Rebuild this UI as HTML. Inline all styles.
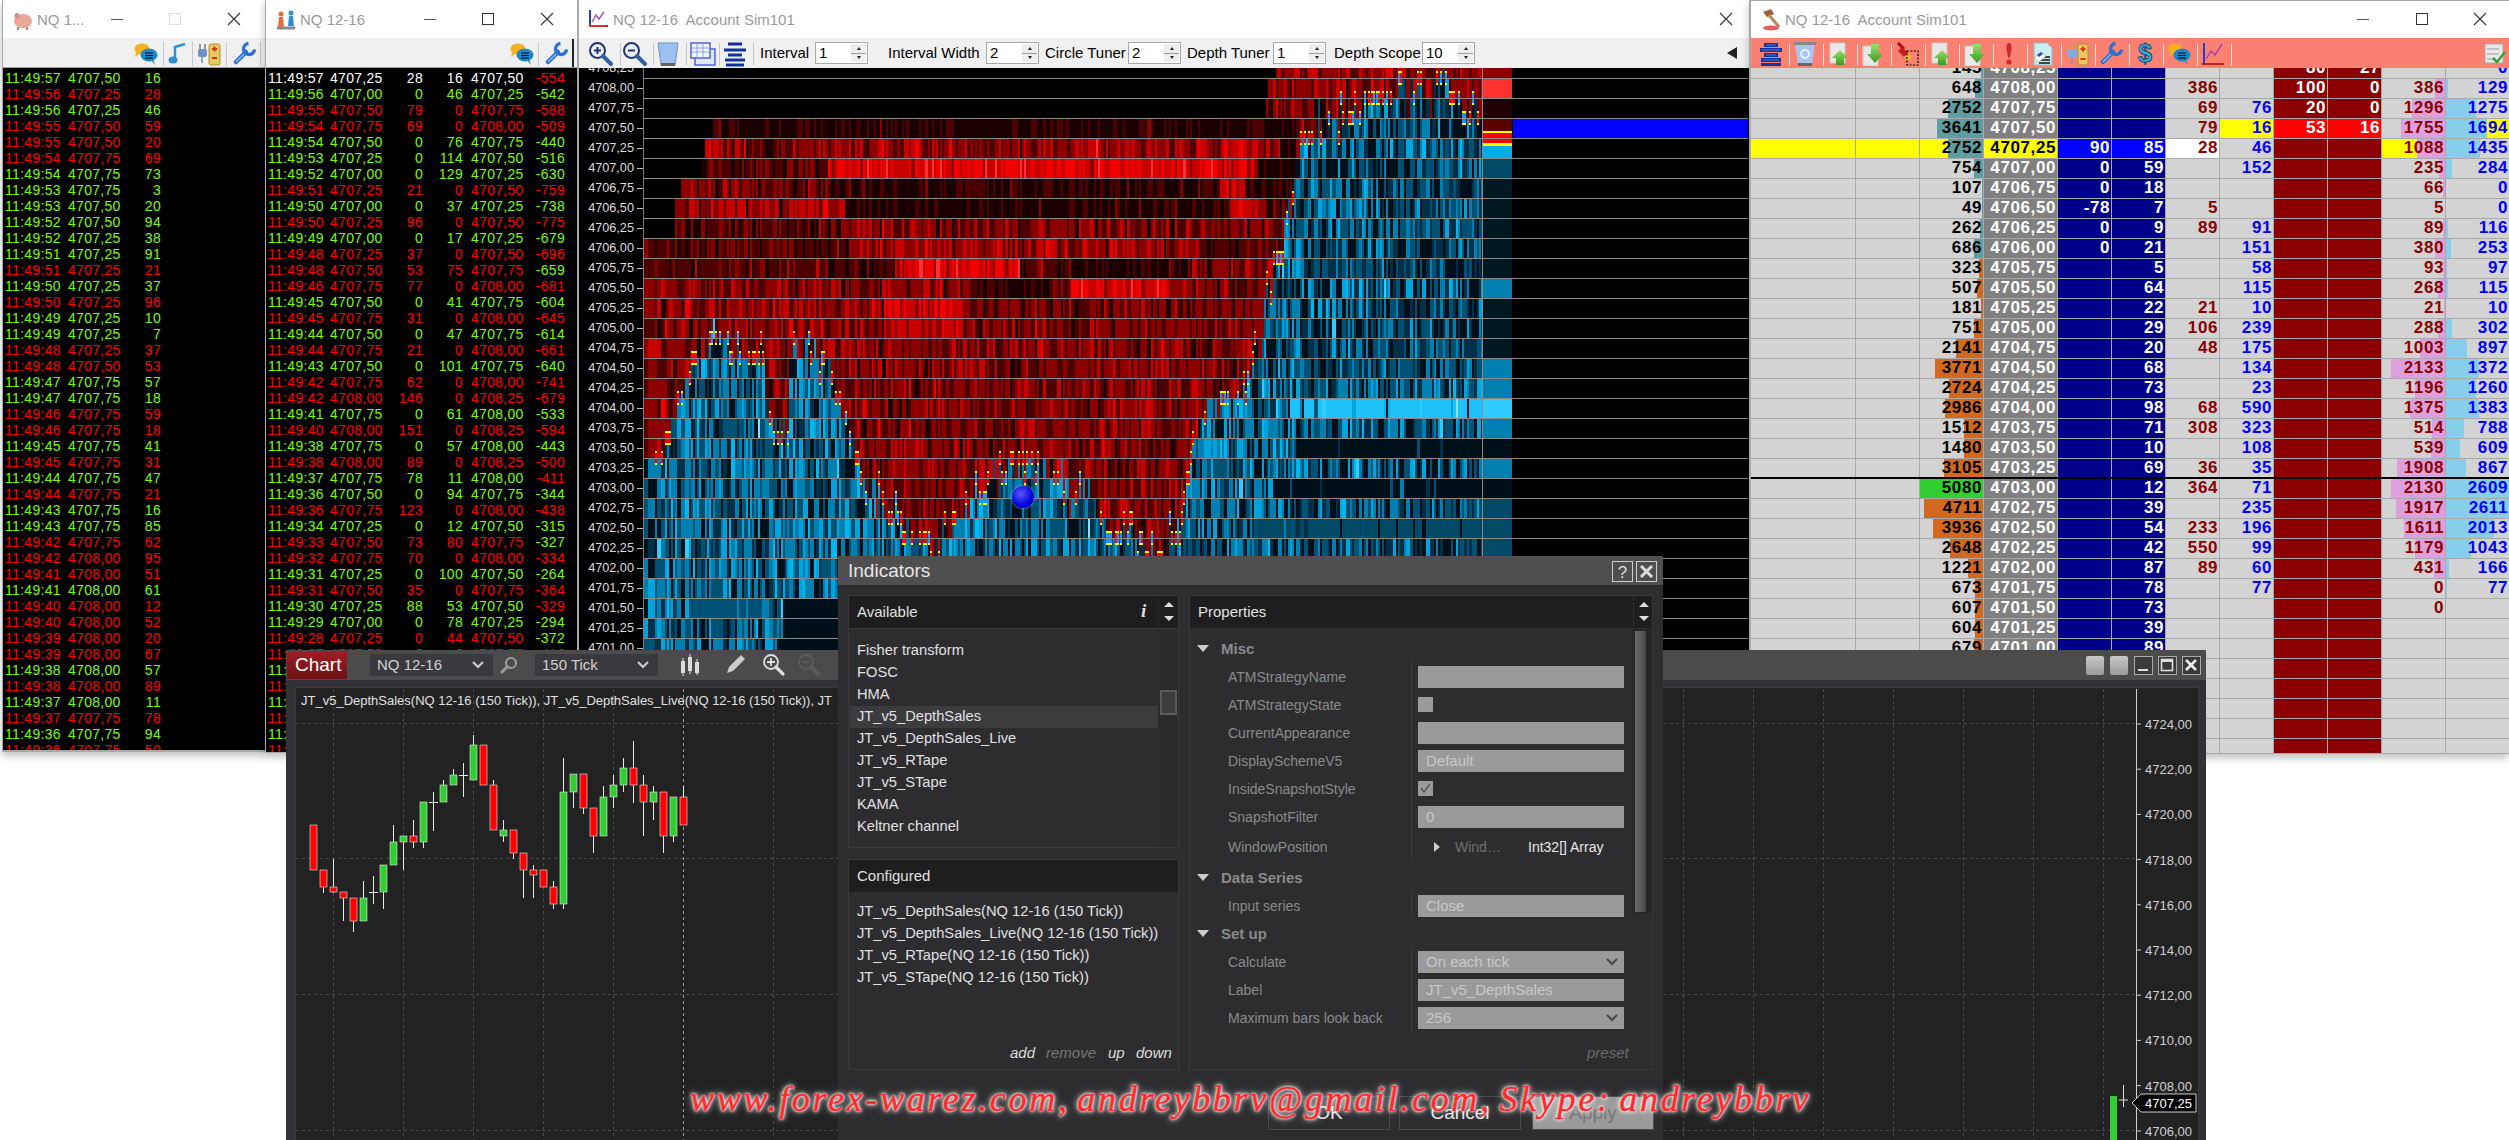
<!DOCTYPE html><html><head><meta charset="utf-8"><style>
*{margin:0;padding:0;box-sizing:border-box}
html,body{width:2509px;height:1140px;overflow:hidden;background:#fff;font-family:"Liberation Sans",sans-serif}
.a{position:absolute}
.ts{font-size:14px;line-height:16px;white-space:pre;letter-spacing:0.3px}
.g{color:#7cfc00}.r{color:#ff0000}.w{color:#fff}
.ttl{font-size:15px;line-height:20px;color:#9a9a9a;white-space:pre}
.dom{font-weight:bold;font-size:17px;line-height:20px;white-space:nowrap}
.ax{font-size:12.7px;line-height:16px;color:#ddd;white-space:nowrap}
.tb{font-size:15px;line-height:18px;color:#000;white-space:nowrap}
.dk{font-size:14px;line-height:18px;color:#e0e0e0;white-space:nowrap}
.pg{font-size:14px;line-height:18px;color:#8a8a8a;white-space:nowrap}
.clip{overflow:hidden}
</style></head><body>

<div class="a" style="left:2px;top:0px;width:264px;height:752px;background:#a9a9a9;box-shadow:0 4px 8px rgba(0,0,0,0.25);"></div>
<div class="a" style="left:3px;top:1px;width:262px;height:37px;background:#fff;"></div>
<div class="a" style="left:3px;top:38px;width:262px;height:29px;background:#f0f0f0;"></div>
<div class="a" style="left:3px;top:0px;width:262px;height:38px;background:#ffffff;"></div>
<div class="a ttl" style="left:37px;top:10px;">NQ 1...</div>
<svg class="a" style="left:227px;top:12px" width="14" height="14"><path d="M1 1L13 13M13 1L1 13" stroke="#333" stroke-width="1.1"/></svg>
<svg class="a" style="left:168px;top:12px" width="14" height="14"><rect x="1.5" y="1.5" width="11" height="11" fill="none" stroke="#ddd" stroke-width="1"/></svg>
<svg class="a" style="left:111px;top:12px" width="14" height="14"><path d="M0 7.5H12" stroke="#555" stroke-width="1"/></svg>
<svg class="a" style="left:12px;top:9px" width="22" height="22"><ellipse cx="11" cy="12" rx="9" ry="7" fill="#e8a898"/><ellipse cx="5" cy="7" rx="2.5" ry="3" fill="#d89080"/><path d="M6 18V21M15 18V21" stroke="#c08070" stroke-width="2"/></svg>
<div class="a" style="left:163px;top:42px;width:1px;height:24px;background:#c8c8c8;"></div>
<div class="a" style="left:192px;top:42px;width:1px;height:24px;background:#c8c8c8;"></div>
<div class="a" style="left:226px;top:42px;width:1px;height:24px;background:#c8c8c8;"></div>
<div class="a" style="left:260px;top:42px;width:1px;height:24px;background:#c8c8c8;"></div>
<svg class="a" style="left:133px;top:41px" width="26" height="25"><ellipse cx="9" cy="8" rx="7.5" ry="5.5" fill="#f5b020"/><path d="M3 11L2 16L7 12Z" fill="#f5b020"/><ellipse cx="16" cy="14" rx="8.5" ry="6.5" fill="#1a88c8"/><path d="M18 19L22 24L20 18Z" fill="#1a88c8"/><path d="M12 12H20M12 14.5H20M12 17H20" stroke="#000" stroke-width="1.2"/></svg>
<svg class="a" style="left:167px;top:41px" width="22" height="24"><path d="M8 19V6L18 3" stroke="#3090d0" stroke-width="2.5" fill="none"/><ellipse cx="6" cy="19" rx="4.5" ry="3.5" fill="#3090d0"/></svg>
<svg class="a" style="left:196px;top:41px" width="26" height="25"><path d="M4 3V9M9 3V9" stroke="#999" stroke-width="2"/><rect x="2" y="8" width="9" height="8" rx="2" fill="#7090c8"/><path d="M6 16V22" stroke="#889" stroke-width="1.5"/><rect x="13" y="3" width="11" height="21" rx="2" fill="#e8c860" stroke="#b09030"/><path d="M16 8H21M18.5 5.5V10.5" stroke="#e03020" stroke-width="2"/><path d="M16 17H21" stroke="#e03020" stroke-width="2"/></svg>
<svg class="a" style="left:232px;top:41px" width="24" height="25"><path d="M4 21L14 11" stroke="#2a70d0" stroke-width="4.5" stroke-linecap="round"/><path d="M4 21L14 11" stroke="#8ec0f8" stroke-width="1.2"/><path d="M16.5 2.5A5.5 5.5 0 1 0 22.5 8.5" stroke="#2a70d0" stroke-width="3.4" fill="none"/></svg>
<div class="a" style="left:3px;top:67px;width:262px;height:1px;background:#a0a0a0;"></div>
<div class="a" style="left:3px;top:68px;width:262px;height:682px;background:#000;"></div>
<div class="a clip" style="left:3px;top:68px;width:262px;height:682px">
<div class="a ts g" style="left:2px;top:2px;">11:49:57</div>
<div class="a ts g" style="left:65px;top:2px;">4707,50</div>
<div class="a ts g" style="left:-42px;top:2px;width:200px;text-align:right;">16</div>
<div class="a ts r" style="left:2px;top:18px;">11:49:56</div>
<div class="a ts r" style="left:65px;top:18px;">4707,25</div>
<div class="a ts r" style="left:-42px;top:18px;width:200px;text-align:right;">28</div>
<div class="a ts g" style="left:2px;top:34px;">11:49:56</div>
<div class="a ts g" style="left:65px;top:34px;">4707,25</div>
<div class="a ts g" style="left:-42px;top:34px;width:200px;text-align:right;">46</div>
<div class="a ts r" style="left:2px;top:50px;">11:49:55</div>
<div class="a ts r" style="left:65px;top:50px;">4707,50</div>
<div class="a ts r" style="left:-42px;top:50px;width:200px;text-align:right;">59</div>
<div class="a ts r" style="left:2px;top:66px;">11:49:55</div>
<div class="a ts r" style="left:65px;top:66px;">4707,50</div>
<div class="a ts r" style="left:-42px;top:66px;width:200px;text-align:right;">20</div>
<div class="a ts r" style="left:2px;top:82px;">11:49:54</div>
<div class="a ts r" style="left:65px;top:82px;">4707,75</div>
<div class="a ts r" style="left:-42px;top:82px;width:200px;text-align:right;">69</div>
<div class="a ts g" style="left:2px;top:98px;">11:49:54</div>
<div class="a ts g" style="left:65px;top:98px;">4707,75</div>
<div class="a ts g" style="left:-42px;top:98px;width:200px;text-align:right;">73</div>
<div class="a ts g" style="left:2px;top:114px;">11:49:53</div>
<div class="a ts g" style="left:65px;top:114px;">4707,75</div>
<div class="a ts g" style="left:-42px;top:114px;width:200px;text-align:right;">3</div>
<div class="a ts g" style="left:2px;top:130px;">11:49:53</div>
<div class="a ts g" style="left:65px;top:130px;">4707,50</div>
<div class="a ts g" style="left:-42px;top:130px;width:200px;text-align:right;">20</div>
<div class="a ts g" style="left:2px;top:146px;">11:49:52</div>
<div class="a ts g" style="left:65px;top:146px;">4707,50</div>
<div class="a ts g" style="left:-42px;top:146px;width:200px;text-align:right;">94</div>
<div class="a ts g" style="left:2px;top:162px;">11:49:52</div>
<div class="a ts g" style="left:65px;top:162px;">4707,25</div>
<div class="a ts g" style="left:-42px;top:162px;width:200px;text-align:right;">38</div>
<div class="a ts g" style="left:2px;top:178px;">11:49:51</div>
<div class="a ts g" style="left:65px;top:178px;">4707,25</div>
<div class="a ts g" style="left:-42px;top:178px;width:200px;text-align:right;">91</div>
<div class="a ts r" style="left:2px;top:194px;">11:49:51</div>
<div class="a ts r" style="left:65px;top:194px;">4707,25</div>
<div class="a ts r" style="left:-42px;top:194px;width:200px;text-align:right;">21</div>
<div class="a ts g" style="left:2px;top:210px;">11:49:50</div>
<div class="a ts g" style="left:65px;top:210px;">4707,25</div>
<div class="a ts g" style="left:-42px;top:210px;width:200px;text-align:right;">37</div>
<div class="a ts r" style="left:2px;top:226px;">11:49:50</div>
<div class="a ts r" style="left:65px;top:226px;">4707,25</div>
<div class="a ts r" style="left:-42px;top:226px;width:200px;text-align:right;">96</div>
<div class="a ts g" style="left:2px;top:242px;">11:49:49</div>
<div class="a ts g" style="left:65px;top:242px;">4707,25</div>
<div class="a ts g" style="left:-42px;top:242px;width:200px;text-align:right;">10</div>
<div class="a ts g" style="left:2px;top:258px;">11:49:49</div>
<div class="a ts g" style="left:65px;top:258px;">4707,25</div>
<div class="a ts g" style="left:-42px;top:258px;width:200px;text-align:right;">7</div>
<div class="a ts r" style="left:2px;top:274px;">11:49:48</div>
<div class="a ts r" style="left:65px;top:274px;">4707,25</div>
<div class="a ts r" style="left:-42px;top:274px;width:200px;text-align:right;">37</div>
<div class="a ts r" style="left:2px;top:290px;">11:49:48</div>
<div class="a ts r" style="left:65px;top:290px;">4707,50</div>
<div class="a ts r" style="left:-42px;top:290px;width:200px;text-align:right;">53</div>
<div class="a ts g" style="left:2px;top:306px;">11:49:47</div>
<div class="a ts g" style="left:65px;top:306px;">4707,75</div>
<div class="a ts g" style="left:-42px;top:306px;width:200px;text-align:right;">57</div>
<div class="a ts g" style="left:2px;top:322px;">11:49:47</div>
<div class="a ts g" style="left:65px;top:322px;">4707,75</div>
<div class="a ts g" style="left:-42px;top:322px;width:200px;text-align:right;">18</div>
<div class="a ts r" style="left:2px;top:338px;">11:49:46</div>
<div class="a ts r" style="left:65px;top:338px;">4707,75</div>
<div class="a ts r" style="left:-42px;top:338px;width:200px;text-align:right;">59</div>
<div class="a ts r" style="left:2px;top:354px;">11:49:46</div>
<div class="a ts r" style="left:65px;top:354px;">4707,75</div>
<div class="a ts r" style="left:-42px;top:354px;width:200px;text-align:right;">18</div>
<div class="a ts g" style="left:2px;top:370px;">11:49:45</div>
<div class="a ts g" style="left:65px;top:370px;">4707,75</div>
<div class="a ts g" style="left:-42px;top:370px;width:200px;text-align:right;">41</div>
<div class="a ts r" style="left:2px;top:386px;">11:49:45</div>
<div class="a ts r" style="left:65px;top:386px;">4707,75</div>
<div class="a ts r" style="left:-42px;top:386px;width:200px;text-align:right;">31</div>
<div class="a ts g" style="left:2px;top:402px;">11:49:44</div>
<div class="a ts g" style="left:65px;top:402px;">4707,75</div>
<div class="a ts g" style="left:-42px;top:402px;width:200px;text-align:right;">47</div>
<div class="a ts r" style="left:2px;top:418px;">11:49:44</div>
<div class="a ts r" style="left:65px;top:418px;">4707,75</div>
<div class="a ts r" style="left:-42px;top:418px;width:200px;text-align:right;">21</div>
<div class="a ts g" style="left:2px;top:434px;">11:49:43</div>
<div class="a ts g" style="left:65px;top:434px;">4707,75</div>
<div class="a ts g" style="left:-42px;top:434px;width:200px;text-align:right;">16</div>
<div class="a ts g" style="left:2px;top:450px;">11:49:43</div>
<div class="a ts g" style="left:65px;top:450px;">4707,75</div>
<div class="a ts g" style="left:-42px;top:450px;width:200px;text-align:right;">85</div>
<div class="a ts r" style="left:2px;top:466px;">11:49:42</div>
<div class="a ts r" style="left:65px;top:466px;">4707,75</div>
<div class="a ts r" style="left:-42px;top:466px;width:200px;text-align:right;">62</div>
<div class="a ts r" style="left:2px;top:482px;">11:49:42</div>
<div class="a ts r" style="left:65px;top:482px;">4708,00</div>
<div class="a ts r" style="left:-42px;top:482px;width:200px;text-align:right;">95</div>
<div class="a ts r" style="left:2px;top:498px;">11:49:41</div>
<div class="a ts r" style="left:65px;top:498px;">4708,00</div>
<div class="a ts r" style="left:-42px;top:498px;width:200px;text-align:right;">51</div>
<div class="a ts g" style="left:2px;top:514px;">11:49:41</div>
<div class="a ts g" style="left:65px;top:514px;">4708,00</div>
<div class="a ts g" style="left:-42px;top:514px;width:200px;text-align:right;">61</div>
<div class="a ts r" style="left:2px;top:530px;">11:49:40</div>
<div class="a ts r" style="left:65px;top:530px;">4708,00</div>
<div class="a ts r" style="left:-42px;top:530px;width:200px;text-align:right;">12</div>
<div class="a ts r" style="left:2px;top:546px;">11:49:40</div>
<div class="a ts r" style="left:65px;top:546px;">4708,00</div>
<div class="a ts r" style="left:-42px;top:546px;width:200px;text-align:right;">52</div>
<div class="a ts r" style="left:2px;top:562px;">11:49:39</div>
<div class="a ts r" style="left:65px;top:562px;">4708,00</div>
<div class="a ts r" style="left:-42px;top:562px;width:200px;text-align:right;">20</div>
<div class="a ts r" style="left:2px;top:578px;">11:49:39</div>
<div class="a ts r" style="left:65px;top:578px;">4708,00</div>
<div class="a ts r" style="left:-42px;top:578px;width:200px;text-align:right;">67</div>
<div class="a ts g" style="left:2px;top:594px;">11:49:38</div>
<div class="a ts g" style="left:65px;top:594px;">4708,00</div>
<div class="a ts g" style="left:-42px;top:594px;width:200px;text-align:right;">57</div>
<div class="a ts r" style="left:2px;top:610px;">11:49:38</div>
<div class="a ts r" style="left:65px;top:610px;">4708,00</div>
<div class="a ts r" style="left:-42px;top:610px;width:200px;text-align:right;">89</div>
<div class="a ts g" style="left:2px;top:626px;">11:49:37</div>
<div class="a ts g" style="left:65px;top:626px;">4708,00</div>
<div class="a ts g" style="left:-42px;top:626px;width:200px;text-align:right;">11</div>
<div class="a ts r" style="left:2px;top:642px;">11:49:37</div>
<div class="a ts r" style="left:65px;top:642px;">4707,75</div>
<div class="a ts r" style="left:-42px;top:642px;width:200px;text-align:right;">78</div>
<div class="a ts g" style="left:2px;top:658px;">11:49:36</div>
<div class="a ts g" style="left:65px;top:658px;">4707,75</div>
<div class="a ts g" style="left:-42px;top:658px;width:200px;text-align:right;">94</div>
<div class="a ts r" style="left:2px;top:674px;">11:49:36</div>
<div class="a ts r" style="left:65px;top:674px;">4707,75</div>
<div class="a ts r" style="left:-42px;top:674px;width:200px;text-align:right;">50</div>
</div>
<div class="a" style="left:265px;top:0px;width:314px;height:753px;background:#a9a9a9;box-shadow:0 4px 8px rgba(0,0,0,0.25);"></div>
<div class="a" style="left:266px;top:38px;width:312px;height:29px;background:#f0f0f0;"></div>
<div class="a" style="left:266px;top:0px;width:312px;height:38px;background:#ffffff;"></div>
<div class="a ttl" style="left:300px;top:10px;">NQ 12-16</div>
<svg class="a" style="left:540px;top:12px" width="14" height="14"><path d="M1 1L13 13M13 1L1 13" stroke="#333" stroke-width="1.1"/></svg>
<svg class="a" style="left:481px;top:12px" width="14" height="14"><rect x="1.5" y="1.5" width="11" height="11" fill="none" stroke="#333" stroke-width="1"/></svg>
<svg class="a" style="left:424px;top:12px" width="14" height="14"><path d="M0 7.5H12" stroke="#555" stroke-width="1"/></svg>
<svg class="a" style="left:274px;top:8px" width="24" height="24"><path d="M3 20H21" stroke="#888" stroke-width="3"/><circle cx="7" cy="6" r="2.5" fill="#e07040"/><path d="M5 9H9L10 19H4Z" fill="#e07040"/><circle cx="17" cy="5" r="2.5" fill="#3090d0"/><path d="M15 8H19L20 18H14Z" fill="#3090d0"/></svg>
<div class="a" style="left:538px;top:42px;width:1px;height:24px;background:#c8c8c8;"></div>
<div class="a" style="left:573px;top:42px;width:1px;height:24px;background:#c8c8c8;"></div>
<div class="a" style="left:572px;top:39px;width:2px;height:28px;background:#222;"></div>
<svg class="a" style="left:509px;top:41px" width="26" height="25"><ellipse cx="9" cy="8" rx="7.5" ry="5.5" fill="#f5b020"/><path d="M3 11L2 16L7 12Z" fill="#f5b020"/><ellipse cx="16" cy="14" rx="8.5" ry="6.5" fill="#1a88c8"/><path d="M18 19L22 24L20 18Z" fill="#1a88c8"/><path d="M12 12H20M12 14.5H20M12 17H20" stroke="#000" stroke-width="1.2"/></svg>
<svg class="a" style="left:544px;top:41px" width="24" height="25"><path d="M4 21L14 11" stroke="#2a70d0" stroke-width="4.5" stroke-linecap="round"/><path d="M4 21L14 11" stroke="#8ec0f8" stroke-width="1.2"/><path d="M16.5 2.5A5.5 5.5 0 1 0 22.5 8.5" stroke="#2a70d0" stroke-width="3.4" fill="none"/></svg>
<div class="a" style="left:266px;top:67px;width:312px;height:1px;background:#a0a0a0;"></div>
<div class="a" style="left:266px;top:68px;width:311px;height:684px;background:#000;"></div>
<div class="a clip" style="left:266px;top:68px;width:311px;height:684px">
<div class="a ts w" style="left:2px;top:2px;">11:49:57</div>
<div class="a ts w" style="left:64px;top:2px;">4707,25</div>
<div class="a ts w" style="left:-43px;top:2px;width:200px;text-align:right;">28</div>
<div class="a ts w" style="left:-3px;top:2px;width:200px;text-align:right;">16</div>
<div class="a ts w" style="left:205px;top:2px;">4707,50</div>
<div class="a ts r" style="left:99px;top:2px;width:200px;text-align:right;">-554</div>
<div class="a ts g" style="left:2px;top:18px;">11:49:56</div>
<div class="a ts g" style="left:64px;top:18px;">4707,00</div>
<div class="a ts g" style="left:-43px;top:18px;width:200px;text-align:right;">0</div>
<div class="a ts g" style="left:-3px;top:18px;width:200px;text-align:right;">46</div>
<div class="a ts g" style="left:205px;top:18px;">4707,25</div>
<div class="a ts g" style="left:99px;top:18px;width:200px;text-align:right;">-542</div>
<div class="a ts r" style="left:2px;top:34px;">11:49:55</div>
<div class="a ts r" style="left:64px;top:34px;">4707,50</div>
<div class="a ts r" style="left:-43px;top:34px;width:200px;text-align:right;">79</div>
<div class="a ts r" style="left:-3px;top:34px;width:200px;text-align:right;">0</div>
<div class="a ts r" style="left:205px;top:34px;">4707,75</div>
<div class="a ts r" style="left:99px;top:34px;width:200px;text-align:right;">-588</div>
<div class="a ts r" style="left:2px;top:50px;">11:49:54</div>
<div class="a ts r" style="left:64px;top:50px;">4707,75</div>
<div class="a ts r" style="left:-43px;top:50px;width:200px;text-align:right;">69</div>
<div class="a ts r" style="left:-3px;top:50px;width:200px;text-align:right;">0</div>
<div class="a ts r" style="left:205px;top:50px;">4708,00</div>
<div class="a ts r" style="left:99px;top:50px;width:200px;text-align:right;">-509</div>
<div class="a ts g" style="left:2px;top:66px;">11:49:54</div>
<div class="a ts g" style="left:64px;top:66px;">4707,50</div>
<div class="a ts g" style="left:-43px;top:66px;width:200px;text-align:right;">0</div>
<div class="a ts g" style="left:-3px;top:66px;width:200px;text-align:right;">76</div>
<div class="a ts g" style="left:205px;top:66px;">4707,75</div>
<div class="a ts g" style="left:99px;top:66px;width:200px;text-align:right;">-440</div>
<div class="a ts g" style="left:2px;top:82px;">11:49:53</div>
<div class="a ts g" style="left:64px;top:82px;">4707,25</div>
<div class="a ts g" style="left:-43px;top:82px;width:200px;text-align:right;">0</div>
<div class="a ts g" style="left:-3px;top:82px;width:200px;text-align:right;">114</div>
<div class="a ts g" style="left:205px;top:82px;">4707,50</div>
<div class="a ts g" style="left:99px;top:82px;width:200px;text-align:right;">-516</div>
<div class="a ts g" style="left:2px;top:98px;">11:49:52</div>
<div class="a ts g" style="left:64px;top:98px;">4707,00</div>
<div class="a ts g" style="left:-43px;top:98px;width:200px;text-align:right;">0</div>
<div class="a ts g" style="left:-3px;top:98px;width:200px;text-align:right;">129</div>
<div class="a ts g" style="left:205px;top:98px;">4707,25</div>
<div class="a ts g" style="left:99px;top:98px;width:200px;text-align:right;">-630</div>
<div class="a ts r" style="left:2px;top:114px;">11:49:51</div>
<div class="a ts r" style="left:64px;top:114px;">4707,25</div>
<div class="a ts r" style="left:-43px;top:114px;width:200px;text-align:right;">21</div>
<div class="a ts r" style="left:-3px;top:114px;width:200px;text-align:right;">0</div>
<div class="a ts r" style="left:205px;top:114px;">4707,50</div>
<div class="a ts r" style="left:99px;top:114px;width:200px;text-align:right;">-759</div>
<div class="a ts g" style="left:2px;top:130px;">11:49:50</div>
<div class="a ts g" style="left:64px;top:130px;">4707,00</div>
<div class="a ts g" style="left:-43px;top:130px;width:200px;text-align:right;">0</div>
<div class="a ts g" style="left:-3px;top:130px;width:200px;text-align:right;">37</div>
<div class="a ts g" style="left:205px;top:130px;">4707,25</div>
<div class="a ts g" style="left:99px;top:130px;width:200px;text-align:right;">-738</div>
<div class="a ts r" style="left:2px;top:146px;">11:49:50</div>
<div class="a ts r" style="left:64px;top:146px;">4707,25</div>
<div class="a ts r" style="left:-43px;top:146px;width:200px;text-align:right;">96</div>
<div class="a ts r" style="left:-3px;top:146px;width:200px;text-align:right;">0</div>
<div class="a ts r" style="left:205px;top:146px;">4707,50</div>
<div class="a ts r" style="left:99px;top:146px;width:200px;text-align:right;">-775</div>
<div class="a ts g" style="left:2px;top:162px;">11:49:49</div>
<div class="a ts g" style="left:64px;top:162px;">4707,00</div>
<div class="a ts g" style="left:-43px;top:162px;width:200px;text-align:right;">0</div>
<div class="a ts g" style="left:-3px;top:162px;width:200px;text-align:right;">17</div>
<div class="a ts g" style="left:205px;top:162px;">4707,25</div>
<div class="a ts g" style="left:99px;top:162px;width:200px;text-align:right;">-679</div>
<div class="a ts r" style="left:2px;top:178px;">11:49:48</div>
<div class="a ts r" style="left:64px;top:178px;">4707,25</div>
<div class="a ts r" style="left:-43px;top:178px;width:200px;text-align:right;">37</div>
<div class="a ts r" style="left:-3px;top:178px;width:200px;text-align:right;">0</div>
<div class="a ts r" style="left:205px;top:178px;">4707,50</div>
<div class="a ts r" style="left:99px;top:178px;width:200px;text-align:right;">-696</div>
<div class="a ts r" style="left:2px;top:194px;">11:49:48</div>
<div class="a ts r" style="left:64px;top:194px;">4707,50</div>
<div class="a ts r" style="left:-43px;top:194px;width:200px;text-align:right;">53</div>
<div class="a ts r" style="left:-3px;top:194px;width:200px;text-align:right;">75</div>
<div class="a ts r" style="left:205px;top:194px;">4707,75</div>
<div class="a ts g" style="left:99px;top:194px;width:200px;text-align:right;">-659</div>
<div class="a ts r" style="left:2px;top:210px;">11:49:46</div>
<div class="a ts r" style="left:64px;top:210px;">4707,75</div>
<div class="a ts r" style="left:-43px;top:210px;width:200px;text-align:right;">77</div>
<div class="a ts r" style="left:-3px;top:210px;width:200px;text-align:right;">0</div>
<div class="a ts r" style="left:205px;top:210px;">4708,00</div>
<div class="a ts r" style="left:99px;top:210px;width:200px;text-align:right;">-681</div>
<div class="a ts g" style="left:2px;top:226px;">11:49:45</div>
<div class="a ts g" style="left:64px;top:226px;">4707,50</div>
<div class="a ts g" style="left:-43px;top:226px;width:200px;text-align:right;">0</div>
<div class="a ts g" style="left:-3px;top:226px;width:200px;text-align:right;">41</div>
<div class="a ts g" style="left:205px;top:226px;">4707,75</div>
<div class="a ts g" style="left:99px;top:226px;width:200px;text-align:right;">-604</div>
<div class="a ts r" style="left:2px;top:242px;">11:49:45</div>
<div class="a ts r" style="left:64px;top:242px;">4707,75</div>
<div class="a ts r" style="left:-43px;top:242px;width:200px;text-align:right;">31</div>
<div class="a ts r" style="left:-3px;top:242px;width:200px;text-align:right;">0</div>
<div class="a ts r" style="left:205px;top:242px;">4708,00</div>
<div class="a ts r" style="left:99px;top:242px;width:200px;text-align:right;">-645</div>
<div class="a ts g" style="left:2px;top:258px;">11:49:44</div>
<div class="a ts g" style="left:64px;top:258px;">4707,50</div>
<div class="a ts g" style="left:-43px;top:258px;width:200px;text-align:right;">0</div>
<div class="a ts g" style="left:-3px;top:258px;width:200px;text-align:right;">47</div>
<div class="a ts g" style="left:205px;top:258px;">4707,75</div>
<div class="a ts g" style="left:99px;top:258px;width:200px;text-align:right;">-614</div>
<div class="a ts r" style="left:2px;top:274px;">11:49:44</div>
<div class="a ts r" style="left:64px;top:274px;">4707,75</div>
<div class="a ts r" style="left:-43px;top:274px;width:200px;text-align:right;">21</div>
<div class="a ts r" style="left:-3px;top:274px;width:200px;text-align:right;">0</div>
<div class="a ts r" style="left:205px;top:274px;">4708,00</div>
<div class="a ts r" style="left:99px;top:274px;width:200px;text-align:right;">-661</div>
<div class="a ts g" style="left:2px;top:290px;">11:49:43</div>
<div class="a ts g" style="left:64px;top:290px;">4707,50</div>
<div class="a ts g" style="left:-43px;top:290px;width:200px;text-align:right;">0</div>
<div class="a ts g" style="left:-3px;top:290px;width:200px;text-align:right;">101</div>
<div class="a ts g" style="left:205px;top:290px;">4707,75</div>
<div class="a ts g" style="left:99px;top:290px;width:200px;text-align:right;">-640</div>
<div class="a ts r" style="left:2px;top:306px;">11:49:42</div>
<div class="a ts r" style="left:64px;top:306px;">4707,75</div>
<div class="a ts r" style="left:-43px;top:306px;width:200px;text-align:right;">62</div>
<div class="a ts r" style="left:-3px;top:306px;width:200px;text-align:right;">0</div>
<div class="a ts r" style="left:205px;top:306px;">4708,00</div>
<div class="a ts r" style="left:99px;top:306px;width:200px;text-align:right;">-741</div>
<div class="a ts r" style="left:2px;top:322px;">11:49:42</div>
<div class="a ts r" style="left:64px;top:322px;">4708,00</div>
<div class="a ts r" style="left:-43px;top:322px;width:200px;text-align:right;">146</div>
<div class="a ts r" style="left:-3px;top:322px;width:200px;text-align:right;">0</div>
<div class="a ts r" style="left:205px;top:322px;">4708,25</div>
<div class="a ts r" style="left:99px;top:322px;width:200px;text-align:right;">-679</div>
<div class="a ts g" style="left:2px;top:338px;">11:49:41</div>
<div class="a ts g" style="left:64px;top:338px;">4707,75</div>
<div class="a ts g" style="left:-43px;top:338px;width:200px;text-align:right;">0</div>
<div class="a ts g" style="left:-3px;top:338px;width:200px;text-align:right;">61</div>
<div class="a ts g" style="left:205px;top:338px;">4708,00</div>
<div class="a ts g" style="left:99px;top:338px;width:200px;text-align:right;">-533</div>
<div class="a ts r" style="left:2px;top:354px;">11:49:40</div>
<div class="a ts r" style="left:64px;top:354px;">4708,00</div>
<div class="a ts r" style="left:-43px;top:354px;width:200px;text-align:right;">151</div>
<div class="a ts r" style="left:-3px;top:354px;width:200px;text-align:right;">0</div>
<div class="a ts r" style="left:205px;top:354px;">4708,25</div>
<div class="a ts r" style="left:99px;top:354px;width:200px;text-align:right;">-594</div>
<div class="a ts g" style="left:2px;top:370px;">11:49:38</div>
<div class="a ts g" style="left:64px;top:370px;">4707,75</div>
<div class="a ts g" style="left:-43px;top:370px;width:200px;text-align:right;">0</div>
<div class="a ts g" style="left:-3px;top:370px;width:200px;text-align:right;">57</div>
<div class="a ts g" style="left:205px;top:370px;">4708,00</div>
<div class="a ts g" style="left:99px;top:370px;width:200px;text-align:right;">-443</div>
<div class="a ts r" style="left:2px;top:386px;">11:49:38</div>
<div class="a ts r" style="left:64px;top:386px;">4708,00</div>
<div class="a ts r" style="left:-43px;top:386px;width:200px;text-align:right;">89</div>
<div class="a ts r" style="left:-3px;top:386px;width:200px;text-align:right;">0</div>
<div class="a ts r" style="left:205px;top:386px;">4708,25</div>
<div class="a ts r" style="left:99px;top:386px;width:200px;text-align:right;">-500</div>
<div class="a ts g" style="left:2px;top:402px;">11:49:37</div>
<div class="a ts g" style="left:64px;top:402px;">4707,75</div>
<div class="a ts g" style="left:-43px;top:402px;width:200px;text-align:right;">78</div>
<div class="a ts g" style="left:-3px;top:402px;width:200px;text-align:right;">11</div>
<div class="a ts g" style="left:205px;top:402px;">4708,00</div>
<div class="a ts r" style="left:99px;top:402px;width:200px;text-align:right;">-411</div>
<div class="a ts g" style="left:2px;top:418px;">11:49:36</div>
<div class="a ts g" style="left:64px;top:418px;">4707,50</div>
<div class="a ts g" style="left:-43px;top:418px;width:200px;text-align:right;">0</div>
<div class="a ts g" style="left:-3px;top:418px;width:200px;text-align:right;">94</div>
<div class="a ts g" style="left:205px;top:418px;">4707,75</div>
<div class="a ts g" style="left:99px;top:418px;width:200px;text-align:right;">-344</div>
<div class="a ts r" style="left:2px;top:434px;">11:49:36</div>
<div class="a ts r" style="left:64px;top:434px;">4707,75</div>
<div class="a ts r" style="left:-43px;top:434px;width:200px;text-align:right;">123</div>
<div class="a ts r" style="left:-3px;top:434px;width:200px;text-align:right;">0</div>
<div class="a ts r" style="left:205px;top:434px;">4708,00</div>
<div class="a ts r" style="left:99px;top:434px;width:200px;text-align:right;">-438</div>
<div class="a ts g" style="left:2px;top:450px;">11:49:34</div>
<div class="a ts g" style="left:64px;top:450px;">4707,25</div>
<div class="a ts g" style="left:-43px;top:450px;width:200px;text-align:right;">0</div>
<div class="a ts g" style="left:-3px;top:450px;width:200px;text-align:right;">12</div>
<div class="a ts g" style="left:205px;top:450px;">4707,50</div>
<div class="a ts g" style="left:99px;top:450px;width:200px;text-align:right;">-315</div>
<div class="a ts r" style="left:2px;top:466px;">11:49:33</div>
<div class="a ts r" style="left:64px;top:466px;">4707,50</div>
<div class="a ts r" style="left:-43px;top:466px;width:200px;text-align:right;">73</div>
<div class="a ts r" style="left:-3px;top:466px;width:200px;text-align:right;">80</div>
<div class="a ts r" style="left:205px;top:466px;">4707,75</div>
<div class="a ts g" style="left:99px;top:466px;width:200px;text-align:right;">-327</div>
<div class="a ts r" style="left:2px;top:482px;">11:49:32</div>
<div class="a ts r" style="left:64px;top:482px;">4707,75</div>
<div class="a ts r" style="left:-43px;top:482px;width:200px;text-align:right;">70</div>
<div class="a ts r" style="left:-3px;top:482px;width:200px;text-align:right;">0</div>
<div class="a ts r" style="left:205px;top:482px;">4708,00</div>
<div class="a ts r" style="left:99px;top:482px;width:200px;text-align:right;">-334</div>
<div class="a ts g" style="left:2px;top:498px;">11:49:31</div>
<div class="a ts g" style="left:64px;top:498px;">4707,25</div>
<div class="a ts g" style="left:-43px;top:498px;width:200px;text-align:right;">0</div>
<div class="a ts g" style="left:-3px;top:498px;width:200px;text-align:right;">100</div>
<div class="a ts g" style="left:205px;top:498px;">4707,50</div>
<div class="a ts g" style="left:99px;top:498px;width:200px;text-align:right;">-264</div>
<div class="a ts r" style="left:2px;top:514px;">11:49:31</div>
<div class="a ts r" style="left:64px;top:514px;">4707,50</div>
<div class="a ts r" style="left:-43px;top:514px;width:200px;text-align:right;">35</div>
<div class="a ts r" style="left:-3px;top:514px;width:200px;text-align:right;">0</div>
<div class="a ts r" style="left:205px;top:514px;">4707,75</div>
<div class="a ts r" style="left:99px;top:514px;width:200px;text-align:right;">-364</div>
<div class="a ts g" style="left:2px;top:530px;">11:49:30</div>
<div class="a ts g" style="left:64px;top:530px;">4707,25</div>
<div class="a ts g" style="left:-43px;top:530px;width:200px;text-align:right;">88</div>
<div class="a ts g" style="left:-3px;top:530px;width:200px;text-align:right;">53</div>
<div class="a ts g" style="left:205px;top:530px;">4707,50</div>
<div class="a ts r" style="left:99px;top:530px;width:200px;text-align:right;">-329</div>
<div class="a ts g" style="left:2px;top:546px;">11:49:29</div>
<div class="a ts g" style="left:64px;top:546px;">4707,00</div>
<div class="a ts g" style="left:-43px;top:546px;width:200px;text-align:right;">0</div>
<div class="a ts g" style="left:-3px;top:546px;width:200px;text-align:right;">78</div>
<div class="a ts g" style="left:205px;top:546px;">4707,25</div>
<div class="a ts g" style="left:99px;top:546px;width:200px;text-align:right;">-294</div>
<div class="a ts r" style="left:2px;top:562px;">11:49:28</div>
<div class="a ts r" style="left:64px;top:562px;">4707,25</div>
<div class="a ts r" style="left:-43px;top:562px;width:200px;text-align:right;">0</div>
<div class="a ts r" style="left:-3px;top:562px;width:200px;text-align:right;">44</div>
<div class="a ts r" style="left:205px;top:562px;">4707,50</div>
<div class="a ts g" style="left:99px;top:562px;width:200px;text-align:right;">-372</div>
<div class="a ts r" style="left:2px;top:578px;">11:49:27</div>
<div class="a ts r" style="left:64px;top:578px;">4707,50</div>
<div class="a ts r" style="left:-43px;top:578px;width:200px;text-align:right;">0</div>
<div class="a ts r" style="left:-3px;top:578px;width:200px;text-align:right;">0</div>
<div class="a ts r" style="left:205px;top:578px;">4707,75</div>
<div class="a ts r" style="left:99px;top:578px;width:200px;text-align:right;">-416</div>
<div class="a ts g" style="left:2px;top:594px;">11:49:26</div>
<div class="a ts g" style="left:64px;top:594px;">4707,25</div>
<div class="a ts g" style="left:-43px;top:594px;width:200px;text-align:right;">0</div>
<div class="a ts g" style="left:-3px;top:594px;width:200px;text-align:right;">11</div>
<div class="a ts g" style="left:205px;top:594px;">4707,50</div>
<div class="a ts g" style="left:99px;top:594px;width:200px;text-align:right;">-405</div>
<div class="a ts r" style="left:2px;top:610px;">11:49:26</div>
<div class="a ts r" style="left:64px;top:610px;">4707,50</div>
<div class="a ts r" style="left:-43px;top:610px;width:200px;text-align:right;">0</div>
<div class="a ts r" style="left:-3px;top:610px;width:200px;text-align:right;">0</div>
<div class="a ts r" style="left:205px;top:610px;">4707,75</div>
<div class="a ts r" style="left:99px;top:610px;width:200px;text-align:right;">-416</div>
<div class="a ts g" style="left:2px;top:626px;">11:49:25</div>
<div class="a ts g" style="left:64px;top:626px;">4707,25</div>
<div class="a ts g" style="left:-43px;top:626px;width:200px;text-align:right;">0</div>
<div class="a ts g" style="left:-3px;top:626px;width:200px;text-align:right;">11</div>
<div class="a ts g" style="left:205px;top:626px;">4707,50</div>
<div class="a ts g" style="left:99px;top:626px;width:200px;text-align:right;">-405</div>
<div class="a ts r" style="left:2px;top:642px;">11:49:25</div>
<div class="a ts r" style="left:64px;top:642px;">4707,50</div>
<div class="a ts r" style="left:-43px;top:642px;width:200px;text-align:right;">0</div>
<div class="a ts r" style="left:-3px;top:642px;width:200px;text-align:right;">0</div>
<div class="a ts r" style="left:205px;top:642px;">4707,75</div>
<div class="a ts r" style="left:99px;top:642px;width:200px;text-align:right;">-416</div>
<div class="a ts g" style="left:2px;top:658px;">11:49:24</div>
<div class="a ts g" style="left:64px;top:658px;">4707,25</div>
<div class="a ts g" style="left:-43px;top:658px;width:200px;text-align:right;">0</div>
<div class="a ts g" style="left:-3px;top:658px;width:200px;text-align:right;">11</div>
<div class="a ts g" style="left:205px;top:658px;">4707,50</div>
<div class="a ts g" style="left:99px;top:658px;width:200px;text-align:right;">-405</div>
<div class="a ts r" style="left:2px;top:674px;">11:49:24</div>
<div class="a ts r" style="left:64px;top:674px;">4707,50</div>
<div class="a ts r" style="left:-43px;top:674px;width:200px;text-align:right;">0</div>
<div class="a ts r" style="left:-3px;top:674px;width:200px;text-align:right;">0</div>
<div class="a ts r" style="left:205px;top:674px;">4707,75</div>
<div class="a ts r" style="left:99px;top:674px;width:200px;text-align:right;">-416</div>
</div>
<div class="a" style="left:577px;top:0px;width:1175px;height:650px;background:#a9a9a9;"></div>
<div class="a" style="left:579px;top:0px;width:1172px;height:38px;background:#ffffff;"></div>
<div class="a ttl" style="left:613px;top:10px;">NQ 12-16  Account Sim101</div>
<svg class="a" style="left:1719px;top:12px" width="14" height="14"><path d="M1 1L13 13M13 1L1 13" stroke="#333" stroke-width="1.1"/></svg>
<svg class="a" style="left:587px;top:9px" width="22" height="20"><path d="M3 1V17H21" stroke="#2040c0" stroke-width="2" fill="none"/><path d="M2 17H20" stroke="#e03030" stroke-width="2"/><path d="M5 13L9 6L12 10L17 3" stroke="#b050b0" stroke-width="1.5" fill="none"/></svg>
<div class="a" style="left:579px;top:38px;width:1171px;height:30px;background:#f0f0f0;"></div>
<svg class="a" style="left:588px;top:41px" width="26" height="26"><circle cx="9.5" cy="9.5" r="7.5" fill="#e8f0ff" stroke="#203070" stroke-width="2"/><path d="M15 15L23 23" stroke="#3060a0" stroke-width="4" stroke-linecap="round"/><path d="M6 9.5H13M9.5 6V13" stroke="#203070" stroke-width="2"/></svg>
<svg class="a" style="left:622px;top:41px" width="26" height="26"><circle cx="9.5" cy="9.5" r="7.5" fill="#e8f0ff" stroke="#203070" stroke-width="2"/><path d="M15 15L23 23" stroke="#3060a0" stroke-width="4" stroke-linecap="round"/><path d="M6 9.5H13" stroke="#203070" stroke-width="2"/></svg>
<svg class="a" style="left:656px;top:41px" width="24" height="26"><path d="M2 2H22L19 24H5Z" fill="#9cc0f0" stroke="#7090c0"/><rect x="5" y="22" width="14" height="3" fill="#666"/></svg>
<svg class="a" style="left:690px;top:41px" width="26" height="26"><rect x="5" y="8" width="20" height="16" fill="#dde8ff" stroke="#5060e0" stroke-width="1.5"/><rect x="1" y="2" width="19" height="15" fill="#eef4ff" stroke="#5060e0" stroke-width="1.5"/><path d="M1 7H20M1 11H20M7 2V17M13 2V17" stroke="#8090e0" stroke-width="0.8"/></svg>
<svg class="a" style="left:722px;top:41px" width="26" height="26"><path d="M6 3H20M2 9H24M6 14H20M3 19H23M4 24H22" stroke="#1030a0" stroke-width="3"/></svg>
<div class="a" style="left:620px;top:43px;width:1px;height:22px;background:#c8c8c8;"></div>
<div class="a" style="left:653px;top:43px;width:1px;height:22px;background:#c8c8c8;"></div>
<div class="a" style="left:686px;top:43px;width:1px;height:22px;background:#c8c8c8;"></div>
<div class="a" style="left:719px;top:43px;width:1px;height:22px;background:#c8c8c8;"></div>
<div class="a" style="left:753px;top:43px;width:1px;height:22px;background:#c8c8c8;"></div>
<div class="a tb" style="left:760px;top:44px;">Interval</div>
<div class="a" style="left:815px;top:42px;width:53px;height:22px;background:#a8a8a8;"></div>
<div class="a" style="left:816px;top:43px;width:51px;height:20px;background:#fff;"></div>
<div class="a tb" style="left:819px;top:44px;">1</div>
<div class="a" style="left:851px;top:44px;width:15px;height:18px;background:#eee;"></div>
<div class="a" style="left:851px;top:53px;width:15px;height:1px;background:#999;"></div>
<svg class="a" style="left:855px;top:46px" width="8" height="14"><path d="M4 1L6 4H2Z M2 10H6L4 13Z" fill="#222"/></svg>
<div class="a tb" style="left:888px;top:44px;">Interval Width</div>
<div class="a" style="left:986px;top:42px;width:53px;height:22px;background:#a8a8a8;"></div>
<div class="a" style="left:987px;top:43px;width:51px;height:20px;background:#fff;"></div>
<div class="a tb" style="left:990px;top:44px;">2</div>
<div class="a" style="left:1022px;top:44px;width:15px;height:18px;background:#eee;"></div>
<div class="a" style="left:1022px;top:53px;width:15px;height:1px;background:#999;"></div>
<svg class="a" style="left:1026px;top:46px" width="8" height="14"><path d="M4 1L6 4H2Z M2 10H6L4 13Z" fill="#222"/></svg>
<div class="a tb" style="left:1045px;top:44px;">Circle Tuner</div>
<div class="a" style="left:1128px;top:42px;width:53px;height:22px;background:#a8a8a8;"></div>
<div class="a" style="left:1129px;top:43px;width:51px;height:20px;background:#fff;"></div>
<div class="a tb" style="left:1132px;top:44px;">2</div>
<div class="a" style="left:1164px;top:44px;width:15px;height:18px;background:#eee;"></div>
<div class="a" style="left:1164px;top:53px;width:15px;height:1px;background:#999;"></div>
<svg class="a" style="left:1168px;top:46px" width="8" height="14"><path d="M4 1L6 4H2Z M2 10H6L4 13Z" fill="#222"/></svg>
<div class="a tb" style="left:1187px;top:44px;">Depth Tuner</div>
<div class="a" style="left:1273px;top:42px;width:53px;height:22px;background:#a8a8a8;"></div>
<div class="a" style="left:1274px;top:43px;width:51px;height:20px;background:#fff;"></div>
<div class="a tb" style="left:1277px;top:44px;">1</div>
<div class="a" style="left:1309px;top:44px;width:15px;height:18px;background:#eee;"></div>
<div class="a" style="left:1309px;top:53px;width:15px;height:1px;background:#999;"></div>
<svg class="a" style="left:1313px;top:46px" width="8" height="14"><path d="M4 1L6 4H2Z M2 10H6L4 13Z" fill="#222"/></svg>
<div class="a tb" style="left:1334px;top:44px;">Depth Scope</div>
<div class="a" style="left:1422px;top:42px;width:53px;height:22px;background:#a8a8a8;"></div>
<div class="a" style="left:1423px;top:43px;width:51px;height:20px;background:#fff;"></div>
<div class="a tb" style="left:1426px;top:44px;">10</div>
<div class="a" style="left:1458px;top:44px;width:15px;height:18px;background:#eee;"></div>
<div class="a" style="left:1458px;top:53px;width:15px;height:1px;background:#999;"></div>
<svg class="a" style="left:1462px;top:46px" width="8" height="14"><path d="M4 1L6 4H2Z M2 10H6L4 13Z" fill="#222"/></svg>
<svg class="a" style="left:1726px;top:46px" width="12" height="14"><path d="M1 7L11 1V13Z" fill="#222"/></svg>
<div class="a" style="left:579px;top:68px;width:1171px;height:582px;background:#000;"></div>
<div class="a" style="left:643px;top:68px;width:1px;height:582px;background:#7a7a7a;"></div>
<div class="a ax clip" style="left:580px;top:68px;width:54px;height:8px;text-align:right"><div style="position:relative;top:-8px">4708,25</div></div>
<div class="a ax clip" style="left:580px;top:80px;width:54px;height:16px;text-align:right"><div style="position:relative;top:0px">4708,00</div></div>
<div class="a" style="left:637px;top:88px;width:6px;height:1px;background:#bbb;"></div>
<div class="a ax clip" style="left:580px;top:100px;width:54px;height:16px;text-align:right"><div style="position:relative;top:0px">4707,75</div></div>
<div class="a" style="left:637px;top:108px;width:6px;height:1px;background:#bbb;"></div>
<div class="a ax clip" style="left:580px;top:120px;width:54px;height:16px;text-align:right"><div style="position:relative;top:0px">4707,50</div></div>
<div class="a" style="left:637px;top:128px;width:6px;height:1px;background:#bbb;"></div>
<div class="a ax clip" style="left:580px;top:140px;width:54px;height:16px;text-align:right"><div style="position:relative;top:0px">4707,25</div></div>
<div class="a" style="left:637px;top:148px;width:6px;height:1px;background:#bbb;"></div>
<div class="a ax clip" style="left:580px;top:160px;width:54px;height:16px;text-align:right"><div style="position:relative;top:0px">4707,00</div></div>
<div class="a" style="left:637px;top:168px;width:6px;height:1px;background:#bbb;"></div>
<div class="a ax clip" style="left:580px;top:180px;width:54px;height:16px;text-align:right"><div style="position:relative;top:0px">4706,75</div></div>
<div class="a" style="left:637px;top:188px;width:6px;height:1px;background:#bbb;"></div>
<div class="a ax clip" style="left:580px;top:200px;width:54px;height:16px;text-align:right"><div style="position:relative;top:0px">4706,50</div></div>
<div class="a" style="left:637px;top:208px;width:6px;height:1px;background:#bbb;"></div>
<div class="a ax clip" style="left:580px;top:220px;width:54px;height:16px;text-align:right"><div style="position:relative;top:0px">4706,25</div></div>
<div class="a" style="left:637px;top:228px;width:6px;height:1px;background:#bbb;"></div>
<div class="a ax clip" style="left:580px;top:240px;width:54px;height:16px;text-align:right"><div style="position:relative;top:0px">4706,00</div></div>
<div class="a" style="left:637px;top:248px;width:6px;height:1px;background:#bbb;"></div>
<div class="a ax clip" style="left:580px;top:260px;width:54px;height:16px;text-align:right"><div style="position:relative;top:0px">4705,75</div></div>
<div class="a" style="left:637px;top:268px;width:6px;height:1px;background:#bbb;"></div>
<div class="a ax clip" style="left:580px;top:280px;width:54px;height:16px;text-align:right"><div style="position:relative;top:0px">4705,50</div></div>
<div class="a" style="left:637px;top:288px;width:6px;height:1px;background:#bbb;"></div>
<div class="a ax clip" style="left:580px;top:300px;width:54px;height:16px;text-align:right"><div style="position:relative;top:0px">4705,25</div></div>
<div class="a" style="left:637px;top:308px;width:6px;height:1px;background:#bbb;"></div>
<div class="a ax clip" style="left:580px;top:320px;width:54px;height:16px;text-align:right"><div style="position:relative;top:0px">4705,00</div></div>
<div class="a" style="left:637px;top:328px;width:6px;height:1px;background:#bbb;"></div>
<div class="a ax clip" style="left:580px;top:340px;width:54px;height:16px;text-align:right"><div style="position:relative;top:0px">4704,75</div></div>
<div class="a" style="left:637px;top:348px;width:6px;height:1px;background:#bbb;"></div>
<div class="a ax clip" style="left:580px;top:360px;width:54px;height:16px;text-align:right"><div style="position:relative;top:0px">4704,50</div></div>
<div class="a" style="left:637px;top:368px;width:6px;height:1px;background:#bbb;"></div>
<div class="a ax clip" style="left:580px;top:380px;width:54px;height:16px;text-align:right"><div style="position:relative;top:0px">4704,25</div></div>
<div class="a" style="left:637px;top:388px;width:6px;height:1px;background:#bbb;"></div>
<div class="a ax clip" style="left:580px;top:400px;width:54px;height:16px;text-align:right"><div style="position:relative;top:0px">4704,00</div></div>
<div class="a" style="left:637px;top:408px;width:6px;height:1px;background:#bbb;"></div>
<div class="a ax clip" style="left:580px;top:420px;width:54px;height:16px;text-align:right"><div style="position:relative;top:0px">4703,75</div></div>
<div class="a" style="left:637px;top:428px;width:6px;height:1px;background:#bbb;"></div>
<div class="a ax clip" style="left:580px;top:440px;width:54px;height:16px;text-align:right"><div style="position:relative;top:0px">4703,50</div></div>
<div class="a" style="left:637px;top:448px;width:6px;height:1px;background:#bbb;"></div>
<div class="a ax clip" style="left:580px;top:460px;width:54px;height:16px;text-align:right"><div style="position:relative;top:0px">4703,25</div></div>
<div class="a" style="left:637px;top:468px;width:6px;height:1px;background:#bbb;"></div>
<div class="a ax clip" style="left:580px;top:480px;width:54px;height:16px;text-align:right"><div style="position:relative;top:0px">4703,00</div></div>
<div class="a" style="left:637px;top:488px;width:6px;height:1px;background:#bbb;"></div>
<div class="a ax clip" style="left:580px;top:500px;width:54px;height:16px;text-align:right"><div style="position:relative;top:0px">4702,75</div></div>
<div class="a" style="left:637px;top:508px;width:6px;height:1px;background:#bbb;"></div>
<div class="a ax clip" style="left:580px;top:520px;width:54px;height:16px;text-align:right"><div style="position:relative;top:0px">4702,50</div></div>
<div class="a" style="left:637px;top:528px;width:6px;height:1px;background:#bbb;"></div>
<div class="a ax clip" style="left:580px;top:540px;width:54px;height:16px;text-align:right"><div style="position:relative;top:0px">4702,25</div></div>
<div class="a" style="left:637px;top:548px;width:6px;height:1px;background:#bbb;"></div>
<div class="a ax clip" style="left:580px;top:560px;width:54px;height:16px;text-align:right"><div style="position:relative;top:0px">4702,00</div></div>
<div class="a" style="left:637px;top:568px;width:6px;height:1px;background:#bbb;"></div>
<div class="a ax clip" style="left:580px;top:580px;width:54px;height:16px;text-align:right"><div style="position:relative;top:0px">4701,75</div></div>
<div class="a" style="left:637px;top:588px;width:6px;height:1px;background:#bbb;"></div>
<div class="a ax clip" style="left:580px;top:600px;width:54px;height:16px;text-align:right"><div style="position:relative;top:0px">4701,50</div></div>
<div class="a" style="left:637px;top:608px;width:6px;height:1px;background:#bbb;"></div>
<div class="a ax clip" style="left:580px;top:620px;width:54px;height:16px;text-align:right"><div style="position:relative;top:0px">4701,25</div></div>
<div class="a" style="left:637px;top:628px;width:6px;height:1px;background:#bbb;"></div>
<div class="a ax clip" style="left:580px;top:640px;width:54px;height:16px;text-align:right"><div style="position:relative;top:0px">4701,00</div></div>
<div class="a" style="left:637px;top:648px;width:6px;height:1px;background:#bbb;"></div>
<svg class="a" style="left:0;top:0" width="1760" height="650"><path fill="#8c0000" d="M644 239h4v19h-4zM644 279h4v19h-4zM644 299h4v19h-4zM644 339h4v19h-4zM644 399h4v19h-4zM648 279h7v19h-7zM648 299h7v19h-7zM648 359h7v19h-7zM648 379h7v19h-7zM648 399h7v19h-7zM648 419h7v19h-7zM648 439h7v19h-7zM655 259h2v19h-2zM655 319h2v19h-2zM655 359h2v19h-2zM655 379h2v19h-2zM655 399h2v19h-2zM655 419h2v19h-2zM655 439h2v19h-2zM657 279h4v19h-4zM657 379h4v19h-4zM657 419h4v19h-4zM661 379h4v19h-4zM661 419h4v19h-4zM665 279h2v19h-2zM665 379h2v19h-2zM665 419h2v19h-2zM667 239h2v19h-2zM667 279h2v19h-2zM667 299h2v19h-2zM667 319h2v19h-2zM667 339h2v19h-2zM667 359h2v19h-2zM667 399h2v19h-2zM667 419h2v19h-2zM669 279h2v19h-2zM669 319h2v19h-2zM669 339h2v19h-2zM669 359h2v19h-2zM669 419h2v19h-2zM671 279h2v19h-2zM671 319h2v19h-2zM671 339h2v19h-2zM673 259h2v19h-2zM673 279h2v19h-2zM673 299h2v19h-2zM673 339h2v19h-2zM673 399h2v19h-2zM675 199h2v19h-2zM675 219h2v19h-2zM675 239h2v19h-2zM675 279h2v19h-2zM675 299h2v19h-2zM675 339h2v19h-2zM675 379h2v19h-2zM675 399h2v19h-2zM677 199h4v19h-4zM677 299h4v19h-4zM677 319h4v19h-4zM677 339h4v19h-4zM677 359h4v19h-4zM681 179h4v19h-4zM681 199h4v19h-4zM681 219h4v19h-4zM681 339h4v19h-4zM681 359h4v19h-4zM685 179h4v19h-4zM685 279h4v19h-4zM685 319h4v19h-4zM689 179h2v19h-2zM689 359h2v19h-2zM691 219h2v19h-2zM691 239h2v19h-2zM691 279h2v19h-2zM691 299h2v19h-2zM691 339h2v19h-2zM693 179h2v19h-2zM693 319h2v19h-2zM693 339h2v19h-2zM695 179h2v19h-2zM695 199h2v19h-2zM695 279h2v19h-2zM695 339h2v19h-2zM697 239h2v19h-2zM697 279h2v19h-2zM697 299h2v19h-2zM699 179h2v19h-2zM699 279h2v19h-2zM701 179h4v19h-4zM701 199h4v19h-4zM701 219h4v19h-4zM701 319h4v19h-4zM705 279h2v19h-2zM705 299h2v19h-2zM705 319h2v19h-2zM707 179h2v19h-2zM707 199h2v19h-2zM707 239h2v19h-2zM707 299h2v19h-2zM707 339h2v19h-2zM709 159h2v19h-2zM709 279h2v19h-2zM711 139h2v19h-2zM711 159h2v19h-2zM711 239h2v19h-2zM711 319h2v19h-2zM713 179h2v19h-2zM713 199h2v19h-2zM713 239h2v19h-2zM715 199h4v19h-4zM719 119h2v19h-2zM719 139h2v19h-2zM719 159h2v19h-2zM719 219h2v19h-2zM719 239h2v19h-2zM719 259h2v19h-2zM719 279h2v19h-2zM719 319h2v19h-2zM721 219h2v19h-2zM721 319h2v19h-2zM723 199h4v19h-4zM723 319h4v19h-4zM727 179h2v19h-2zM727 239h2v19h-2zM727 319h2v19h-2zM729 139h2v19h-2zM729 219h2v19h-2zM729 259h2v19h-2zM729 299h2v19h-2zM731 179h4v19h-4zM731 239h4v19h-4zM731 299h4v19h-4zM731 339h4v19h-4zM735 219h2v19h-2zM735 259h2v19h-2zM735 279h2v19h-2zM735 299h2v19h-2zM735 339h2v19h-2zM737 179h2v19h-2zM737 239h2v19h-2zM737 259h2v19h-2zM737 279h2v19h-2zM737 299h2v19h-2zM737 319h2v19h-2zM739 139h3v19h-3zM739 279h3v19h-3zM739 319h3v19h-3zM742 159h2v19h-2zM742 179h2v19h-2zM742 299h2v19h-2zM742 319h2v19h-2zM744 179h2v19h-2zM744 219h2v19h-2zM744 239h2v19h-2zM744 299h2v19h-2zM744 319h2v19h-2zM744 339h2v19h-2zM746 179h2v19h-2zM746 219h2v19h-2zM746 239h2v19h-2zM746 339h2v19h-2zM748 179h2v19h-2zM748 199h2v19h-2zM748 279h2v19h-2zM748 299h2v19h-2zM750 159h2v19h-2zM750 219h2v19h-2zM750 239h2v19h-2zM750 299h2v19h-2zM752 139h2v19h-2zM752 179h2v19h-2zM752 199h2v19h-2zM754 199h2v19h-2zM754 279h2v19h-2zM754 319h2v19h-2zM756 159h2v19h-2zM756 179h2v19h-2zM756 199h2v19h-2zM756 219h2v19h-2zM756 279h2v19h-2zM756 299h2v19h-2zM756 319h2v19h-2zM758 199h2v19h-2zM758 299h2v19h-2zM758 319h2v19h-2zM760 139h2v19h-2zM760 159h2v19h-2zM760 219h2v19h-2zM760 259h2v19h-2zM760 299h2v19h-2zM760 319h2v19h-2zM762 179h3v19h-3zM762 199h3v19h-3zM762 259h3v19h-3zM762 319h3v19h-3zM765 159h4v19h-4zM765 279h4v19h-4zM765 299h4v19h-4zM765 339h4v19h-4zM769 199h4v19h-4zM769 239h4v19h-4zM769 279h4v19h-4zM769 319h4v19h-4zM769 399h4v19h-4zM773 179h2v19h-2zM773 199h2v19h-2zM773 219h2v19h-2zM773 279h2v19h-2zM773 319h2v19h-2zM773 339h2v19h-2zM773 379h2v19h-2zM773 399h2v19h-2zM773 419h2v19h-2zM775 179h2v19h-2zM775 219h2v19h-2zM775 279h2v19h-2zM775 299h2v19h-2zM775 339h2v19h-2zM775 359h2v19h-2zM777 139h2v19h-2zM777 239h2v19h-2zM777 319h2v19h-2zM779 179h2v19h-2zM779 219h2v19h-2zM779 259h2v19h-2zM779 339h2v19h-2zM779 359h2v19h-2zM779 379h2v19h-2zM781 139h2v19h-2zM781 179h2v19h-2zM781 299h2v19h-2zM781 419h2v19h-2zM783 139h2v19h-2zM783 199h2v19h-2zM783 239h2v19h-2zM783 279h2v19h-2zM783 339h2v19h-2zM785 179h2v19h-2zM785 199h2v19h-2zM785 239h2v19h-2zM785 319h2v19h-2zM785 399h2v19h-2zM785 419h2v19h-2zM787 159h2v19h-2zM787 179h2v19h-2zM787 279h2v19h-2zM787 319h2v19h-2zM787 339h2v19h-2zM787 359h2v19h-2zM787 379h2v19h-2zM787 419h2v19h-2zM789 159h4v19h-4zM789 239h4v19h-4zM789 339h4v19h-4zM793 199h2v19h-2zM793 259h2v19h-2zM793 279h2v19h-2zM793 299h2v19h-2zM795 139h2v19h-2zM797 199h2v19h-2zM797 219h2v19h-2zM797 319h2v19h-2zM799 139h4v19h-4zM799 159h4v19h-4zM799 279h4v19h-4zM799 339h4v19h-4zM803 139h2v19h-2zM803 179h2v19h-2zM803 319h2v19h-2zM805 139h3v19h-3zM805 159h3v19h-3zM805 199h3v19h-3zM805 299h3v19h-3zM808 139h2v19h-2zM808 219h2v19h-2zM808 279h2v19h-2zM810 139h4v19h-4zM810 159h4v19h-4zM810 179h4v19h-4zM810 279h4v19h-4zM810 299h4v19h-4zM814 179h2v19h-2zM814 199h2v19h-2zM814 319h2v19h-2zM816 139h3v19h-3zM816 279h3v19h-3zM816 319h3v19h-3zM816 339h3v19h-3zM819 319h2v19h-2zM819 359h2v19h-2zM821 179h2v19h-2zM821 199h2v19h-2zM821 279h2v19h-2zM821 299h2v19h-2zM823 219h2v19h-2zM823 319h2v19h-2zM825 139h3v19h-3zM825 179h3v19h-3zM825 259h3v19h-3zM825 279h3v19h-3zM825 299h3v19h-3zM825 339h3v19h-3zM828 199h3v19h-3zM828 299h3v19h-3zM831 139h4v19h-4zM831 159h4v19h-4zM831 199h4v19h-4zM831 219h4v19h-4zM831 299h4v19h-4zM831 319h4v19h-4zM831 359h4v19h-4zM835 199h2v19h-2zM835 279h2v19h-2zM835 319h2v19h-2zM837 139h2v19h-2zM837 199h2v19h-2zM837 279h2v19h-2zM837 319h2v19h-2zM837 359h2v19h-2zM837 379h2v19h-2zM841 139h4v19h-4zM841 219h4v19h-4zM841 299h4v19h-4zM841 359h4v19h-4zM841 379h4v19h-4zM841 399h4v19h-4zM845 139h4v19h-4zM845 219h4v19h-4zM845 279h4v19h-4zM845 339h4v19h-4zM845 399h4v19h-4zM849 179h2v19h-2zM849 239h2v19h-2zM849 299h2v19h-2zM851 219h4v19h-4zM851 239h4v19h-4zM851 279h4v19h-4zM851 299h4v19h-4zM851 339h4v19h-4zM851 359h4v19h-4zM855 219h2v19h-2zM855 239h2v19h-2zM855 259h2v19h-2zM855 279h2v19h-2zM855 419h2v19h-2zM855 439h2v19h-2zM857 139h3v19h-3zM857 239h3v19h-3zM857 279h3v19h-3zM857 299h3v19h-3zM857 379h3v19h-3zM860 159h3v19h-3zM860 219h3v19h-3zM860 339h3v19h-3zM860 359h3v19h-3zM860 399h3v19h-3zM863 179h2v19h-2zM863 239h2v19h-2zM863 299h2v19h-2zM863 319h2v19h-2zM863 359h2v19h-2zM863 379h2v19h-2zM863 439h2v19h-2zM863 459h2v19h-2zM865 219h2v19h-2zM865 239h2v19h-2zM865 299h2v19h-2zM865 339h2v19h-2zM865 359h2v19h-2zM865 379h2v19h-2zM865 479h2v19h-2zM867 219h2v19h-2zM867 259h2v19h-2zM867 359h2v19h-2zM867 399h2v19h-2zM867 419h2v19h-2zM867 459h2v19h-2zM869 139h3v19h-3zM869 239h3v19h-3zM869 279h3v19h-3zM869 299h3v19h-3zM869 319h3v19h-3zM869 339h3v19h-3zM869 379h3v19h-3zM869 419h3v19h-3zM869 439h3v19h-3zM872 139h2v19h-2zM872 279h2v19h-2zM872 319h2v19h-2zM872 339h2v19h-2zM872 399h2v19h-2zM872 439h2v19h-2zM872 459h2v19h-2zM874 139h2v19h-2zM874 219h2v19h-2zM874 239h2v19h-2zM874 359h2v19h-2zM874 399h2v19h-2zM876 139h2v19h-2zM876 219h2v19h-2zM876 299h2v19h-2zM876 399h2v19h-2zM876 419h2v19h-2zM876 439h2v19h-2zM878 219h2v19h-2zM878 279h2v19h-2zM878 319h2v19h-2zM878 379h2v19h-2zM878 399h2v19h-2zM878 439h2v19h-2zM878 459h2v19h-2zM880 119h2v19h-2zM880 299h2v19h-2zM880 319h2v19h-2zM880 419h2v19h-2zM880 439h2v19h-2zM880 479h2v19h-2zM882 239h2v19h-2zM882 439h2v19h-2zM882 459h2v19h-2zM882 479h2v19h-2zM884 139h2v19h-2zM884 219h2v19h-2zM884 339h2v19h-2zM884 379h2v19h-2zM884 399h2v19h-2zM884 439h2v19h-2zM884 499h2v19h-2zM886 219h2v19h-2zM886 239h2v19h-2zM886 279h2v19h-2zM886 319h2v19h-2zM886 339h2v19h-2zM886 379h2v19h-2zM886 479h2v19h-2zM886 499h2v19h-2zM888 139h3v19h-3zM888 219h3v19h-3zM888 239h3v19h-3zM888 319h3v19h-3zM888 359h3v19h-3zM888 419h3v19h-3zM888 459h3v19h-3zM888 479h3v19h-3zM891 139h2v19h-2zM891 279h2v19h-2zM891 339h2v19h-2zM891 359h2v19h-2zM891 459h2v19h-2zM891 499h2v19h-2zM893 279h2v19h-2zM893 339h2v19h-2zM893 399h2v19h-2zM893 419h2v19h-2zM893 439h2v19h-2zM895 279h2v19h-2zM895 319h2v19h-2zM895 339h2v19h-2zM895 379h2v19h-2zM895 399h2v19h-2zM895 459h2v19h-2zM897 139h3v19h-3zM897 259h3v19h-3zM897 279h3v19h-3zM897 339h3v19h-3zM897 359h3v19h-3zM897 379h3v19h-3zM897 439h3v19h-3zM897 459h3v19h-3zM900 279h2v19h-2zM900 299h2v19h-2zM900 339h2v19h-2zM900 359h2v19h-2zM900 379h2v19h-2zM900 419h2v19h-2zM900 459h2v19h-2zM902 259h2v19h-2zM902 279h2v19h-2zM902 379h2v19h-2zM902 399h2v19h-2zM902 419h2v19h-2zM902 459h2v19h-2zM902 499h2v19h-2zM902 519h2v19h-2zM904 239h2v19h-2zM904 279h2v19h-2zM904 339h2v19h-2zM904 359h2v19h-2zM904 399h2v19h-2zM904 419h2v19h-2zM906 239h3v19h-3zM906 319h3v19h-3zM906 339h3v19h-3zM906 359h3v19h-3zM906 419h3v19h-3zM906 439h3v19h-3zM906 459h3v19h-3zM906 479h3v19h-3zM906 499h3v19h-3zM909 139h2v19h-2zM909 219h2v19h-2zM909 239h2v19h-2zM909 359h2v19h-2zM909 439h2v19h-2zM909 459h2v19h-2zM909 479h2v19h-2zM909 499h2v19h-2zM911 159h4v19h-4zM911 239h4v19h-4zM911 279h4v19h-4zM911 339h4v19h-4zM911 359h4v19h-4zM911 399h4v19h-4zM911 439h4v19h-4zM911 459h4v19h-4zM911 519h4v19h-4zM915 219h4v19h-4zM915 279h4v19h-4zM915 299h4v19h-4zM915 339h4v19h-4zM915 399h4v19h-4zM915 419h4v19h-4zM915 459h4v19h-4zM915 479h4v19h-4zM919 219h2v19h-2zM919 279h2v19h-2zM919 339h2v19h-2zM919 399h2v19h-2zM919 439h2v19h-2zM919 499h2v19h-2zM921 139h2v19h-2zM921 239h2v19h-2zM921 299h2v19h-2zM921 319h2v19h-2zM921 359h2v19h-2zM921 379h2v19h-2zM921 399h2v19h-2zM921 419h2v19h-2zM921 519h2v19h-2zM923 219h2v19h-2zM923 239h2v19h-2zM923 319h2v19h-2zM923 339h2v19h-2zM923 399h2v19h-2zM923 419h2v19h-2zM923 439h2v19h-2zM923 459h2v19h-2zM925 179h3v19h-3zM925 219h3v19h-3zM925 339h3v19h-3zM925 379h3v19h-3zM925 439h3v19h-3zM925 459h3v19h-3zM925 479h3v19h-3zM925 499h3v19h-3zM928 139h2v19h-2zM928 239h2v19h-2zM928 299h2v19h-2zM928 319h2v19h-2zM928 359h2v19h-2zM928 519h2v19h-2zM930 219h2v19h-2zM930 319h2v19h-2zM930 459h2v19h-2zM930 479h2v19h-2zM930 499h2v19h-2zM930 519h2v19h-2zM932 219h2v19h-2zM932 239h2v19h-2zM932 299h2v19h-2zM932 339h2v19h-2zM932 379h2v19h-2zM932 399h2v19h-2zM932 419h2v19h-2zM932 439h2v19h-2zM932 479h2v19h-2zM932 499h2v19h-2zM932 519h2v19h-2zM932 539h2v19h-2zM934 139h2v19h-2zM934 219h2v19h-2zM934 239h2v19h-2zM934 259h2v19h-2zM934 279h2v19h-2zM934 339h2v19h-2zM934 359h2v19h-2zM934 419h2v19h-2zM934 439h2v19h-2zM934 459h2v19h-2zM934 479h2v19h-2zM934 519h2v19h-2zM934 559h2v19h-2zM936 239h2v19h-2zM936 319h2v19h-2zM936 359h2v19h-2zM936 399h2v19h-2zM936 439h2v19h-2zM936 459h2v19h-2zM936 499h2v19h-2zM936 519h2v19h-2zM938 279h2v19h-2zM938 299h2v19h-2zM938 319h2v19h-2zM938 339h2v19h-2zM938 359h2v19h-2zM938 419h2v19h-2zM938 439h2v19h-2zM938 479h2v19h-2zM938 499h2v19h-2zM940 139h2v19h-2zM940 239h2v19h-2zM940 319h2v19h-2zM940 339h2v19h-2zM940 379h2v19h-2zM940 399h2v19h-2zM940 439h2v19h-2zM940 459h2v19h-2zM940 479h2v19h-2zM942 239h2v19h-2zM942 279h2v19h-2zM942 419h2v19h-2zM942 459h2v19h-2zM942 499h2v19h-2zM944 139h2v19h-2zM944 399h2v19h-2zM944 419h2v19h-2zM944 439h2v19h-2zM946 139h3v19h-3zM946 219h3v19h-3zM946 239h3v19h-3zM946 259h3v19h-3zM946 379h3v19h-3zM946 439h3v19h-3zM946 479h3v19h-3zM949 219h3v19h-3zM949 279h3v19h-3zM949 339h3v19h-3zM949 359h3v19h-3zM949 399h3v19h-3zM949 459h3v19h-3zM949 479h3v19h-3zM949 519h3v19h-3zM952 139h2v19h-2zM952 159h2v19h-2zM952 279h2v19h-2zM952 399h2v19h-2zM952 419h2v19h-2zM952 459h2v19h-2zM952 479h2v19h-2zM954 139h2v19h-2zM954 279h2v19h-2zM954 319h2v19h-2zM954 379h2v19h-2zM954 399h2v19h-2zM954 419h2v19h-2zM954 459h2v19h-2zM956 239h2v19h-2zM956 279h2v19h-2zM956 359h2v19h-2zM956 379h2v19h-2zM956 399h2v19h-2zM956 419h2v19h-2zM956 499h2v19h-2zM958 139h2v19h-2zM958 239h2v19h-2zM958 339h2v19h-2zM958 379h2v19h-2zM958 419h2v19h-2zM958 439h2v19h-2zM958 459h2v19h-2zM958 479h2v19h-2zM960 139h3v19h-3zM960 239h3v19h-3zM960 379h3v19h-3zM960 459h3v19h-3zM960 499h3v19h-3zM963 139h2v19h-2zM963 279h2v19h-2zM963 299h2v19h-2zM963 379h2v19h-2zM963 399h2v19h-2zM963 479h2v19h-2zM965 219h2v19h-2zM965 279h2v19h-2zM965 299h2v19h-2zM965 399h2v19h-2zM965 459h2v19h-2zM967 219h3v19h-3zM967 239h3v19h-3zM967 279h3v19h-3zM967 299h3v19h-3zM967 319h3v19h-3zM967 359h3v19h-3zM967 399h3v19h-3zM967 419h3v19h-3zM967 499h3v19h-3zM970 139h3v19h-3zM970 319h3v19h-3zM970 339h3v19h-3zM970 379h3v19h-3zM970 419h3v19h-3zM970 439h3v19h-3zM970 479h3v19h-3zM973 219h2v19h-2zM973 239h2v19h-2zM973 339h2v19h-2zM973 359h2v19h-2zM973 379h2v19h-2zM973 399h2v19h-2zM973 419h2v19h-2zM975 139h2v19h-2zM975 359h2v19h-2zM977 239h2v19h-2zM977 299h2v19h-2zM977 399h2v19h-2zM977 439h2v19h-2zM977 479h2v19h-2zM979 139h4v19h-4zM979 239h4v19h-4zM979 299h4v19h-4zM979 379h4v19h-4zM979 439h4v19h-4zM983 159h2v19h-2zM983 219h2v19h-2zM983 379h2v19h-2zM985 219h2v19h-2zM985 239h2v19h-2zM985 259h2v19h-2zM985 319h2v19h-2zM985 399h2v19h-2zM985 419h2v19h-2zM985 439h2v19h-2zM985 479h2v19h-2zM987 139h2v19h-2zM987 239h2v19h-2zM987 319h2v19h-2zM987 359h2v19h-2zM987 379h2v19h-2zM987 399h2v19h-2zM987 419h2v19h-2zM987 439h2v19h-2zM987 459h2v19h-2zM989 239h4v19h-4zM989 299h4v19h-4zM989 339h4v19h-4zM989 419h4v19h-4zM993 259h2v19h-2zM993 319h2v19h-2zM993 379h2v19h-2zM993 399h2v19h-2zM993 439h2v19h-2zM995 139h2v19h-2zM995 219h2v19h-2zM995 239h2v19h-2zM995 319h2v19h-2zM995 379h2v19h-2zM997 139h2v19h-2zM997 219h2v19h-2zM997 319h2v19h-2zM997 379h2v19h-2zM997 479h2v19h-2zM999 219h2v19h-2zM999 299h2v19h-2zM999 319h2v19h-2zM999 399h2v19h-2zM1001 219h2v19h-2zM1001 299h2v19h-2zM1001 379h2v19h-2zM1001 419h2v19h-2zM1003 139h2v19h-2zM1003 299h2v19h-2zM1003 339h2v19h-2zM1003 459h2v19h-2zM1005 139h3v19h-3zM1005 259h3v19h-3zM1005 299h3v19h-3zM1005 319h3v19h-3zM1005 339h3v19h-3zM1005 359h3v19h-3zM1005 379h3v19h-3zM1008 139h2v19h-2zM1008 219h2v19h-2zM1008 359h2v19h-2zM1008 379h2v19h-2zM1008 419h2v19h-2zM1008 439h2v19h-2zM1010 179h2v19h-2zM1010 299h2v19h-2zM1010 399h2v19h-2zM1010 439h2v19h-2zM1012 139h3v19h-3zM1012 219h3v19h-3zM1012 299h3v19h-3zM1012 339h3v19h-3zM1012 439h3v19h-3zM1015 139h3v19h-3zM1015 219h3v19h-3zM1015 299h3v19h-3zM1015 379h3v19h-3zM1015 419h3v19h-3zM1015 459h3v19h-3zM1018 299h2v19h-2zM1018 319h2v19h-2zM1018 399h2v19h-2zM1018 419h2v19h-2zM1020 239h2v19h-2zM1020 379h2v19h-2zM1020 399h2v19h-2zM1020 439h2v19h-2zM1022 139h2v19h-2zM1022 339h2v19h-2zM1022 359h2v19h-2zM1022 379h2v19h-2zM1022 399h2v19h-2zM1024 239h2v19h-2zM1024 319h2v19h-2zM1024 359h2v19h-2zM1024 399h2v19h-2zM1024 419h2v19h-2zM1024 459h2v19h-2zM1026 139h2v19h-2zM1026 239h2v19h-2zM1026 299h2v19h-2zM1026 319h2v19h-2zM1026 419h2v19h-2zM1026 439h2v19h-2zM1028 139h3v19h-3zM1028 319h3v19h-3zM1028 339h3v19h-3zM1028 379h3v19h-3zM1028 439h3v19h-3zM1031 219h4v19h-4zM1031 299h4v19h-4zM1031 339h4v19h-4zM1031 379h4v19h-4zM1031 439h4v19h-4zM1035 219h2v19h-2zM1035 239h2v19h-2zM1035 399h2v19h-2zM1035 439h2v19h-2zM1037 139h2v19h-2zM1037 219h2v19h-2zM1037 259h2v19h-2zM1037 319h2v19h-2zM1037 379h2v19h-2zM1037 399h2v19h-2zM1037 419h2v19h-2zM1039 199h2v19h-2zM1039 259h2v19h-2zM1039 299h2v19h-2zM1039 359h2v19h-2zM1039 419h2v19h-2zM1041 299h2v19h-2zM1041 319h2v19h-2zM1041 359h2v19h-2zM1041 399h2v19h-2zM1041 419h2v19h-2zM1043 219h3v19h-3zM1043 239h3v19h-3zM1043 299h3v19h-3zM1043 339h3v19h-3zM1043 399h3v19h-3zM1043 419h3v19h-3zM1043 439h3v19h-3zM1046 139h4v19h-4zM1046 339h4v19h-4zM1046 359h4v19h-4zM1046 399h4v19h-4zM1046 439h4v19h-4zM1046 459h4v19h-4zM1050 219h3v19h-3zM1050 319h3v19h-3zM1050 359h3v19h-3zM1053 219h4v19h-4zM1053 279h4v19h-4zM1053 299h4v19h-4zM1053 359h4v19h-4zM1053 399h4v19h-4zM1053 419h4v19h-4zM1053 439h4v19h-4zM1053 459h4v19h-4zM1057 139h4v19h-4zM1057 219h4v19h-4zM1057 299h4v19h-4zM1057 319h4v19h-4zM1057 339h4v19h-4zM1057 399h4v19h-4zM1057 419h4v19h-4zM1057 439h4v19h-4zM1061 139h2v19h-2zM1061 219h2v19h-2zM1061 239h2v19h-2zM1061 279h2v19h-2zM1061 319h2v19h-2zM1061 419h2v19h-2zM1061 439h2v19h-2zM1063 139h2v19h-2zM1063 219h2v19h-2zM1063 239h2v19h-2zM1063 299h2v19h-2zM1063 339h2v19h-2zM1063 359h2v19h-2zM1063 379h2v19h-2zM1063 399h2v19h-2zM1063 419h2v19h-2zM1065 139h2v19h-2zM1065 219h2v19h-2zM1065 359h2v19h-2zM1065 439h2v19h-2zM1067 239h2v19h-2zM1067 339h2v19h-2zM1067 379h2v19h-2zM1067 399h2v19h-2zM1067 439h2v19h-2zM1067 459h2v19h-2zM1069 219h2v19h-2zM1069 259h2v19h-2zM1069 279h2v19h-2zM1069 319h2v19h-2zM1069 339h2v19h-2zM1069 379h2v19h-2zM1069 419h2v19h-2zM1069 479h2v19h-2zM1071 139h4v19h-4zM1071 219h4v19h-4zM1071 339h4v19h-4zM1071 399h4v19h-4zM1071 419h4v19h-4zM1071 479h4v19h-4zM1075 239h4v19h-4zM1075 359h4v19h-4zM1075 379h4v19h-4zM1075 439h4v19h-4zM1075 479h4v19h-4zM1079 139h2v19h-2zM1079 319h2v19h-2zM1079 359h2v19h-2zM1079 419h2v19h-2zM1079 459h2v19h-2zM1081 219h2v19h-2zM1081 239h2v19h-2zM1081 359h2v19h-2zM1081 379h2v19h-2zM1081 399h2v19h-2zM1081 419h2v19h-2zM1081 479h2v19h-2zM1083 139h2v19h-2zM1083 219h2v19h-2zM1083 339h2v19h-2zM1083 359h2v19h-2zM1083 419h2v19h-2zM1083 439h2v19h-2zM1085 139h3v19h-3zM1085 219h3v19h-3zM1085 339h3v19h-3zM1085 359h3v19h-3zM1085 379h3v19h-3zM1085 419h3v19h-3zM1088 219h2v19h-2zM1088 239h2v19h-2zM1088 339h2v19h-2zM1088 379h2v19h-2zM1088 419h2v19h-2zM1090 159h4v19h-4zM1090 239h4v19h-4zM1090 299h4v19h-4zM1090 359h4v19h-4zM1090 399h4v19h-4zM1090 459h4v19h-4zM1094 239h2v19h-2zM1094 299h2v19h-2zM1094 399h2v19h-2zM1094 419h2v19h-2zM1096 359h2v19h-2zM1096 379h2v19h-2zM1096 399h2v19h-2zM1096 459h2v19h-2zM1098 219h2v19h-2zM1098 239h2v19h-2zM1098 299h2v19h-2zM1098 319h2v19h-2zM1098 379h2v19h-2zM1098 419h2v19h-2zM1098 459h2v19h-2zM1098 479h2v19h-2zM1100 139h2v19h-2zM1100 219h2v19h-2zM1100 239h2v19h-2zM1100 319h2v19h-2zM1100 339h2v19h-2zM1100 439h2v19h-2zM1100 459h2v19h-2zM1100 479h2v19h-2zM1102 139h2v19h-2zM1102 239h2v19h-2zM1102 319h2v19h-2zM1102 499h2v19h-2zM1104 239h2v19h-2zM1104 279h2v19h-2zM1104 319h2v19h-2zM1104 339h2v19h-2zM1104 359h2v19h-2zM1104 399h2v19h-2zM1104 419h2v19h-2zM1106 219h2v19h-2zM1106 279h2v19h-2zM1106 299h2v19h-2zM1106 319h2v19h-2zM1106 359h2v19h-2zM1106 399h2v19h-2zM1106 439h2v19h-2zM1106 459h2v19h-2zM1106 479h2v19h-2zM1106 499h2v19h-2zM1108 239h2v19h-2zM1108 319h2v19h-2zM1108 339h2v19h-2zM1108 359h2v19h-2zM1108 379h2v19h-2zM1110 139h3v19h-3zM1110 359h3v19h-3zM1110 399h3v19h-3zM1110 419h3v19h-3zM1110 439h3v19h-3zM1110 479h3v19h-3zM1110 519h3v19h-3zM1113 139h2v19h-2zM1113 239h2v19h-2zM1113 299h2v19h-2zM1113 439h2v19h-2zM1113 479h2v19h-2zM1115 139h2v19h-2zM1115 199h2v19h-2zM1115 299h2v19h-2zM1115 319h2v19h-2zM1115 339h2v19h-2zM1115 359h2v19h-2zM1115 379h2v19h-2zM1115 399h2v19h-2zM1115 459h2v19h-2zM1115 479h2v19h-2zM1115 519h2v19h-2zM1117 219h3v19h-3zM1117 239h3v19h-3zM1117 299h3v19h-3zM1117 319h3v19h-3zM1117 339h3v19h-3zM1117 379h3v19h-3zM1117 499h3v19h-3zM1120 139h3v19h-3zM1120 239h3v19h-3zM1120 319h3v19h-3zM1120 339h3v19h-3zM1120 359h3v19h-3zM1120 379h3v19h-3zM1120 419h3v19h-3zM1120 439h3v19h-3zM1120 479h3v19h-3zM1123 139h2v19h-2zM1123 219h2v19h-2zM1123 299h2v19h-2zM1123 319h2v19h-2zM1123 339h2v19h-2zM1123 359h2v19h-2zM1123 379h2v19h-2zM1123 399h2v19h-2zM1123 439h2v19h-2zM1123 459h2v19h-2zM1123 479h2v19h-2zM1125 239h2v19h-2zM1125 319h2v19h-2zM1125 339h2v19h-2zM1125 359h2v19h-2zM1125 399h2v19h-2zM1125 419h2v19h-2zM1125 519h2v19h-2zM1127 179h2v19h-2zM1127 279h2v19h-2zM1127 319h2v19h-2zM1127 359h2v19h-2zM1127 399h2v19h-2zM1127 419h2v19h-2zM1127 499h2v19h-2zM1127 519h2v19h-2zM1129 139h2v19h-2zM1129 219h2v19h-2zM1129 239h2v19h-2zM1129 399h2v19h-2zM1129 459h2v19h-2zM1129 479h2v19h-2zM1129 499h2v19h-2zM1131 299h2v19h-2zM1131 339h2v19h-2zM1131 379h2v19h-2zM1131 399h2v19h-2zM1131 419h2v19h-2zM1131 439h2v19h-2zM1131 459h2v19h-2zM1133 219h2v19h-2zM1133 299h2v19h-2zM1133 319h2v19h-2zM1133 359h2v19h-2zM1133 399h2v19h-2zM1133 419h2v19h-2zM1133 439h2v19h-2zM1135 139h2v19h-2zM1135 239h2v19h-2zM1135 299h2v19h-2zM1135 319h2v19h-2zM1135 379h2v19h-2zM1135 419h2v19h-2zM1135 439h2v19h-2zM1135 499h2v19h-2zM1135 519h2v19h-2zM1137 139h2v19h-2zM1137 299h2v19h-2zM1137 419h2v19h-2zM1137 499h2v19h-2zM1139 139h2v19h-2zM1139 199h2v19h-2zM1139 239h2v19h-2zM1139 359h2v19h-2zM1139 459h2v19h-2zM1139 499h2v19h-2zM1141 219h4v19h-4zM1141 239h4v19h-4zM1141 279h4v19h-4zM1141 319h4v19h-4zM1141 339h4v19h-4zM1141 359h4v19h-4zM1141 399h4v19h-4zM1145 139h2v19h-2zM1145 219h2v19h-2zM1145 239h2v19h-2zM1145 339h2v19h-2zM1145 359h2v19h-2zM1145 419h2v19h-2zM1145 439h2v19h-2zM1145 459h2v19h-2zM1145 479h2v19h-2zM1145 539h2v19h-2zM1147 119h4v19h-4zM1147 299h4v19h-4zM1147 539h4v19h-4zM1151 139h2v19h-2zM1151 219h2v19h-2zM1151 239h2v19h-2zM1151 319h2v19h-2zM1151 379h2v19h-2zM1151 419h2v19h-2zM1151 459h2v19h-2zM1151 519h2v19h-2zM1153 139h2v19h-2zM1153 239h2v19h-2zM1153 299h2v19h-2zM1153 319h2v19h-2zM1153 339h2v19h-2zM1153 399h2v19h-2zM1153 419h2v19h-2zM1153 439h2v19h-2zM1153 459h2v19h-2zM1153 499h2v19h-2zM1153 519h2v19h-2zM1153 539h2v19h-2zM1153 559h2v19h-2zM1155 219h2v19h-2zM1155 299h2v19h-2zM1155 379h2v19h-2zM1155 399h2v19h-2zM1155 519h2v19h-2zM1157 139h2v19h-2zM1157 319h2v19h-2zM1157 339h2v19h-2zM1157 359h2v19h-2zM1157 419h2v19h-2zM1157 479h2v19h-2zM1159 139h2v19h-2zM1159 239h2v19h-2zM1159 299h2v19h-2zM1159 319h2v19h-2zM1159 339h2v19h-2zM1159 359h2v19h-2zM1159 399h2v19h-2zM1159 419h2v19h-2zM1159 459h2v19h-2zM1159 479h2v19h-2zM1159 499h2v19h-2zM1161 139h3v19h-3zM1161 219h3v19h-3zM1161 299h3v19h-3zM1161 439h3v19h-3zM1161 459h3v19h-3zM1161 519h3v19h-3zM1164 139h2v19h-2zM1164 299h2v19h-2zM1164 339h2v19h-2zM1164 359h2v19h-2zM1164 459h2v19h-2zM1164 479h2v19h-2zM1164 499h2v19h-2zM1166 239h3v19h-3zM1166 319h3v19h-3zM1166 339h3v19h-3zM1166 399h3v19h-3zM1166 439h3v19h-3zM1166 499h3v19h-3zM1166 519h3v19h-3zM1169 259h2v19h-2zM1169 279h2v19h-2zM1169 319h2v19h-2zM1169 459h2v19h-2zM1169 499h2v19h-2zM1171 279h4v19h-4zM1171 299h4v19h-4zM1171 319h4v19h-4zM1171 339h4v19h-4zM1171 359h4v19h-4zM1171 379h4v19h-4zM1171 419h4v19h-4zM1171 459h4v19h-4zM1171 479h4v19h-4zM1175 159h2v19h-2zM1175 199h2v19h-2zM1175 239h2v19h-2zM1175 279h2v19h-2zM1175 399h2v19h-2zM1175 459h2v19h-2zM1177 139h2v19h-2zM1177 239h2v19h-2zM1177 279h2v19h-2zM1177 319h2v19h-2zM1177 439h2v19h-2zM1177 479h2v19h-2zM1179 279h2v19h-2zM1179 319h2v19h-2zM1179 339h2v19h-2zM1179 359h2v19h-2zM1179 419h2v19h-2zM1179 439h2v19h-2zM1179 499h2v19h-2zM1181 179h2v19h-2zM1181 279h2v19h-2zM1181 319h2v19h-2zM1181 359h2v19h-2zM1181 399h2v19h-2zM1181 439h2v19h-2zM1183 139h3v19h-3zM1183 239h3v19h-3zM1183 299h3v19h-3zM1183 319h3v19h-3zM1183 359h3v19h-3zM1183 399h3v19h-3zM1183 419h3v19h-3zM1183 439h3v19h-3zM1183 459h3v19h-3zM1186 139h2v19h-2zM1186 279h2v19h-2zM1186 319h2v19h-2zM1186 339h2v19h-2zM1186 439h2v19h-2zM1188 139h2v19h-2zM1188 239h2v19h-2zM1188 259h2v19h-2zM1188 279h2v19h-2zM1188 319h2v19h-2zM1188 339h2v19h-2zM1188 359h2v19h-2zM1188 399h2v19h-2zM1188 419h2v19h-2zM1188 459h2v19h-2zM1190 159h2v19h-2zM1190 219h2v19h-2zM1190 239h2v19h-2zM1190 279h2v19h-2zM1190 299h2v19h-2zM1190 359h2v19h-2zM1190 379h2v19h-2zM1190 399h2v19h-2zM1192 239h4v19h-4zM1192 319h4v19h-4zM1192 359h4v19h-4zM1192 399h4v19h-4zM1192 419h4v19h-4zM1196 259h2v19h-2zM1196 299h2v19h-2zM1196 339h2v19h-2zM1196 359h2v19h-2zM1198 179h2v19h-2zM1198 239h2v19h-2zM1198 279h2v19h-2zM1198 299h2v19h-2zM1198 319h2v19h-2zM1198 359h2v19h-2zM1198 379h2v19h-2zM1198 399h2v19h-2zM1200 219h2v19h-2zM1200 259h2v19h-2zM1200 279h2v19h-2zM1200 299h2v19h-2zM1200 319h2v19h-2zM1200 339h2v19h-2zM1200 379h2v19h-2zM1200 399h2v19h-2zM1202 279h2v19h-2zM1202 379h2v19h-2zM1204 219h3v19h-3zM1204 259h3v19h-3zM1204 319h3v19h-3zM1204 399h3v19h-3zM1207 139h4v19h-4zM1207 279h4v19h-4zM1207 299h4v19h-4zM1207 359h4v19h-4zM1207 379h4v19h-4zM1211 139h2v19h-2zM1211 219h2v19h-2zM1211 279h2v19h-2zM1211 299h2v19h-2zM1211 359h2v19h-2zM1211 379h2v19h-2zM1213 219h2v19h-2zM1213 259h2v19h-2zM1215 139h2v19h-2zM1215 259h2v19h-2zM1215 279h2v19h-2zM1215 299h2v19h-2zM1215 339h2v19h-2zM1215 359h2v19h-2zM1217 219h3v19h-3zM1217 259h3v19h-3zM1217 339h3v19h-3zM1217 399h3v19h-3zM1220 139h2v19h-2zM1220 259h2v19h-2zM1220 279h2v19h-2zM1220 319h2v19h-2zM1220 339h2v19h-2zM1222 159h2v19h-2zM1222 259h2v19h-2zM1222 279h2v19h-2zM1222 299h2v19h-2zM1222 379h2v19h-2zM1224 219h3v19h-3zM1224 259h3v19h-3zM1224 299h3v19h-3zM1227 159h2v19h-2zM1227 259h2v19h-2zM1227 279h2v19h-2zM1227 299h2v19h-2zM1227 319h2v19h-2zM1227 359h2v19h-2zM1229 139h2v19h-2zM1229 199h2v19h-2zM1229 299h2v19h-2zM1229 379h2v19h-2zM1231 159h2v19h-2zM1231 219h2v19h-2zM1231 319h2v19h-2zM1231 339h2v19h-2zM1231 379h2v19h-2zM1233 219h2v19h-2zM1235 219h2v19h-2zM1235 259h2v19h-2zM1235 279h2v19h-2zM1235 299h2v19h-2zM1235 339h2v19h-2zM1235 379h2v19h-2zM1237 179h2v19h-2zM1237 219h2v19h-2zM1237 259h2v19h-2zM1237 299h2v19h-2zM1237 319h2v19h-2zM1237 339h2v19h-2zM1239 299h4v19h-4zM1239 339h4v19h-4zM1243 219h2v19h-2zM1243 319h2v19h-2zM1243 359h2v19h-2zM1245 299h2v19h-2zM1245 319h2v19h-2zM1245 339h2v19h-2zM1247 139h3v19h-3zM1247 159h3v19h-3zM1247 239h3v19h-3zM1247 279h3v19h-3zM1247 299h3v19h-3zM1247 319h3v19h-3zM1250 139h2v19h-2zM1250 219h2v19h-2zM1250 259h2v19h-2zM1250 279h2v19h-2zM1250 319h2v19h-2zM1252 199h2v19h-2zM1252 219h2v19h-2zM1252 259h2v19h-2zM1252 299h2v19h-2zM1254 159h4v19h-4zM1254 219h4v19h-4zM1254 299h4v19h-4zM1254 319h4v19h-4zM1258 139h4v19h-4zM1258 199h4v19h-4zM1258 219h4v19h-4zM1258 239h4v19h-4zM1258 259h4v19h-4zM1258 279h4v19h-4zM1258 299h4v19h-4zM1258 319h4v19h-4zM1258 339h4v19h-4zM1262 139h2v19h-2zM1262 199h2v19h-2zM1262 279h2v19h-2zM1262 299h2v19h-2zM1262 319h2v19h-2zM1264 199h2v19h-2zM1264 219h2v19h-2zM1264 279h2v19h-2zM1266 99h2v19h-2zM1266 239h2v19h-2zM1266 259h2v19h-2zM1268 79h2v19h-2zM1268 219h2v19h-2zM1270 79h3v19h-3zM1270 219h3v19h-3zM1273 99h3v19h-3zM1273 139h3v19h-3zM1273 199h3v19h-3zM1276 68h2v10h-2zM1276 139h2v19h-2zM1276 239h2v19h-2zM1278 79h2v19h-2zM1280 68h2v10h-2zM1280 79h2v19h-2zM1280 99h2v19h-2zM1282 79h2v19h-2zM1282 199h2v19h-2zM1282 219h2v19h-2zM1284 68h2v10h-2zM1284 99h2v19h-2zM1286 68h2v10h-2zM1286 79h2v19h-2zM1288 68h2v10h-2zM1290 68h2v10h-2zM1290 99h2v19h-2zM1292 68h2v10h-2zM1294 99h2v19h-2zM1296 79h4v19h-4zM1296 99h4v19h-4zM1296 139h4v19h-4zM1300 79h2v19h-2zM1300 99h2v19h-2zM1300 119h2v19h-2zM1302 68h2v10h-2zM1302 79h2v19h-2zM1304 79h4v19h-4zM1308 79h3v19h-3zM1308 99h3v19h-3zM1311 99h3v19h-3zM1311 119h3v19h-3zM1318 79h2v19h-2zM1320 79h2v19h-2zM1320 119h2v19h-2zM1322 68h4v10h-4zM1322 79h4v19h-4zM1326 68h2v10h-2zM1328 68h2v10h-2zM1328 79h2v19h-2zM1330 68h2v10h-2zM1332 68h4v10h-4zM1332 79h4v19h-4zM1332 99h4v19h-4zM1336 68h2v10h-2zM1338 119h2v19h-2zM1340 79h2v19h-2zM1342 68h4v10h-4zM1342 99h4v19h-4zM1348 99h2v19h-2zM1350 79h2v19h-2zM1356 79h3v19h-3zM1356 99h3v19h-3zM1359 79h3v19h-3zM1359 99h3v19h-3zM1362 68h2v10h-2zM1364 68h2v10h-2zM1368 68h3v10h-3zM1373 68h3v10h-3zM1373 79h3v19h-3zM1376 68h2v10h-2zM1376 79h2v19h-2zM1378 68h2v10h-2zM1378 79h2v19h-2zM1380 68h2v10h-2zM1384 68h2v10h-2zM1388 79h2v19h-2zM1396 68h2v10h-2zM1396 79h2v19h-2zM1406 79h4v19h-4zM1410 68h3v10h-3zM1413 68h2v10h-2zM1417 68h3v10h-3zM1420 68h2v10h-2zM1422 68h4v10h-4zM1430 79h2v19h-2zM1430 99h2v19h-2zM1438 68h2v10h-2zM1440 68h3v10h-3zM1445 68h4v10h-4zM1449 68h2v10h-2zM1451 68h2v10h-2zM1451 79h2v19h-2zM1453 79h3v19h-3zM1456 68h2v10h-2zM1456 79h2v19h-2zM1458 79h2v19h-2zM1460 79h2v19h-2zM1462 68h2v10h-2zM1462 79h2v19h-2zM1462 99h2v19h-2zM1464 68h3v10h-3zM1464 79h3v19h-3zM1464 99h3v19h-3zM1467 68h2v10h-2zM1469 79h3v19h-3zM1469 99h3v19h-3zM1472 68h2v10h-2zM1474 68h3v10h-3zM1474 79h3v19h-3zM1477 68h2v10h-2zM1477 79h2v19h-2zM1479 99h2v19h-2zM1481 68h1v10h-1zM1481 99h1v19h-1z"/><path fill="#4e0000" d="M644 259h4v19h-4zM644 319h4v19h-4zM644 359h4v19h-4zM644 379h4v19h-4zM644 419h4v19h-4zM644 439h4v19h-4zM648 239h7v19h-7zM648 259h7v19h-7zM648 319h7v19h-7zM655 279h2v19h-2zM655 299h2v19h-2zM657 239h4v19h-4zM657 259h4v19h-4zM657 359h4v19h-4zM657 399h4v19h-4zM661 239h4v19h-4zM661 259h4v19h-4zM661 319h4v19h-4zM661 339h4v19h-4zM661 359h4v19h-4zM661 439h4v19h-4zM665 239h2v19h-2zM665 259h2v19h-2zM665 299h2v19h-2zM665 339h2v19h-2zM665 359h2v19h-2zM667 259h2v19h-2zM667 379h2v19h-2zM669 239h2v19h-2zM669 379h2v19h-2zM671 239h2v19h-2zM671 259h2v19h-2zM671 399h2v19h-2zM673 319h2v19h-2zM673 379h2v19h-2zM675 319h2v19h-2zM675 359h2v19h-2zM677 219h4v19h-4zM677 259h4v19h-4zM677 279h4v19h-4zM677 379h4v19h-4zM681 239h4v19h-4zM681 259h4v19h-4zM681 279h4v19h-4zM681 299h4v19h-4zM681 379h4v19h-4zM685 199h4v19h-4zM685 259h4v19h-4zM685 339h4v19h-4zM689 239h2v19h-2zM689 259h2v19h-2zM689 339h2v19h-2zM693 239h2v19h-2zM693 299h2v19h-2zM695 239h2v19h-2zM695 299h2v19h-2zM697 319h2v19h-2zM699 259h2v19h-2zM699 299h2v19h-2zM699 319h2v19h-2zM701 239h4v19h-4zM701 259h4v19h-4zM701 279h4v19h-4zM701 299h4v19h-4zM705 179h2v19h-2zM705 199h2v19h-2zM705 259h2v19h-2zM707 159h2v19h-2zM707 219h2v19h-2zM707 259h2v19h-2zM707 319h2v19h-2zM709 199h2v19h-2zM709 219h2v19h-2zM709 239h2v19h-2zM709 259h2v19h-2zM709 319h2v19h-2zM711 179h2v19h-2zM711 219h2v19h-2zM711 259h2v19h-2zM711 279h2v19h-2zM713 119h2v19h-2zM713 159h2v19h-2zM713 219h2v19h-2zM713 259h2v19h-2zM715 119h4v19h-4zM715 159h4v19h-4zM715 219h4v19h-4zM715 259h4v19h-4zM715 279h4v19h-4zM715 299h4v19h-4zM715 319h4v19h-4zM719 179h2v19h-2zM721 159h2v19h-2zM721 179h2v19h-2zM721 239h2v19h-2zM721 259h2v19h-2zM721 299h2v19h-2zM723 139h4v19h-4zM723 159h4v19h-4zM723 219h4v19h-4zM723 239h4v19h-4zM723 259h4v19h-4zM723 279h4v19h-4zM723 299h4v19h-4zM727 159h2v19h-2zM727 219h2v19h-2zM727 279h2v19h-2zM729 119h2v19h-2zM729 159h2v19h-2zM729 239h2v19h-2zM729 279h2v19h-2zM729 339h2v19h-2zM731 119h4v19h-4zM731 139h4v19h-4zM731 259h4v19h-4zM731 319h4v19h-4zM735 159h2v19h-2zM735 199h2v19h-2zM737 119h2v19h-2zM737 159h2v19h-2zM737 219h2v19h-2zM739 179h3v19h-3zM739 239h3v19h-3zM739 259h3v19h-3zM739 339h3v19h-3zM742 139h2v19h-2zM742 219h2v19h-2zM742 239h2v19h-2zM742 259h2v19h-2zM742 279h2v19h-2zM744 259h2v19h-2zM744 279h2v19h-2zM746 159h2v19h-2zM746 299h2v19h-2zM748 139h2v19h-2zM748 159h2v19h-2zM748 219h2v19h-2zM748 259h2v19h-2zM748 339h2v19h-2zM750 139h2v19h-2zM750 179h2v19h-2zM750 279h2v19h-2zM750 339h2v19h-2zM752 159h2v19h-2zM752 239h2v19h-2zM752 279h2v19h-2zM752 319h2v19h-2zM752 339h2v19h-2zM754 139h2v19h-2zM754 179h2v19h-2zM754 239h2v19h-2zM754 259h2v19h-2zM754 299h2v19h-2zM754 339h2v19h-2zM756 139h2v19h-2zM756 239h2v19h-2zM756 259h2v19h-2zM758 139h2v19h-2zM758 159h2v19h-2zM758 239h2v19h-2zM758 259h2v19h-2zM758 279h2v19h-2zM758 339h2v19h-2zM760 179h2v19h-2zM760 279h2v19h-2zM762 139h3v19h-3zM762 159h3v19h-3zM762 219h3v19h-3zM762 239h3v19h-3zM762 279h3v19h-3zM762 339h3v19h-3zM765 119h4v19h-4zM765 179h4v19h-4zM765 219h4v19h-4zM765 239h4v19h-4zM765 319h4v19h-4zM765 359h4v19h-4zM765 379h4v19h-4zM769 159h4v19h-4zM769 179h4v19h-4zM769 219h4v19h-4zM769 259h4v19h-4zM769 299h4v19h-4zM773 139h2v19h-2zM773 239h2v19h-2zM773 259h2v19h-2zM775 139h2v19h-2zM775 159h2v19h-2zM775 239h2v19h-2zM775 259h2v19h-2zM775 399h2v19h-2zM777 159h2v19h-2zM777 179h2v19h-2zM777 299h2v19h-2zM777 359h2v19h-2zM777 399h2v19h-2zM779 119h2v19h-2zM779 159h2v19h-2zM779 239h2v19h-2zM779 319h2v19h-2zM779 399h2v19h-2zM781 159h2v19h-2zM781 219h2v19h-2zM781 239h2v19h-2zM781 259h2v19h-2zM781 279h2v19h-2zM781 339h2v19h-2zM781 359h2v19h-2zM781 379h2v19h-2zM781 399h2v19h-2zM783 219h2v19h-2zM783 259h2v19h-2zM783 359h2v19h-2zM783 379h2v19h-2zM785 139h2v19h-2zM785 219h2v19h-2zM787 139h2v19h-2zM787 199h2v19h-2zM787 399h2v19h-2zM789 139h4v19h-4zM789 179h4v19h-4zM789 219h4v19h-4zM789 259h4v19h-4zM789 279h4v19h-4zM789 299h4v19h-4zM793 159h2v19h-2zM793 219h2v19h-2zM793 239h2v19h-2zM793 319h2v19h-2zM795 259h2v19h-2zM795 319h2v19h-2zM797 119h2v19h-2zM797 139h2v19h-2zM797 159h2v19h-2zM797 179h2v19h-2zM797 239h2v19h-2zM797 259h2v19h-2zM797 279h2v19h-2zM797 299h2v19h-2zM799 119h4v19h-4zM799 179h4v19h-4zM799 219h4v19h-4zM799 239h4v19h-4zM799 259h4v19h-4zM803 259h2v19h-2zM803 299h2v19h-2zM805 119h3v19h-3zM805 219h3v19h-3zM805 239h3v19h-3zM805 259h3v19h-3zM805 279h3v19h-3zM805 319h3v19h-3zM808 119h2v19h-2zM808 159h2v19h-2zM808 239h2v19h-2zM808 259h2v19h-2zM808 319h2v19h-2zM810 239h4v19h-4zM810 259h4v19h-4zM810 339h4v19h-4zM814 119h2v19h-2zM814 139h2v19h-2zM814 159h2v19h-2zM814 219h2v19h-2zM814 259h2v19h-2zM816 179h3v19h-3zM816 239h3v19h-3zM816 299h3v19h-3zM819 159h2v19h-2zM819 199h2v19h-2zM819 259h2v19h-2zM819 339h2v19h-2zM821 119h2v19h-2zM821 139h2v19h-2zM821 159h2v19h-2zM821 219h2v19h-2zM821 239h2v19h-2zM821 259h2v19h-2zM821 339h2v19h-2zM823 159h2v19h-2zM823 239h2v19h-2zM823 259h2v19h-2zM823 279h2v19h-2zM823 299h2v19h-2zM825 159h3v19h-3zM825 219h3v19h-3zM825 239h3v19h-3zM825 319h3v19h-3zM828 139h3v19h-3zM828 179h3v19h-3zM828 279h3v19h-3zM828 319h3v19h-3zM831 239h4v19h-4zM835 119h2v19h-2zM835 179h2v19h-2zM835 219h2v19h-2zM835 239h2v19h-2zM835 259h2v19h-2zM835 299h2v19h-2zM835 339h2v19h-2zM835 359h2v19h-2zM835 379h2v19h-2zM837 179h2v19h-2zM837 259h2v19h-2zM837 299h2v19h-2zM837 339h2v19h-2zM839 259h2v19h-2zM839 299h2v19h-2zM839 339h2v19h-2zM839 359h2v19h-2zM839 379h2v19h-2zM841 119h4v19h-4zM841 239h4v19h-4zM841 259h4v19h-4zM841 319h4v19h-4zM845 179h4v19h-4zM845 359h4v19h-4zM845 379h4v19h-4zM849 119h2v19h-2zM849 219h2v19h-2zM849 259h2v19h-2zM849 319h2v19h-2zM849 379h2v19h-2zM849 419h2v19h-2zM851 139h4v19h-4zM851 259h4v19h-4zM851 319h4v19h-4zM851 379h4v19h-4zM851 399h4v19h-4zM851 419h4v19h-4zM855 339h2v19h-2zM857 119h3v19h-3zM857 199h3v19h-3zM857 259h3v19h-3zM857 319h3v19h-3zM857 399h3v19h-3zM857 439h3v19h-3zM860 179h3v19h-3zM860 279h3v19h-3zM860 299h3v19h-3zM860 379h3v19h-3zM860 419h3v19h-3zM860 459h3v19h-3zM863 139h2v19h-2zM863 199h2v19h-2zM863 279h2v19h-2zM865 139h2v19h-2zM865 279h2v19h-2zM865 319h2v19h-2zM865 439h2v19h-2zM865 459h2v19h-2zM867 119h2v19h-2zM867 279h2v19h-2zM867 299h2v19h-2zM867 319h2v19h-2zM867 339h2v19h-2zM867 379h2v19h-2zM867 439h2v19h-2zM869 179h3v19h-3zM869 199h3v19h-3zM869 359h3v19h-3zM869 399h3v19h-3zM869 479h3v19h-3zM872 219h2v19h-2zM872 239h2v19h-2zM872 419h2v19h-2zM874 119h2v19h-2zM874 259h2v19h-2zM874 279h2v19h-2zM874 319h2v19h-2zM874 339h2v19h-2zM874 419h2v19h-2zM874 439h2v19h-2zM876 279h2v19h-2zM876 319h2v19h-2zM876 359h2v19h-2zM876 379h2v19h-2zM876 459h2v19h-2zM876 479h2v19h-2zM878 199h2v19h-2zM878 239h2v19h-2zM878 259h2v19h-2zM878 339h2v19h-2zM880 179h2v19h-2zM880 259h2v19h-2zM880 379h2v19h-2zM880 399h2v19h-2zM882 179h2v19h-2zM882 259h2v19h-2zM882 319h2v19h-2zM882 339h2v19h-2zM882 379h2v19h-2zM882 399h2v19h-2zM882 419h2v19h-2zM884 239h2v19h-2zM884 419h2v19h-2zM884 459h2v19h-2zM884 479h2v19h-2zM886 119h2v19h-2zM886 199h2v19h-2zM886 259h2v19h-2zM886 419h2v19h-2zM886 439h2v19h-2zM886 459h2v19h-2zM888 259h3v19h-3zM888 379h3v19h-3zM888 439h3v19h-3zM888 499h3v19h-3zM891 119h2v19h-2zM891 259h2v19h-2zM891 419h2v19h-2zM893 139h2v19h-2zM893 179h2v19h-2zM893 199h2v19h-2zM893 219h2v19h-2zM893 239h2v19h-2zM893 359h2v19h-2zM893 379h2v19h-2zM893 479h2v19h-2zM895 119h2v19h-2zM895 139h2v19h-2zM895 179h2v19h-2zM895 199h2v19h-2zM895 219h2v19h-2zM895 419h2v19h-2zM895 479h2v19h-2zM897 219h3v19h-3zM897 399h3v19h-3zM897 479h3v19h-3zM897 499h3v19h-3zM900 139h2v19h-2zM900 219h2v19h-2zM900 479h2v19h-2zM900 499h2v19h-2zM902 119h2v19h-2zM902 139h2v19h-2zM902 339h2v19h-2zM902 359h2v19h-2zM902 439h2v19h-2zM902 479h2v19h-2zM904 219h2v19h-2zM904 499h2v19h-2zM904 519h2v19h-2zM906 119h3v19h-3zM906 219h3v19h-3zM906 279h3v19h-3zM906 379h3v19h-3zM909 279h2v19h-2zM909 339h2v19h-2zM909 399h2v19h-2zM909 519h2v19h-2zM911 379h4v19h-4zM911 419h4v19h-4zM911 479h4v19h-4zM911 499h4v19h-4zM915 199h4v19h-4zM915 359h4v19h-4zM915 499h4v19h-4zM915 519h4v19h-4zM919 119h2v19h-2zM919 179h2v19h-2zM919 239h2v19h-2zM919 379h2v19h-2zM919 419h2v19h-2zM919 459h2v19h-2zM919 479h2v19h-2zM921 179h2v19h-2zM921 219h2v19h-2zM921 279h2v19h-2zM921 339h2v19h-2zM921 459h2v19h-2zM921 479h2v19h-2zM923 139h2v19h-2zM923 359h2v19h-2zM923 379h2v19h-2zM923 479h2v19h-2zM923 519h2v19h-2zM925 119h3v19h-3zM925 139h3v19h-3zM925 199h3v19h-3zM928 339h2v19h-2zM928 379h2v19h-2zM928 399h2v19h-2zM928 479h2v19h-2zM928 499h2v19h-2zM930 139h2v19h-2zM930 279h2v19h-2zM930 339h2v19h-2zM930 379h2v19h-2zM930 419h2v19h-2zM930 439h2v19h-2zM932 119h2v19h-2zM932 279h2v19h-2zM934 199h2v19h-2zM934 399h2v19h-2zM934 539h2v19h-2zM936 199h2v19h-2zM936 339h2v19h-2zM936 379h2v19h-2zM936 419h2v19h-2zM938 139h2v19h-2zM938 459h2v19h-2zM940 119h2v19h-2zM940 179h2v19h-2zM940 359h2v19h-2zM940 419h2v19h-2zM940 499h2v19h-2zM940 519h2v19h-2zM942 139h2v19h-2zM942 219h2v19h-2zM942 339h2v19h-2zM942 379h2v19h-2zM942 439h2v19h-2zM942 479h2v19h-2zM944 179h2v19h-2zM944 219h2v19h-2zM944 339h2v19h-2zM944 359h2v19h-2zM944 379h2v19h-2zM944 459h2v19h-2zM944 479h2v19h-2zM944 499h2v19h-2zM946 119h3v19h-3zM946 279h3v19h-3zM946 339h3v19h-3zM946 359h3v19h-3zM946 399h3v19h-3zM946 419h3v19h-3zM946 459h3v19h-3zM946 499h3v19h-3zM946 519h3v19h-3zM949 119h3v19h-3zM949 379h3v19h-3zM949 419h3v19h-3zM949 439h3v19h-3zM949 499h3v19h-3zM952 119h2v19h-2zM952 239h2v19h-2zM952 379h2v19h-2zM952 439h2v19h-2zM954 219h2v19h-2zM954 239h2v19h-2zM954 359h2v19h-2zM954 479h2v19h-2zM954 499h2v19h-2zM956 139h2v19h-2zM956 179h2v19h-2zM956 219h2v19h-2zM956 339h2v19h-2zM956 459h2v19h-2zM956 479h2v19h-2zM958 179h2v19h-2zM958 399h2v19h-2zM958 499h2v19h-2zM960 179h3v19h-3zM960 219h3v19h-3zM960 279h3v19h-3zM960 339h3v19h-3zM960 419h3v19h-3zM963 219h2v19h-2zM963 319h2v19h-2zM963 359h2v19h-2zM963 419h2v19h-2zM963 499h2v19h-2zM965 179h2v19h-2zM965 319h2v19h-2zM965 379h2v19h-2zM965 419h2v19h-2zM965 439h2v19h-2zM965 479h2v19h-2zM967 139h3v19h-3zM967 179h3v19h-3zM967 199h3v19h-3zM967 339h3v19h-3zM967 379h3v19h-3zM967 459h3v19h-3zM967 479h3v19h-3zM970 179h3v19h-3zM970 219h3v19h-3zM970 279h3v19h-3zM970 299h3v19h-3zM970 399h3v19h-3zM970 459h3v19h-3zM973 139h2v19h-2zM973 179h2v19h-2zM973 279h2v19h-2zM973 299h2v19h-2zM973 459h2v19h-2zM973 479h2v19h-2zM975 179h2v19h-2zM975 279h2v19h-2zM975 299h2v19h-2zM975 319h2v19h-2zM975 339h2v19h-2zM975 399h2v19h-2zM975 439h2v19h-2zM977 139h2v19h-2zM977 179h2v19h-2zM977 219h2v19h-2zM977 319h2v19h-2zM977 359h2v19h-2zM977 379h2v19h-2zM977 419h2v19h-2zM977 459h2v19h-2zM979 179h4v19h-4zM979 199h4v19h-4zM979 219h4v19h-4zM979 279h4v19h-4zM979 339h4v19h-4zM979 399h4v19h-4zM979 419h4v19h-4zM983 139h2v19h-2zM983 179h2v19h-2zM983 239h2v19h-2zM983 339h2v19h-2zM983 399h2v19h-2zM983 439h2v19h-2zM985 139h2v19h-2zM985 299h2v19h-2zM985 339h2v19h-2zM985 359h2v19h-2zM985 379h2v19h-2zM985 459h2v19h-2zM987 179h2v19h-2zM987 199h2v19h-2zM987 279h2v19h-2zM987 299h2v19h-2zM989 139h4v19h-4zM989 219h4v19h-4zM989 279h4v19h-4zM989 319h4v19h-4zM989 359h4v19h-4zM989 379h4v19h-4zM989 399h4v19h-4zM993 139h2v19h-2zM993 179h2v19h-2zM993 219h2v19h-2zM993 279h2v19h-2zM993 299h2v19h-2zM993 359h2v19h-2zM995 339h2v19h-2zM995 419h2v19h-2zM995 439h2v19h-2zM997 299h2v19h-2zM997 399h2v19h-2zM997 419h2v19h-2zM997 439h2v19h-2zM999 279h2v19h-2zM999 339h2v19h-2zM999 359h2v19h-2zM999 379h2v19h-2zM999 419h2v19h-2zM999 439h2v19h-2zM1001 139h2v19h-2zM1001 179h2v19h-2zM1001 199h2v19h-2zM1001 279h2v19h-2zM1001 319h2v19h-2zM1001 339h2v19h-2zM1001 359h2v19h-2zM1001 399h2v19h-2zM1001 439h2v19h-2zM1001 459h2v19h-2zM1003 219h2v19h-2zM1003 239h2v19h-2zM1003 359h2v19h-2zM1003 379h2v19h-2zM1003 399h2v19h-2zM1003 419h2v19h-2zM1005 279h3v19h-3zM1005 399h3v19h-3zM1005 419h3v19h-3zM1005 439h3v19h-3zM1005 459h3v19h-3zM1008 239h2v19h-2zM1008 299h2v19h-2zM1008 319h2v19h-2zM1008 339h2v19h-2zM1008 399h2v19h-2zM1010 139h2v19h-2zM1010 219h2v19h-2zM1010 319h2v19h-2zM1010 419h2v19h-2zM1012 119h3v19h-3zM1012 179h3v19h-3zM1012 239h3v19h-3zM1012 379h3v19h-3zM1015 119h3v19h-3zM1015 179h3v19h-3zM1015 199h3v19h-3zM1015 359h3v19h-3zM1015 399h3v19h-3zM1015 439h3v19h-3zM1018 239h2v19h-2zM1018 339h2v19h-2zM1020 179h2v19h-2zM1020 199h2v19h-2zM1020 219h2v19h-2zM1020 299h2v19h-2zM1020 319h2v19h-2zM1020 339h2v19h-2zM1020 359h2v19h-2zM1020 459h2v19h-2zM1022 219h2v19h-2zM1022 259h2v19h-2zM1022 319h2v19h-2zM1024 219h2v19h-2zM1024 279h2v19h-2zM1024 299h2v19h-2zM1024 439h2v19h-2zM1026 219h2v19h-2zM1026 259h2v19h-2zM1026 339h2v19h-2zM1028 219h3v19h-3zM1028 259h3v19h-3zM1028 299h3v19h-3zM1028 359h3v19h-3zM1028 399h3v19h-3zM1031 119h4v19h-4zM1031 139h4v19h-4zM1031 239h4v19h-4zM1031 259h4v19h-4zM1031 279h4v19h-4zM1031 319h4v19h-4zM1031 359h4v19h-4zM1031 399h4v19h-4zM1035 119h2v19h-2zM1035 139h2v19h-2zM1035 179h2v19h-2zM1035 259h2v19h-2zM1035 359h2v19h-2zM1035 379h2v19h-2zM1035 419h2v19h-2zM1035 459h2v19h-2zM1037 439h2v19h-2zM1039 319h2v19h-2zM1039 399h2v19h-2zM1039 439h2v19h-2zM1041 139h2v19h-2zM1041 279h2v19h-2zM1041 379h2v19h-2zM1041 439h2v19h-2zM1043 119h3v19h-3zM1043 179h3v19h-3zM1043 259h3v19h-3zM1043 359h3v19h-3zM1046 179h4v19h-4zM1046 219h4v19h-4zM1046 259h4v19h-4zM1046 299h4v19h-4zM1046 319h4v19h-4zM1046 379h4v19h-4zM1046 419h4v19h-4zM1050 119h3v19h-3zM1050 179h3v19h-3zM1050 259h3v19h-3zM1050 279h3v19h-3zM1050 339h3v19h-3zM1050 379h3v19h-3zM1050 419h3v19h-3zM1053 139h4v19h-4zM1053 259h4v19h-4zM1053 319h4v19h-4zM1053 339h4v19h-4zM1053 379h4v19h-4zM1057 119h4v19h-4zM1057 239h4v19h-4zM1057 279h4v19h-4zM1057 359h4v19h-4zM1061 119h2v19h-2zM1061 179h2v19h-2zM1061 259h2v19h-2zM1061 359h2v19h-2zM1061 399h2v19h-2zM1063 279h2v19h-2zM1063 319h2v19h-2zM1063 439h2v19h-2zM1065 119h2v19h-2zM1065 259h2v19h-2zM1065 279h2v19h-2zM1065 299h2v19h-2zM1065 319h2v19h-2zM1065 339h2v19h-2zM1065 379h2v19h-2zM1065 419h2v19h-2zM1067 119h2v19h-2zM1067 139h2v19h-2zM1067 219h2v19h-2zM1067 259h2v19h-2zM1067 279h2v19h-2zM1067 299h2v19h-2zM1067 319h2v19h-2zM1067 359h2v19h-2zM1067 419h2v19h-2zM1069 139h2v19h-2zM1069 179h2v19h-2zM1069 199h2v19h-2zM1069 239h2v19h-2zM1069 359h2v19h-2zM1069 399h2v19h-2zM1071 179h4v19h-4zM1071 199h4v19h-4zM1071 239h4v19h-4zM1071 299h4v19h-4zM1071 359h4v19h-4zM1071 379h4v19h-4zM1071 439h4v19h-4zM1071 459h4v19h-4zM1075 319h4v19h-4zM1075 339h4v19h-4zM1075 399h4v19h-4zM1075 419h4v19h-4zM1075 459h4v19h-4zM1079 179h2v19h-2zM1079 239h2v19h-2zM1079 299h2v19h-2zM1079 379h2v19h-2zM1079 399h2v19h-2zM1081 119h2v19h-2zM1081 179h2v19h-2zM1081 299h2v19h-2zM1081 319h2v19h-2zM1081 339h2v19h-2zM1081 439h2v19h-2zM1081 459h2v19h-2zM1083 199h2v19h-2zM1083 299h2v19h-2zM1083 319h2v19h-2zM1083 399h2v19h-2zM1083 459h2v19h-2zM1085 179h3v19h-3zM1085 199h3v19h-3zM1085 259h3v19h-3zM1085 299h3v19h-3zM1085 319h3v19h-3zM1085 399h3v19h-3zM1085 439h3v19h-3zM1085 479h3v19h-3zM1088 119h2v19h-2zM1088 299h2v19h-2zM1088 319h2v19h-2zM1088 359h2v19h-2zM1088 439h2v19h-2zM1090 379h4v19h-4zM1090 419h4v19h-4zM1090 479h4v19h-4zM1094 179h2v19h-2zM1094 199h2v19h-2zM1094 219h2v19h-2zM1094 319h2v19h-2zM1094 339h2v19h-2zM1094 359h2v19h-2zM1094 439h2v19h-2zM1094 459h2v19h-2zM1094 479h2v19h-2zM1096 259h2v19h-2zM1096 299h2v19h-2zM1096 339h2v19h-2zM1096 419h2v19h-2zM1096 439h2v19h-2zM1096 479h2v19h-2zM1098 119h2v19h-2zM1098 439h2v19h-2zM1098 499h2v19h-2zM1100 179h2v19h-2zM1100 199h2v19h-2zM1100 299h2v19h-2zM1100 359h2v19h-2zM1100 379h2v19h-2zM1100 399h2v19h-2zM1102 179h2v19h-2zM1102 219h2v19h-2zM1102 259h2v19h-2zM1102 339h2v19h-2zM1102 359h2v19h-2zM1102 379h2v19h-2zM1102 399h2v19h-2zM1102 459h2v19h-2zM1102 479h2v19h-2zM1104 139h2v19h-2zM1104 219h2v19h-2zM1106 259h2v19h-2zM1106 379h2v19h-2zM1106 419h2v19h-2zM1106 519h2v19h-2zM1108 139h2v19h-2zM1108 199h2v19h-2zM1108 299h2v19h-2zM1108 419h2v19h-2zM1108 479h2v19h-2zM1108 519h2v19h-2zM1110 179h3v19h-3zM1110 219h3v19h-3zM1110 319h3v19h-3zM1110 459h3v19h-3zM1110 499h3v19h-3zM1113 119h2v19h-2zM1113 219h2v19h-2zM1113 339h2v19h-2zM1113 379h2v19h-2zM1113 459h2v19h-2zM1113 499h2v19h-2zM1113 519h2v19h-2zM1115 119h2v19h-2zM1115 179h2v19h-2zM1115 219h2v19h-2zM1115 499h2v19h-2zM1117 179h3v19h-3zM1117 199h3v19h-3zM1117 359h3v19h-3zM1117 399h3v19h-3zM1117 419h3v19h-3zM1117 439h3v19h-3zM1117 479h3v19h-3zM1120 299h3v19h-3zM1120 459h3v19h-3zM1120 519h3v19h-3zM1123 119h2v19h-2zM1123 419h2v19h-2zM1125 199h2v19h-2zM1125 379h2v19h-2zM1125 459h2v19h-2zM1125 479h2v19h-2zM1127 259h2v19h-2zM1127 299h2v19h-2zM1127 339h2v19h-2zM1127 379h2v19h-2zM1127 439h2v19h-2zM1127 479h2v19h-2zM1129 299h2v19h-2zM1129 319h2v19h-2zM1129 339h2v19h-2zM1129 379h2v19h-2zM1129 419h2v19h-2zM1129 439h2v19h-2zM1131 219h2v19h-2zM1131 319h2v19h-2zM1131 359h2v19h-2zM1131 499h2v19h-2zM1133 259h2v19h-2zM1133 339h2v19h-2zM1133 459h2v19h-2zM1133 479h2v19h-2zM1133 499h2v19h-2zM1135 179h2v19h-2zM1135 219h2v19h-2zM1135 339h2v19h-2zM1135 459h2v19h-2zM1135 479h2v19h-2zM1137 219h2v19h-2zM1137 239h2v19h-2zM1137 319h2v19h-2zM1137 359h2v19h-2zM1137 399h2v19h-2zM1137 439h2v19h-2zM1137 479h2v19h-2zM1137 519h2v19h-2zM1139 119h2v19h-2zM1139 179h2v19h-2zM1139 219h2v19h-2zM1139 299h2v19h-2zM1139 319h2v19h-2zM1139 339h2v19h-2zM1139 379h2v19h-2zM1139 479h2v19h-2zM1139 519h2v19h-2zM1141 119h4v19h-4zM1141 139h4v19h-4zM1141 259h4v19h-4zM1141 439h4v19h-4zM1141 499h4v19h-4zM1145 299h2v19h-2zM1145 379h2v19h-2zM1145 519h2v19h-2zM1147 179h4v19h-4zM1147 259h4v19h-4zM1147 319h4v19h-4zM1147 359h4v19h-4zM1147 439h4v19h-4zM1147 459h4v19h-4zM1147 479h4v19h-4zM1147 499h4v19h-4zM1151 119h2v19h-2zM1151 179h2v19h-2zM1151 499h2v19h-2zM1153 199h2v19h-2zM1153 359h2v19h-2zM1153 379h2v19h-2zM1153 479h2v19h-2zM1155 199h2v19h-2zM1155 239h2v19h-2zM1155 319h2v19h-2zM1155 339h2v19h-2zM1155 419h2v19h-2zM1155 439h2v19h-2zM1155 479h2v19h-2zM1155 539h2v19h-2zM1157 179h2v19h-2zM1157 219h2v19h-2zM1157 259h2v19h-2zM1157 399h2v19h-2zM1157 439h2v19h-2zM1157 459h2v19h-2zM1157 499h2v19h-2zM1157 539h2v19h-2zM1159 179h2v19h-2zM1159 219h2v19h-2zM1159 379h2v19h-2zM1159 439h2v19h-2zM1159 519h2v19h-2zM1161 179h3v19h-3zM1161 319h3v19h-3zM1161 379h3v19h-3zM1161 399h3v19h-3zM1161 419h3v19h-3zM1161 479h3v19h-3zM1161 499h3v19h-3zM1161 539h3v19h-3zM1164 119h2v19h-2zM1164 199h2v19h-2zM1164 219h2v19h-2zM1164 319h2v19h-2zM1164 379h2v19h-2zM1164 399h2v19h-2zM1164 419h2v19h-2zM1164 439h2v19h-2zM1164 519h2v19h-2zM1166 199h3v19h-3zM1166 379h3v19h-3zM1166 419h3v19h-3zM1166 479h3v19h-3zM1166 539h3v19h-3zM1169 119h2v19h-2zM1169 139h2v19h-2zM1169 219h2v19h-2zM1169 239h2v19h-2zM1169 339h2v19h-2zM1169 419h2v19h-2zM1169 439h2v19h-2zM1171 139h4v19h-4zM1171 199h4v19h-4zM1171 239h4v19h-4zM1171 259h4v19h-4zM1171 399h4v19h-4zM1171 519h4v19h-4zM1175 119h2v19h-2zM1175 319h2v19h-2zM1175 359h2v19h-2zM1175 379h2v19h-2zM1175 419h2v19h-2zM1175 439h2v19h-2zM1175 519h2v19h-2zM1177 219h2v19h-2zM1177 299h2v19h-2zM1177 359h2v19h-2zM1177 419h2v19h-2zM1177 459h2v19h-2zM1177 499h2v19h-2zM1179 179h2v19h-2zM1179 219h2v19h-2zM1179 259h2v19h-2zM1179 299h2v19h-2zM1179 399h2v19h-2zM1179 459h2v19h-2zM1179 519h2v19h-2zM1181 219h2v19h-2zM1181 419h2v19h-2zM1183 219h3v19h-3zM1183 339h3v19h-3zM1183 379h3v19h-3zM1183 479h3v19h-3zM1186 119h2v19h-2zM1186 299h2v19h-2zM1186 359h2v19h-2zM1186 379h2v19h-2zM1186 399h2v19h-2zM1188 379h2v19h-2zM1188 439h2v19h-2zM1190 119h2v19h-2zM1190 139h2v19h-2zM1190 319h2v19h-2zM1190 339h2v19h-2zM1190 419h2v19h-2zM1192 139h4v19h-4zM1192 199h4v19h-4zM1192 219h4v19h-4zM1192 279h4v19h-4zM1192 299h4v19h-4zM1196 219h2v19h-2zM1196 319h2v19h-2zM1198 119h2v19h-2zM1198 219h2v19h-2zM1198 259h2v19h-2zM1198 339h2v19h-2zM1200 239h2v19h-2zM1200 359h2v19h-2zM1202 179h2v19h-2zM1202 199h2v19h-2zM1202 239h2v19h-2zM1202 259h2v19h-2zM1202 299h2v19h-2zM1202 319h2v19h-2zM1202 339h2v19h-2zM1202 399h2v19h-2zM1204 179h3v19h-3zM1204 239h3v19h-3zM1204 279h3v19h-3zM1204 299h3v19h-3zM1204 339h3v19h-3zM1204 359h3v19h-3zM1204 379h3v19h-3zM1207 179h4v19h-4zM1207 219h4v19h-4zM1207 319h4v19h-4zM1211 179h2v19h-2zM1211 239h2v19h-2zM1211 259h2v19h-2zM1211 319h2v19h-2zM1211 339h2v19h-2zM1213 139h2v19h-2zM1213 199h2v19h-2zM1213 279h2v19h-2zM1213 299h2v19h-2zM1213 319h2v19h-2zM1215 199h2v19h-2zM1215 219h2v19h-2zM1215 239h2v19h-2zM1215 379h2v19h-2zM1217 139h3v19h-3zM1217 179h3v19h-3zM1217 199h3v19h-3zM1217 239h3v19h-3zM1217 299h3v19h-3zM1217 319h3v19h-3zM1217 359h3v19h-3zM1217 379h3v19h-3zM1220 119h2v19h-2zM1220 219h2v19h-2zM1220 239h2v19h-2zM1220 299h2v19h-2zM1220 359h2v19h-2zM1222 219h2v19h-2zM1222 239h2v19h-2zM1222 319h2v19h-2zM1222 339h2v19h-2zM1224 199h3v19h-3zM1224 239h3v19h-3zM1224 319h3v19h-3zM1224 339h3v19h-3zM1224 359h3v19h-3zM1224 379h3v19h-3zM1227 119h2v19h-2zM1227 219h2v19h-2zM1227 239h2v19h-2zM1227 339h2v19h-2zM1227 379h2v19h-2zM1229 179h2v19h-2zM1229 219h2v19h-2zM1229 279h2v19h-2zM1229 339h2v19h-2zM1229 359h2v19h-2zM1231 239h2v19h-2zM1231 279h2v19h-2zM1231 299h2v19h-2zM1231 359h2v19h-2zM1231 399h2v19h-2zM1233 239h2v19h-2zM1233 259h2v19h-2zM1233 319h2v19h-2zM1233 339h2v19h-2zM1239 219h4v19h-4zM1239 239h4v19h-4zM1239 259h4v19h-4zM1239 279h4v19h-4zM1239 319h4v19h-4zM1239 359h4v19h-4zM1239 379h4v19h-4zM1243 239h2v19h-2zM1243 259h2v19h-2zM1243 279h2v19h-2zM1245 179h2v19h-2zM1245 239h2v19h-2zM1245 359h2v19h-2zM1245 379h2v19h-2zM1247 119h3v19h-3zM1250 179h2v19h-2zM1250 239h2v19h-2zM1250 299h2v19h-2zM1250 359h2v19h-2zM1252 119h2v19h-2zM1252 179h2v19h-2zM1252 239h2v19h-2zM1252 279h2v19h-2zM1252 319h2v19h-2zM1252 339h2v19h-2zM1254 119h4v19h-4zM1254 239h4v19h-4zM1254 259h4v19h-4zM1254 279h4v19h-4zM1258 119h4v19h-4zM1262 119h2v19h-2zM1262 179h2v19h-2zM1262 239h2v19h-2zM1262 259h2v19h-2zM1264 139h2v19h-2zM1264 159h2v19h-2zM1264 179h2v19h-2zM1264 239h2v19h-2zM1264 259h2v19h-2zM1266 199h2v19h-2zM1268 99h2v19h-2zM1268 239h2v19h-2zM1270 139h3v19h-3zM1270 239h3v19h-3zM1273 179h3v19h-3zM1273 219h3v19h-3zM1273 239h3v19h-3zM1276 79h2v19h-2zM1276 199h2v19h-2zM1276 219h2v19h-2zM1278 99h2v19h-2zM1278 179h2v19h-2zM1278 199h2v19h-2zM1278 219h2v19h-2zM1280 159h2v19h-2zM1280 179h2v19h-2zM1280 219h2v19h-2zM1280 239h2v19h-2zM1282 68h2v10h-2zM1282 99h2v19h-2zM1282 119h2v19h-2zM1282 239h2v19h-2zM1284 199h2v19h-2zM1286 99h2v19h-2zM1286 179h2v19h-2zM1286 199h2v19h-2zM1288 79h2v19h-2zM1288 99h2v19h-2zM1288 139h2v19h-2zM1290 79h2v19h-2zM1290 179h2v19h-2zM1292 119h2v19h-2zM1294 79h2v19h-2zM1296 119h4v19h-4zM1300 68h2v10h-2zM1302 99h2v19h-2zM1304 68h4v10h-4zM1304 99h4v19h-4zM1304 119h4v19h-4zM1308 119h3v19h-3zM1311 79h3v19h-3zM1314 119h4v19h-4zM1318 68h2v10h-2zM1320 68h2v10h-2zM1326 119h2v19h-2zM1328 99h2v19h-2zM1330 79h2v19h-2zM1330 99h2v19h-2zM1338 99h2v19h-2zM1340 68h2v10h-2zM1348 79h2v19h-2zM1350 68h2v10h-2zM1350 99h2v19h-2zM1352 68h2v10h-2zM1352 99h2v19h-2zM1354 68h2v10h-2zM1356 68h3v10h-3zM1362 79h2v19h-2zM1364 79h2v19h-2zM1366 68h2v10h-2zM1366 79h2v19h-2zM1368 79h3v19h-3zM1384 79h2v19h-2zM1390 79h3v19h-3zM1393 68h3v10h-3zM1393 79h3v19h-3zM1406 68h4v10h-4zM1406 99h4v19h-4zM1415 68h2v10h-2zM1422 79h4v19h-4zM1426 68h4v10h-4zM1430 68h2v10h-2zM1432 68h2v10h-2zM1432 79h2v19h-2zM1434 68h2v10h-2zM1449 79h2v19h-2zM1453 68h3v10h-3zM1458 68h2v10h-2zM1469 68h3v10h-3zM1472 79h2v19h-2zM1477 99h2v19h-2zM1479 79h2v19h-2z"/><path fill="#00101a" d="M644 459h4v19h-4zM644 539h4v19h-4zM644 599h4v19h-4zM648 479h7v19h-7zM648 519h7v19h-7zM648 559h7v19h-7zM655 479h2v19h-2zM655 499h2v19h-2zM655 539h2v19h-2zM657 519h4v19h-4zM667 459h2v19h-2zM667 519h2v19h-2zM667 619h2v19h-2zM669 539h2v19h-2zM669 559h2v19h-2zM671 439h2v19h-2zM671 559h2v19h-2zM671 579h2v19h-2zM673 519h2v19h-2zM673 539h2v19h-2zM673 639h2v11h-2zM675 439h2v19h-2zM677 479h4v19h-4zM677 499h4v19h-4zM677 619h4v19h-4zM681 539h4v19h-4zM681 579h4v19h-4zM681 599h4v19h-4zM689 379h2v19h-2zM689 399h2v19h-2zM689 499h2v19h-2zM691 379h2v19h-2zM691 419h2v19h-2zM691 559h2v19h-2zM693 379h2v19h-2zM693 439h2v19h-2zM693 579h2v19h-2zM693 619h2v19h-2zM695 459h2v19h-2zM695 479h2v19h-2zM695 539h2v19h-2zM695 559h2v19h-2zM695 619h2v19h-2zM697 339h2v19h-2zM697 379h2v19h-2zM699 339h2v19h-2zM699 359h2v19h-2zM701 479h4v19h-4zM701 519h4v19h-4zM701 619h4v19h-4zM701 639h4v11h-4zM705 339h2v19h-2zM705 379h2v19h-2zM705 639h2v11h-2zM707 419h2v19h-2zM707 519h2v19h-2zM707 559h2v19h-2zM707 579h2v19h-2zM707 619h2v19h-2zM707 639h2v11h-2zM709 379h2v19h-2zM709 399h2v19h-2zM709 459h2v19h-2zM711 339h2v19h-2zM711 439h2v19h-2zM711 639h2v11h-2zM713 339h2v19h-2zM713 479h2v19h-2zM715 339h4v19h-4zM715 419h4v19h-4zM719 339h2v19h-2zM719 359h2v19h-2zM721 459h2v19h-2zM721 499h2v19h-2zM727 439h2v19h-2zM727 459h2v19h-2zM727 479h2v19h-2zM727 519h2v19h-2zM727 539h2v19h-2zM727 619h2v19h-2zM727 639h2v11h-2zM729 359h2v19h-2zM729 379h2v19h-2zM729 399h2v19h-2zM729 459h2v19h-2zM729 559h2v19h-2zM731 399h4v19h-4zM731 579h4v19h-4zM735 359h2v19h-2zM735 439h2v19h-2zM735 519h2v19h-2zM735 579h2v19h-2zM735 619h2v19h-2zM735 639h2v11h-2zM737 379h2v19h-2zM737 479h2v19h-2zM739 499h3v19h-3zM742 439h2v19h-2zM742 559h2v19h-2zM742 579h2v19h-2zM744 379h2v19h-2zM746 419h2v19h-2zM748 499h2v19h-2zM748 619h2v19h-2zM750 379h2v19h-2zM752 359h2v19h-2zM752 479h2v19h-2zM752 579h2v19h-2zM752 619h2v19h-2zM754 359h2v19h-2zM754 379h2v19h-2zM754 399h2v19h-2zM754 419h2v19h-2zM754 439h2v19h-2zM754 519h2v19h-2zM754 559h2v19h-2zM756 419h2v19h-2zM756 519h2v19h-2zM756 539h2v19h-2zM756 639h2v11h-2zM758 539h2v19h-2zM758 579h2v19h-2zM758 619h2v19h-2zM760 339h2v19h-2zM760 459h2v19h-2zM760 519h2v19h-2zM760 539h2v19h-2zM760 619h2v19h-2zM762 499h3v19h-3zM762 519h3v19h-3zM762 559h3v19h-3zM762 639h3v11h-3zM765 519h4v19h-4zM765 579h4v19h-4zM775 439h2v19h-2zM775 499h2v19h-2zM775 599h2v19h-2zM777 439h2v19h-2zM777 479h2v19h-2zM777 499h2v19h-2zM777 559h2v19h-2zM777 639h2v11h-2zM779 479h2v19h-2zM779 539h2v19h-2zM779 559h2v19h-2zM779 639h2v11h-2zM781 559h2v19h-2zM781 639h2v11h-2zM783 439h2v19h-2zM783 559h2v19h-2zM783 599h2v19h-2zM783 619h2v19h-2zM783 639h2v11h-2zM785 499h2v19h-2zM785 599h2v19h-2zM785 619h2v19h-2zM785 639h2v11h-2zM787 459h2v19h-2zM787 479h2v19h-2zM787 599h2v19h-2zM787 619h2v19h-2zM787 639h2v11h-2zM789 359h4v19h-4zM789 479h4v19h-4zM789 599h4v19h-4zM789 619h4v19h-4zM789 639h4v11h-4zM793 359h2v19h-2zM793 379h2v19h-2zM793 419h2v19h-2zM793 459h2v19h-2zM793 499h2v19h-2zM793 599h2v19h-2zM793 619h2v19h-2zM793 639h2v11h-2zM795 359h2v19h-2zM795 579h2v19h-2zM795 599h2v19h-2zM795 619h2v19h-2zM795 639h2v11h-2zM797 379h2v19h-2zM797 419h2v19h-2zM797 539h2v19h-2zM797 579h2v19h-2zM797 599h2v19h-2zM797 619h2v19h-2zM797 639h2v11h-2zM799 599h4v19h-4zM799 619h4v19h-4zM799 639h4v11h-4zM803 339h2v19h-2zM803 399h2v19h-2zM803 439h2v19h-2zM803 599h2v19h-2zM803 619h2v19h-2zM803 639h2v11h-2zM805 519h3v19h-3zM805 599h3v19h-3zM805 619h3v19h-3zM805 639h3v11h-3zM808 339h2v19h-2zM808 359h2v19h-2zM808 459h2v19h-2zM808 499h2v19h-2zM808 599h2v19h-2zM808 619h2v19h-2zM808 639h2v11h-2zM810 439h4v19h-4zM810 499h4v19h-4zM810 559h4v19h-4zM810 599h4v19h-4zM810 619h4v19h-4zM810 639h4v11h-4zM814 399h2v19h-2zM814 459h2v19h-2zM814 479h2v19h-2zM814 539h2v19h-2zM814 579h2v19h-2zM814 599h2v19h-2zM814 619h2v19h-2zM814 639h2v11h-2zM816 399h3v19h-3zM816 579h3v19h-3zM816 599h3v19h-3zM816 619h3v19h-3zM816 639h3v11h-3zM819 499h2v19h-2zM819 599h2v19h-2zM819 619h2v19h-2zM819 639h2v11h-2zM821 419h2v19h-2zM821 479h2v19h-2zM821 499h2v19h-2zM821 579h2v19h-2zM821 599h2v19h-2zM821 619h2v19h-2zM821 639h2v11h-2zM823 379h2v19h-2zM823 439h2v19h-2zM823 599h2v19h-2zM823 619h2v19h-2zM823 639h2v11h-2zM825 359h3v19h-3zM825 499h3v19h-3zM825 599h3v19h-3zM825 619h3v19h-3zM825 639h3v11h-3zM828 479h3v19h-3zM828 599h3v19h-3zM828 619h3v19h-3zM828 639h3v11h-3zM831 379h4v19h-4zM831 439h4v19h-4zM831 599h4v19h-4zM831 619h4v19h-4zM831 639h4v11h-4zM835 599h2v19h-2zM835 619h2v19h-2zM835 639h2v11h-2zM837 419h2v19h-2zM837 539h2v19h-2zM837 559h2v19h-2zM837 599h2v19h-2zM837 619h2v19h-2zM837 639h2v11h-2zM839 539h2v19h-2zM839 559h2v19h-2zM839 599h2v19h-2zM839 619h2v19h-2zM839 639h2v11h-2zM841 619h4v19h-4zM845 419h4v19h-4zM845 439h4v19h-4zM845 459h4v19h-4zM845 539h4v19h-4zM845 579h4v19h-4zM845 639h4v11h-4zM849 459h2v19h-2zM849 559h2v19h-2zM849 599h2v19h-2zM851 459h4v19h-4zM851 599h4v19h-4zM855 579h2v19h-2zM855 599h2v19h-2zM857 499h3v19h-3zM857 559h3v19h-3zM860 499h3v19h-3zM860 519h3v19h-3zM860 539h3v19h-3zM863 499h2v19h-2zM863 579h2v19h-2zM863 619h2v19h-2zM869 559h3v19h-3zM869 599h3v19h-3zM872 499h2v19h-2zM874 519h2v19h-2zM874 599h2v19h-2zM874 639h2v11h-2zM880 499h2v19h-2zM880 519h2v19h-2zM882 579h2v19h-2zM882 619h2v19h-2zM884 539h2v19h-2zM884 559h2v19h-2zM884 639h2v11h-2zM886 639h2v11h-2zM888 599h3v19h-3zM891 579h2v19h-2zM893 619h2v19h-2zM895 519h2v19h-2zM897 519h3v19h-3zM902 539h2v19h-2zM902 599h2v19h-2zM904 579h2v19h-2zM904 599h2v19h-2zM906 559h3v19h-3zM906 599h3v19h-3zM906 619h3v19h-3zM906 639h3v11h-3zM909 579h2v19h-2zM911 619h4v19h-4zM911 639h4v11h-4zM915 579h4v19h-4zM915 599h4v19h-4zM921 559h2v19h-2zM928 539h2v19h-2zM928 559h2v19h-2zM930 619h2v19h-2zM932 599h2v19h-2zM934 619h2v19h-2zM936 559h2v19h-2zM936 579h2v19h-2zM940 599h2v19h-2zM940 639h2v11h-2zM944 519h2v19h-2zM944 579h2v19h-2zM944 619h2v19h-2zM944 639h2v11h-2zM954 559h2v19h-2zM956 579h2v19h-2zM956 619h2v19h-2zM956 639h2v11h-2zM958 579h2v19h-2zM958 639h2v11h-2zM963 539h2v19h-2zM963 639h2v11h-2zM965 559h2v19h-2zM965 619h2v19h-2zM967 619h3v19h-3zM970 579h3v19h-3zM973 619h2v19h-2zM975 499h2v19h-2zM975 539h2v19h-2zM979 539h4v19h-4zM979 639h4v11h-4zM983 519h2v19h-2zM983 559h2v19h-2zM985 619h2v19h-2zM987 479h2v19h-2zM987 579h2v19h-2zM987 619h2v19h-2zM989 479h4v19h-4zM989 499h4v19h-4zM989 639h4v11h-4zM993 479h2v19h-2zM993 579h2v19h-2zM995 479h2v19h-2zM995 539h2v19h-2zM995 559h2v19h-2zM995 579h2v19h-2zM997 519h2v19h-2zM999 599h2v19h-2zM1001 539h2v19h-2zM1001 559h2v19h-2zM1003 599h2v19h-2zM1005 519h3v19h-3zM1005 579h3v19h-3zM1005 619h3v19h-3zM1008 539h2v19h-2zM1008 639h2v11h-2zM1010 519h2v19h-2zM1012 499h3v19h-3zM1012 519h3v19h-3zM1012 539h3v19h-3zM1015 499h3v19h-3zM1018 499h2v19h-2zM1018 519h2v19h-2zM1018 559h2v19h-2zM1020 499h2v19h-2zM1020 559h2v19h-2zM1020 619h2v19h-2zM1020 639h2v11h-2zM1022 539h2v19h-2zM1024 579h2v19h-2zM1024 639h2v11h-2zM1026 599h2v19h-2zM1028 479h3v19h-3zM1028 499h3v19h-3zM1028 539h3v19h-3zM1031 619h4v19h-4zM1035 619h2v19h-2zM1039 459h2v19h-2zM1039 479h2v19h-2zM1039 519h2v19h-2zM1039 539h2v19h-2zM1039 559h2v19h-2zM1041 459h2v19h-2zM1041 479h2v19h-2zM1041 499h2v19h-2zM1041 599h2v19h-2zM1041 639h2v11h-2zM1043 519h3v19h-3zM1043 599h3v19h-3zM1050 459h3v19h-3zM1050 599h3v19h-3zM1061 499h2v19h-2zM1061 539h2v19h-2zM1067 499h2v19h-2zM1067 519h2v19h-2zM1067 639h2v11h-2zM1069 519h2v19h-2zM1069 539h2v19h-2zM1069 579h2v19h-2zM1071 519h4v19h-4zM1071 559h4v19h-4zM1071 579h4v19h-4zM1075 519h4v19h-4zM1075 559h4v19h-4zM1075 599h4v19h-4zM1079 579h2v19h-2zM1081 519h2v19h-2zM1081 619h2v19h-2zM1088 579h2v19h-2zM1090 579h4v19h-4zM1096 559h2v19h-2zM1096 619h2v19h-2zM1098 539h2v19h-2zM1098 599h2v19h-2zM1098 619h2v19h-2zM1100 519h2v19h-2zM1100 559h2v19h-2zM1100 599h2v19h-2zM1102 599h2v19h-2zM1102 639h2v11h-2zM1104 639h2v11h-2zM1106 539h2v19h-2zM1106 579h2v19h-2zM1106 639h2v11h-2zM1108 619h2v19h-2zM1115 619h2v19h-2zM1117 559h3v19h-3zM1120 539h3v19h-3zM1125 559h2v19h-2zM1125 619h2v19h-2zM1127 619h2v19h-2zM1133 539h2v19h-2zM1133 579h2v19h-2zM1139 579h2v19h-2zM1139 619h2v19h-2zM1141 559h4v19h-4zM1141 619h4v19h-4zM1141 639h4v11h-4zM1147 559h4v19h-4zM1147 599h4v19h-4zM1147 639h4v11h-4zM1151 579h2v19h-2zM1151 619h2v19h-2zM1153 639h2v11h-2zM1155 639h2v11h-2zM1157 579h2v19h-2zM1161 579h3v19h-3zM1164 539h2v19h-2zM1164 579h2v19h-2zM1169 559h2v19h-2zM1169 639h2v11h-2zM1175 539h2v19h-2zM1175 559h2v19h-2zM1181 539h2v19h-2zM1186 619h2v19h-2zM1188 499h2v19h-2zM1192 459h4v19h-4zM1192 559h4v19h-4zM1192 579h4v19h-4zM1192 599h4v19h-4zM1196 519h2v19h-2zM1196 619h2v19h-2zM1196 639h2v11h-2zM1198 419h2v19h-2zM1198 639h2v11h-2zM1200 459h2v19h-2zM1200 539h2v19h-2zM1200 599h2v19h-2zM1204 499h3v19h-3zM1204 519h3v19h-3zM1204 599h3v19h-3zM1204 619h3v19h-3zM1207 479h4v19h-4zM1207 499h4v19h-4zM1207 539h4v19h-4zM1207 639h4v11h-4zM1211 519h2v19h-2zM1211 599h2v19h-2zM1211 639h2v11h-2zM1215 419h2v19h-2zM1215 479h2v19h-2zM1215 539h2v19h-2zM1217 419h3v19h-3zM1217 519h3v19h-3zM1217 639h3v11h-3zM1220 419h2v19h-2zM1220 519h2v19h-2zM1220 599h2v19h-2zM1222 419h2v19h-2zM1222 539h2v19h-2zM1224 499h3v19h-3zM1224 539h3v19h-3zM1224 579h3v19h-3zM1227 419h2v19h-2zM1227 639h2v11h-2zM1229 439h2v19h-2zM1229 539h2v19h-2zM1229 599h2v19h-2zM1229 619h2v19h-2zM1231 419h2v19h-2zM1231 519h2v19h-2zM1233 459h2v19h-2zM1233 479h2v19h-2zM1233 579h2v19h-2zM1233 639h2v11h-2zM1237 519h2v19h-2zM1237 619h2v19h-2zM1239 419h4v19h-4zM1239 499h4v19h-4zM1239 639h4v11h-4zM1243 479h2v19h-2zM1243 499h2v19h-2zM1243 579h2v19h-2zM1243 619h2v19h-2zM1243 639h2v11h-2zM1245 539h2v19h-2zM1247 439h3v19h-3zM1247 519h3v19h-3zM1247 559h3v19h-3zM1250 559h2v19h-2zM1252 379h2v19h-2zM1252 439h2v19h-2zM1252 479h2v19h-2zM1252 499h2v19h-2zM1252 579h2v19h-2zM1252 619h2v19h-2zM1254 339h4v19h-4zM1254 379h4v19h-4zM1254 399h4v19h-4zM1254 419h4v19h-4zM1254 459h4v19h-4zM1254 559h4v19h-4zM1258 439h4v19h-4zM1258 459h4v19h-4zM1262 399h2v19h-2zM1264 459h2v19h-2zM1266 299h2v19h-2zM1266 339h2v19h-2zM1266 479h2v19h-2zM1266 499h2v19h-2zM1266 599h2v19h-2zM1268 279h2v19h-2zM1268 339h2v19h-2zM1268 359h2v19h-2zM1268 439h2v19h-2zM1268 599h2v19h-2zM1270 339h3v19h-3zM1270 359h3v19h-3zM1270 379h3v19h-3zM1273 259h3v19h-3zM1273 339h3v19h-3zM1273 479h3v19h-3zM1273 539h3v19h-3zM1273 579h3v19h-3zM1276 359h2v19h-2zM1276 479h2v19h-2zM1276 499h2v19h-2zM1276 539h2v19h-2zM1276 599h2v19h-2zM1278 279h2v19h-2zM1278 479h2v19h-2zM1280 259h2v19h-2zM1280 279h2v19h-2zM1280 479h2v19h-2zM1282 339h2v19h-2zM1282 379h2v19h-2zM1282 479h2v19h-2zM1282 539h2v19h-2zM1282 559h2v19h-2zM1282 639h2v11h-2zM1284 279h2v19h-2zM1284 339h2v19h-2zM1284 419h2v19h-2zM1284 479h2v19h-2zM1284 499h2v19h-2zM1284 579h2v19h-2zM1284 619h2v19h-2zM1286 359h2v19h-2zM1286 419h2v19h-2zM1286 459h2v19h-2zM1286 479h2v19h-2zM1286 499h2v19h-2zM1286 539h2v19h-2zM1288 299h2v19h-2zM1288 399h2v19h-2zM1288 479h2v19h-2zM1290 219h2v19h-2zM1290 259h2v19h-2zM1290 319h2v19h-2zM1290 559h2v19h-2zM1292 199h2v19h-2zM1292 239h2v19h-2zM1292 279h2v19h-2zM1292 479h2v19h-2zM1292 499h2v19h-2zM1294 219h2v19h-2zM1294 319h2v19h-2zM1294 379h2v19h-2zM1294 479h2v19h-2zM1294 539h2v19h-2zM1296 159h4v19h-4zM1296 279h4v19h-4zM1296 419h4v19h-4zM1296 439h4v19h-4zM1296 479h4v19h-4zM1296 499h4v19h-4zM1300 199h2v19h-2zM1300 319h2v19h-2zM1300 439h2v19h-2zM1300 479h2v19h-2zM1300 559h2v19h-2zM1302 199h2v19h-2zM1302 299h2v19h-2zM1302 339h2v19h-2zM1302 399h2v19h-2zM1302 439h2v19h-2zM1302 479h2v19h-2zM1302 539h2v19h-2zM1302 579h2v19h-2zM1302 619h2v19h-2zM1302 639h2v11h-2zM1304 179h4v19h-4zM1304 239h4v19h-4zM1304 279h4v19h-4zM1304 299h4v19h-4zM1304 339h4v19h-4zM1304 439h4v19h-4zM1304 479h4v19h-4zM1304 579h4v19h-4zM1308 139h3v19h-3zM1308 159h3v19h-3zM1308 219h3v19h-3zM1308 259h3v19h-3zM1308 419h3v19h-3zM1308 439h3v19h-3zM1308 479h3v19h-3zM1308 539h3v19h-3zM1311 199h3v19h-3zM1311 239h3v19h-3zM1311 359h3v19h-3zM1311 379h3v19h-3zM1311 439h3v19h-3zM1311 479h3v19h-3zM1311 539h3v19h-3zM1314 299h4v19h-4zM1314 319h4v19h-4zM1314 439h4v19h-4zM1314 479h4v19h-4zM1314 499h4v19h-4zM1314 619h4v19h-4zM1314 639h4v11h-4zM1318 159h2v19h-2zM1318 279h2v19h-2zM1318 319h2v19h-2zM1318 339h2v19h-2zM1318 439h2v19h-2zM1318 459h2v19h-2zM1318 479h2v19h-2zM1318 559h2v19h-2zM1318 579h2v19h-2zM1318 639h2v11h-2zM1320 159h2v19h-2zM1320 179h2v19h-2zM1320 239h2v19h-2zM1320 259h2v19h-2zM1320 339h2v19h-2zM1320 359h2v19h-2zM1320 439h2v19h-2zM1320 539h2v19h-2zM1320 619h2v19h-2zM1320 639h2v11h-2zM1322 119h4v19h-4zM1322 219h4v19h-4zM1322 239h4v19h-4zM1322 279h4v19h-4zM1322 319h4v19h-4zM1322 359h4v19h-4zM1322 439h4v19h-4zM1322 459h4v19h-4zM1322 479h4v19h-4zM1322 579h4v19h-4zM1326 159h2v19h-2zM1326 279h2v19h-2zM1326 439h2v19h-2zM1326 459h2v19h-2zM1326 479h2v19h-2zM1326 639h2v11h-2zM1328 159h2v19h-2zM1328 279h2v19h-2zM1328 339h2v19h-2zM1328 379h2v19h-2zM1328 439h2v19h-2zM1328 479h2v19h-2zM1330 119h2v19h-2zM1330 159h2v19h-2zM1330 299h2v19h-2zM1330 319h2v19h-2zM1330 379h2v19h-2zM1330 439h2v19h-2zM1330 479h2v19h-2zM1330 499h2v19h-2zM1330 539h2v19h-2zM1330 639h2v11h-2zM1332 159h4v19h-4zM1332 219h4v19h-4zM1332 359h4v19h-4zM1332 419h4v19h-4zM1332 439h4v19h-4zM1332 479h4v19h-4zM1332 499h4v19h-4zM1336 159h2v19h-2zM1336 199h2v19h-2zM1336 279h2v19h-2zM1336 319h2v19h-2zM1336 419h2v19h-2zM1336 439h2v19h-2zM1336 479h2v19h-2zM1336 539h2v19h-2zM1336 559h2v19h-2zM1338 139h2v19h-2zM1338 199h2v19h-2zM1338 279h2v19h-2zM1338 319h2v19h-2zM1338 339h2v19h-2zM1338 479h2v19h-2zM1338 499h2v19h-2zM1338 559h2v19h-2zM1340 119h2v19h-2zM1340 159h2v19h-2zM1340 279h2v19h-2zM1340 319h2v19h-2zM1340 439h2v19h-2zM1340 459h2v19h-2zM1340 479h2v19h-2zM1340 519h2v19h-2zM1342 159h4v19h-4zM1342 179h4v19h-4zM1342 299h4v19h-4zM1342 439h4v19h-4zM1342 459h4v19h-4zM1342 479h4v19h-4zM1342 599h4v19h-4zM1346 99h2v19h-2zM1346 139h2v19h-2zM1346 159h2v19h-2zM1346 339h2v19h-2zM1346 439h2v19h-2zM1346 459h2v19h-2zM1346 479h2v19h-2zM1346 559h2v19h-2zM1346 599h2v19h-2zM1348 139h2v19h-2zM1348 239h2v19h-2zM1348 259h2v19h-2zM1348 299h2v19h-2zM1348 379h2v19h-2zM1348 419h2v19h-2zM1348 439h2v19h-2zM1348 479h2v19h-2zM1348 579h2v19h-2zM1350 119h2v19h-2zM1350 179h2v19h-2zM1350 239h2v19h-2zM1350 439h2v19h-2zM1350 459h2v19h-2zM1350 479h2v19h-2zM1352 119h2v19h-2zM1352 179h2v19h-2zM1352 239h2v19h-2zM1352 439h2v19h-2zM1352 479h2v19h-2zM1352 639h2v11h-2zM1354 139h2v19h-2zM1354 219h2v19h-2zM1354 239h2v19h-2zM1354 299h2v19h-2zM1354 339h2v19h-2zM1354 439h2v19h-2zM1354 479h2v19h-2zM1356 159h3v19h-3zM1356 179h3v19h-3zM1356 319h3v19h-3zM1356 439h3v19h-3zM1356 479h3v19h-3zM1356 499h3v19h-3zM1356 559h3v19h-3zM1359 319h3v19h-3zM1359 439h3v19h-3zM1359 479h3v19h-3zM1362 99h2v19h-2zM1362 379h2v19h-2zM1362 439h2v19h-2zM1362 479h2v19h-2zM1362 499h2v19h-2zM1362 539h2v19h-2zM1364 239h2v19h-2zM1364 279h2v19h-2zM1364 299h2v19h-2zM1364 339h2v19h-2zM1364 439h2v19h-2zM1364 459h2v19h-2zM1364 479h2v19h-2zM1364 579h2v19h-2zM1366 99h2v19h-2zM1366 219h2v19h-2zM1366 379h2v19h-2zM1366 439h2v19h-2zM1366 459h2v19h-2zM1366 479h2v19h-2zM1366 559h2v19h-2zM1366 599h2v19h-2zM1368 119h3v19h-3zM1368 139h3v19h-3zM1368 199h3v19h-3zM1368 319h3v19h-3zM1368 339h3v19h-3zM1368 439h3v19h-3zM1368 479h3v19h-3zM1368 539h3v19h-3zM1368 639h3v11h-3zM1371 119h2v19h-2zM1371 139h2v19h-2zM1371 339h2v19h-2zM1371 359h2v19h-2zM1371 439h2v19h-2zM1371 479h2v19h-2zM1371 579h2v19h-2zM1371 639h2v11h-2zM1373 139h3v19h-3zM1373 159h3v19h-3zM1373 179h3v19h-3zM1373 199h3v19h-3zM1373 219h3v19h-3zM1373 239h3v19h-3zM1373 259h3v19h-3zM1373 279h3v19h-3zM1373 299h3v19h-3zM1373 439h3v19h-3zM1373 479h3v19h-3zM1373 559h3v19h-3zM1373 579h3v19h-3zM1376 119h2v19h-2zM1376 219h2v19h-2zM1376 319h2v19h-2zM1376 359h2v19h-2zM1376 439h2v19h-2zM1376 479h2v19h-2zM1376 499h2v19h-2zM1376 559h2v19h-2zM1376 599h2v19h-2zM1378 119h2v19h-2zM1378 159h2v19h-2zM1378 179h2v19h-2zM1378 379h2v19h-2zM1378 419h2v19h-2zM1378 439h2v19h-2zM1378 479h2v19h-2zM1378 519h2v19h-2zM1378 599h2v19h-2zM1378 639h2v11h-2zM1380 179h2v19h-2zM1380 199h2v19h-2zM1380 419h2v19h-2zM1380 439h2v19h-2zM1380 479h2v19h-2zM1380 539h2v19h-2zM1380 559h2v19h-2zM1380 579h2v19h-2zM1380 619h2v19h-2zM1382 99h2v19h-2zM1382 139h2v19h-2zM1382 159h2v19h-2zM1382 179h2v19h-2zM1382 299h2v19h-2zM1382 419h2v19h-2zM1382 439h2v19h-2zM1382 459h2v19h-2zM1382 479h2v19h-2zM1382 619h2v19h-2zM1384 199h2v19h-2zM1384 219h2v19h-2zM1384 239h2v19h-2zM1384 259h2v19h-2zM1384 379h2v19h-2zM1384 439h2v19h-2zM1384 479h2v19h-2zM1384 539h2v19h-2zM1384 559h2v19h-2zM1384 619h2v19h-2zM1386 159h2v19h-2zM1386 179h2v19h-2zM1386 299h2v19h-2zM1386 359h2v19h-2zM1386 399h2v19h-2zM1386 439h2v19h-2zM1386 459h2v19h-2zM1386 479h2v19h-2zM1386 499h2v19h-2zM1386 639h2v11h-2zM1388 99h2v19h-2zM1388 139h2v19h-2zM1388 159h2v19h-2zM1388 199h2v19h-2zM1388 259h2v19h-2zM1388 299h2v19h-2zM1388 379h2v19h-2zM1388 439h2v19h-2zM1388 479h2v19h-2zM1388 499h2v19h-2zM1388 619h2v19h-2zM1390 119h3v19h-3zM1390 159h3v19h-3zM1390 199h3v19h-3zM1390 219h3v19h-3zM1390 279h3v19h-3zM1390 339h3v19h-3zM1390 439h3v19h-3zM1390 599h3v19h-3zM1393 159h3v19h-3zM1393 259h3v19h-3zM1393 439h3v19h-3zM1393 459h3v19h-3zM1393 479h3v19h-3zM1393 559h3v19h-3zM1393 639h3v11h-3zM1396 119h2v19h-2zM1396 139h2v19h-2zM1396 159h2v19h-2zM1396 319h2v19h-2zM1396 359h2v19h-2zM1396 439h2v19h-2zM1396 479h2v19h-2zM1396 519h2v19h-2zM1396 539h2v19h-2zM1396 599h2v19h-2zM1396 619h2v19h-2zM1398 179h2v19h-2zM1398 219h2v19h-2zM1398 239h2v19h-2zM1398 379h2v19h-2zM1398 419h2v19h-2zM1398 439h2v19h-2zM1398 479h2v19h-2zM1398 559h2v19h-2zM1398 619h2v19h-2zM1400 99h4v19h-4zM1400 239h4v19h-4zM1400 279h4v19h-4zM1400 439h4v19h-4zM1400 459h4v19h-4zM1400 559h4v19h-4zM1400 639h4v11h-4zM1404 159h2v19h-2zM1404 179h2v19h-2zM1404 199h2v19h-2zM1404 239h2v19h-2zM1404 299h2v19h-2zM1404 439h2v19h-2zM1404 479h2v19h-2zM1404 499h2v19h-2zM1406 159h4v19h-4zM1406 299h4v19h-4zM1406 339h4v19h-4zM1406 419h4v19h-4zM1406 439h4v19h-4zM1406 479h4v19h-4zM1406 579h4v19h-4zM1410 199h3v19h-3zM1410 379h3v19h-3zM1410 419h3v19h-3zM1410 439h3v19h-3zM1410 479h3v19h-3zM1410 499h3v19h-3zM1410 559h3v19h-3zM1410 599h3v19h-3zM1413 179h2v19h-2zM1413 279h2v19h-2zM1413 299h2v19h-2zM1413 319h2v19h-2zM1413 439h2v19h-2zM1413 479h2v19h-2zM1413 519h2v19h-2zM1413 539h2v19h-2zM1413 599h2v19h-2zM1415 159h2v19h-2zM1415 179h2v19h-2zM1415 279h2v19h-2zM1415 439h2v19h-2zM1415 479h2v19h-2zM1415 559h2v19h-2zM1415 599h2v19h-2zM1417 99h3v19h-3zM1417 119h3v19h-3zM1417 259h3v19h-3zM1417 299h3v19h-3zM1417 319h3v19h-3zM1417 459h3v19h-3zM1417 479h3v19h-3zM1417 539h3v19h-3zM1417 579h3v19h-3zM1417 619h3v19h-3zM1417 639h3v11h-3zM1420 199h2v19h-2zM1420 239h2v19h-2zM1420 279h2v19h-2zM1420 359h2v19h-2zM1420 439h2v19h-2zM1420 479h2v19h-2zM1420 499h2v19h-2zM1420 619h2v19h-2zM1422 99h4v19h-4zM1422 239h4v19h-4zM1422 259h4v19h-4zM1422 359h4v19h-4zM1422 439h4v19h-4zM1422 479h4v19h-4zM1422 519h4v19h-4zM1422 539h4v19h-4zM1426 239h4v19h-4zM1426 279h4v19h-4zM1426 299h4v19h-4zM1426 439h4v19h-4zM1426 459h4v19h-4zM1426 559h4v19h-4zM1430 119h2v19h-2zM1430 179h2v19h-2zM1430 239h2v19h-2zM1430 359h2v19h-2zM1430 419h2v19h-2zM1430 439h2v19h-2zM1430 479h2v19h-2zM1430 499h2v19h-2zM1430 559h2v19h-2zM1430 599h2v19h-2zM1432 99h2v19h-2zM1432 279h2v19h-2zM1432 439h2v19h-2zM1432 459h2v19h-2zM1432 479h2v19h-2zM1432 559h2v19h-2zM1432 579h2v19h-2zM1432 599h2v19h-2zM1432 619h2v19h-2zM1434 159h2v19h-2zM1434 179h2v19h-2zM1434 319h2v19h-2zM1434 339h2v19h-2zM1434 439h2v19h-2zM1434 459h2v19h-2zM1434 539h2v19h-2zM1434 619h2v19h-2zM1436 79h2v19h-2zM1436 119h2v19h-2zM1436 179h2v19h-2zM1436 319h2v19h-2zM1436 359h2v19h-2zM1436 439h2v19h-2zM1436 459h2v19h-2zM1436 479h2v19h-2zM1436 499h2v19h-2zM1436 619h2v19h-2zM1438 139h2v19h-2zM1438 179h2v19h-2zM1438 199h2v19h-2zM1438 279h2v19h-2zM1438 359h2v19h-2zM1438 439h2v19h-2zM1438 479h2v19h-2zM1438 539h2v19h-2zM1438 559h2v19h-2zM1440 79h3v19h-3zM1440 119h3v19h-3zM1440 219h3v19h-3zM1440 319h3v19h-3zM1440 479h3v19h-3zM1440 599h3v19h-3zM1440 619h3v19h-3zM1443 79h2v19h-2zM1443 119h2v19h-2zM1443 239h2v19h-2zM1443 359h2v19h-2zM1443 439h2v19h-2zM1443 459h2v19h-2zM1443 479h2v19h-2zM1443 499h2v19h-2zM1443 539h2v19h-2zM1443 559h2v19h-2zM1443 639h2v11h-2zM1445 119h4v19h-4zM1445 259h4v19h-4zM1445 299h4v19h-4zM1445 379h4v19h-4zM1445 439h4v19h-4zM1445 459h4v19h-4zM1445 479h4v19h-4zM1445 539h4v19h-4zM1445 579h4v19h-4zM1445 599h4v19h-4zM1449 99h2v19h-2zM1449 259h2v19h-2zM1449 319h2v19h-2zM1449 339h2v19h-2zM1449 439h2v19h-2zM1449 479h2v19h-2zM1449 539h2v19h-2zM1449 619h2v19h-2zM1451 259h2v19h-2zM1451 379h2v19h-2zM1451 439h2v19h-2zM1451 479h2v19h-2zM1451 559h2v19h-2zM1451 579h2v19h-2zM1453 99h3v19h-3zM1453 119h3v19h-3zM1453 259h3v19h-3zM1453 419h3v19h-3zM1453 439h3v19h-3zM1453 479h3v19h-3zM1453 539h3v19h-3zM1453 639h3v11h-3zM1456 99h2v19h-2zM1456 119h2v19h-2zM1456 139h2v19h-2zM1456 239h2v19h-2zM1456 299h2v19h-2zM1456 319h2v19h-2zM1456 359h2v19h-2zM1456 439h2v19h-2zM1456 459h2v19h-2zM1456 479h2v19h-2zM1456 499h2v19h-2zM1456 559h2v19h-2zM1456 599h2v19h-2zM1458 119h2v19h-2zM1458 259h2v19h-2zM1458 279h2v19h-2zM1458 359h2v19h-2zM1458 439h2v19h-2zM1458 459h2v19h-2zM1458 479h2v19h-2zM1458 499h2v19h-2zM1460 99h2v19h-2zM1460 119h2v19h-2zM1460 179h2v19h-2zM1460 259h2v19h-2zM1460 319h2v19h-2zM1460 339h2v19h-2zM1460 419h2v19h-2zM1460 439h2v19h-2zM1460 479h2v19h-2zM1460 519h2v19h-2zM1460 599h2v19h-2zM1460 639h2v11h-2zM1462 119h2v19h-2zM1462 179h2v19h-2zM1462 199h2v19h-2zM1462 259h2v19h-2zM1462 279h2v19h-2zM1462 319h2v19h-2zM1462 379h2v19h-2zM1462 439h2v19h-2zM1462 479h2v19h-2zM1462 639h2v11h-2zM1464 119h3v19h-3zM1464 179h3v19h-3zM1464 239h3v19h-3zM1464 319h3v19h-3zM1464 439h3v19h-3zM1464 479h3v19h-3zM1464 559h3v19h-3zM1464 639h3v11h-3zM1467 179h2v19h-2zM1467 199h2v19h-2zM1467 399h2v19h-2zM1467 439h2v19h-2zM1467 459h2v19h-2zM1467 479h2v19h-2zM1467 559h2v19h-2zM1467 579h2v19h-2zM1467 599h2v19h-2zM1467 619h2v19h-2zM1469 179h3v19h-3zM1469 279h3v19h-3zM1469 299h3v19h-3zM1469 439h3v19h-3zM1469 479h3v19h-3zM1469 619h3v19h-3zM1472 99h2v19h-2zM1472 159h2v19h-2zM1472 259h2v19h-2zM1472 279h2v19h-2zM1472 319h2v19h-2zM1472 359h2v19h-2zM1472 439h2v19h-2zM1472 459h2v19h-2zM1472 479h2v19h-2zM1472 579h2v19h-2zM1472 619h2v19h-2zM1474 279h3v19h-3zM1474 299h3v19h-3zM1474 319h3v19h-3zM1474 419h3v19h-3zM1474 439h3v19h-3zM1474 479h3v19h-3zM1474 619h3v19h-3zM1474 639h3v11h-3zM1477 119h2v19h-2zM1477 139h2v19h-2zM1477 159h2v19h-2zM1477 219h2v19h-2zM1477 259h2v19h-2zM1477 279h2v19h-2zM1477 319h2v19h-2zM1477 439h2v19h-2zM1477 459h2v19h-2zM1477 479h2v19h-2zM1477 539h2v19h-2zM1477 599h2v19h-2zM1479 119h2v19h-2zM1479 439h2v19h-2zM1479 479h2v19h-2zM1479 539h2v19h-2zM1479 559h2v19h-2zM1481 119h1v19h-1zM1481 139h1v19h-1zM1481 239h1v19h-1zM1481 259h1v19h-1zM1481 419h1v19h-1zM1481 439h1v19h-1zM1481 479h1v19h-1zM1481 579h1v19h-1z"/><path fill="#005274" d="M644 479h4v19h-4zM644 499h4v19h-4zM644 519h4v19h-4zM644 639h4v11h-4zM648 639h7v11h-7zM655 559h2v19h-2zM655 579h2v19h-2zM655 599h2v19h-2zM657 499h4v19h-4zM657 559h4v19h-4zM661 519h4v19h-4zM661 559h4v19h-4zM665 539h2v19h-2zM665 579h2v19h-2zM665 619h2v19h-2zM665 639h2v11h-2zM667 479h2v19h-2zM667 499h2v19h-2zM667 539h2v19h-2zM669 519h2v19h-2zM669 639h2v11h-2zM671 419h2v19h-2zM671 539h2v19h-2zM673 419h2v19h-2zM673 499h2v19h-2zM673 579h2v19h-2zM675 419h2v19h-2zM675 559h2v19h-2zM675 599h2v19h-2zM675 619h2v19h-2zM677 439h4v19h-4zM677 519h4v19h-4zM677 539h4v19h-4zM677 579h4v19h-4zM681 419h4v19h-4zM681 479h4v19h-4zM681 559h4v19h-4zM685 619h4v19h-4zM689 439h2v19h-2zM689 479h2v19h-2zM689 559h2v19h-2zM689 599h2v19h-2zM689 619h2v19h-2zM691 359h2v19h-2zM691 399h2v19h-2zM691 499h2v19h-2zM691 599h2v19h-2zM693 519h2v19h-2zM693 539h2v19h-2zM693 599h2v19h-2zM693 639h2v11h-2zM695 359h2v19h-2zM695 399h2v19h-2zM695 419h2v19h-2zM695 439h2v19h-2zM695 579h2v19h-2zM695 599h2v19h-2zM697 479h2v19h-2zM697 559h2v19h-2zM697 599h2v19h-2zM699 379h2v19h-2zM699 419h2v19h-2zM699 439h2v19h-2zM699 499h2v19h-2zM699 559h2v19h-2zM699 599h2v19h-2zM701 379h4v19h-4zM701 399h4v19h-4zM701 439h4v19h-4zM701 459h4v19h-4zM701 499h4v19h-4zM701 539h4v19h-4zM701 579h4v19h-4zM701 599h4v19h-4zM705 459h2v19h-2zM705 479h2v19h-2zM705 599h2v19h-2zM705 619h2v19h-2zM707 359h2v19h-2zM707 599h2v19h-2zM709 479h2v19h-2zM709 539h2v19h-2zM709 599h2v19h-2zM711 359h2v19h-2zM711 399h2v19h-2zM711 579h2v19h-2zM711 599h2v19h-2zM711 619h2v19h-2zM713 399h2v19h-2zM713 539h2v19h-2zM713 579h2v19h-2zM713 599h2v19h-2zM713 619h2v19h-2zM715 459h4v19h-4zM715 499h4v19h-4zM715 559h4v19h-4zM715 579h4v19h-4zM715 599h4v19h-4zM715 619h4v19h-4zM719 499h2v19h-2zM719 539h2v19h-2zM719 579h2v19h-2zM719 599h2v19h-2zM719 619h2v19h-2zM721 379h2v19h-2zM721 579h2v19h-2zM721 599h2v19h-2zM721 619h2v19h-2zM723 399h4v19h-4zM723 419h4v19h-4zM723 499h4v19h-4zM723 599h4v19h-4zM727 359h2v19h-2zM727 419h2v19h-2zM727 579h2v19h-2zM727 599h2v19h-2zM729 419h2v19h-2zM729 599h2v19h-2zM731 419h4v19h-4zM731 599h4v19h-4zM731 619h4v19h-4zM735 399h2v19h-2zM735 419h2v19h-2zM735 599h2v19h-2zM737 339h2v19h-2zM737 439h2v19h-2zM737 519h2v19h-2zM737 539h2v19h-2zM737 559h2v19h-2zM739 359h3v19h-3zM739 379h3v19h-3zM739 419h3v19h-3zM739 479h3v19h-3zM739 519h3v19h-3zM739 539h3v19h-3zM739 599h3v19h-3zM742 419h2v19h-2zM742 459h2v19h-2zM742 499h2v19h-2zM742 599h2v19h-2zM742 619h2v19h-2zM744 499h2v19h-2zM744 519h2v19h-2zM744 579h2v19h-2zM744 599h2v19h-2zM744 639h2v11h-2zM746 379h2v19h-2zM746 399h2v19h-2zM746 519h2v19h-2zM746 559h2v19h-2zM746 579h2v19h-2zM748 379h2v19h-2zM748 439h2v19h-2zM748 599h2v19h-2zM748 639h2v11h-2zM750 399h2v19h-2zM750 419h2v19h-2zM750 519h2v19h-2zM750 579h2v19h-2zM750 599h2v19h-2zM750 639h2v11h-2zM752 499h2v19h-2zM752 559h2v19h-2zM752 599h2v19h-2zM754 459h2v19h-2zM754 539h2v19h-2zM754 599h2v19h-2zM754 639h2v11h-2zM756 439h2v19h-2zM756 499h2v19h-2zM756 599h2v19h-2zM758 379h2v19h-2zM758 559h2v19h-2zM758 599h2v19h-2zM758 639h2v11h-2zM760 359h2v19h-2zM760 379h2v19h-2zM760 399h2v19h-2zM760 419h2v19h-2zM760 439h2v19h-2zM760 479h2v19h-2zM760 559h2v19h-2zM760 579h2v19h-2zM760 599h2v19h-2zM762 419h3v19h-3zM762 459h3v19h-3zM762 539h3v19h-3zM762 619h3v19h-3zM765 439h4v19h-4zM765 499h4v19h-4zM765 559h4v19h-4zM769 439h4v19h-4zM769 479h4v19h-4zM769 599h4v19h-4zM773 479h2v19h-2zM773 499h2v19h-2zM773 519h2v19h-2zM773 579h2v19h-2zM773 619h2v19h-2zM773 639h2v11h-2zM775 419h2v19h-2zM775 459h2v19h-2zM775 479h2v19h-2zM775 619h2v19h-2zM777 459h2v19h-2zM777 579h2v19h-2zM777 599h2v19h-2zM779 419h2v19h-2zM779 579h2v19h-2zM779 599h2v19h-2zM779 619h2v19h-2zM781 519h2v19h-2zM783 419h2v19h-2zM783 479h2v19h-2zM783 539h2v19h-2zM785 439h2v19h-2zM785 459h2v19h-2zM785 519h2v19h-2zM785 559h2v19h-2zM785 579h2v19h-2zM787 499h2v19h-2zM787 579h2v19h-2zM789 399h4v19h-4zM789 439h4v19h-4zM789 499h4v19h-4zM789 519h4v19h-4zM793 399h2v19h-2zM793 579h2v19h-2zM795 419h2v19h-2zM795 439h2v19h-2zM795 539h2v19h-2zM795 559h2v19h-2zM797 399h2v19h-2zM797 499h2v19h-2zM797 559h2v19h-2zM799 499h4v19h-4zM799 539h4v19h-4zM805 379h3v19h-3zM805 439h3v19h-3zM805 459h3v19h-3zM805 479h3v19h-3zM808 419h2v19h-2zM808 439h2v19h-2zM808 479h2v19h-2zM808 539h2v19h-2zM810 379h4v19h-4zM810 459h4v19h-4zM810 519h4v19h-4zM814 439h2v19h-2zM819 379h2v19h-2zM819 439h2v19h-2zM821 399h2v19h-2zM821 439h2v19h-2zM821 559h2v19h-2zM823 459h2v19h-2zM823 479h2v19h-2zM823 499h2v19h-2zM823 519h2v19h-2zM823 559h2v19h-2zM825 379h3v19h-3zM825 559h3v19h-3zM828 359h3v19h-3zM828 399h3v19h-3zM828 439h3v19h-3zM828 559h3v19h-3zM828 579h3v19h-3zM831 519h4v19h-4zM835 519h2v19h-2zM835 559h2v19h-2zM837 579h2v19h-2zM839 439h2v19h-2zM841 419h4v19h-4zM841 479h4v19h-4zM841 499h4v19h-4zM841 639h4v11h-4zM845 559h4v19h-4zM849 479h2v19h-2zM849 539h2v19h-2zM849 579h2v19h-2zM851 499h4v19h-4zM851 519h4v19h-4zM851 559h4v19h-4zM851 639h4v11h-4zM857 539h3v19h-3zM857 579h3v19h-3zM860 479h3v19h-3zM860 619h3v19h-3zM860 639h3v11h-3zM863 639h2v11h-2zM865 499h2v19h-2zM865 579h2v19h-2zM865 619h2v19h-2zM867 499h2v19h-2zM867 539h2v19h-2zM867 559h2v19h-2zM869 579h3v19h-3zM872 639h2v11h-2zM874 559h2v19h-2zM876 519h2v19h-2zM876 539h2v19h-2zM876 559h2v19h-2zM878 499h2v19h-2zM878 619h2v19h-2zM878 639h2v11h-2zM882 639h2v11h-2zM886 539h2v19h-2zM886 599h2v19h-2zM888 519h3v19h-3zM891 599h2v19h-2zM893 539h2v19h-2zM895 559h2v19h-2zM895 579h2v19h-2zM897 639h3v11h-3zM900 639h2v11h-2zM902 619h2v19h-2zM904 639h2v11h-2zM906 519h3v19h-3zM906 579h3v19h-3zM911 539h4v19h-4zM915 539h4v19h-4zM915 619h4v19h-4zM915 639h4v11h-4zM919 579h2v19h-2zM919 619h2v19h-2zM921 539h2v19h-2zM921 579h2v19h-2zM928 579h2v19h-2zM928 639h2v11h-2zM930 559h2v19h-2zM930 579h2v19h-2zM932 619h2v19h-2zM936 599h2v19h-2zM942 519h2v19h-2zM942 619h2v19h-2zM946 539h3v19h-3zM946 559h3v19h-3zM946 619h3v19h-3zM952 519h2v19h-2zM952 639h2v11h-2zM954 579h2v19h-2zM954 639h2v11h-2zM956 559h2v19h-2zM956 599h2v19h-2zM958 539h2v19h-2zM958 599h2v19h-2zM958 619h2v19h-2zM960 579h3v19h-3zM960 599h3v19h-3zM963 559h2v19h-2zM967 559h3v19h-3zM967 599h3v19h-3zM970 619h3v19h-3zM973 599h2v19h-2zM975 599h2v19h-2zM975 639h2v11h-2zM977 559h2v19h-2zM983 579h2v19h-2zM983 599h2v19h-2zM983 639h2v11h-2zM985 559h2v19h-2zM985 579h2v19h-2zM989 519h4v19h-4zM989 599h4v19h-4zM993 459h2v19h-2zM993 539h2v19h-2zM995 599h2v19h-2zM995 619h2v19h-2zM997 499h2v19h-2zM999 459h2v19h-2zM999 479h2v19h-2zM999 499h2v19h-2zM1001 599h2v19h-2zM1003 499h2v19h-2zM1005 479h3v19h-3zM1005 559h3v19h-3zM1005 639h3v11h-3zM1008 559h2v19h-2zM1008 579h2v19h-2zM1008 619h2v19h-2zM1010 499h2v19h-2zM1010 559h2v19h-2zM1010 579h2v19h-2zM1010 639h2v11h-2zM1012 479h3v19h-3zM1012 559h3v19h-3zM1012 579h3v19h-3zM1015 519h3v19h-3zM1015 559h3v19h-3zM1015 579h3v19h-3zM1018 579h2v19h-2zM1018 599h2v19h-2zM1018 639h2v11h-2zM1020 539h2v19h-2zM1022 479h2v19h-2zM1022 519h2v19h-2zM1024 519h2v19h-2zM1024 539h2v19h-2zM1024 599h2v19h-2zM1026 579h2v19h-2zM1026 639h2v11h-2zM1028 579h3v19h-3zM1028 599h3v19h-3zM1028 639h3v11h-3zM1031 459h4v19h-4zM1031 479h4v19h-4zM1031 499h4v19h-4zM1031 559h4v19h-4zM1031 579h4v19h-4zM1031 599h4v19h-4zM1035 499h2v19h-2zM1035 559h2v19h-2zM1037 499h2v19h-2zM1037 539h2v19h-2zM1039 579h2v19h-2zM1041 539h2v19h-2zM1043 479h3v19h-3zM1043 539h3v19h-3zM1043 579h3v19h-3zM1046 479h4v19h-4zM1046 619h4v19h-4zM1050 519h3v19h-3zM1050 539h3v19h-3zM1050 579h3v19h-3zM1050 619h3v19h-3zM1053 499h4v19h-4zM1053 519h4v19h-4zM1053 579h4v19h-4zM1053 639h4v11h-4zM1057 519h4v19h-4zM1057 559h4v19h-4zM1057 599h4v19h-4zM1057 619h4v19h-4zM1057 639h4v11h-4zM1061 519h2v19h-2zM1063 519h2v19h-2zM1063 559h2v19h-2zM1063 599h2v19h-2zM1063 639h2v11h-2zM1065 499h2v19h-2zM1065 599h2v19h-2zM1067 619h2v19h-2zM1069 599h2v19h-2zM1069 619h2v19h-2zM1071 619h4v19h-4zM1075 499h4v19h-4zM1075 579h4v19h-4zM1079 519h2v19h-2zM1079 639h2v11h-2zM1083 499h2v19h-2zM1083 519h2v19h-2zM1083 539h2v19h-2zM1083 619h2v19h-2zM1085 539h3v19h-3zM1088 559h2v19h-2zM1088 619h2v19h-2zM1088 639h2v11h-2zM1090 639h4v11h-4zM1094 499h2v19h-2zM1094 519h2v19h-2zM1096 539h2v19h-2zM1096 579h2v19h-2zM1096 639h2v11h-2zM1098 519h2v19h-2zM1098 579h2v19h-2zM1100 639h2v11h-2zM1102 539h2v19h-2zM1102 559h2v19h-2zM1104 519h2v19h-2zM1106 619h2v19h-2zM1108 639h2v11h-2zM1110 539h3v19h-3zM1110 559h3v19h-3zM1117 539h3v19h-3zM1120 579h3v19h-3zM1120 599h3v19h-3zM1123 519h2v19h-2zM1123 559h2v19h-2zM1123 579h2v19h-2zM1123 599h2v19h-2zM1125 539h2v19h-2zM1127 539h2v19h-2zM1127 579h2v19h-2zM1127 639h2v11h-2zM1129 539h2v19h-2zM1129 599h2v19h-2zM1129 639h2v11h-2zM1131 559h2v19h-2zM1131 599h2v19h-2zM1133 559h2v19h-2zM1135 599h2v19h-2zM1135 639h2v11h-2zM1137 579h2v19h-2zM1137 619h2v19h-2zM1137 639h2v11h-2zM1139 599h2v19h-2zM1139 639h2v11h-2zM1141 579h4v19h-4zM1145 579h2v19h-2zM1145 619h2v19h-2zM1147 619h4v19h-4zM1153 619h2v19h-2zM1157 559h2v19h-2zM1157 639h2v11h-2zM1159 599h2v19h-2zM1164 599h2v19h-2zM1166 579h3v19h-3zM1166 599h3v19h-3zM1166 639h3v11h-3zM1169 539h2v19h-2zM1171 539h4v19h-4zM1171 559h4v19h-4zM1171 579h4v19h-4zM1171 619h4v19h-4zM1175 599h2v19h-2zM1175 639h2v11h-2zM1177 579h2v19h-2zM1177 599h2v19h-2zM1179 559h2v19h-2zM1179 579h2v19h-2zM1179 599h2v19h-2zM1181 519h2v19h-2zM1181 579h2v19h-2zM1181 599h2v19h-2zM1181 619h2v19h-2zM1183 519h3v19h-3zM1183 539h3v19h-3zM1186 599h2v19h-2zM1188 539h2v19h-2zM1190 499h2v19h-2zM1190 519h2v19h-2zM1190 539h2v19h-2zM1190 599h2v19h-2zM1192 519h4v19h-4zM1196 439h2v19h-2zM1196 459h2v19h-2zM1196 499h2v19h-2zM1196 539h2v19h-2zM1198 459h2v19h-2zM1198 499h2v19h-2zM1198 539h2v19h-2zM1198 559h2v19h-2zM1198 599h2v19h-2zM1198 619h2v19h-2zM1202 619h2v19h-2zM1204 419h3v19h-3zM1204 539h3v19h-3zM1204 559h3v19h-3zM1204 639h3v11h-3zM1207 459h4v19h-4zM1207 559h4v19h-4zM1207 599h4v19h-4zM1207 619h4v19h-4zM1213 459h2v19h-2zM1215 459h2v19h-2zM1215 579h2v19h-2zM1217 459h3v19h-3zM1217 539h3v19h-3zM1217 599h3v19h-3zM1220 399h2v19h-2zM1220 459h2v19h-2zM1220 479h2v19h-2zM1220 499h2v19h-2zM1220 539h2v19h-2zM1220 579h2v19h-2zM1222 459h2v19h-2zM1222 479h2v19h-2zM1222 499h2v19h-2zM1222 519h2v19h-2zM1222 599h2v19h-2zM1224 459h3v19h-3zM1224 559h3v19h-3zM1224 599h3v19h-3zM1224 619h3v19h-3zM1224 639h3v11h-3zM1227 559h2v19h-2zM1227 579h2v19h-2zM1229 519h2v19h-2zM1231 439h2v19h-2zM1231 459h2v19h-2zM1233 559h2v19h-2zM1235 439h2v19h-2zM1235 519h2v19h-2zM1235 599h2v19h-2zM1235 639h2v11h-2zM1237 399h2v19h-2zM1237 459h2v19h-2zM1243 419h2v19h-2zM1245 579h2v19h-2zM1245 599h2v19h-2zM1245 619h2v19h-2zM1247 459h3v19h-3zM1247 479h3v19h-3zM1247 499h3v19h-3zM1250 379h2v19h-2zM1250 439h2v19h-2zM1250 539h2v19h-2zM1250 579h2v19h-2zM1250 599h2v19h-2zM1252 399h2v19h-2zM1252 599h2v19h-2zM1254 519h4v19h-4zM1254 539h4v19h-4zM1254 599h4v19h-4zM1258 359h4v19h-4zM1258 379h4v19h-4zM1258 399h4v19h-4zM1258 419h4v19h-4zM1258 619h4v19h-4zM1262 339h2v19h-2zM1262 619h2v19h-2zM1264 319h2v19h-2zM1264 399h2v19h-2zM1264 499h2v19h-2zM1264 619h2v19h-2zM1264 639h2v11h-2zM1266 279h2v19h-2zM1266 399h2v19h-2zM1266 559h2v19h-2zM1266 579h2v19h-2zM1268 299h2v19h-2zM1268 499h2v19h-2zM1270 319h3v19h-3zM1270 439h3v19h-3zM1270 459h3v19h-3zM1270 599h3v19h-3zM1273 279h3v19h-3zM1273 359h3v19h-3zM1273 639h3v11h-3zM1276 259h2v19h-2zM1276 339h2v19h-2zM1276 439h2v19h-2zM1276 579h2v19h-2zM1278 319h2v19h-2zM1278 419h2v19h-2zM1278 439h2v19h-2zM1280 319h2v19h-2zM1280 339h2v19h-2zM1280 459h2v19h-2zM1280 559h2v19h-2zM1280 619h2v19h-2zM1282 279h2v19h-2zM1282 399h2v19h-2zM1282 419h2v19h-2zM1282 619h2v19h-2zM1284 259h2v19h-2zM1284 399h2v19h-2zM1284 439h2v19h-2zM1284 539h2v19h-2zM1284 559h2v19h-2zM1286 259h2v19h-2zM1286 299h2v19h-2zM1286 339h2v19h-2zM1286 379h2v19h-2zM1286 559h2v19h-2zM1286 619h2v19h-2zM1286 639h2v11h-2zM1288 199h2v19h-2zM1288 279h2v19h-2zM1288 319h2v19h-2zM1288 599h2v19h-2zM1290 239h2v19h-2zM1290 299h2v19h-2zM1290 339h2v19h-2zM1290 439h2v19h-2zM1290 459h2v19h-2zM1290 479h2v19h-2zM1290 579h2v19h-2zM1290 639h2v11h-2zM1292 339h2v19h-2zM1292 519h2v19h-2zM1292 579h2v19h-2zM1294 179h2v19h-2zM1294 239h2v19h-2zM1294 279h2v19h-2zM1294 359h2v19h-2zM1294 439h2v19h-2zM1294 459h2v19h-2zM1294 499h2v19h-2zM1294 599h2v19h-2zM1294 619h2v19h-2zM1296 219h4v19h-4zM1296 359h4v19h-4zM1296 559h4v19h-4zM1296 579h4v19h-4zM1296 639h4v11h-4zM1300 159h2v19h-2zM1300 179h2v19h-2zM1300 219h2v19h-2zM1300 279h2v19h-2zM1300 339h2v19h-2zM1300 379h2v19h-2zM1300 619h2v19h-2zM1300 639h2v11h-2zM1302 179h2v19h-2zM1302 219h2v19h-2zM1302 239h2v19h-2zM1302 419h2v19h-2zM1302 459h2v19h-2zM1302 499h2v19h-2zM1302 599h2v19h-2zM1304 159h4v19h-4zM1304 199h4v19h-4zM1304 359h4v19h-4zM1304 379h4v19h-4zM1304 499h4v19h-4zM1304 539h4v19h-4zM1304 599h4v19h-4zM1304 619h4v19h-4zM1308 179h3v19h-3zM1308 299h3v19h-3zM1308 359h3v19h-3zM1308 639h3v11h-3zM1311 459h3v19h-3zM1311 619h3v19h-3zM1314 139h4v19h-4zM1314 159h4v19h-4zM1314 199h4v19h-4zM1314 239h4v19h-4zM1314 259h4v19h-4zM1314 339h4v19h-4zM1314 359h4v19h-4zM1314 379h4v19h-4zM1314 399h4v19h-4zM1314 419h4v19h-4zM1314 459h4v19h-4zM1314 539h4v19h-4zM1314 579h4v19h-4zM1318 99h2v19h-2zM1318 119h2v19h-2zM1318 239h2v19h-2zM1318 259h2v19h-2zM1318 419h2v19h-2zM1320 219h2v19h-2zM1320 279h2v19h-2zM1320 319h2v19h-2zM1320 379h2v19h-2zM1320 579h2v19h-2zM1322 159h4v19h-4zM1322 179h4v19h-4zM1322 259h4v19h-4zM1322 379h4v19h-4zM1322 539h4v19h-4zM1322 599h4v19h-4zM1322 619h4v19h-4zM1326 179h2v19h-2zM1326 199h2v19h-2zM1326 239h2v19h-2zM1326 259h2v19h-2zM1326 339h2v19h-2zM1326 359h2v19h-2zM1326 499h2v19h-2zM1326 539h2v19h-2zM1326 579h2v19h-2zM1326 619h2v19h-2zM1328 179h2v19h-2zM1328 419h2v19h-2zM1328 459h2v19h-2zM1328 499h2v19h-2zM1328 599h2v19h-2zM1328 619h2v19h-2zM1328 639h2v11h-2zM1330 239h2v19h-2zM1330 339h2v19h-2zM1330 419h2v19h-2zM1332 179h4v19h-4zM1332 459h4v19h-4zM1336 119h2v19h-2zM1336 139h2v19h-2zM1336 359h2v19h-2zM1336 379h2v19h-2zM1336 579h2v19h-2zM1336 599h2v19h-2zM1338 419h2v19h-2zM1338 459h2v19h-2zM1338 599h2v19h-2zM1340 219h2v19h-2zM1340 339h2v19h-2zM1340 419h2v19h-2zM1340 619h2v19h-2zM1342 199h4v19h-4zM1342 219h4v19h-4zM1342 259h4v19h-4zM1342 319h4v19h-4zM1342 559h4v19h-4zM1342 579h4v19h-4zM1342 639h4v11h-4zM1346 219h2v19h-2zM1346 239h2v19h-2zM1346 499h2v19h-2zM1346 619h2v19h-2zM1346 639h2v11h-2zM1348 119h2v19h-2zM1348 159h2v19h-2zM1348 359h2v19h-2zM1348 499h2v19h-2zM1348 619h2v19h-2zM1350 159h2v19h-2zM1350 279h2v19h-2zM1350 339h2v19h-2zM1350 359h2v19h-2zM1350 539h2v19h-2zM1350 599h2v19h-2zM1350 639h2v11h-2zM1352 259h2v19h-2zM1352 299h2v19h-2zM1352 379h2v19h-2zM1352 419h2v19h-2zM1352 499h2v19h-2zM1352 559h2v19h-2zM1352 619h2v19h-2zM1354 99h2v19h-2zM1354 159h2v19h-2zM1354 199h2v19h-2zM1354 359h2v19h-2zM1354 419h2v19h-2zM1354 499h2v19h-2zM1354 539h2v19h-2zM1356 139h3v19h-3zM1356 219h3v19h-3zM1356 239h3v19h-3zM1356 259h3v19h-3zM1356 299h3v19h-3zM1356 359h3v19h-3zM1356 539h3v19h-3zM1356 639h3v11h-3zM1359 159h3v19h-3zM1359 259h3v19h-3zM1362 119h2v19h-2zM1362 159h2v19h-2zM1362 199h2v19h-2zM1362 239h2v19h-2zM1362 299h2v19h-2zM1362 519h2v19h-2zM1362 599h2v19h-2zM1364 319h2v19h-2zM1364 539h2v19h-2zM1364 599h2v19h-2zM1366 199h2v19h-2zM1366 259h2v19h-2zM1368 179h3v19h-3zM1368 259h3v19h-3zM1368 299h3v19h-3zM1368 499h3v19h-3zM1368 579h3v19h-3zM1371 219h2v19h-2zM1371 259h2v19h-2zM1371 279h2v19h-2zM1371 319h2v19h-2zM1371 459h2v19h-2zM1371 539h2v19h-2zM1371 619h2v19h-2zM1373 99h3v19h-3zM1373 119h3v19h-3zM1373 339h3v19h-3zM1373 359h3v19h-3zM1373 419h3v19h-3zM1373 619h3v19h-3zM1376 259h2v19h-2zM1376 299h2v19h-2zM1376 339h2v19h-2zM1376 419h2v19h-2zM1376 459h2v19h-2zM1376 579h2v19h-2zM1378 219h2v19h-2zM1378 539h2v19h-2zM1378 559h2v19h-2zM1378 619h2v19h-2zM1380 139h2v19h-2zM1380 159h2v19h-2zM1380 259h2v19h-2zM1380 299h2v19h-2zM1380 339h2v19h-2zM1380 359h2v19h-2zM1380 379h2v19h-2zM1382 119h2v19h-2zM1382 219h2v19h-2zM1382 279h2v19h-2zM1382 319h2v19h-2zM1382 339h2v19h-2zM1382 379h2v19h-2zM1382 539h2v19h-2zM1382 559h2v19h-2zM1382 639h2v11h-2zM1384 139h2v19h-2zM1384 179h2v19h-2zM1384 339h2v19h-2zM1384 419h2v19h-2zM1384 459h2v19h-2zM1384 639h2v11h-2zM1386 259h2v19h-2zM1386 319h2v19h-2zM1386 379h2v19h-2zM1386 419h2v19h-2zM1386 579h2v19h-2zM1386 599h2v19h-2zM1388 459h2v19h-2zM1388 599h2v19h-2zM1390 239h3v19h-3zM1390 299h3v19h-3zM1390 359h3v19h-3zM1390 379h3v19h-3zM1390 479h3v19h-3zM1390 579h3v19h-3zM1393 99h3v19h-3zM1393 119h3v19h-3zM1393 299h3v19h-3zM1393 359h3v19h-3zM1393 379h3v19h-3zM1393 599h3v19h-3zM1396 179h2v19h-2zM1396 199h2v19h-2zM1396 259h2v19h-2zM1396 279h2v19h-2zM1396 559h2v19h-2zM1396 579h2v19h-2zM1396 639h2v11h-2zM1398 79h2v19h-2zM1398 99h2v19h-2zM1398 119h2v19h-2zM1398 139h2v19h-2zM1398 159h2v19h-2zM1398 279h2v19h-2zM1398 319h2v19h-2zM1398 499h2v19h-2zM1398 539h2v19h-2zM1400 79h4v19h-4zM1400 119h4v19h-4zM1400 139h4v19h-4zM1400 159h4v19h-4zM1400 199h4v19h-4zM1400 219h4v19h-4zM1400 319h4v19h-4zM1400 359h4v19h-4zM1400 619h4v19h-4zM1404 219h2v19h-2zM1404 259h2v19h-2zM1404 339h2v19h-2zM1404 359h2v19h-2zM1404 379h2v19h-2zM1404 419h2v19h-2zM1404 459h2v19h-2zM1404 559h2v19h-2zM1404 579h2v19h-2zM1404 619h2v19h-2zM1404 639h2v11h-2zM1406 179h4v19h-4zM1406 199h4v19h-4zM1406 359h4v19h-4zM1406 379h4v19h-4zM1406 459h4v19h-4zM1406 599h4v19h-4zM1406 619h4v19h-4zM1410 99h3v19h-3zM1410 119h3v19h-3zM1410 159h3v19h-3zM1410 179h3v19h-3zM1410 219h3v19h-3zM1410 239h3v19h-3zM1410 259h3v19h-3zM1410 359h3v19h-3zM1410 539h3v19h-3zM1410 579h3v19h-3zM1410 619h3v19h-3zM1413 139h2v19h-2zM1413 159h2v19h-2zM1413 239h2v19h-2zM1413 379h2v19h-2zM1413 499h2v19h-2zM1413 559h2v19h-2zM1413 619h2v19h-2zM1415 119h2v19h-2zM1415 139h2v19h-2zM1415 299h2v19h-2zM1415 359h2v19h-2zM1415 419h2v19h-2zM1415 459h2v19h-2zM1415 499h2v19h-2zM1415 619h2v19h-2zM1415 639h2v11h-2zM1417 79h3v19h-3zM1417 219h3v19h-3zM1417 239h3v19h-3zM1417 279h3v19h-3zM1417 339h3v19h-3zM1417 419h3v19h-3zM1417 439h3v19h-3zM1417 499h3v19h-3zM1417 599h3v19h-3zM1420 119h2v19h-2zM1420 179h2v19h-2zM1420 259h2v19h-2zM1420 419h2v19h-2zM1420 559h2v19h-2zM1422 179h4v19h-4zM1422 219h4v19h-4zM1422 319h4v19h-4zM1422 579h4v19h-4zM1422 599h4v19h-4zM1426 159h4v19h-4zM1426 319h4v19h-4zM1426 339h4v19h-4zM1426 499h4v19h-4zM1426 599h4v19h-4zM1426 639h4v11h-4zM1430 139h2v19h-2zM1430 159h2v19h-2zM1430 199h2v19h-2zM1430 279h2v19h-2zM1430 299h2v19h-2zM1430 459h2v19h-2zM1430 619h2v19h-2zM1432 159h2v19h-2zM1432 179h2v19h-2zM1432 219h2v19h-2zM1432 259h2v19h-2zM1432 299h2v19h-2zM1432 359h2v19h-2zM1432 419h2v19h-2zM1434 219h2v19h-2zM1434 239h2v19h-2zM1434 259h2v19h-2zM1434 279h2v19h-2zM1434 479h2v19h-2zM1434 499h2v19h-2zM1434 579h2v19h-2zM1436 99h2v19h-2zM1436 139h2v19h-2zM1436 219h2v19h-2zM1436 279h2v19h-2zM1436 639h2v11h-2zM1438 79h2v19h-2zM1438 159h2v19h-2zM1438 219h2v19h-2zM1438 339h2v19h-2zM1440 199h3v19h-3zM1440 339h3v19h-3zM1440 379h3v19h-3zM1440 459h3v19h-3zM1440 559h3v19h-3zM1440 639h3v11h-3zM1443 68h2v10h-2zM1443 99h2v19h-2zM1443 159h2v19h-2zM1443 179h2v19h-2zM1443 219h2v19h-2zM1443 259h2v19h-2zM1445 139h4v19h-4zM1445 179h4v19h-4zM1445 339h4v19h-4zM1445 419h4v19h-4zM1445 499h4v19h-4zM1449 159h2v19h-2zM1449 299h2v19h-2zM1449 359h2v19h-2zM1449 419h2v19h-2zM1449 459h2v19h-2zM1449 499h2v19h-2zM1451 159h2v19h-2zM1451 199h2v19h-2zM1451 239h2v19h-2zM1451 299h2v19h-2zM1451 339h2v19h-2zM1451 359h2v19h-2zM1451 419h2v19h-2zM1451 539h2v19h-2zM1451 599h2v19h-2zM1451 619h2v19h-2zM1453 179h3v19h-3zM1453 199h3v19h-3zM1453 239h3v19h-3zM1453 279h3v19h-3zM1453 339h3v19h-3zM1453 359h3v19h-3zM1453 499h3v19h-3zM1453 599h3v19h-3zM1456 379h2v19h-2zM1456 639h2v11h-2zM1458 199h2v19h-2zM1458 299h2v19h-2zM1458 339h2v19h-2zM1458 599h2v19h-2zM1460 359h2v19h-2zM1460 379h2v19h-2zM1460 459h2v19h-2zM1460 539h2v19h-2zM1460 559h2v19h-2zM1460 579h2v19h-2zM1460 619h2v19h-2zM1462 219h2v19h-2zM1462 239h2v19h-2zM1462 299h2v19h-2zM1462 499h2v19h-2zM1462 539h2v19h-2zM1462 579h2v19h-2zM1462 619h2v19h-2zM1464 219h3v19h-3zM1464 259h3v19h-3zM1464 299h3v19h-3zM1464 359h3v19h-3zM1467 159h2v19h-2zM1467 219h2v19h-2zM1467 539h2v19h-2zM1467 639h2v11h-2zM1469 139h3v19h-3zM1469 219h3v19h-3zM1469 259h3v19h-3zM1469 379h3v19h-3zM1469 419h3v19h-3zM1469 459h3v19h-3zM1469 499h3v19h-3zM1469 639h3v11h-3zM1472 139h2v19h-2zM1472 199h2v19h-2zM1472 379h2v19h-2zM1472 419h2v19h-2zM1472 539h2v19h-2zM1472 559h2v19h-2zM1474 179h3v19h-3zM1474 199h3v19h-3zM1474 459h3v19h-3zM1474 499h3v19h-3zM1474 539h3v19h-3zM1474 559h3v19h-3zM1477 239h2v19h-2zM1477 339h2v19h-2zM1477 359h2v19h-2zM1479 219h2v19h-2zM1479 339h2v19h-2zM1479 359h2v19h-2zM1479 499h2v19h-2zM1479 639h2v11h-2zM1481 159h1v19h-1zM1481 199h1v19h-1zM1481 219h1v19h-1zM1481 319h1v19h-1zM1481 359h1v19h-1zM1481 499h1v19h-1zM1481 539h1v19h-1zM1481 599h1v19h-1zM1481 639h1v11h-1z"/><path fill="#0080b0" d="M644 559h4v19h-4zM644 579h4v19h-4zM648 459h7v19h-7zM648 499h7v19h-7zM655 459h2v19h-2zM655 519h2v19h-2zM655 619h2v19h-2zM657 459h4v19h-4zM657 479h4v19h-4zM657 579h4v19h-4zM657 599h4v19h-4zM661 539h4v19h-4zM661 579h4v19h-4zM661 619h4v19h-4zM665 499h2v19h-2zM665 599h2v19h-2zM667 439h2v19h-2zM669 459h2v19h-2zM669 579h2v19h-2zM669 599h2v19h-2zM669 619h2v19h-2zM671 459h2v19h-2zM671 479h2v19h-2zM671 519h2v19h-2zM673 459h2v19h-2zM673 479h2v19h-2zM675 459h2v19h-2zM675 479h2v19h-2zM675 499h2v19h-2zM675 639h2v11h-2zM677 399h4v19h-4zM677 559h4v19h-4zM677 599h4v19h-4zM677 639h4v11h-4zM681 439h4v19h-4zM681 499h4v19h-4zM681 519h4v19h-4zM681 619h4v19h-4zM681 639h4v11h-4zM685 379h4v19h-4zM685 399h4v19h-4zM685 459h4v19h-4zM685 479h4v19h-4zM685 519h4v19h-4zM685 559h4v19h-4zM685 579h4v19h-4zM689 459h2v19h-2zM689 519h2v19h-2zM689 639h2v11h-2zM691 479h2v19h-2zM691 519h2v19h-2zM691 579h2v19h-2zM691 619h2v19h-2zM691 639h2v11h-2zM693 459h2v19h-2zM693 479h2v19h-2zM695 379h2v19h-2zM695 499h2v19h-2zM695 519h2v19h-2zM697 359h2v19h-2zM697 519h2v19h-2zM697 579h2v19h-2zM697 619h2v19h-2zM699 459h2v19h-2zM699 519h2v19h-2zM699 579h2v19h-2zM705 419h2v19h-2zM705 519h2v19h-2zM705 559h2v19h-2zM705 579h2v19h-2zM707 439h2v19h-2zM707 479h2v19h-2zM707 499h2v19h-2zM709 339h2v19h-2zM709 419h2v19h-2zM709 579h2v19h-2zM711 419h2v19h-2zM711 459h2v19h-2zM711 479h2v19h-2zM711 519h2v19h-2zM711 559h2v19h-2zM713 379h2v19h-2zM713 439h2v19h-2zM713 459h2v19h-2zM713 499h2v19h-2zM713 559h2v19h-2zM713 639h2v11h-2zM715 359h4v19h-4zM715 439h4v19h-4zM715 479h4v19h-4zM715 639h4v11h-4zM719 379h2v19h-2zM719 459h2v19h-2zM719 639h2v11h-2zM721 359h2v19h-2zM721 399h2v19h-2zM721 439h2v19h-2zM721 479h2v19h-2zM721 519h2v19h-2zM721 559h2v19h-2zM721 639h2v11h-2zM723 339h4v19h-4zM723 379h4v19h-4zM723 439h4v19h-4zM723 559h4v19h-4zM727 379h2v19h-2zM727 399h2v19h-2zM729 639h2v11h-2zM731 359h4v19h-4zM731 379h4v19h-4zM731 479h4v19h-4zM731 539h4v19h-4zM731 639h4v11h-4zM735 379h2v19h-2zM735 459h2v19h-2zM735 499h2v19h-2zM735 559h2v19h-2zM737 399h2v19h-2zM737 459h2v19h-2zM737 499h2v19h-2zM737 579h2v19h-2zM737 599h2v19h-2zM737 619h2v19h-2zM739 399h3v19h-3zM739 439h3v19h-3zM739 459h3v19h-3zM739 559h3v19h-3zM739 579h3v19h-3zM739 619h3v19h-3zM742 359h2v19h-2zM742 379h2v19h-2zM742 479h2v19h-2zM742 639h2v11h-2zM744 359h2v19h-2zM744 399h2v19h-2zM744 419h2v19h-2zM744 439h2v19h-2zM744 479h2v19h-2zM744 539h2v19h-2zM744 559h2v19h-2zM744 619h2v19h-2zM746 359h2v19h-2zM746 459h2v19h-2zM746 479h2v19h-2zM746 539h2v19h-2zM746 599h2v19h-2zM746 619h2v19h-2zM748 419h2v19h-2zM748 459h2v19h-2zM748 539h2v19h-2zM750 539h2v19h-2zM750 559h2v19h-2zM750 619h2v19h-2zM752 379h2v19h-2zM752 399h2v19h-2zM752 419h2v19h-2zM752 459h2v19h-2zM752 519h2v19h-2zM752 639h2v11h-2zM754 479h2v19h-2zM754 499h2v19h-2zM754 579h2v19h-2zM754 619h2v19h-2zM756 359h2v19h-2zM756 379h2v19h-2zM756 479h2v19h-2zM756 579h2v19h-2zM758 399h2v19h-2zM758 479h2v19h-2zM760 499h2v19h-2zM762 479h3v19h-3zM762 579h3v19h-3zM762 599h3v19h-3zM765 419h4v19h-4zM765 459h4v19h-4zM765 479h4v19h-4zM765 599h4v19h-4zM769 459h4v19h-4zM769 519h4v19h-4zM769 539h4v19h-4zM769 559h4v19h-4zM769 619h4v19h-4zM775 639h2v11h-2zM777 539h2v19h-2zM777 619h2v19h-2zM779 439h2v19h-2zM781 479h2v19h-2zM781 619h2v19h-2zM783 499h2v19h-2zM783 519h2v19h-2zM785 479h2v19h-2zM785 539h2v19h-2zM787 519h2v19h-2zM787 539h2v19h-2zM789 539h4v19h-4zM789 579h4v19h-4zM793 339h2v19h-2zM793 479h2v19h-2zM793 539h2v19h-2zM793 559h2v19h-2zM795 339h2v19h-2zM795 399h2v19h-2zM795 519h2v19h-2zM797 459h2v19h-2zM797 479h2v19h-2zM797 519h2v19h-2zM799 479h4v19h-4zM803 379h2v19h-2zM803 459h2v19h-2zM803 479h2v19h-2zM803 519h2v19h-2zM803 559h2v19h-2zM805 339h3v19h-3zM805 359h3v19h-3zM805 419h3v19h-3zM805 539h3v19h-3zM805 579h3v19h-3zM808 399h2v19h-2zM808 559h2v19h-2zM808 579h2v19h-2zM810 359h4v19h-4zM810 479h4v19h-4zM810 539h4v19h-4zM810 579h4v19h-4zM814 359h2v19h-2zM814 499h2v19h-2zM814 519h2v19h-2zM816 359h3v19h-3zM816 379h3v19h-3zM816 419h3v19h-3zM816 499h3v19h-3zM816 519h3v19h-3zM819 399h2v19h-2zM821 359h2v19h-2zM821 459h2v19h-2zM821 539h2v19h-2zM823 579h2v19h-2zM825 399h3v19h-3zM825 419h3v19h-3zM825 539h3v19h-3zM828 379h3v19h-3zM828 459h3v19h-3zM828 499h3v19h-3zM831 399h4v19h-4zM831 459h4v19h-4zM831 499h4v19h-4zM831 559h4v19h-4zM835 399h2v19h-2zM835 419h2v19h-2zM835 459h2v19h-2zM835 579h2v19h-2zM837 399h2v19h-2zM837 439h2v19h-2zM839 399h2v19h-2zM839 519h2v19h-2zM839 579h2v19h-2zM841 439h4v19h-4zM841 519h4v19h-4zM841 539h4v19h-4zM841 559h4v19h-4zM845 599h4v19h-4zM849 639h2v11h-2zM851 479h4v19h-4zM851 539h4v19h-4zM855 459h2v19h-2zM855 479h2v19h-2zM855 539h2v19h-2zM855 619h2v19h-2zM855 639h2v11h-2zM857 599h3v19h-3zM860 559h3v19h-3zM860 599h3v19h-3zM863 479h2v19h-2zM863 539h2v19h-2zM865 539h2v19h-2zM867 519h2v19h-2zM867 579h2v19h-2zM867 619h2v19h-2zM867 639h2v11h-2zM869 519h3v19h-3zM869 539h3v19h-3zM869 639h3v11h-3zM872 479h2v19h-2zM872 519h2v19h-2zM872 599h2v19h-2zM872 619h2v19h-2zM874 479h2v19h-2zM874 619h2v19h-2zM876 599h2v19h-2zM876 639h2v11h-2zM878 539h2v19h-2zM878 559h2v19h-2zM878 579h2v19h-2zM880 579h2v19h-2zM880 619h2v19h-2zM882 499h2v19h-2zM884 519h2v19h-2zM884 599h2v19h-2zM884 619h2v19h-2zM886 559h2v19h-2zM891 539h2v19h-2zM891 619h2v19h-2zM891 639h2v11h-2zM893 559h2v19h-2zM893 599h2v19h-2zM893 639h2v11h-2zM897 539h3v19h-3zM897 559h3v19h-3zM897 579h3v19h-3zM897 619h3v19h-3zM900 579h2v19h-2zM900 599h2v19h-2zM900 619h2v19h-2zM904 559h2v19h-2zM906 539h3v19h-3zM909 539h2v19h-2zM909 639h2v11h-2zM911 559h4v19h-4zM911 599h4v19h-4zM919 559h2v19h-2zM919 639h2v11h-2zM921 639h2v11h-2zM923 579h2v19h-2zM923 599h2v19h-2zM925 539h3v19h-3zM925 579h3v19h-3zM925 599h3v19h-3zM925 619h3v19h-3zM925 639h3v11h-3zM928 619h2v19h-2zM934 639h2v11h-2zM938 559h2v19h-2zM938 579h2v19h-2zM938 599h2v19h-2zM938 619h2v19h-2zM938 639h2v11h-2zM940 559h2v19h-2zM942 539h2v19h-2zM942 639h2v11h-2zM944 539h2v19h-2zM944 559h2v19h-2zM946 579h3v19h-3zM946 599h3v19h-3zM949 619h3v19h-3zM952 539h2v19h-2zM952 559h2v19h-2zM952 579h2v19h-2zM952 619h2v19h-2zM954 519h2v19h-2zM954 599h2v19h-2zM954 619h2v19h-2zM956 519h2v19h-2zM956 539h2v19h-2zM958 519h2v19h-2zM960 519h3v19h-3zM960 539h3v19h-3zM960 639h3v11h-3zM963 519h2v19h-2zM965 499h2v19h-2zM965 539h2v19h-2zM965 639h2v11h-2zM967 519h3v19h-3zM967 579h3v19h-3zM967 639h3v11h-3zM970 539h3v19h-3zM970 559h3v19h-3zM970 639h3v11h-3zM973 499h2v19h-2zM973 519h2v19h-2zM973 539h2v19h-2zM975 559h2v19h-2zM975 579h2v19h-2zM977 499h2v19h-2zM977 599h2v19h-2zM977 619h2v19h-2zM977 639h2v11h-2zM979 559h4v19h-4zM979 619h4v19h-4zM983 499h2v19h-2zM983 619h2v19h-2zM985 499h2v19h-2zM985 519h2v19h-2zM985 539h2v19h-2zM985 639h2v11h-2zM987 639h2v11h-2zM989 539h4v19h-4zM989 559h4v19h-4zM989 579h4v19h-4zM993 519h2v19h-2zM993 559h2v19h-2zM993 639h2v11h-2zM997 579h2v19h-2zM997 619h2v19h-2zM997 639h2v11h-2zM999 519h2v19h-2zM999 579h2v19h-2zM999 639h2v11h-2zM1001 499h2v19h-2zM1001 519h2v19h-2zM1001 639h2v11h-2zM1003 479h2v19h-2zM1003 519h2v19h-2zM1003 539h2v19h-2zM1003 579h2v19h-2zM1003 619h2v19h-2zM1005 539h3v19h-3zM1008 459h2v19h-2zM1008 479h2v19h-2zM1008 599h2v19h-2zM1010 459h2v19h-2zM1010 479h2v19h-2zM1012 619h3v19h-3zM1015 479h3v19h-3zM1015 539h3v19h-3zM1015 599h3v19h-3zM1015 639h3v11h-3zM1018 459h2v19h-2zM1018 479h2v19h-2zM1018 539h2v19h-2zM1020 479h2v19h-2zM1020 519h2v19h-2zM1020 579h2v19h-2zM1022 459h2v19h-2zM1022 499h2v19h-2zM1022 559h2v19h-2zM1022 579h2v19h-2zM1022 599h2v19h-2zM1022 619h2v19h-2zM1022 639h2v11h-2zM1026 459h2v19h-2zM1026 519h2v19h-2zM1026 559h2v19h-2zM1028 459h3v19h-3zM1031 519h4v19h-4zM1035 479h2v19h-2zM1035 519h2v19h-2zM1035 599h2v19h-2zM1037 519h2v19h-2zM1037 579h2v19h-2zM1037 599h2v19h-2zM1037 619h2v19h-2zM1039 499h2v19h-2zM1039 599h2v19h-2zM1039 639h2v11h-2zM1041 519h2v19h-2zM1041 619h2v19h-2zM1043 459h3v19h-3zM1043 619h3v19h-3zM1046 499h4v19h-4zM1046 519h4v19h-4zM1046 599h4v19h-4zM1050 639h3v11h-3zM1053 479h4v19h-4zM1053 539h4v19h-4zM1053 619h4v19h-4zM1061 459h2v19h-2zM1061 579h2v19h-2zM1061 599h2v19h-2zM1061 619h2v19h-2zM1063 499h2v19h-2zM1065 619h2v19h-2zM1065 639h2v11h-2zM1067 479h2v19h-2zM1067 579h2v19h-2zM1069 639h2v11h-2zM1071 499h4v19h-4zM1071 539h4v19h-4zM1071 599h4v19h-4zM1071 639h4v11h-4zM1079 479h2v19h-2zM1081 559h2v19h-2zM1081 639h2v11h-2zM1083 479h2v19h-2zM1085 499h3v19h-3zM1085 559h3v19h-3zM1085 579h3v19h-3zM1085 639h3v11h-3zM1088 479h2v19h-2zM1090 539h4v19h-4zM1094 559h2v19h-2zM1094 579h2v19h-2zM1094 639h2v11h-2zM1096 519h2v19h-2zM1096 599h2v19h-2zM1098 559h2v19h-2zM1098 639h2v11h-2zM1100 579h2v19h-2zM1102 519h2v19h-2zM1104 539h2v19h-2zM1104 559h2v19h-2zM1104 579h2v19h-2zM1104 599h2v19h-2zM1108 539h2v19h-2zM1108 599h2v19h-2zM1110 579h3v19h-3zM1110 599h3v19h-3zM1110 619h3v19h-3zM1113 539h2v19h-2zM1113 599h2v19h-2zM1113 619h2v19h-2zM1113 639h2v11h-2zM1115 579h2v19h-2zM1115 639h2v11h-2zM1120 619h3v19h-3zM1120 639h3v11h-3zM1123 619h2v19h-2zM1123 639h2v11h-2zM1125 579h2v19h-2zM1127 559h2v19h-2zM1127 599h2v19h-2zM1129 519h2v19h-2zM1129 579h2v19h-2zM1129 619h2v19h-2zM1131 539h2v19h-2zM1131 579h2v19h-2zM1131 619h2v19h-2zM1131 639h2v11h-2zM1133 639h2v11h-2zM1135 539h2v19h-2zM1135 559h2v19h-2zM1137 559h2v19h-2zM1139 559h2v19h-2zM1145 559h2v19h-2zM1145 599h2v19h-2zM1147 579h4v19h-4zM1151 539h2v19h-2zM1151 559h2v19h-2zM1151 639h2v11h-2zM1153 579h2v19h-2zM1155 619h2v19h-2zM1157 599h2v19h-2zM1157 619h2v19h-2zM1159 559h2v19h-2zM1161 599h3v19h-3zM1161 639h3v11h-3zM1166 559h3v19h-3zM1169 579h2v19h-2zM1175 619h2v19h-2zM1177 539h2v19h-2zM1177 619h2v19h-2zM1179 639h2v11h-2zM1181 559h2v19h-2zM1183 559h3v19h-3zM1183 599h3v19h-3zM1183 619h3v19h-3zM1183 639h3v11h-3zM1186 519h2v19h-2zM1186 639h2v11h-2zM1188 479h2v19h-2zM1188 559h2v19h-2zM1188 619h2v19h-2zM1190 579h2v19h-2zM1192 439h4v19h-4zM1192 479h4v19h-4zM1192 499h4v19h-4zM1192 619h4v19h-4zM1196 479h2v19h-2zM1196 559h2v19h-2zM1196 599h2v19h-2zM1198 439h2v19h-2zM1198 479h2v19h-2zM1200 439h2v19h-2zM1200 499h2v19h-2zM1200 559h2v19h-2zM1200 579h2v19h-2zM1200 639h2v11h-2zM1202 439h2v19h-2zM1202 459h2v19h-2zM1202 499h2v19h-2zM1202 639h2v11h-2zM1204 459h3v19h-3zM1204 479h3v19h-3zM1204 579h3v19h-3zM1207 399h4v19h-4zM1207 519h4v19h-4zM1207 579h4v19h-4zM1211 399h2v19h-2zM1211 439h2v19h-2zM1211 499h2v19h-2zM1211 539h2v19h-2zM1211 559h2v19h-2zM1211 579h2v19h-2zM1213 419h2v19h-2zM1213 499h2v19h-2zM1213 539h2v19h-2zM1213 559h2v19h-2zM1213 599h2v19h-2zM1215 399h2v19h-2zM1215 499h2v19h-2zM1215 559h2v19h-2zM1215 619h2v19h-2zM1215 639h2v11h-2zM1217 439h3v19h-3zM1217 479h3v19h-3zM1217 499h3v19h-3zM1217 559h3v19h-3zM1220 639h2v11h-2zM1222 399h2v19h-2zM1222 439h2v19h-2zM1222 559h2v19h-2zM1224 519h3v19h-3zM1227 439h2v19h-2zM1227 459h2v19h-2zM1227 499h2v19h-2zM1227 519h2v19h-2zM1227 599h2v19h-2zM1229 399h2v19h-2zM1229 479h2v19h-2zM1229 499h2v19h-2zM1229 579h2v19h-2zM1231 479h2v19h-2zM1231 499h2v19h-2zM1231 539h2v19h-2zM1231 559h2v19h-2zM1231 579h2v19h-2zM1231 639h2v11h-2zM1233 399h2v19h-2zM1233 419h2v19h-2zM1233 499h2v19h-2zM1233 519h2v19h-2zM1233 539h2v19h-2zM1233 619h2v19h-2zM1235 559h2v19h-2zM1237 419h2v19h-2zM1237 539h2v19h-2zM1239 539h4v19h-4zM1243 379h2v19h-2zM1243 399h2v19h-2zM1243 439h2v19h-2zM1243 519h2v19h-2zM1243 559h2v19h-2zM1243 599h2v19h-2zM1245 419h2v19h-2zM1245 439h2v19h-2zM1245 459h2v19h-2zM1245 479h2v19h-2zM1245 519h2v19h-2zM1245 559h2v19h-2zM1247 399h3v19h-3zM1247 419h3v19h-3zM1247 539h3v19h-3zM1247 579h3v19h-3zM1247 619h3v19h-3zM1250 399h2v19h-2zM1250 419h2v19h-2zM1250 499h2v19h-2zM1250 519h2v19h-2zM1250 619h2v19h-2zM1250 639h2v11h-2zM1252 359h2v19h-2zM1252 419h2v19h-2zM1252 459h2v19h-2zM1252 539h2v19h-2zM1252 559h2v19h-2zM1254 439h4v19h-4zM1254 479h4v19h-4zM1254 579h4v19h-4zM1254 619h4v19h-4zM1254 639h4v11h-4zM1258 479h4v19h-4zM1258 559h4v19h-4zM1258 579h4v19h-4zM1258 599h4v19h-4zM1258 639h4v11h-4zM1262 359h2v19h-2zM1262 439h2v19h-2zM1262 499h2v19h-2zM1262 539h2v19h-2zM1262 579h2v19h-2zM1264 299h2v19h-2zM1264 439h2v19h-2zM1264 479h2v19h-2zM1264 539h2v19h-2zM1264 559h2v19h-2zM1264 579h2v19h-2zM1264 599h2v19h-2zM1266 319h2v19h-2zM1266 359h2v19h-2zM1266 379h2v19h-2zM1266 439h2v19h-2zM1266 539h2v19h-2zM1266 619h2v19h-2zM1268 319h2v19h-2zM1268 399h2v19h-2zM1268 419h2v19h-2zM1268 459h2v19h-2zM1268 639h2v11h-2zM1270 299h3v19h-3zM1270 419h3v19h-3zM1270 499h3v19h-3zM1270 579h3v19h-3zM1270 619h3v19h-3zM1273 299h3v19h-3zM1273 419h3v19h-3zM1273 459h3v19h-3zM1273 499h3v19h-3zM1273 559h3v19h-3zM1273 619h3v19h-3zM1276 319h2v19h-2zM1276 419h2v19h-2zM1276 619h2v19h-2zM1276 639h2v11h-2zM1278 299h2v19h-2zM1278 339h2v19h-2zM1278 539h2v19h-2zM1278 579h2v19h-2zM1278 619h2v19h-2zM1280 379h2v19h-2zM1280 399h2v19h-2zM1280 419h2v19h-2zM1280 539h2v19h-2zM1282 299h2v19h-2zM1282 359h2v19h-2zM1282 439h2v19h-2zM1282 499h2v19h-2zM1282 579h2v19h-2zM1284 219h2v19h-2zM1284 319h2v19h-2zM1284 359h2v19h-2zM1284 379h2v19h-2zM1284 459h2v19h-2zM1284 519h2v19h-2zM1284 599h2v19h-2zM1284 639h2v11h-2zM1286 399h2v19h-2zM1286 579h2v19h-2zM1288 219h2v19h-2zM1288 239h2v19h-2zM1288 459h2v19h-2zM1288 499h2v19h-2zM1288 539h2v19h-2zM1288 559h2v19h-2zM1288 579h2v19h-2zM1288 619h2v19h-2zM1290 359h2v19h-2zM1290 619h2v19h-2zM1292 219h2v19h-2zM1292 299h2v19h-2zM1292 439h2v19h-2zM1292 539h2v19h-2zM1292 599h2v19h-2zM1292 639h2v11h-2zM1294 199h2v19h-2zM1294 259h2v19h-2zM1294 299h2v19h-2zM1294 339h2v19h-2zM1294 419h2v19h-2zM1294 579h2v19h-2zM1294 639h2v11h-2zM1296 179h4v19h-4zM1296 299h4v19h-4zM1296 319h4v19h-4zM1296 539h4v19h-4zM1296 599h4v19h-4zM1300 139h2v19h-2zM1300 239h2v19h-2zM1300 259h2v19h-2zM1300 359h2v19h-2zM1300 399h2v19h-2zM1300 459h2v19h-2zM1300 579h2v19h-2zM1302 139h2v19h-2zM1302 259h2v19h-2zM1302 359h2v19h-2zM1304 219h4v19h-4zM1304 419h4v19h-4zM1304 559h4v19h-4zM1308 199h3v19h-3zM1308 239h3v19h-3zM1308 319h3v19h-3zM1308 559h3v19h-3zM1308 579h3v19h-3zM1311 139h3v19h-3zM1311 159h3v19h-3zM1311 279h3v19h-3zM1311 419h3v19h-3zM1311 599h3v19h-3zM1311 639h3v11h-3zM1314 179h4v19h-4zM1314 219h4v19h-4zM1314 559h4v19h-4zM1318 379h2v19h-2zM1318 499h2v19h-2zM1318 539h2v19h-2zM1320 419h2v19h-2zM1320 559h2v19h-2zM1322 199h4v19h-4zM1322 419h4v19h-4zM1322 559h4v19h-4zM1326 319h2v19h-2zM1328 199h2v19h-2zM1328 219h2v19h-2zM1328 299h2v19h-2zM1330 459h2v19h-2zM1332 119h4v19h-4zM1332 139h4v19h-4zM1332 279h4v19h-4zM1332 539h4v19h-4zM1332 599h4v19h-4zM1332 619h4v19h-4zM1336 179h2v19h-2zM1336 219h2v19h-2zM1336 239h2v19h-2zM1336 259h2v19h-2zM1336 459h2v19h-2zM1336 639h2v11h-2zM1338 179h2v19h-2zM1338 299h2v19h-2zM1338 379h2v19h-2zM1338 579h2v19h-2zM1338 619h2v19h-2zM1340 179h2v19h-2zM1340 199h2v19h-2zM1340 299h2v19h-2zM1340 379h2v19h-2zM1340 539h2v19h-2zM1340 639h2v11h-2zM1342 139h4v19h-4zM1342 239h4v19h-4zM1342 339h4v19h-4zM1342 379h4v19h-4zM1342 619h4v19h-4zM1346 179h2v19h-2zM1346 199h2v19h-2zM1346 259h2v19h-2zM1346 299h2v19h-2zM1346 379h2v19h-2zM1348 179h2v19h-2zM1348 199h2v19h-2zM1348 279h2v19h-2zM1348 319h2v19h-2zM1350 139h2v19h-2zM1350 219h2v19h-2zM1350 259h2v19h-2zM1350 299h2v19h-2zM1350 499h2v19h-2zM1350 619h2v19h-2zM1352 219h2v19h-2zM1352 319h2v19h-2zM1352 359h2v19h-2zM1352 459h2v19h-2zM1354 119h2v19h-2zM1354 599h2v19h-2zM1354 619h2v19h-2zM1354 639h2v11h-2zM1356 119h3v19h-3zM1356 199h3v19h-3zM1356 339h3v19h-3zM1356 379h3v19h-3zM1356 419h3v19h-3zM1356 599h3v19h-3zM1359 139h3v19h-3zM1359 239h3v19h-3zM1359 339h3v19h-3zM1359 459h3v19h-3zM1359 499h3v19h-3zM1359 539h3v19h-3zM1359 579h3v19h-3zM1359 599h3v19h-3zM1359 639h3v11h-3zM1362 139h2v19h-2zM1362 179h2v19h-2zM1362 279h2v19h-2zM1362 359h2v19h-2zM1362 619h2v19h-2zM1362 639h2v11h-2zM1364 219h2v19h-2zM1364 379h2v19h-2zM1364 499h2v19h-2zM1364 559h2v19h-2zM1366 119h2v19h-2zM1366 159h2v19h-2zM1366 319h2v19h-2zM1366 339h2v19h-2zM1366 499h2v19h-2zM1366 539h2v19h-2zM1366 579h2v19h-2zM1368 99h3v19h-3zM1368 219h3v19h-3zM1368 359h3v19h-3zM1368 379h3v19h-3zM1368 459h3v19h-3zM1368 599h3v19h-3zM1368 619h3v19h-3zM1371 179h2v19h-2zM1371 199h2v19h-2zM1371 599h2v19h-2zM1373 379h3v19h-3zM1373 499h3v19h-3zM1376 99h2v19h-2zM1376 139h2v19h-2zM1376 179h2v19h-2zM1376 279h2v19h-2zM1376 539h2v19h-2zM1376 619h2v19h-2zM1378 99h2v19h-2zM1378 139h2v19h-2zM1378 199h2v19h-2zM1378 239h2v19h-2zM1378 319h2v19h-2zM1378 339h2v19h-2zM1378 459h2v19h-2zM1378 499h2v19h-2zM1380 119h2v19h-2zM1380 219h2v19h-2zM1380 279h2v19h-2zM1380 599h2v19h-2zM1382 239h2v19h-2zM1382 359h2v19h-2zM1382 499h2v19h-2zM1384 119h2v19h-2zM1384 159h2v19h-2zM1384 299h2v19h-2zM1384 319h2v19h-2zM1384 599h2v19h-2zM1386 139h2v19h-2zM1386 199h2v19h-2zM1386 219h2v19h-2zM1386 279h2v19h-2zM1386 339h2v19h-2zM1386 619h2v19h-2zM1388 119h2v19h-2zM1388 219h2v19h-2zM1388 239h2v19h-2zM1388 319h2v19h-2zM1388 579h2v19h-2zM1390 319h3v19h-3zM1390 419h3v19h-3zM1390 459h3v19h-3zM1390 499h3v19h-3zM1390 559h3v19h-3zM1393 179h3v19h-3zM1393 219h3v19h-3zM1393 419h3v19h-3zM1393 499h3v19h-3zM1393 619h3v19h-3zM1396 219h2v19h-2zM1396 299h2v19h-2zM1396 419h2v19h-2zM1396 499h2v19h-2zM1398 359h2v19h-2zM1398 639h2v11h-2zM1400 179h4v19h-4zM1400 379h4v19h-4zM1400 479h4v19h-4zM1400 599h4v19h-4zM1404 119h2v19h-2zM1404 539h2v19h-2zM1406 219h4v19h-4zM1406 239h4v19h-4zM1406 499h4v19h-4zM1406 559h4v19h-4zM1410 339h3v19h-3zM1413 99h2v19h-2zM1413 119h2v19h-2zM1413 219h2v19h-2zM1413 259h2v19h-2zM1413 579h2v19h-2zM1413 639h2v11h-2zM1415 199h2v19h-2zM1415 319h2v19h-2zM1415 579h2v19h-2zM1417 159h3v19h-3zM1420 79h2v19h-2zM1420 99h2v19h-2zM1420 139h2v19h-2zM1420 159h2v19h-2zM1420 579h2v19h-2zM1422 119h4v19h-4zM1422 379h4v19h-4zM1422 419h4v19h-4zM1422 619h4v19h-4zM1422 639h4v11h-4zM1426 119h4v19h-4zM1426 179h4v19h-4zM1426 219h4v19h-4zM1426 359h4v19h-4zM1426 379h4v19h-4zM1426 579h4v19h-4zM1430 259h2v19h-2zM1430 339h2v19h-2zM1430 379h2v19h-2zM1432 139h2v19h-2zM1432 339h2v19h-2zM1434 139h2v19h-2zM1434 299h2v19h-2zM1434 359h2v19h-2zM1434 419h2v19h-2zM1434 559h2v19h-2zM1434 599h2v19h-2zM1434 639h2v11h-2zM1436 199h2v19h-2zM1436 339h2v19h-2zM1436 379h2v19h-2zM1436 539h2v19h-2zM1436 559h2v19h-2zM1436 599h2v19h-2zM1438 99h2v19h-2zM1438 579h2v19h-2zM1438 619h2v19h-2zM1438 639h2v11h-2zM1440 139h3v19h-3zM1440 159h3v19h-3zM1440 179h3v19h-3zM1440 259h3v19h-3zM1440 279h3v19h-3zM1440 299h3v19h-3zM1440 359h3v19h-3zM1440 499h3v19h-3zM1440 579h3v19h-3zM1443 199h2v19h-2zM1443 279h2v19h-2zM1443 339h2v19h-2zM1445 159h4v19h-4zM1445 319h4v19h-4zM1445 359h4v19h-4zM1445 619h4v19h-4zM1449 119h2v19h-2zM1449 199h2v19h-2zM1449 239h2v19h-2zM1449 559h2v19h-2zM1449 639h2v11h-2zM1451 639h2v11h-2zM1453 319h3v19h-3zM1453 459h3v19h-3zM1453 559h3v19h-3zM1453 619h3v19h-3zM1456 199h2v19h-2zM1456 339h2v19h-2zM1458 139h2v19h-2zM1458 159h2v19h-2zM1458 219h2v19h-2zM1458 239h2v19h-2zM1458 419h2v19h-2zM1458 559h2v19h-2zM1458 579h2v19h-2zM1458 619h2v19h-2zM1460 199h2v19h-2zM1460 279h2v19h-2zM1460 299h2v19h-2zM1460 499h2v19h-2zM1462 139h2v19h-2zM1462 339h2v19h-2zM1462 419h2v19h-2zM1462 459h2v19h-2zM1464 499h3v19h-3zM1464 579h3v19h-3zM1464 619h3v19h-3zM1467 239h2v19h-2zM1467 279h2v19h-2zM1467 379h2v19h-2zM1467 419h2v19h-2zM1469 159h3v19h-3zM1469 199h3v19h-3zM1469 359h3v19h-3zM1472 119h2v19h-2zM1472 219h2v19h-2zM1472 599h2v19h-2zM1474 159h3v19h-3zM1474 239h3v19h-3zM1477 179h2v19h-2zM1477 199h2v19h-2zM1477 619h2v19h-2zM1477 639h2v11h-2zM1479 139h2v19h-2zM1479 239h2v19h-2zM1479 319h2v19h-2zM1479 459h2v19h-2zM1479 579h2v19h-2zM1479 599h2v19h-2zM1481 179h1v19h-1zM1481 339h1v19h-1zM1481 459h1v19h-1zM1481 619h1v19h-1z"/><path fill="#00a4dc" d="M644 619h4v19h-4zM648 579h7v19h-7zM648 599h7v19h-7zM657 619h4v19h-4zM661 479h4v19h-4zM661 639h4v11h-4zM665 519h2v19h-2zM665 559h2v19h-2zM667 579h2v19h-2zM667 639h2v11h-2zM669 479h2v19h-2zM671 599h2v19h-2zM671 639h2v11h-2zM673 559h2v19h-2zM675 539h2v19h-2zM675 579h2v19h-2zM677 419h4v19h-4zM681 399h4v19h-4zM685 419h4v19h-4zM685 439h4v19h-4zM685 599h4v19h-4zM689 419h2v19h-2zM689 539h2v19h-2zM691 439h2v19h-2zM693 399h2v19h-2zM693 499h2v19h-2zM697 399h2v19h-2zM697 439h2v19h-2zM697 499h2v19h-2zM697 639h2v11h-2zM699 479h2v19h-2zM699 639h2v11h-2zM705 359h2v19h-2zM705 439h2v19h-2zM705 499h2v19h-2zM707 539h2v19h-2zM709 439h2v19h-2zM709 499h2v19h-2zM709 519h2v19h-2zM709 559h2v19h-2zM709 619h2v19h-2zM709 639h2v11h-2zM713 359h2v19h-2zM715 399h4v19h-4zM719 479h2v19h-2zM719 559h2v19h-2zM721 539h2v19h-2zM723 359h4v19h-4zM723 519h4v19h-4zM723 539h4v19h-4zM723 579h4v19h-4zM729 539h2v19h-2zM731 559h4v19h-4zM735 539h2v19h-2zM737 359h2v19h-2zM737 639h2v11h-2zM739 639h3v11h-3zM742 399h2v19h-2zM742 519h2v19h-2zM744 459h2v19h-2zM746 439h2v19h-2zM746 499h2v19h-2zM746 639h2v11h-2zM748 519h2v19h-2zM748 559h2v19h-2zM748 579h2v19h-2zM750 439h2v19h-2zM750 459h2v19h-2zM750 479h2v19h-2zM750 499h2v19h-2zM758 359h2v19h-2zM758 459h2v19h-2zM758 499h2v19h-2zM758 519h2v19h-2zM762 359h3v19h-3zM762 399h3v19h-3zM765 619h4v19h-4zM765 639h4v11h-4zM769 419h4v19h-4zM769 499h4v19h-4zM769 639h4v11h-4zM773 559h2v19h-2zM775 519h2v19h-2zM777 519h2v19h-2zM779 459h2v19h-2zM779 519h2v19h-2zM781 539h2v19h-2zM783 579h2v19h-2zM787 439h2v19h-2zM787 559h2v19h-2zM789 379h4v19h-4zM789 459h4v19h-4zM793 519h2v19h-2zM795 379h2v19h-2zM795 459h2v19h-2zM795 479h2v19h-2zM795 499h2v19h-2zM799 359h4v19h-4zM799 379h4v19h-4zM799 399h4v19h-4zM799 439h4v19h-4zM799 459h4v19h-4zM799 519h4v19h-4zM799 559h4v19h-4zM799 579h4v19h-4zM803 499h2v19h-2zM803 539h2v19h-2zM805 399h3v19h-3zM805 499h3v19h-3zM805 559h3v19h-3zM814 339h2v19h-2zM814 379h2v19h-2zM814 419h2v19h-2zM816 559h3v19h-3zM819 419h2v19h-2zM819 519h2v19h-2zM819 539h2v19h-2zM821 379h2v19h-2zM821 519h2v19h-2zM825 579h3v19h-3zM828 519h3v19h-3zM831 419h4v19h-4zM831 479h4v19h-4zM831 579h4v19h-4zM835 439h2v19h-2zM835 479h2v19h-2zM837 519h2v19h-2zM839 419h2v19h-2zM839 479h2v19h-2zM839 499h2v19h-2zM841 579h4v19h-4zM841 599h4v19h-4zM845 499h4v19h-4zM845 619h4v19h-4zM849 439h2v19h-2zM849 519h2v19h-2zM851 619h4v19h-4zM855 519h2v19h-2zM855 559h2v19h-2zM857 459h3v19h-3zM857 519h3v19h-3zM860 579h3v19h-3zM863 519h2v19h-2zM863 559h2v19h-2zM863 599h2v19h-2zM865 519h2v19h-2zM865 559h2v19h-2zM869 619h3v19h-3zM872 539h2v19h-2zM872 559h2v19h-2zM874 499h2v19h-2zM878 479h2v19h-2zM878 519h2v19h-2zM880 559h2v19h-2zM882 519h2v19h-2zM882 539h2v19h-2zM882 559h2v19h-2zM882 599h2v19h-2zM884 579h2v19h-2zM886 619h2v19h-2zM888 559h3v19h-3zM888 579h3v19h-3zM891 559h2v19h-2zM893 519h2v19h-2zM895 499h2v19h-2zM895 539h2v19h-2zM895 599h2v19h-2zM895 639h2v11h-2zM904 539h2v19h-2zM904 619h2v19h-2zM909 599h2v19h-2zM909 619h2v19h-2zM911 579h4v19h-4zM915 559h4v19h-4zM923 539h2v19h-2zM923 559h2v19h-2zM932 559h2v19h-2zM934 579h2v19h-2zM936 619h2v19h-2zM936 639h2v11h-2zM940 579h2v19h-2zM942 559h2v19h-2zM942 579h2v19h-2zM942 599h2v19h-2zM944 599h2v19h-2zM949 579h3v19h-3zM952 599h2v19h-2zM954 539h2v19h-2zM960 619h3v19h-3zM963 579h2v19h-2zM963 599h2v19h-2zM963 619h2v19h-2zM965 599h2v19h-2zM967 539h3v19h-3zM970 599h3v19h-3zM973 579h2v19h-2zM973 639h2v11h-2zM975 479h2v19h-2zM979 519h4v19h-4zM979 579h4v19h-4zM985 599h2v19h-2zM987 499h2v19h-2zM987 559h2v19h-2zM989 619h4v19h-4zM993 599h2v19h-2zM995 639h2v11h-2zM997 559h2v19h-2zM999 619h2v19h-2zM1001 579h2v19h-2zM1001 619h2v19h-2zM1005 599h3v19h-3zM1010 539h2v19h-2zM1010 619h2v19h-2zM1012 599h3v19h-3zM1012 639h3v11h-3zM1018 619h2v19h-2zM1024 479h2v19h-2zM1026 539h2v19h-2zM1028 559h3v19h-3zM1031 539h4v19h-4zM1031 639h4v11h-4zM1035 539h2v19h-2zM1035 639h2v11h-2zM1037 459h2v19h-2zM1037 479h2v19h-2zM1039 619h2v19h-2zM1043 499h3v19h-3zM1043 559h3v19h-3zM1043 639h3v11h-3zM1046 539h4v19h-4zM1046 559h4v19h-4zM1050 479h3v19h-3zM1050 499h3v19h-3zM1057 479h4v19h-4zM1057 579h4v19h-4zM1061 479h2v19h-2zM1063 539h2v19h-2zM1063 579h2v19h-2zM1063 619h2v19h-2zM1065 479h2v19h-2zM1065 519h2v19h-2zM1065 539h2v19h-2zM1065 559h2v19h-2zM1067 539h2v19h-2zM1067 559h2v19h-2zM1075 619h4v19h-4zM1079 539h2v19h-2zM1079 559h2v19h-2zM1079 619h2v19h-2zM1081 599h2v19h-2zM1083 559h2v19h-2zM1083 599h2v19h-2zM1085 619h3v19h-3zM1088 599h2v19h-2zM1090 599h4v19h-4zM1094 539h2v19h-2zM1094 599h2v19h-2zM1106 559h2v19h-2zM1106 599h2v19h-2zM1108 559h2v19h-2zM1108 579h2v19h-2zM1115 539h2v19h-2zM1115 559h2v19h-2zM1115 599h2v19h-2zM1117 579h3v19h-3zM1117 599h3v19h-3zM1117 639h3v11h-3zM1120 559h3v19h-3zM1133 599h2v19h-2zM1133 619h2v19h-2zM1141 599h4v19h-4zM1151 599h2v19h-2zM1155 559h2v19h-2zM1155 579h2v19h-2zM1155 599h2v19h-2zM1159 579h2v19h-2zM1159 619h2v19h-2zM1161 619h3v19h-3zM1164 619h2v19h-2zM1164 639h2v11h-2zM1166 619h3v19h-3zM1169 599h2v19h-2zM1169 619h2v19h-2zM1171 599h4v19h-4zM1177 519h2v19h-2zM1177 559h2v19h-2zM1179 539h2v19h-2zM1186 479h2v19h-2zM1186 499h2v19h-2zM1186 559h2v19h-2zM1186 579h2v19h-2zM1188 519h2v19h-2zM1188 579h2v19h-2zM1188 599h2v19h-2zM1190 459h2v19h-2zM1190 479h2v19h-2zM1190 619h2v19h-2zM1190 639h2v11h-2zM1196 579h2v19h-2zM1198 519h2v19h-2zM1202 419h2v19h-2zM1202 479h2v19h-2zM1202 519h2v19h-2zM1202 579h2v19h-2zM1202 599h2v19h-2zM1204 439h3v19h-3zM1207 419h4v19h-4zM1207 439h4v19h-4zM1211 459h2v19h-2zM1211 479h2v19h-2zM1213 439h2v19h-2zM1213 519h2v19h-2zM1213 619h2v19h-2zM1215 439h2v19h-2zM1215 519h2v19h-2zM1217 619h3v19h-3zM1220 559h2v19h-2zM1220 619h2v19h-2zM1222 579h2v19h-2zM1222 619h2v19h-2zM1222 639h2v11h-2zM1224 399h3v19h-3zM1224 419h3v19h-3zM1227 399h2v19h-2zM1227 539h2v19h-2zM1227 619h2v19h-2zM1229 419h2v19h-2zM1229 639h2v11h-2zM1231 599h2v19h-2zM1231 619h2v19h-2zM1233 599h2v19h-2zM1235 399h2v19h-2zM1235 479h2v19h-2zM1235 539h2v19h-2zM1235 619h2v19h-2zM1237 439h2v19h-2zM1237 579h2v19h-2zM1237 599h2v19h-2zM1237 639h2v11h-2zM1239 439h4v19h-4zM1239 559h4v19h-4zM1239 579h4v19h-4zM1239 619h4v19h-4zM1243 459h2v19h-2zM1245 399h2v19h-2zM1245 639h2v11h-2zM1247 599h3v19h-3zM1247 639h3v11h-3zM1252 639h2v11h-2zM1254 499h4v19h-4zM1258 499h4v19h-4zM1262 459h2v19h-2zM1262 559h2v19h-2zM1264 339h2v19h-2zM1264 379h2v19h-2zM1264 419h2v19h-2zM1266 419h2v19h-2zM1268 379h2v19h-2zM1268 479h2v19h-2zM1268 559h2v19h-2zM1270 479h3v19h-3zM1270 559h3v19h-3zM1273 379h3v19h-3zM1273 599h3v19h-3zM1276 459h2v19h-2zM1278 259h2v19h-2zM1278 399h2v19h-2zM1278 499h2v19h-2zM1278 559h2v19h-2zM1278 599h2v19h-2zM1278 639h2v11h-2zM1280 499h2v19h-2zM1280 579h2v19h-2zM1280 599h2v19h-2zM1280 639h2v11h-2zM1282 319h2v19h-2zM1284 299h2v19h-2zM1286 219h2v19h-2zM1286 239h2v19h-2zM1286 319h2v19h-2zM1286 599h2v19h-2zM1288 259h2v19h-2zM1288 419h2v19h-2zM1290 539h2v19h-2zM1292 259h2v19h-2zM1292 319h2v19h-2zM1292 459h2v19h-2zM1292 619h2v19h-2zM1294 559h2v19h-2zM1296 239h4v19h-4zM1296 259h4v19h-4zM1296 339h4v19h-4zM1296 379h4v19h-4zM1302 159h2v19h-2zM1302 279h2v19h-2zM1304 459h4v19h-4zM1304 639h4v11h-4zM1308 279h3v19h-3zM1311 179h3v19h-3zM1311 559h3v19h-3zM1314 599h4v19h-4zM1318 139h2v19h-2zM1318 199h2v19h-2zM1318 299h2v19h-2zM1318 599h2v19h-2zM1320 199h2v19h-2zM1320 299h2v19h-2zM1320 459h2v19h-2zM1320 499h2v19h-2zM1320 599h2v19h-2zM1322 139h4v19h-4zM1322 639h4v11h-4zM1326 379h2v19h-2zM1330 179h2v19h-2zM1330 199h2v19h-2zM1330 219h2v19h-2zM1330 279h2v19h-2zM1332 199h4v19h-4zM1332 299h4v19h-4zM1332 339h4v19h-4zM1338 159h2v19h-2zM1338 639h2v11h-2zM1340 359h2v19h-2zM1340 499h2v19h-2zM1342 279h4v19h-4zM1342 419h4v19h-4zM1346 419h2v19h-2zM1346 539h2v19h-2zM1346 579h2v19h-2zM1348 459h2v19h-2zM1348 539h2v19h-2zM1350 199h2v19h-2zM1350 379h2v19h-2zM1350 559h2v19h-2zM1352 139h2v19h-2zM1352 159h2v19h-2zM1352 399h2v19h-2zM1352 579h2v19h-2zM1354 399h2v19h-2zM1359 199h3v19h-3zM1359 299h3v19h-3zM1362 219h2v19h-2zM1364 99h2v19h-2zM1364 119h2v19h-2zM1364 199h2v19h-2zM1366 179h2v19h-2zM1366 279h2v19h-2zM1366 299h2v19h-2zM1366 619h2v19h-2zM1368 239h3v19h-3zM1371 379h2v19h-2zM1371 419h2v19h-2zM1371 499h2v19h-2zM1371 559h2v19h-2zM1373 459h3v19h-3zM1373 599h3v19h-3zM1373 639h3v11h-3zM1376 199h2v19h-2zM1376 239h2v19h-2zM1376 379h2v19h-2zM1378 579h2v19h-2zM1380 239h2v19h-2zM1382 259h2v19h-2zM1384 99h2v19h-2zM1384 359h2v19h-2zM1386 99h2v19h-2zM1388 279h2v19h-2zM1388 419h2v19h-2zM1388 639h2v11h-2zM1393 539h3v19h-3zM1393 579h3v19h-3zM1396 99h2v19h-2zM1396 379h2v19h-2zM1396 459h2v19h-2zM1398 579h2v19h-2zM1400 419h4v19h-4zM1406 139h4v19h-4zM1406 279h4v19h-4zM1406 539h4v19h-4zM1406 639h4v11h-4zM1410 139h3v19h-3zM1410 279h3v19h-3zM1410 319h3v19h-3zM1410 459h3v19h-3zM1415 339h2v19h-2zM1415 379h2v19h-2zM1417 199h3v19h-3zM1422 279h4v19h-4zM1422 459h4v19h-4zM1422 559h4v19h-4zM1426 539h4v19h-4zM1430 319h2v19h-2zM1432 499h2v19h-2zM1432 639h2v11h-2zM1434 379h2v19h-2zM1438 379h2v19h-2zM1438 419h2v19h-2zM1438 459h2v19h-2zM1443 579h2v19h-2zM1443 599h2v19h-2zM1443 619h2v19h-2zM1445 79h4v19h-4zM1445 219h4v19h-4zM1449 379h2v19h-2zM1451 99h2v19h-2zM1451 139h2v19h-2zM1451 279h2v19h-2zM1451 399h2v19h-2zM1451 459h2v19h-2zM1456 279h2v19h-2zM1456 419h2v19h-2zM1456 539h2v19h-2zM1456 579h2v19h-2zM1460 239h2v19h-2zM1464 199h3v19h-3zM1464 379h3v19h-3zM1464 459h3v19h-3zM1467 119h2v19h-2zM1467 319h2v19h-2zM1467 359h2v19h-2zM1469 559h3v19h-3zM1477 379h2v19h-2zM1477 419h2v19h-2zM1477 499h2v19h-2zM1479 159h2v19h-2zM1479 299h2v19h-2zM1479 379h2v19h-2zM1479 419h2v19h-2zM1479 619h2v19h-2zM1481 279h1v19h-1zM1481 299h1v19h-1z"/><path fill="#c80000" d="M648 339h7v19h-7zM655 339h2v19h-2zM657 299h4v19h-4zM657 339h4v19h-4zM657 439h4v19h-4zM661 279h4v19h-4zM665 399h2v19h-2zM669 299h2v19h-2zM671 299h2v19h-2zM671 359h2v19h-2zM681 319h4v19h-4zM685 359h4v19h-4zM689 199h2v19h-2zM689 279h2v19h-2zM689 299h2v19h-2zM691 179h2v19h-2zM691 199h2v19h-2zM693 199h2v19h-2zM693 279h2v19h-2zM695 259h2v19h-2zM695 319h2v19h-2zM697 199h2v19h-2zM701 339h4v19h-4zM705 139h2v19h-2zM707 139h2v19h-2zM709 179h2v19h-2zM709 299h2v19h-2zM711 299h2v19h-2zM713 139h2v19h-2zM713 279h2v19h-2zM713 299h2v19h-2zM715 139h4v19h-4zM719 199h2v19h-2zM719 299h2v19h-2zM721 139h2v19h-2zM721 199h2v19h-2zM721 279h2v19h-2zM723 179h4v19h-4zM727 139h2v19h-2zM727 199h2v19h-2zM727 299h2v19h-2zM729 199h2v19h-2zM729 319h2v19h-2zM731 199h4v19h-4zM731 279h4v19h-4zM735 139h2v19h-2zM735 179h2v19h-2zM735 319h2v19h-2zM737 139h2v19h-2zM737 199h2v19h-2zM739 199h3v19h-3zM739 299h3v19h-3zM742 199h2v19h-2zM742 339h2v19h-2zM744 199h2v19h-2zM746 279h2v19h-2zM746 319h2v19h-2zM750 199h2v19h-2zM750 259h2v19h-2zM750 319h2v19h-2zM752 299h2v19h-2zM756 339h2v19h-2zM760 199h2v19h-2zM762 299h3v19h-3zM765 199h4v19h-4zM769 339h4v19h-4zM769 359h4v19h-4zM773 359h2v19h-2zM775 199h2v19h-2zM775 319h2v19h-2zM775 379h2v19h-2zM777 199h2v19h-2zM777 279h2v19h-2zM777 339h2v19h-2zM777 379h2v19h-2zM779 279h2v19h-2zM779 299h2v19h-2zM781 319h2v19h-2zM783 299h2v19h-2zM783 399h2v19h-2zM785 279h2v19h-2zM785 299h2v19h-2zM785 379h2v19h-2zM787 259h2v19h-2zM787 299h2v19h-2zM789 199h4v19h-4zM793 139h2v19h-2zM795 199h2v19h-2zM795 299h2v19h-2zM797 339h2v19h-2zM799 199h4v19h-4zM799 299h4v19h-4zM799 319h4v19h-4zM803 199h2v19h-2zM803 279h2v19h-2zM808 179h2v19h-2zM808 199h2v19h-2zM808 299h2v19h-2zM810 199h4v19h-4zM810 319h4v19h-4zM814 279h2v19h-2zM814 299h2v19h-2zM816 199h3v19h-3zM816 259h3v19h-3zM819 139h2v19h-2zM819 219h2v19h-2zM819 279h2v19h-2zM819 299h2v19h-2zM823 139h2v19h-2zM823 339h2v19h-2zM828 339h3v19h-3zM831 279h4v19h-4zM831 339h4v19h-4zM835 139h2v19h-2zM835 159h2v19h-2zM837 239h2v19h-2zM839 139h2v19h-2zM839 199h2v19h-2zM839 279h2v19h-2zM839 319h2v19h-2zM841 199h4v19h-4zM841 339h4v19h-4zM845 159h4v19h-4zM845 299h4v19h-4zM845 319h4v19h-4zM849 139h2v19h-2zM849 339h2v19h-2zM849 359h2v19h-2zM849 399h2v19h-2zM851 159h4v19h-4zM855 139h2v19h-2zM855 159h2v19h-2zM855 299h2v19h-2zM855 319h2v19h-2zM855 359h2v19h-2zM855 379h2v19h-2zM855 399h2v19h-2zM857 219h3v19h-3zM857 339h3v19h-3zM857 419h3v19h-3zM860 139h3v19h-3zM860 239h3v19h-3zM860 319h3v19h-3zM860 439h3v19h-3zM863 219h2v19h-2zM863 339h2v19h-2zM865 159h2v19h-2zM865 399h2v19h-2zM867 239h2v19h-2zM869 219h3v19h-3zM872 159h2v19h-2zM872 359h2v19h-2zM874 299h2v19h-2zM874 379h2v19h-2zM874 459h2v19h-2zM876 159h2v19h-2zM876 239h2v19h-2zM876 339h2v19h-2zM876 499h2v19h-2zM878 139h2v19h-2zM878 159h2v19h-2zM878 299h2v19h-2zM878 359h2v19h-2zM880 139h2v19h-2zM880 359h2v19h-2zM882 159h2v19h-2zM882 279h2v19h-2zM884 279h2v19h-2zM884 319h2v19h-2zM886 139h2v19h-2zM886 299h2v19h-2zM886 359h2v19h-2zM886 399h2v19h-2zM888 159h3v19h-3zM888 279h3v19h-3zM888 339h3v19h-3zM891 219h2v19h-2zM891 239h2v19h-2zM891 299h2v19h-2zM891 319h2v19h-2zM891 379h2v19h-2zM891 439h2v19h-2zM891 479h2v19h-2zM893 159h2v19h-2zM893 299h2v19h-2zM893 319h2v19h-2zM893 459h2v19h-2zM895 159h2v19h-2zM895 239h2v19h-2zM895 259h2v19h-2zM895 359h2v19h-2zM895 439h2v19h-2zM897 159h3v19h-3zM897 239h3v19h-3zM897 319h3v19h-3zM900 159h2v19h-2zM900 239h2v19h-2zM900 319h2v19h-2zM900 439h2v19h-2zM902 159h2v19h-2zM902 219h2v19h-2zM902 239h2v19h-2zM902 299h2v19h-2zM902 319h2v19h-2zM904 139h2v19h-2zM904 159h2v19h-2zM904 259h2v19h-2zM904 319h2v19h-2zM904 379h2v19h-2zM904 439h2v19h-2zM904 459h2v19h-2zM904 479h2v19h-2zM906 139h3v19h-3zM906 159h3v19h-3zM906 259h3v19h-3zM906 299h3v19h-3zM909 299h2v19h-2zM909 319h2v19h-2zM911 139h4v19h-4zM911 219h4v19h-4zM911 259h4v19h-4zM911 299h4v19h-4zM911 319h4v19h-4zM915 239h4v19h-4zM915 319h4v19h-4zM915 439h4v19h-4zM919 139h2v19h-2zM919 159h2v19h-2zM919 319h2v19h-2zM919 359h2v19h-2zM919 519h2v19h-2zM921 159h2v19h-2zM921 439h2v19h-2zM923 259h2v19h-2zM923 279h2v19h-2zM923 499h2v19h-2zM925 279h3v19h-3zM925 299h3v19h-3zM925 319h3v19h-3zM925 399h3v19h-3zM925 519h3v19h-3zM928 159h2v19h-2zM928 219h2v19h-2zM928 279h2v19h-2zM928 459h2v19h-2zM930 159h2v19h-2zM930 239h2v19h-2zM930 299h2v19h-2zM930 399h2v19h-2zM930 539h2v19h-2zM932 139h2v19h-2zM932 319h2v19h-2zM932 359h2v19h-2zM932 459h2v19h-2zM934 159h2v19h-2zM934 319h2v19h-2zM936 139h2v19h-2zM936 279h2v19h-2zM938 239h2v19h-2zM938 379h2v19h-2zM938 399h2v19h-2zM938 539h2v19h-2zM940 219h2v19h-2zM942 159h2v19h-2zM942 259h2v19h-2zM942 359h2v19h-2zM942 399h2v19h-2zM944 239h2v19h-2zM944 319h2v19h-2zM946 159h3v19h-3zM946 299h3v19h-3zM946 319h3v19h-3zM949 159h3v19h-3zM949 239h3v19h-3zM949 259h3v19h-3zM949 319h3v19h-3zM952 299h2v19h-2zM952 319h2v19h-2zM952 339h2v19h-2zM952 359h2v19h-2zM952 499h2v19h-2zM954 259h2v19h-2zM954 299h2v19h-2zM954 339h2v19h-2zM954 439h2v19h-2zM956 299h2v19h-2zM956 439h2v19h-2zM958 219h2v19h-2zM958 259h2v19h-2zM958 279h2v19h-2zM958 299h2v19h-2zM958 319h2v19h-2zM958 359h2v19h-2zM960 159h3v19h-3zM960 259h3v19h-3zM960 299h3v19h-3zM960 319h3v19h-3zM960 359h3v19h-3zM960 399h3v19h-3zM960 479h3v19h-3zM963 239h2v19h-2zM963 339h2v19h-2zM963 439h2v19h-2zM963 459h2v19h-2zM965 139h2v19h-2zM965 159h2v19h-2zM965 239h2v19h-2zM965 259h2v19h-2zM965 339h2v19h-2zM965 359h2v19h-2zM967 259h3v19h-3zM967 439h3v19h-3zM970 159h3v19h-3zM970 239h3v19h-3zM970 359h3v19h-3zM973 319h2v19h-2zM975 219h2v19h-2zM975 239h2v19h-2zM975 379h2v19h-2zM975 419h2v19h-2zM975 459h2v19h-2zM977 339h2v19h-2zM979 259h4v19h-4zM979 359h4v19h-4zM979 459h4v19h-4zM979 479h4v19h-4zM983 319h2v19h-2zM983 359h2v19h-2zM983 459h2v19h-2zM983 479h2v19h-2zM987 159h2v19h-2zM987 219h2v19h-2zM987 339h2v19h-2zM989 159h4v19h-4zM989 259h4v19h-4zM989 459h4v19h-4zM993 159h2v19h-2zM993 239h2v19h-2zM993 339h2v19h-2zM995 359h2v19h-2zM995 399h2v19h-2zM995 459h2v19h-2zM997 159h2v19h-2zM997 459h2v19h-2zM999 139h2v19h-2zM999 159h2v19h-2zM999 239h2v19h-2zM1001 239h2v19h-2zM1003 159h2v19h-2zM1003 259h2v19h-2zM1003 319h2v19h-2zM1003 439h2v19h-2zM1005 219h3v19h-3zM1005 239h3v19h-3zM1008 259h2v19h-2zM1010 239h2v19h-2zM1010 339h2v19h-2zM1012 259h3v19h-3zM1012 319h3v19h-3zM1012 399h3v19h-3zM1015 239h3v19h-3zM1015 339h3v19h-3zM1018 139h2v19h-2zM1018 159h2v19h-2zM1018 379h2v19h-2zM1020 419h2v19h-2zM1022 159h2v19h-2zM1022 419h2v19h-2zM1024 139h2v19h-2zM1024 339h2v19h-2zM1024 379h2v19h-2zM1026 159h2v19h-2zM1026 359h2v19h-2zM1026 379h2v19h-2zM1028 159h3v19h-3zM1028 239h3v19h-3zM1028 419h3v19h-3zM1031 419h4v19h-4zM1035 159h2v19h-2zM1035 299h2v19h-2zM1037 159h2v19h-2zM1037 239h2v19h-2zM1037 339h2v19h-2zM1039 139h2v19h-2zM1039 159h2v19h-2zM1039 219h2v19h-2zM1039 239h2v19h-2zM1039 339h2v19h-2zM1041 219h2v19h-2zM1041 239h2v19h-2zM1041 259h2v19h-2zM1043 139h3v19h-3zM1043 159h3v19h-3zM1043 319h3v19h-3zM1043 379h3v19h-3zM1050 139h3v19h-3zM1050 239h3v19h-3zM1050 399h3v19h-3zM1050 439h3v19h-3zM1053 159h4v19h-4zM1053 239h4v19h-4zM1057 379h4v19h-4zM1061 159h2v19h-2zM1061 339h2v19h-2zM1063 159h2v19h-2zM1063 459h2v19h-2zM1063 479h2v19h-2zM1065 399h2v19h-2zM1065 459h2v19h-2zM1069 299h2v19h-2zM1069 439h2v19h-2zM1069 499h2v19h-2zM1075 139h4v19h-4zM1075 159h4v19h-4zM1079 219h2v19h-2zM1079 279h2v19h-2zM1079 339h2v19h-2zM1081 139h2v19h-2zM1081 159h2v19h-2zM1083 379h2v19h-2zM1085 159h3v19h-3zM1085 239h3v19h-3zM1085 459h3v19h-3zM1088 139h2v19h-2zM1088 159h2v19h-2zM1088 279h2v19h-2zM1088 459h2v19h-2zM1090 139h4v19h-4zM1090 219h4v19h-4zM1090 279h4v19h-4zM1090 319h4v19h-4zM1090 339h4v19h-4zM1090 439h4v19h-4zM1094 139h2v19h-2zM1094 279h2v19h-2zM1094 379h2v19h-2zM1096 159h2v19h-2zM1096 239h2v19h-2zM1096 319h2v19h-2zM1098 139h2v19h-2zM1098 339h2v19h-2zM1098 359h2v19h-2zM1100 279h2v19h-2zM1100 419h2v19h-2zM1100 499h2v19h-2zM1102 419h2v19h-2zM1104 159h2v19h-2zM1104 299h2v19h-2zM1104 439h2v19h-2zM1104 459h2v19h-2zM1104 479h2v19h-2zM1106 139h2v19h-2zM1106 159h2v19h-2zM1108 159h2v19h-2zM1108 219h2v19h-2zM1108 279h2v19h-2zM1108 399h2v19h-2zM1108 439h2v19h-2zM1108 499h2v19h-2zM1110 279h3v19h-3zM1110 339h3v19h-3zM1110 379h3v19h-3zM1113 359h2v19h-2zM1113 419h2v19h-2zM1115 419h2v19h-2zM1117 139h3v19h-3zM1117 279h3v19h-3zM1117 519h3v19h-3zM1120 159h3v19h-3zM1120 219h3v19h-3zM1120 279h3v19h-3zM1120 399h3v19h-3zM1120 499h3v19h-3zM1123 159h2v19h-2zM1123 239h2v19h-2zM1123 499h2v19h-2zM1125 139h2v19h-2zM1125 279h2v19h-2zM1125 299h2v19h-2zM1125 439h2v19h-2zM1125 499h2v19h-2zM1127 139h2v19h-2zM1127 219h2v19h-2zM1127 239h2v19h-2zM1129 159h2v19h-2zM1129 279h2v19h-2zM1129 359h2v19h-2zM1131 139h2v19h-2zM1131 239h2v19h-2zM1131 479h2v19h-2zM1133 139h2v19h-2zM1133 239h2v19h-2zM1133 279h2v19h-2zM1135 159h2v19h-2zM1135 359h2v19h-2zM1135 399h2v19h-2zM1137 379h2v19h-2zM1137 459h2v19h-2zM1139 399h2v19h-2zM1139 439h2v19h-2zM1141 159h4v19h-4zM1141 299h4v19h-4zM1141 379h4v19h-4zM1141 419h4v19h-4zM1141 459h4v19h-4zM1141 479h4v19h-4zM1145 159h2v19h-2zM1145 279h2v19h-2zM1145 319h2v19h-2zM1145 399h2v19h-2zM1145 499h2v19h-2zM1147 139h4v19h-4zM1147 159h4v19h-4zM1147 239h4v19h-4zM1147 279h4v19h-4zM1147 379h4v19h-4zM1147 399h4v19h-4zM1147 419h4v19h-4zM1147 519h4v19h-4zM1151 279h2v19h-2zM1151 339h2v19h-2zM1151 359h2v19h-2zM1151 399h2v19h-2zM1151 479h2v19h-2zM1153 159h2v19h-2zM1153 219h2v19h-2zM1153 279h2v19h-2zM1155 139h2v19h-2zM1155 359h2v19h-2zM1155 499h2v19h-2zM1157 159h2v19h-2zM1157 239h2v19h-2zM1157 519h2v19h-2zM1159 159h2v19h-2zM1159 279h2v19h-2zM1159 539h2v19h-2zM1161 239h3v19h-3zM1161 359h3v19h-3zM1164 159h2v19h-2zM1166 139h3v19h-3zM1166 159h3v19h-3zM1166 219h3v19h-3zM1166 279h3v19h-3zM1166 359h3v19h-3zM1166 459h3v19h-3zM1169 159h2v19h-2zM1169 379h2v19h-2zM1169 399h2v19h-2zM1169 479h2v19h-2zM1175 139h2v19h-2zM1175 219h2v19h-2zM1175 299h2v19h-2zM1175 339h2v19h-2zM1175 479h2v19h-2zM1175 499h2v19h-2zM1177 339h2v19h-2zM1177 379h2v19h-2zM1179 139h2v19h-2zM1179 239h2v19h-2zM1179 379h2v19h-2zM1181 139h2v19h-2zM1181 159h2v19h-2zM1181 239h2v19h-2zM1181 339h2v19h-2zM1181 479h2v19h-2zM1181 499h2v19h-2zM1183 279h3v19h-3zM1186 159h2v19h-2zM1186 219h2v19h-2zM1186 239h2v19h-2zM1186 419h2v19h-2zM1186 459h2v19h-2zM1188 159h2v19h-2zM1188 219h2v19h-2zM1190 439h2v19h-2zM1192 159h4v19h-4zM1192 259h4v19h-4zM1192 379h4v19h-4zM1196 139h2v19h-2zM1196 159h2v19h-2zM1196 239h2v19h-2zM1196 279h2v19h-2zM1196 379h2v19h-2zM1196 399h2v19h-2zM1198 159h2v19h-2zM1200 139h2v19h-2zM1202 139h2v19h-2zM1202 159h2v19h-2zM1202 219h2v19h-2zM1202 359h2v19h-2zM1204 139h3v19h-3zM1213 339h2v19h-2zM1213 359h2v19h-2zM1215 319h2v19h-2zM1217 159h3v19h-3zM1220 159h2v19h-2zM1220 179h2v19h-2zM1222 139h2v19h-2zM1222 179h2v19h-2zM1222 359h2v19h-2zM1224 179h3v19h-3zM1224 279h3v19h-3zM1227 139h2v19h-2zM1229 319h2v19h-2zM1231 139h2v19h-2zM1231 179h2v19h-2zM1231 199h2v19h-2zM1231 259h2v19h-2zM1233 139h2v19h-2zM1233 159h2v19h-2zM1233 199h2v19h-2zM1233 379h2v19h-2zM1235 139h2v19h-2zM1235 159h2v19h-2zM1235 179h2v19h-2zM1235 199h2v19h-2zM1235 319h2v19h-2zM1237 139h2v19h-2zM1237 159h2v19h-2zM1237 199h2v19h-2zM1237 359h2v19h-2zM1237 379h2v19h-2zM1239 179h4v19h-4zM1243 139h2v19h-2zM1243 179h2v19h-2zM1243 199h2v19h-2zM1243 339h2v19h-2zM1245 139h2v19h-2zM1245 199h2v19h-2zM1245 219h2v19h-2zM1245 259h2v19h-2zM1247 199h3v19h-3zM1247 259h3v19h-3zM1247 339h3v19h-3zM1247 359h3v19h-3zM1250 159h2v19h-2zM1250 199h2v19h-2zM1250 339h2v19h-2zM1252 139h2v19h-2zM1254 139h4v19h-4zM1254 199h4v19h-4zM1266 139h2v19h-2zM1266 219h2v19h-2zM1268 139h2v19h-2zM1268 259h2v19h-2zM1270 259h3v19h-3zM1270 279h3v19h-3zM1273 79h3v19h-3zM1276 99h2v19h-2zM1278 68h2v10h-2zM1278 139h2v19h-2zM1284 79h2v19h-2zM1290 199h2v19h-2zM1292 79h2v19h-2zM1292 99h2v19h-2zM1294 68h2v10h-2zM1296 68h4v10h-4zM1302 119h2v19h-2zM1308 68h3v10h-3zM1311 68h3v10h-3zM1314 68h4v10h-4zM1314 79h4v19h-4zM1326 79h2v19h-2zM1326 99h2v19h-2zM1336 79h2v19h-2zM1336 99h2v19h-2zM1338 68h2v10h-2zM1338 79h2v19h-2zM1342 79h4v19h-4zM1346 68h2v10h-2zM1348 68h2v10h-2zM1352 79h2v19h-2zM1354 79h2v19h-2zM1359 68h3v10h-3zM1371 68h2v10h-2zM1380 79h2v19h-2zM1382 68h2v10h-2zM1382 79h2v19h-2zM1386 79h2v19h-2zM1388 68h2v10h-2zM1398 68h2v10h-2zM1400 68h4v10h-4zM1404 68h2v10h-2zM1413 79h2v19h-2zM1415 79h2v19h-2zM1426 79h4v19h-4zM1436 68h2v10h-2zM1460 68h2v10h-2zM1467 79h2v19h-2zM1479 68h2v10h-2zM1481 79h1v19h-1z"/><path fill="#003048" d="M648 539h7v19h-7zM648 619h7v19h-7zM655 639h2v11h-2zM657 639h4v11h-4zM661 459h4v19h-4zM661 499h4v19h-4zM661 599h4v19h-4zM665 439h2v19h-2zM665 479h2v19h-2zM669 439h2v19h-2zM669 499h2v19h-2zM671 619h2v19h-2zM673 439h2v19h-2zM673 599h2v19h-2zM673 619h2v19h-2zM677 459h4v19h-4zM681 459h4v19h-4zM685 639h4v11h-4zM689 579h2v19h-2zM691 459h2v19h-2zM691 539h2v19h-2zM693 359h2v19h-2zM693 419h2v19h-2zM695 639h2v11h-2zM697 459h2v19h-2zM697 539h2v19h-2zM699 539h2v19h-2zM699 619h2v19h-2zM701 419h4v19h-4zM701 559h4v19h-4zM705 539h2v19h-2zM707 379h2v19h-2zM707 399h2v19h-2zM707 459h2v19h-2zM709 359h2v19h-2zM711 379h2v19h-2zM711 499h2v19h-2zM711 539h2v19h-2zM713 419h2v19h-2zM713 519h2v19h-2zM715 379h4v19h-4zM715 519h4v19h-4zM715 539h4v19h-4zM719 399h2v19h-2zM719 419h2v19h-2zM719 439h2v19h-2zM719 519h2v19h-2zM721 339h2v19h-2zM721 419h2v19h-2zM723 459h4v19h-4zM723 479h4v19h-4zM723 619h4v19h-4zM723 639h4v11h-4zM727 339h2v19h-2zM727 499h2v19h-2zM727 559h2v19h-2zM729 439h2v19h-2zM729 479h2v19h-2zM729 499h2v19h-2zM729 619h2v19h-2zM731 499h4v19h-4zM731 519h4v19h-4zM735 479h2v19h-2zM737 419h2v19h-2zM742 539h2v19h-2zM748 359h2v19h-2zM748 399h2v19h-2zM748 479h2v19h-2zM750 359h2v19h-2zM752 439h2v19h-2zM752 539h2v19h-2zM756 459h2v19h-2zM758 439h2v19h-2zM760 639h2v11h-2zM762 439h3v19h-3zM765 399h4v19h-4zM765 539h4v19h-4zM769 579h4v19h-4zM773 439h2v19h-2zM773 459h2v19h-2zM773 599h2v19h-2zM775 539h2v19h-2zM779 499h2v19h-2zM781 459h2v19h-2zM781 499h2v19h-2zM781 579h2v19h-2zM783 459h2v19h-2zM797 439h2v19h-2zM799 419h4v19h-4zM803 359h2v19h-2zM803 419h2v19h-2zM810 399h4v19h-4zM816 439h3v19h-3zM816 479h3v19h-3zM816 539h3v19h-3zM819 459h2v19h-2zM819 479h2v19h-2zM819 559h2v19h-2zM819 579h2v19h-2zM823 359h2v19h-2zM823 539h2v19h-2zM825 459h3v19h-3zM825 479h3v19h-3zM825 519h3v19h-3zM828 419h3v19h-3zM828 539h3v19h-3zM835 499h2v19h-2zM837 479h2v19h-2zM837 499h2v19h-2zM839 459h2v19h-2zM841 459h4v19h-4zM845 479h4v19h-4zM849 499h2v19h-2zM851 439h4v19h-4zM851 579h4v19h-4zM855 499h2v19h-2zM867 479h2v19h-2zM867 599h2v19h-2zM874 539h2v19h-2zM876 579h2v19h-2zM876 619h2v19h-2zM878 599h2v19h-2zM880 539h2v19h-2zM880 639h2v11h-2zM886 519h2v19h-2zM888 539h3v19h-3zM888 619h3v19h-3zM888 639h3v11h-3zM895 619h2v19h-2zM897 599h3v19h-3zM900 539h2v19h-2zM900 559h2v19h-2zM902 559h2v19h-2zM902 639h2v11h-2zM909 559h2v19h-2zM919 539h2v19h-2zM921 599h2v19h-2zM921 619h2v19h-2zM923 639h2v11h-2zM925 559h3v19h-3zM930 599h2v19h-2zM930 639h2v11h-2zM934 599h2v19h-2zM936 539h2v19h-2zM940 539h2v19h-2zM946 639h3v11h-3zM949 559h3v19h-3zM949 599h3v19h-3zM958 559h2v19h-2zM960 559h3v19h-3zM970 519h3v19h-3zM973 559h2v19h-2zM975 619h2v19h-2zM977 539h2v19h-2zM977 579h2v19h-2zM979 599h4v19h-4zM983 539h2v19h-2zM987 519h2v19h-2zM987 539h2v19h-2zM987 599h2v19h-2zM993 499h2v19h-2zM993 619h2v19h-2zM995 499h2v19h-2zM997 539h2v19h-2zM997 599h2v19h-2zM1001 479h2v19h-2zM1003 559h2v19h-2zM1005 499h3v19h-3zM1008 499h2v19h-2zM1008 519h2v19h-2zM1010 599h2v19h-2zM1012 459h3v19h-3zM1015 619h3v19h-3zM1020 599h2v19h-2zM1024 499h2v19h-2zM1024 559h2v19h-2zM1024 619h2v19h-2zM1026 479h2v19h-2zM1026 499h2v19h-2zM1028 519h3v19h-3zM1028 619h3v19h-3zM1035 579h2v19h-2zM1041 559h2v19h-2zM1050 559h3v19h-3zM1053 559h4v19h-4zM1057 499h4v19h-4zM1057 539h4v19h-4zM1061 559h2v19h-2zM1061 639h2v11h-2zM1067 599h2v19h-2zM1069 559h2v19h-2zM1075 539h4v19h-4zM1079 499h2v19h-2zM1081 499h2v19h-2zM1081 539h2v19h-2zM1081 579h2v19h-2zM1083 639h2v11h-2zM1085 519h3v19h-3zM1088 499h2v19h-2zM1090 499h4v19h-4zM1090 519h4v19h-4zM1090 559h4v19h-4zM1090 619h4v19h-4zM1094 619h2v19h-2zM1100 539h2v19h-2zM1100 619h2v19h-2zM1102 579h2v19h-2zM1102 619h2v19h-2zM1104 619h2v19h-2zM1113 559h2v19h-2zM1113 579h2v19h-2zM1123 539h2v19h-2zM1131 519h2v19h-2zM1135 579h2v19h-2zM1135 619h2v19h-2zM1137 599h2v19h-2zM1139 539h2v19h-2zM1141 539h4v19h-4zM1153 599h2v19h-2zM1159 639h2v11h-2zM1161 559h3v19h-3zM1164 559h2v19h-2zM1169 519h2v19h-2zM1171 639h4v11h-4zM1179 619h2v19h-2zM1183 499h3v19h-3zM1183 579h3v19h-3zM1186 539h2v19h-2zM1190 559h2v19h-2zM1192 539h4v19h-4zM1192 639h4v11h-4zM1198 579h2v19h-2zM1200 419h2v19h-2zM1200 479h2v19h-2zM1200 519h2v19h-2zM1200 619h2v19h-2zM1202 539h2v19h-2zM1202 559h2v19h-2zM1211 419h2v19h-2zM1211 619h2v19h-2zM1213 399h2v19h-2zM1213 579h2v19h-2zM1213 639h2v11h-2zM1215 599h2v19h-2zM1224 479h3v19h-3zM1227 479h2v19h-2zM1229 459h2v19h-2zM1229 559h2v19h-2zM1233 439h2v19h-2zM1235 419h2v19h-2zM1235 459h2v19h-2zM1235 499h2v19h-2zM1237 479h2v19h-2zM1237 559h2v19h-2zM1239 459h4v19h-4zM1239 519h4v19h-4zM1243 539h2v19h-2zM1245 499h2v19h-2zM1250 479h2v19h-2zM1252 519h2v19h-2zM1254 359h4v19h-4zM1258 539h4v19h-4zM1262 479h2v19h-2zM1262 599h2v19h-2zM1262 639h2v11h-2zM1264 359h2v19h-2zM1266 459h2v19h-2zM1268 579h2v19h-2zM1268 619h2v19h-2zM1270 399h3v19h-3zM1270 539h3v19h-3zM1273 319h3v19h-3zM1273 399h3v19h-3zM1276 279h2v19h-2zM1276 299h2v19h-2zM1276 379h2v19h-2zM1276 559h2v19h-2zM1278 379h2v19h-2zM1278 459h2v19h-2zM1280 299h2v19h-2zM1280 359h2v19h-2zM1282 459h2v19h-2zM1282 599h2v19h-2zM1286 279h2v19h-2zM1288 339h2v19h-2zM1288 359h2v19h-2zM1288 379h2v19h-2zM1288 439h2v19h-2zM1290 279h2v19h-2zM1290 419h2v19h-2zM1290 499h2v19h-2zM1290 599h2v19h-2zM1292 379h2v19h-2zM1292 559h2v19h-2zM1296 199h4v19h-4zM1296 519h4v19h-4zM1300 299h2v19h-2zM1300 419h2v19h-2zM1300 499h2v19h-2zM1300 539h2v19h-2zM1302 319h2v19h-2zM1302 379h2v19h-2zM1302 559h2v19h-2zM1304 259h4v19h-4zM1304 319h4v19h-4zM1304 519h4v19h-4zM1308 339h3v19h-3zM1308 379h3v19h-3zM1308 459h3v19h-3zM1308 499h3v19h-3zM1308 599h3v19h-3zM1308 619h3v19h-3zM1311 219h3v19h-3zM1311 259h3v19h-3zM1311 319h3v19h-3zM1311 339h3v19h-3zM1311 499h3v19h-3zM1311 579h3v19h-3zM1314 279h4v19h-4zM1318 179h2v19h-2zM1318 219h2v19h-2zM1318 359h2v19h-2zM1318 619h2v19h-2zM1320 139h2v19h-2zM1320 479h2v19h-2zM1322 299h4v19h-4zM1322 339h4v19h-4zM1322 499h4v19h-4zM1326 139h2v19h-2zM1326 219h2v19h-2zM1326 419h2v19h-2zM1326 559h2v19h-2zM1326 599h2v19h-2zM1328 119h2v19h-2zM1328 139h2v19h-2zM1328 239h2v19h-2zM1328 259h2v19h-2zM1328 319h2v19h-2zM1328 359h2v19h-2zM1328 539h2v19h-2zM1328 559h2v19h-2zM1328 579h2v19h-2zM1330 139h2v19h-2zM1330 259h2v19h-2zM1330 359h2v19h-2zM1330 579h2v19h-2zM1330 599h2v19h-2zM1330 619h2v19h-2zM1332 239h4v19h-4zM1332 259h4v19h-4zM1332 379h4v19h-4zM1332 559h4v19h-4zM1332 579h4v19h-4zM1332 639h4v11h-4zM1336 299h2v19h-2zM1336 339h2v19h-2zM1336 499h2v19h-2zM1336 619h2v19h-2zM1338 239h2v19h-2zM1338 259h2v19h-2zM1338 359h2v19h-2zM1338 439h2v19h-2zM1338 539h2v19h-2zM1340 99h2v19h-2zM1340 139h2v19h-2zM1340 239h2v19h-2zM1340 259h2v19h-2zM1340 559h2v19h-2zM1340 579h2v19h-2zM1340 599h2v19h-2zM1342 119h4v19h-4zM1342 359h4v19h-4zM1342 539h4v19h-4zM1346 119h2v19h-2zM1346 319h2v19h-2zM1346 359h2v19h-2zM1348 219h2v19h-2zM1348 559h2v19h-2zM1348 599h2v19h-2zM1348 639h2v11h-2zM1350 319h2v19h-2zM1350 579h2v19h-2zM1352 199h2v19h-2zM1352 339h2v19h-2zM1352 539h2v19h-2zM1352 599h2v19h-2zM1354 179h2v19h-2zM1354 259h2v19h-2zM1354 279h2v19h-2zM1354 319h2v19h-2zM1354 379h2v19h-2zM1354 579h2v19h-2zM1356 279h3v19h-3zM1356 579h3v19h-3zM1356 619h3v19h-3zM1359 119h3v19h-3zM1359 179h3v19h-3zM1359 219h3v19h-3zM1359 359h3v19h-3zM1359 379h3v19h-3zM1359 419h3v19h-3zM1359 559h3v19h-3zM1359 619h3v19h-3zM1362 259h2v19h-2zM1362 319h2v19h-2zM1362 339h2v19h-2zM1362 459h2v19h-2zM1362 559h2v19h-2zM1362 579h2v19h-2zM1364 139h2v19h-2zM1364 159h2v19h-2zM1364 259h2v19h-2zM1364 359h2v19h-2zM1364 419h2v19h-2zM1364 619h2v19h-2zM1364 639h2v11h-2zM1366 139h2v19h-2zM1366 239h2v19h-2zM1366 359h2v19h-2zM1366 419h2v19h-2zM1366 639h2v11h-2zM1368 159h3v19h-3zM1368 279h3v19h-3zM1368 419h3v19h-3zM1368 559h3v19h-3zM1371 159h2v19h-2zM1371 239h2v19h-2zM1371 299h2v19h-2zM1373 319h3v19h-3zM1373 539h3v19h-3zM1376 159h2v19h-2zM1378 259h2v19h-2zM1378 279h2v19h-2zM1378 299h2v19h-2zM1378 359h2v19h-2zM1380 99h2v19h-2zM1380 319h2v19h-2zM1380 459h2v19h-2zM1380 499h2v19h-2zM1380 639h2v11h-2zM1382 199h2v19h-2zM1382 579h2v19h-2zM1382 599h2v19h-2zM1384 499h2v19h-2zM1384 579h2v19h-2zM1386 119h2v19h-2zM1386 239h2v19h-2zM1386 539h2v19h-2zM1386 559h2v19h-2zM1388 179h2v19h-2zM1388 339h2v19h-2zM1388 359h2v19h-2zM1388 539h2v19h-2zM1388 559h2v19h-2zM1390 99h3v19h-3zM1390 179h3v19h-3zM1390 259h3v19h-3zM1390 539h3v19h-3zM1390 619h3v19h-3zM1390 639h3v11h-3zM1393 139h3v19h-3zM1393 199h3v19h-3zM1393 239h3v19h-3zM1393 279h3v19h-3zM1393 319h3v19h-3zM1393 339h3v19h-3zM1396 239h2v19h-2zM1396 339h2v19h-2zM1398 199h2v19h-2zM1398 259h2v19h-2zM1398 299h2v19h-2zM1398 339h2v19h-2zM1398 459h2v19h-2zM1398 599h2v19h-2zM1400 259h4v19h-4zM1400 299h4v19h-4zM1400 339h4v19h-4zM1400 499h4v19h-4zM1400 539h4v19h-4zM1400 579h4v19h-4zM1404 79h2v19h-2zM1404 99h2v19h-2zM1404 139h2v19h-2zM1404 279h2v19h-2zM1404 319h2v19h-2zM1404 599h2v19h-2zM1406 119h4v19h-4zM1406 259h4v19h-4zM1406 319h4v19h-4zM1410 79h3v19h-3zM1410 299h3v19h-3zM1410 639h3v11h-3zM1413 199h2v19h-2zM1413 339h2v19h-2zM1413 359h2v19h-2zM1413 419h2v19h-2zM1415 99h2v19h-2zM1415 219h2v19h-2zM1415 239h2v19h-2zM1415 259h2v19h-2zM1415 539h2v19h-2zM1417 139h3v19h-3zM1417 179h3v19h-3zM1417 359h3v19h-3zM1417 379h3v19h-3zM1417 559h3v19h-3zM1420 219h2v19h-2zM1420 299h2v19h-2zM1420 319h2v19h-2zM1420 339h2v19h-2zM1420 379h2v19h-2zM1420 459h2v19h-2zM1420 539h2v19h-2zM1420 599h2v19h-2zM1420 639h2v11h-2zM1422 159h4v19h-4zM1422 199h4v19h-4zM1422 299h4v19h-4zM1422 339h4v19h-4zM1422 499h4v19h-4zM1426 99h4v19h-4zM1426 139h4v19h-4zM1426 199h4v19h-4zM1426 259h4v19h-4zM1426 419h4v19h-4zM1426 479h4v19h-4zM1426 619h4v19h-4zM1430 219h2v19h-2zM1430 539h2v19h-2zM1430 579h2v19h-2zM1430 639h2v11h-2zM1432 119h2v19h-2zM1432 199h2v19h-2zM1432 239h2v19h-2zM1432 319h2v19h-2zM1432 379h2v19h-2zM1432 539h2v19h-2zM1434 79h2v19h-2zM1434 99h2v19h-2zM1434 119h2v19h-2zM1434 199h2v19h-2zM1436 159h2v19h-2zM1436 239h2v19h-2zM1436 259h2v19h-2zM1436 299h2v19h-2zM1436 419h2v19h-2zM1436 579h2v19h-2zM1438 239h2v19h-2zM1438 259h2v19h-2zM1438 299h2v19h-2zM1438 319h2v19h-2zM1438 499h2v19h-2zM1438 599h2v19h-2zM1440 99h3v19h-3zM1440 239h3v19h-3zM1440 439h3v19h-3zM1440 539h3v19h-3zM1443 139h2v19h-2zM1443 299h2v19h-2zM1443 319h2v19h-2zM1443 379h2v19h-2zM1443 419h2v19h-2zM1445 99h4v19h-4zM1445 199h4v19h-4zM1445 239h4v19h-4zM1445 279h4v19h-4zM1445 559h4v19h-4zM1445 639h4v11h-4zM1449 139h2v19h-2zM1449 179h2v19h-2zM1449 219h2v19h-2zM1449 579h2v19h-2zM1449 599h2v19h-2zM1451 119h2v19h-2zM1451 179h2v19h-2zM1451 219h2v19h-2zM1451 319h2v19h-2zM1451 499h2v19h-2zM1453 139h3v19h-3zM1453 159h3v19h-3zM1453 219h3v19h-3zM1453 299h3v19h-3zM1453 579h3v19h-3zM1456 159h2v19h-2zM1456 179h2v19h-2zM1456 259h2v19h-2zM1456 619h2v19h-2zM1458 99h2v19h-2zM1458 179h2v19h-2zM1458 319h2v19h-2zM1458 379h2v19h-2zM1458 539h2v19h-2zM1458 639h2v11h-2zM1460 219h2v19h-2zM1462 159h2v19h-2zM1462 359h2v19h-2zM1462 559h2v19h-2zM1462 599h2v19h-2zM1464 139h3v19h-3zM1464 159h3v19h-3zM1464 279h3v19h-3zM1464 339h3v19h-3zM1464 419h3v19h-3zM1464 539h3v19h-3zM1464 599h3v19h-3zM1467 139h2v19h-2zM1467 259h2v19h-2zM1467 299h2v19h-2zM1467 339h2v19h-2zM1467 499h2v19h-2zM1469 119h3v19h-3zM1469 239h3v19h-3zM1469 319h3v19h-3zM1469 339h3v19h-3zM1469 539h3v19h-3zM1469 579h3v19h-3zM1469 599h3v19h-3zM1472 179h2v19h-2zM1472 239h2v19h-2zM1472 299h2v19h-2zM1472 339h2v19h-2zM1472 499h2v19h-2zM1474 99h3v19h-3zM1474 119h3v19h-3zM1474 139h3v19h-3zM1474 219h3v19h-3zM1474 259h3v19h-3zM1474 339h3v19h-3zM1474 359h3v19h-3zM1474 379h3v19h-3zM1474 579h3v19h-3zM1474 599h3v19h-3zM1477 299h2v19h-2zM1477 559h2v19h-2zM1477 579h2v19h-2zM1479 179h2v19h-2zM1479 199h2v19h-2zM1479 259h2v19h-2zM1479 279h2v19h-2zM1481 559h1v19h-1z"/><path fill="#1a0000" d="M655 239h2v19h-2zM657 319h4v19h-4zM661 299h4v19h-4zM669 259h2v19h-2zM669 399h2v19h-2zM671 379h2v19h-2zM673 239h2v19h-2zM673 359h2v19h-2zM675 259h2v19h-2zM677 239h4v19h-4zM685 219h4v19h-4zM685 239h4v19h-4zM689 219h2v19h-2zM689 319h2v19h-2zM691 259h2v19h-2zM691 319h2v19h-2zM693 219h2v19h-2zM693 259h2v19h-2zM695 219h2v19h-2zM697 179h2v19h-2zM697 219h2v19h-2zM697 259h2v19h-2zM699 199h2v19h-2zM699 219h2v19h-2zM699 239h2v19h-2zM701 159h4v19h-4zM705 159h2v19h-2zM705 219h2v19h-2zM705 239h2v19h-2zM707 279h2v19h-2zM715 179h4v19h-4zM715 239h4v19h-4zM721 119h2v19h-2zM723 119h4v19h-4zM727 119h2v19h-2zM727 259h2v19h-2zM729 179h2v19h-2zM731 159h4v19h-4zM731 219h4v19h-4zM735 119h2v19h-2zM735 239h2v19h-2zM739 119h3v19h-3zM739 159h3v19h-3zM739 219h3v19h-3zM742 119h2v19h-2zM744 119h2v19h-2zM744 159h2v19h-2zM746 119h2v19h-2zM746 139h2v19h-2zM746 199h2v19h-2zM746 259h2v19h-2zM748 119h2v19h-2zM748 239h2v19h-2zM748 319h2v19h-2zM750 119h2v19h-2zM752 119h2v19h-2zM752 219h2v19h-2zM752 259h2v19h-2zM754 119h2v19h-2zM754 159h2v19h-2zM754 219h2v19h-2zM756 119h2v19h-2zM758 119h2v19h-2zM758 179h2v19h-2zM758 219h2v19h-2zM760 119h2v19h-2zM760 239h2v19h-2zM762 119h3v19h-3zM765 139h4v19h-4zM765 259h4v19h-4zM769 119h4v19h-4zM769 139h4v19h-4zM769 379h4v19h-4zM773 119h2v19h-2zM773 159h2v19h-2zM775 119h2v19h-2zM777 119h2v19h-2zM777 219h2v19h-2zM777 259h2v19h-2zM777 419h2v19h-2zM779 139h2v19h-2zM779 199h2v19h-2zM781 119h2v19h-2zM781 199h2v19h-2zM783 119h2v19h-2zM783 159h2v19h-2zM783 179h2v19h-2zM783 319h2v19h-2zM785 119h2v19h-2zM785 159h2v19h-2zM785 259h2v19h-2zM785 339h2v19h-2zM785 359h2v19h-2zM787 119h2v19h-2zM787 219h2v19h-2zM787 239h2v19h-2zM789 119h4v19h-4zM793 119h2v19h-2zM793 179h2v19h-2zM795 119h2v19h-2zM795 159h2v19h-2zM795 179h2v19h-2zM795 219h2v19h-2zM795 239h2v19h-2zM795 279h2v19h-2zM803 119h2v19h-2zM803 159h2v19h-2zM803 219h2v19h-2zM803 239h2v19h-2zM805 179h3v19h-3zM810 119h4v19h-4zM810 219h4v19h-4zM814 239h2v19h-2zM816 119h3v19h-3zM816 159h3v19h-3zM816 219h3v19h-3zM819 119h2v19h-2zM819 179h2v19h-2zM819 239h2v19h-2zM823 119h2v19h-2zM823 179h2v19h-2zM825 119h3v19h-3zM828 119h3v19h-3zM828 219h3v19h-3zM828 239h3v19h-3zM828 259h3v19h-3zM831 119h4v19h-4zM831 179h4v19h-4zM831 259h4v19h-4zM837 119h2v19h-2zM837 219h2v19h-2zM839 119h2v19h-2zM839 179h2v19h-2zM839 219h2v19h-2zM839 239h2v19h-2zM841 179h4v19h-4zM841 279h4v19h-4zM845 119h4v19h-4zM845 199h4v19h-4zM845 239h4v19h-4zM845 259h4v19h-4zM849 199h2v19h-2zM849 279h2v19h-2zM851 119h4v19h-4zM851 179h4v19h-4zM851 199h4v19h-4zM855 119h2v19h-2zM855 179h2v19h-2zM855 199h2v19h-2zM857 179h3v19h-3zM857 359h3v19h-3zM860 119h3v19h-3zM860 199h3v19h-3zM860 259h3v19h-3zM863 119h2v19h-2zM863 259h2v19h-2zM863 419h2v19h-2zM865 119h2v19h-2zM865 179h2v19h-2zM865 199h2v19h-2zM865 259h2v19h-2zM865 419h2v19h-2zM867 139h2v19h-2zM867 179h2v19h-2zM867 199h2v19h-2zM869 119h3v19h-3zM869 259h3v19h-3zM869 459h3v19h-3zM872 119h2v19h-2zM872 179h2v19h-2zM872 199h2v19h-2zM872 259h2v19h-2zM872 379h2v19h-2zM874 179h2v19h-2zM874 199h2v19h-2zM876 119h2v19h-2zM876 179h2v19h-2zM876 199h2v19h-2zM876 259h2v19h-2zM878 119h2v19h-2zM878 179h2v19h-2zM880 199h2v19h-2zM880 219h2v19h-2zM880 279h2v19h-2zM880 339h2v19h-2zM880 459h2v19h-2zM882 119h2v19h-2zM882 199h2v19h-2zM882 299h2v19h-2zM882 359h2v19h-2zM884 119h2v19h-2zM884 179h2v19h-2zM884 199h2v19h-2zM884 259h2v19h-2zM884 359h2v19h-2zM886 179h2v19h-2zM888 119h3v19h-3zM888 179h3v19h-3zM888 199h3v19h-3zM888 399h3v19h-3zM891 179h2v19h-2zM891 199h2v19h-2zM891 399h2v19h-2zM893 119h2v19h-2zM893 259h2v19h-2zM893 499h2v19h-2zM897 119h3v19h-3zM897 179h3v19h-3zM897 199h3v19h-3zM897 419h3v19h-3zM900 119h2v19h-2zM900 179h2v19h-2zM900 199h2v19h-2zM900 399h2v19h-2zM902 179h2v19h-2zM902 199h2v19h-2zM904 119h2v19h-2zM904 179h2v19h-2zM904 199h2v19h-2zM906 179h3v19h-3zM906 199h3v19h-3zM906 399h3v19h-3zM909 119h2v19h-2zM909 179h2v19h-2zM909 199h2v19h-2zM911 119h4v19h-4zM911 179h4v19h-4zM911 199h4v19h-4zM915 119h4v19h-4zM915 179h4v19h-4zM915 379h4v19h-4zM919 199h2v19h-2zM921 119h2v19h-2zM921 199h2v19h-2zM921 499h2v19h-2zM923 119h2v19h-2zM923 179h2v19h-2zM923 199h2v19h-2zM925 359h3v19h-3zM925 419h3v19h-3zM928 119h2v19h-2zM928 179h2v19h-2zM928 199h2v19h-2zM928 419h2v19h-2zM928 439h2v19h-2zM930 119h2v19h-2zM930 179h2v19h-2zM930 199h2v19h-2zM930 359h2v19h-2zM932 179h2v19h-2zM932 199h2v19h-2zM934 119h2v19h-2zM934 179h2v19h-2zM934 499h2v19h-2zM936 119h2v19h-2zM936 179h2v19h-2zM936 219h2v19h-2zM936 479h2v19h-2zM938 119h2v19h-2zM938 179h2v19h-2zM938 199h2v19h-2zM938 219h2v19h-2zM938 519h2v19h-2zM940 199h2v19h-2zM942 119h2v19h-2zM942 179h2v19h-2zM942 199h2v19h-2zM944 119h2v19h-2zM944 199h2v19h-2zM944 279h2v19h-2zM946 179h3v19h-3zM946 199h3v19h-3zM949 179h3v19h-3zM949 199h3v19h-3zM952 179h2v19h-2zM952 199h2v19h-2zM952 219h2v19h-2zM954 119h2v19h-2zM954 179h2v19h-2zM954 199h2v19h-2zM956 119h2v19h-2zM956 199h2v19h-2zM958 119h2v19h-2zM958 199h2v19h-2zM960 119h3v19h-3zM960 199h3v19h-3zM960 439h3v19h-3zM963 119h2v19h-2zM963 179h2v19h-2zM963 199h2v19h-2zM965 119h2v19h-2zM965 199h2v19h-2zM967 119h3v19h-3zM970 119h3v19h-3zM970 199h3v19h-3zM973 119h2v19h-2zM973 199h2v19h-2zM973 439h2v19h-2zM975 119h2v19h-2zM975 199h2v19h-2zM977 119h2v19h-2zM977 199h2v19h-2zM977 279h2v19h-2zM979 119h4v19h-4zM979 319h4v19h-4zM983 119h2v19h-2zM983 199h2v19h-2zM983 279h2v19h-2zM983 299h2v19h-2zM983 419h2v19h-2zM985 119h2v19h-2zM985 179h2v19h-2zM985 199h2v19h-2zM985 279h2v19h-2zM987 119h2v19h-2zM989 119h4v19h-4zM989 179h4v19h-4zM989 199h4v19h-4zM989 439h4v19h-4zM993 119h2v19h-2zM993 199h2v19h-2zM993 419h2v19h-2zM995 119h2v19h-2zM995 179h2v19h-2zM995 199h2v19h-2zM995 279h2v19h-2zM995 299h2v19h-2zM997 119h2v19h-2zM997 179h2v19h-2zM997 199h2v19h-2zM997 279h2v19h-2zM997 339h2v19h-2zM997 359h2v19h-2zM999 119h2v19h-2zM999 179h2v19h-2zM999 199h2v19h-2zM1001 119h2v19h-2zM1003 119h2v19h-2zM1003 179h2v19h-2zM1003 199h2v19h-2zM1003 279h2v19h-2zM1005 119h3v19h-3zM1005 179h3v19h-3zM1005 199h3v19h-3zM1008 119h2v19h-2zM1008 179h2v19h-2zM1008 199h2v19h-2zM1008 279h2v19h-2zM1010 119h2v19h-2zM1010 199h2v19h-2zM1010 279h2v19h-2zM1010 359h2v19h-2zM1010 379h2v19h-2zM1012 199h3v19h-3zM1012 279h3v19h-3zM1012 359h3v19h-3zM1012 419h3v19h-3zM1015 279h3v19h-3zM1015 319h3v19h-3zM1018 119h2v19h-2zM1018 179h2v19h-2zM1018 199h2v19h-2zM1018 219h2v19h-2zM1018 279h2v19h-2zM1018 359h2v19h-2zM1018 439h2v19h-2zM1020 119h2v19h-2zM1020 139h2v19h-2zM1020 259h2v19h-2zM1020 279h2v19h-2zM1022 119h2v19h-2zM1022 179h2v19h-2zM1022 199h2v19h-2zM1022 239h2v19h-2zM1022 279h2v19h-2zM1022 299h2v19h-2zM1024 119h2v19h-2zM1024 179h2v19h-2zM1024 199h2v19h-2zM1024 259h2v19h-2zM1026 119h2v19h-2zM1026 179h2v19h-2zM1026 199h2v19h-2zM1026 279h2v19h-2zM1026 399h2v19h-2zM1028 119h3v19h-3zM1028 179h3v19h-3zM1028 199h3v19h-3zM1028 279h3v19h-3zM1031 179h4v19h-4zM1031 199h4v19h-4zM1035 199h2v19h-2zM1035 279h2v19h-2zM1035 339h2v19h-2zM1037 119h2v19h-2zM1037 179h2v19h-2zM1037 199h2v19h-2zM1037 279h2v19h-2zM1037 299h2v19h-2zM1037 359h2v19h-2zM1039 119h2v19h-2zM1039 179h2v19h-2zM1039 279h2v19h-2zM1039 379h2v19h-2zM1041 119h2v19h-2zM1041 179h2v19h-2zM1041 199h2v19h-2zM1043 199h3v19h-3zM1043 279h3v19h-3zM1046 119h4v19h-4zM1046 199h4v19h-4zM1046 279h4v19h-4zM1050 199h3v19h-3zM1050 299h3v19h-3zM1053 119h4v19h-4zM1053 179h4v19h-4zM1053 199h4v19h-4zM1057 179h4v19h-4zM1057 199h4v19h-4zM1057 259h4v19h-4zM1061 199h2v19h-2zM1061 299h2v19h-2zM1061 379h2v19h-2zM1063 119h2v19h-2zM1063 179h2v19h-2zM1063 199h2v19h-2zM1063 259h2v19h-2zM1065 179h2v19h-2zM1065 199h2v19h-2zM1067 179h2v19h-2zM1067 199h2v19h-2zM1069 119h2v19h-2zM1069 459h2v19h-2zM1071 119h4v19h-4zM1071 259h4v19h-4zM1071 319h4v19h-4zM1075 119h4v19h-4zM1075 179h4v19h-4zM1075 199h4v19h-4zM1075 219h4v19h-4zM1075 259h4v19h-4zM1075 299h4v19h-4zM1079 119h2v19h-2zM1079 199h2v19h-2zM1079 259h2v19h-2zM1079 439h2v19h-2zM1081 199h2v19h-2zM1081 259h2v19h-2zM1083 119h2v19h-2zM1083 179h2v19h-2zM1083 259h2v19h-2zM1085 119h3v19h-3zM1088 179h2v19h-2zM1088 199h2v19h-2zM1088 259h2v19h-2zM1088 399h2v19h-2zM1090 119h4v19h-4zM1090 179h4v19h-4zM1090 199h4v19h-4zM1090 259h4v19h-4zM1094 119h2v19h-2zM1094 259h2v19h-2zM1096 119h2v19h-2zM1096 179h2v19h-2zM1096 199h2v19h-2zM1096 219h2v19h-2zM1096 499h2v19h-2zM1098 179h2v19h-2zM1098 199h2v19h-2zM1098 259h2v19h-2zM1098 399h2v19h-2zM1100 119h2v19h-2zM1100 259h2v19h-2zM1102 119h2v19h-2zM1102 199h2v19h-2zM1102 299h2v19h-2zM1104 119h2v19h-2zM1104 179h2v19h-2zM1104 199h2v19h-2zM1104 259h2v19h-2zM1104 379h2v19h-2zM1106 119h2v19h-2zM1106 179h2v19h-2zM1106 199h2v19h-2zM1106 239h2v19h-2zM1106 339h2v19h-2zM1108 119h2v19h-2zM1108 179h2v19h-2zM1108 259h2v19h-2zM1108 459h2v19h-2zM1110 119h3v19h-3zM1110 199h3v19h-3zM1110 259h3v19h-3zM1110 299h3v19h-3zM1113 179h2v19h-2zM1113 199h2v19h-2zM1113 259h2v19h-2zM1113 319h2v19h-2zM1115 259h2v19h-2zM1115 439h2v19h-2zM1117 119h3v19h-3zM1117 259h3v19h-3zM1117 459h3v19h-3zM1120 119h3v19h-3zM1120 179h3v19h-3zM1120 199h3v19h-3zM1120 259h3v19h-3zM1123 179h2v19h-2zM1123 199h2v19h-2zM1123 259h2v19h-2zM1125 119h2v19h-2zM1125 179h2v19h-2zM1125 219h2v19h-2zM1125 259h2v19h-2zM1127 119h2v19h-2zM1127 199h2v19h-2zM1127 459h2v19h-2zM1129 119h2v19h-2zM1129 179h2v19h-2zM1129 199h2v19h-2zM1129 259h2v19h-2zM1131 119h2v19h-2zM1131 179h2v19h-2zM1131 199h2v19h-2zM1131 259h2v19h-2zM1133 119h2v19h-2zM1133 179h2v19h-2zM1133 199h2v19h-2zM1133 379h2v19h-2zM1133 519h2v19h-2zM1135 119h2v19h-2zM1135 199h2v19h-2zM1135 259h2v19h-2zM1137 119h2v19h-2zM1137 179h2v19h-2zM1137 199h2v19h-2zM1137 259h2v19h-2zM1137 339h2v19h-2zM1137 539h2v19h-2zM1139 259h2v19h-2zM1139 419h2v19h-2zM1141 179h4v19h-4zM1141 199h4v19h-4zM1141 519h4v19h-4zM1145 119h2v19h-2zM1145 179h2v19h-2zM1145 199h2v19h-2zM1145 259h2v19h-2zM1147 199h4v19h-4zM1147 219h4v19h-4zM1147 339h4v19h-4zM1151 199h2v19h-2zM1151 259h2v19h-2zM1151 299h2v19h-2zM1151 439h2v19h-2zM1153 119h2v19h-2zM1153 179h2v19h-2zM1153 259h2v19h-2zM1155 119h2v19h-2zM1155 179h2v19h-2zM1155 259h2v19h-2zM1155 459h2v19h-2zM1157 119h2v19h-2zM1157 199h2v19h-2zM1157 299h2v19h-2zM1157 379h2v19h-2zM1159 119h2v19h-2zM1159 199h2v19h-2zM1159 259h2v19h-2zM1161 119h3v19h-3zM1161 199h3v19h-3zM1161 259h3v19h-3zM1164 179h2v19h-2zM1164 239h2v19h-2zM1164 259h2v19h-2zM1166 119h3v19h-3zM1166 179h3v19h-3zM1166 259h3v19h-3zM1166 299h3v19h-3zM1169 179h2v19h-2zM1169 199h2v19h-2zM1169 299h2v19h-2zM1169 359h2v19h-2zM1171 119h4v19h-4zM1171 179h4v19h-4zM1171 219h4v19h-4zM1171 439h4v19h-4zM1171 499h4v19h-4zM1175 179h2v19h-2zM1175 259h2v19h-2zM1177 119h2v19h-2zM1177 179h2v19h-2zM1177 199h2v19h-2zM1177 259h2v19h-2zM1177 399h2v19h-2zM1179 119h2v19h-2zM1179 199h2v19h-2zM1179 479h2v19h-2zM1181 119h2v19h-2zM1181 199h2v19h-2zM1181 259h2v19h-2zM1181 299h2v19h-2zM1181 379h2v19h-2zM1181 459h2v19h-2zM1183 119h3v19h-3zM1183 179h3v19h-3zM1183 199h3v19h-3zM1183 259h3v19h-3zM1186 179h2v19h-2zM1186 199h2v19h-2zM1186 259h2v19h-2zM1188 119h2v19h-2zM1188 179h2v19h-2zM1188 199h2v19h-2zM1188 299h2v19h-2zM1190 179h2v19h-2zM1190 199h2v19h-2zM1190 259h2v19h-2zM1192 119h4v19h-4zM1192 179h4v19h-4zM1192 339h4v19h-4zM1196 119h2v19h-2zM1196 179h2v19h-2zM1196 199h2v19h-2zM1198 199h2v19h-2zM1200 119h2v19h-2zM1200 179h2v19h-2zM1200 199h2v19h-2zM1202 119h2v19h-2zM1204 119h3v19h-3zM1204 199h3v19h-3zM1207 119h4v19h-4zM1207 199h4v19h-4zM1207 239h4v19h-4zM1207 259h4v19h-4zM1207 339h4v19h-4zM1211 119h2v19h-2zM1211 199h2v19h-2zM1213 119h2v19h-2zM1213 179h2v19h-2zM1213 239h2v19h-2zM1213 379h2v19h-2zM1215 119h2v19h-2zM1215 179h2v19h-2zM1217 119h3v19h-3zM1217 279h3v19h-3zM1220 199h2v19h-2zM1220 379h2v19h-2zM1222 119h2v19h-2zM1222 199h2v19h-2zM1224 119h3v19h-3zM1227 199h2v19h-2zM1229 119h2v19h-2zM1229 239h2v19h-2zM1229 259h2v19h-2zM1231 119h2v19h-2zM1233 119h2v19h-2zM1233 279h2v19h-2zM1233 299h2v19h-2zM1233 359h2v19h-2zM1235 119h2v19h-2zM1235 239h2v19h-2zM1235 359h2v19h-2zM1237 119h2v19h-2zM1237 239h2v19h-2zM1237 279h2v19h-2zM1239 119h4v19h-4zM1243 119h2v19h-2zM1243 299h2v19h-2zM1245 119h2v19h-2zM1245 279h2v19h-2zM1247 179h3v19h-3zM1247 219h3v19h-3zM1250 119h2v19h-2zM1254 179h4v19h-4zM1258 159h4v19h-4zM1258 179h4v19h-4zM1262 159h2v19h-2zM1262 219h2v19h-2zM1264 119h2v19h-2zM1266 119h2v19h-2zM1266 159h2v19h-2zM1266 179h2v19h-2zM1268 119h2v19h-2zM1268 159h2v19h-2zM1268 179h2v19h-2zM1268 199h2v19h-2zM1270 99h3v19h-3zM1270 119h3v19h-3zM1270 159h3v19h-3zM1270 179h3v19h-3zM1270 199h3v19h-3zM1273 119h3v19h-3zM1273 159h3v19h-3zM1276 119h2v19h-2zM1276 159h2v19h-2zM1276 179h2v19h-2zM1278 119h2v19h-2zM1278 159h2v19h-2zM1278 239h2v19h-2zM1280 119h2v19h-2zM1280 139h2v19h-2zM1280 199h2v19h-2zM1282 139h2v19h-2zM1282 159h2v19h-2zM1282 179h2v19h-2zM1284 119h2v19h-2zM1284 139h2v19h-2zM1284 159h2v19h-2zM1284 179h2v19h-2zM1286 119h2v19h-2zM1286 139h2v19h-2zM1286 159h2v19h-2zM1288 119h2v19h-2zM1288 159h2v19h-2zM1288 179h2v19h-2zM1290 119h2v19h-2zM1290 139h2v19h-2zM1290 159h2v19h-2zM1292 139h2v19h-2zM1292 159h2v19h-2zM1292 179h2v19h-2zM1294 119h2v19h-2zM1294 139h2v19h-2zM1294 159h2v19h-2zM1314 99h4v19h-4zM1320 99h2v19h-2zM1322 99h4v19h-4zM1346 79h2v19h-2zM1467 99h2v19h-2z"/><path fill="#30ccff" d="M657 539h4v19h-4zM685 539h4v19h-4zM713 319h2v19h-2zM781 599h2v19h-2zM837 459h2v19h-2zM865 639h2v11h-2zM872 579h2v19h-2zM893 579h2v19h-2zM902 579h2v19h-2zM949 639h3v11h-3zM1046 639h4v11h-4zM1125 639h2v11h-2zM1239 479h4v19h-4zM1239 599h4v19h-4zM1262 379h2v19h-2zM1276 399h2v19h-2zM1282 259h2v19h-2zM1322 399h4v19h-4zM1332 319h4v19h-4zM1356 459h3v19h-3zM1376 639h2v11h-2zM1384 279h2v19h-2zM1420 399h2v19h-2zM1440 419h3v19h-3z"/><path fill="#f00000" d="M661 399h4v19h-4zM665 319h2v19h-2zM685 299h4v19h-4zM709 139h2v19h-2zM711 199h2v19h-2zM744 139h2v19h-2zM773 299h2v19h-2zM789 319h4v19h-4zM821 319h2v19h-2zM823 199h2v19h-2zM825 199h3v19h-3zM828 159h3v19h-3zM837 159h2v19h-2zM839 159h2v19h-2zM841 159h4v19h-4zM849 159h2v19h-2zM857 159h3v19h-3zM863 159h2v19h-2zM863 399h2v19h-2zM869 159h3v19h-3zM872 299h2v19h-2zM874 159h2v19h-2zM878 419h2v19h-2zM880 159h2v19h-2zM880 239h2v19h-2zM882 139h2v19h-2zM882 219h2v19h-2zM884 159h2v19h-2zM884 299h2v19h-2zM888 299h3v19h-3zM891 159h2v19h-2zM895 299h2v19h-2zM897 299h3v19h-3zM900 259h2v19h-2zM904 299h2v19h-2zM909 159h2v19h-2zM909 259h2v19h-2zM909 379h2v19h-2zM909 419h2v19h-2zM915 139h4v19h-4zM915 159h4v19h-4zM915 259h4v19h-4zM919 299h2v19h-2zM923 159h2v19h-2zM923 299h2v19h-2zM925 239h3v19h-3zM925 259h3v19h-3zM928 259h2v19h-2zM930 259h2v19h-2zM932 259h2v19h-2zM934 299h2v19h-2zM934 379h2v19h-2zM936 159h2v19h-2zM936 299h2v19h-2zM938 159h2v19h-2zM940 259h2v19h-2zM940 279h2v19h-2zM940 299h2v19h-2zM942 299h2v19h-2zM942 319h2v19h-2zM944 159h2v19h-2zM944 259h2v19h-2zM944 299h2v19h-2zM949 139h3v19h-3zM949 299h3v19h-3zM952 259h2v19h-2zM954 159h2v19h-2zM956 159h2v19h-2zM956 319h2v19h-2zM958 159h2v19h-2zM963 159h2v19h-2zM963 259h2v19h-2zM967 159h3v19h-3zM970 259h3v19h-3zM973 159h2v19h-2zM973 259h2v19h-2zM975 159h2v19h-2zM975 259h2v19h-2zM977 159h2v19h-2zM977 259h2v19h-2zM979 159h4v19h-4zM983 259h2v19h-2zM987 259h2v19h-2zM995 259h2v19h-2zM997 239h2v19h-2zM997 259h2v19h-2zM999 259h2v19h-2zM1001 159h2v19h-2zM1001 259h2v19h-2zM1005 159h3v19h-3zM1008 159h2v19h-2zM1010 159h2v19h-2zM1010 259h2v19h-2zM1012 159h3v19h-3zM1015 159h3v19h-3zM1015 259h3v19h-3zM1022 439h2v19h-2zM1031 159h4v19h-4zM1035 319h2v19h-2zM1041 159h2v19h-2zM1041 339h2v19h-2zM1046 159h4v19h-4zM1046 239h4v19h-4zM1050 159h3v19h-3zM1057 159h4v19h-4zM1057 459h4v19h-4zM1065 159h2v19h-2zM1065 239h2v19h-2zM1067 159h2v19h-2zM1069 159h2v19h-2zM1071 159h4v19h-4zM1071 279h4v19h-4zM1075 279h4v19h-4zM1079 159h2v19h-2zM1083 159h2v19h-2zM1083 239h2v19h-2zM1083 279h2v19h-2zM1085 279h3v19h-3zM1094 159h2v19h-2zM1096 279h2v19h-2zM1098 279h2v19h-2zM1100 159h2v19h-2zM1102 159h2v19h-2zM1102 279h2v19h-2zM1102 439h2v19h-2zM1104 499h2v19h-2zM1110 159h3v19h-3zM1110 239h3v19h-3zM1113 159h2v19h-2zM1113 279h2v19h-2zM1113 399h2v19h-2zM1115 159h2v19h-2zM1115 239h2v19h-2zM1115 279h2v19h-2zM1117 159h3v19h-3zM1123 279h2v19h-2zM1125 159h2v19h-2zM1127 159h2v19h-2zM1131 159h2v19h-2zM1133 159h2v19h-2zM1135 279h2v19h-2zM1137 159h2v19h-2zM1137 279h2v19h-2zM1139 159h2v19h-2zM1139 279h2v19h-2zM1155 159h2v19h-2zM1155 279h2v19h-2zM1161 159h3v19h-3zM1161 279h3v19h-3zM1161 339h3v19h-3zM1164 279h2v19h-2zM1171 159h4v19h-4zM1177 159h2v19h-2zM1179 159h2v19h-2zM1196 419h2v19h-2zM1198 139h2v19h-2zM1200 159h2v19h-2zM1204 159h3v19h-3zM1207 159h4v19h-4zM1213 159h2v19h-2zM1215 159h2v19h-2zM1224 139h3v19h-3zM1224 159h3v19h-3zM1227 179h2v19h-2zM1229 159h2v19h-2zM1233 179h2v19h-2zM1239 139h4v19h-4zM1239 159h4v19h-4zM1239 199h4v19h-4zM1243 159h2v19h-2zM1245 159h2v19h-2zM1252 159h2v19h-2zM1371 79h2v19h-2zM1386 68h2v10h-2zM1390 68h3v10h-3z"/><path fill="#00b8f0" d="M665 459h2v19h-2zM667 559h2v19h-2zM667 599h2v19h-2zM671 499h2v19h-2zM675 519h2v19h-2zM685 499h4v19h-4zM693 559h2v19h-2zM697 419h2v19h-2zM699 399h2v19h-2zM701 359h4v19h-4zM705 399h2v19h-2zM729 519h2v19h-2zM729 579h2v19h-2zM731 439h4v19h-4zM731 459h4v19h-4zM756 399h2v19h-2zM756 559h2v19h-2zM756 619h2v19h-2zM762 379h3v19h-3zM773 539h2v19h-2zM775 559h2v19h-2zM775 579h2v19h-2zM781 439h2v19h-2zM789 419h4v19h-4zM789 559h4v19h-4zM793 439h2v19h-2zM797 359h2v19h-2zM803 579h2v19h-2zM808 379h2v19h-2zM808 519h2v19h-2zM810 419h4v19h-4zM814 559h2v19h-2zM816 459h3v19h-3zM823 399h2v19h-2zM823 419h2v19h-2zM825 439h3v19h-3zM831 539h4v19h-4zM835 539h2v19h-2zM845 519h4v19h-4zM849 619h2v19h-2zM857 479h3v19h-3zM857 619h3v19h-3zM857 639h3v11h-3zM865 599h2v19h-2zM869 499h3v19h-3zM874 579h2v19h-2zM880 599h2v19h-2zM886 579h2v19h-2zM891 519h2v19h-2zM900 519h2v19h-2zM919 599h2v19h-2zM923 619h2v19h-2zM932 579h2v19h-2zM932 639h2v11h-2zM940 619h2v19h-2zM949 539h3v19h-3zM965 519h2v19h-2zM965 579h2v19h-2zM970 499h3v19h-3zM975 519h2v19h-2zM977 519h2v19h-2zM979 499h4v19h-4zM995 519h2v19h-2zM999 539h2v19h-2zM999 559h2v19h-2zM1003 639h2v11h-2zM1026 619h2v19h-2zM1037 559h2v19h-2zM1037 639h2v11h-2zM1041 579h2v19h-2zM1046 579h4v19h-4zM1053 599h4v19h-4zM1065 579h2v19h-2zM1075 639h4v11h-4zM1079 599h2v19h-2zM1083 579h2v19h-2zM1085 599h3v19h-3zM1088 539h2v19h-2zM1110 639h3v11h-3zM1117 619h3v19h-3zM1125 599h2v19h-2zM1129 559h2v19h-2zM1145 639h2v11h-2zM1175 579h2v19h-2zM1177 639h2v11h-2zM1181 639h2v11h-2zM1188 639h2v11h-2zM1213 479h2v19h-2zM1217 579h3v19h-3zM1220 439h2v19h-2zM1224 439h3v19h-3zM1235 579h2v19h-2zM1237 499h2v19h-2zM1239 399h4v19h-4zM1247 379h3v19h-3zM1250 459h2v19h-2zM1262 419h2v19h-2zM1266 639h2v11h-2zM1268 539h2v19h-2zM1270 639h3v11h-3zM1273 439h3v19h-3zM1278 359h2v19h-2zM1280 439h2v19h-2zM1284 239h2v19h-2zM1286 439h2v19h-2zM1288 639h2v11h-2zM1290 379h2v19h-2zM1292 359h2v19h-2zM1292 419h2v19h-2zM1296 459h4v19h-4zM1296 619h4v19h-4zM1300 599h2v19h-2zM1304 139h4v19h-4zM1311 299h3v19h-3zM1326 299h2v19h-2zM1330 559h2v19h-2zM1338 219h2v19h-2zM1342 499h4v19h-4zM1346 279h2v19h-2zM1348 339h2v19h-2zM1350 419h2v19h-2zM1352 279h2v19h-2zM1354 459h2v19h-2zM1354 559h2v19h-2zM1359 279h3v19h-3zM1362 419h2v19h-2zM1364 179h2v19h-2zM1371 99h2v19h-2zM1384 399h2v19h-2zM1388 399h2v19h-2zM1390 139h3v19h-3zM1413 459h2v19h-2zM1422 139h4v19h-4zM1438 119h2v19h-2zM1449 279h2v19h-2zM1453 379h3v19h-3zM1456 219h2v19h-2zM1460 139h2v19h-2zM1460 159h2v19h-2zM1472 639h2v11h-2zM1481 379h1v19h-1z"/><path fill="#80e4ff" d="M758 419h2v19h-2zM928 599h2v19h-2zM1088 519h2v19h-2zM1456 399h2v19h-2z"/><path fill="#ff3030" d="M867 159h2v19h-2zM886 159h2v19h-2zM919 259h2v19h-2zM921 259h2v19h-2zM925 159h3v19h-3zM932 159h2v19h-2zM936 259h2v19h-2zM938 259h2v19h-2zM940 159h2v19h-2zM956 259h2v19h-2zM985 159h2v19h-2zM995 159h2v19h-2zM1018 259h2v19h-2zM1020 159h2v19h-2zM1024 159h2v19h-2zM1081 279h2v19h-2zM1096 139h2v19h-2zM1098 159h2v19h-2zM1131 279h2v19h-2zM1151 159h2v19h-2zM1157 279h2v19h-2zM1183 159h3v19h-3zM1211 159h2v19h-2z"/><path fill="#004a66" d="M1258 519h4v19h-4zM1262 519h2v19h-2zM1264 519h2v19h-2zM1266 519h2v19h-2zM1268 519h2v19h-2zM1270 519h3v19h-3zM1273 519h3v19h-3zM1276 519h2v19h-2zM1278 519h2v19h-2zM1280 519h2v19h-2zM1282 519h2v19h-2zM1286 519h2v19h-2zM1288 519h2v19h-2zM1290 519h2v19h-2zM1294 519h2v19h-2zM1300 519h2v19h-2zM1302 519h2v19h-2zM1308 519h3v19h-3zM1311 519h3v19h-3zM1314 519h4v19h-4zM1318 519h2v19h-2zM1320 519h2v19h-2zM1322 519h4v19h-4zM1326 519h2v19h-2zM1328 519h2v19h-2zM1330 519h2v19h-2zM1332 519h4v19h-4zM1336 519h2v19h-2zM1338 519h2v19h-2zM1342 519h4v19h-4zM1346 519h2v19h-2zM1348 519h2v19h-2zM1350 519h2v19h-2zM1352 519h2v19h-2zM1354 519h2v19h-2zM1356 519h3v19h-3zM1359 519h3v19h-3zM1364 519h2v19h-2zM1366 519h2v19h-2zM1368 519h3v19h-3zM1371 519h2v19h-2zM1373 519h3v19h-3zM1376 519h2v19h-2zM1380 519h2v19h-2zM1382 519h2v19h-2zM1384 519h2v19h-2zM1386 519h2v19h-2zM1388 519h2v19h-2zM1390 519h3v19h-3zM1393 519h3v19h-3zM1398 519h2v19h-2zM1400 519h4v19h-4zM1404 519h2v19h-2zM1406 519h4v19h-4zM1410 519h3v19h-3zM1415 519h2v19h-2zM1417 519h3v19h-3zM1420 519h2v19h-2zM1426 519h4v19h-4zM1430 519h2v19h-2zM1432 519h2v19h-2zM1434 519h2v19h-2zM1436 519h2v19h-2zM1438 519h2v19h-2zM1440 519h3v19h-3zM1443 519h2v19h-2zM1445 519h4v19h-4zM1449 519h2v19h-2zM1451 519h2v19h-2zM1453 519h3v19h-3zM1456 519h2v19h-2zM1458 519h2v19h-2zM1462 519h2v19h-2zM1464 519h3v19h-3zM1467 519h2v19h-2zM1469 519h3v19h-3zM1472 519h2v19h-2zM1474 519h3v19h-3zM1477 519h2v19h-2zM1479 519h2v19h-2zM1481 519h1v19h-1z"/><path fill="#20c0f8" d="M1290 399h2v19h-2zM1292 399h2v19h-2zM1294 399h2v19h-2zM1296 399h4v19h-4zM1304 399h4v19h-4zM1308 399h3v19h-3zM1311 399h3v19h-3zM1318 399h2v19h-2zM1320 399h2v19h-2zM1326 399h2v19h-2zM1328 399h2v19h-2zM1330 399h2v19h-2zM1332 399h4v19h-4zM1336 399h2v19h-2zM1338 399h2v19h-2zM1340 399h2v19h-2zM1342 399h4v19h-4zM1346 399h2v19h-2zM1348 399h2v19h-2zM1350 399h2v19h-2zM1356 399h3v19h-3zM1359 399h3v19h-3zM1362 399h2v19h-2zM1364 399h2v19h-2zM1366 399h2v19h-2zM1368 399h3v19h-3zM1371 399h2v19h-2zM1373 399h3v19h-3zM1376 399h2v19h-2zM1378 399h2v19h-2zM1380 399h2v19h-2zM1382 399h2v19h-2zM1390 399h3v19h-3zM1393 399h3v19h-3zM1396 399h2v19h-2zM1398 399h2v19h-2zM1400 399h4v19h-4zM1404 399h2v19h-2zM1406 399h4v19h-4zM1410 399h3v19h-3zM1413 399h2v19h-2zM1415 399h2v19h-2zM1417 399h3v19h-3zM1422 399h4v19h-4zM1426 399h4v19h-4zM1430 399h2v19h-2zM1432 399h2v19h-2zM1434 399h2v19h-2zM1436 399h2v19h-2zM1438 399h2v19h-2zM1440 399h3v19h-3zM1443 399h2v19h-2zM1445 399h4v19h-4zM1449 399h2v19h-2zM1453 399h3v19h-3zM1458 399h2v19h-2zM1460 399h2v19h-2zM1462 399h2v19h-2zM1464 399h3v19h-3zM1469 399h3v19h-3zM1472 399h2v19h-2zM1474 399h3v19h-3zM1477 399h2v19h-2zM1479 399h2v19h-2zM1481 399h1v19h-1z"/><path fill="#ff0000" d="M655 453h2v10h-2zM661 453h2v10h-2zM665 433h2v10h-2zM667 433h2v10h-2zM669 433h2v10h-2zM677 393h2v10h-2zM689 373h2v10h-2zM691 353h2v10h-2zM693 353h2v10h-2zM695 353h2v10h-2zM709 333h2v10h-2zM715 333h2v10h-2zM731 353h2v10h-2zM748 353h2v10h-2zM752 353h2v10h-2zM754 353h2v10h-2zM758 353h2v10h-2zM760 333h2v10h-2zM762 353h2v10h-2zM769 413h2v10h-2zM777 433h2v10h-2zM781 433h2v10h-2zM793 333h2v10h-2zM810 353h2v10h-2zM819 373h2v10h-2zM823 353h2v10h-2zM831 373h2v10h-2zM835 393h2v10h-2zM839 393h2v10h-2zM855 453h2v10h-2zM857 453h2v10h-2zM860 473h2v10h-2zM878 473h2v10h-2zM882 493h2v10h-2zM888 513h2v10h-2zM891 513h2v10h-2zM900 513h2v10h-2zM902 533h2v10h-2zM904 533h2v10h-2zM911 533h2v10h-2zM919 533h2v10h-2zM923 533h2v10h-2zM925 533h2v10h-2zM930 553h2v10h-2zM934 573h2v10h-2zM938 553h2v10h-2zM944 513h2v10h-2zM952 513h2v10h-2zM954 513h2v10h-2zM965 493h2v10h-2zM987 473h2v10h-2zM999 453h2v10h-2zM1001 473h2v10h-2zM1010 453h2v10h-2zM1012 453h2v10h-2zM1018 453h2v10h-2zM1022 453h2v10h-2zM1024 473h2v10h-2zM1026 453h2v10h-2zM1031 453h2v10h-2zM1035 473h2v10h-2zM1037 453h2v10h-2zM1053 473h2v10h-2zM1057 473h2v10h-2zM1063 493h2v10h-2zM1075 493h2v10h-2zM1100 513h2v10h-2zM1115 533h2v10h-2zM1123 513h2v10h-2zM1129 513h2v10h-2zM1131 513h2v10h-2zM1141 533h2v10h-2zM1145 553h2v10h-2zM1147 553h2v10h-2zM1157 553h2v10h-2zM1159 553h2v10h-2zM1161 553h2v10h-2zM1171 533h2v10h-2zM1175 533h2v10h-2zM1179 533h2v10h-2zM1181 513h2v10h-2zM1183 493h2v10h-2zM1186 473h2v10h-2zM1188 473h2v10h-2zM1190 453h2v10h-2zM1192 433h2v10h-2zM1204 413h2v10h-2zM1222 393h2v10h-2zM1243 373h2v10h-2zM1245 393h2v10h-2zM1252 353h2v10h-2zM1254 333h2v10h-2zM1266 273h2v10h-2zM1270 293h2v10h-2zM1273 253h2v10h-2zM1278 253h2v10h-2zM1282 253h2v10h-2zM1292 193h2v10h-2zM1300 133h2v10h-2zM1304 133h2v10h-2zM1308 133h2v10h-2zM1311 133h2v10h-2zM1320 133h2v10h-2zM1338 133h2v10h-2zM1342 113h2v10h-2zM1348 113h2v10h-2zM1350 113h2v10h-2zM1354 93h2v10h-2zM1368 93h2v10h-2zM1371 93h2v10h-2zM1378 93h2v10h-2zM1382 93h2v10h-2zM1390 93h2v10h-2zM1400 73h2v10h-2zM1417 73h2v10h-2zM1420 73h2v10h-2zM1436 73h2v10h-2zM1449 93h2v10h-2zM1451 93h2v10h-2zM1453 93h2v10h-2zM1469 113h2v10h-2zM1477 113h2v10h-2z"/><path fill="#2090ff" d="M681 393h2v10h-2zM711 333h2v10h-2zM719 333h2v10h-2zM727 333h2v10h-2zM729 353h2v10h-2zM737 333h2v10h-2zM739 353h2v10h-2zM773 433h2v10h-2zM787 433h2v10h-2zM808 333h2v10h-2zM821 353h2v10h-2zM845 413h2v10h-2zM849 433h2v10h-2zM865 493h2v10h-2zM895 493h2v10h-2zM897 513h2v10h-2zM928 533h2v10h-2zM975 473h2v10h-2zM979 493h2v10h-2zM983 493h2v10h-2zM985 493h2v10h-2zM1005 473h2v10h-2zM1079 473h2v10h-2zM1106 533h2v10h-2zM1108 533h2v10h-2zM1110 533h2v10h-2zM1117 533h2v10h-2zM1120 533h2v10h-2zM1127 533h2v10h-2zM1137 553h2v10h-2zM1139 533h2v10h-2zM1151 533h2v10h-2zM1169 513h2v10h-2zM1220 393h2v10h-2zM1224 393h2v10h-2zM1227 393h2v10h-2zM1237 393h2v10h-2zM1247 373h2v10h-2zM1276 253h2v10h-2zM1280 253h2v10h-2zM1286 213h2v10h-2zM1328 113h2v10h-2zM1340 93h2v10h-2zM1352 113h2v10h-2zM1359 113h2v10h-2zM1364 93h2v10h-2zM1373 93h2v10h-2zM1376 93h2v10h-2zM1386 93h2v10h-2zM1398 73h2v10h-2zM1413 93h2v10h-2zM1440 73h2v10h-2zM1445 73h2v10h-2zM1458 93h2v10h-2zM1462 113h2v10h-2zM1464 113h2v10h-2zM1472 93h2v10h-2z"/><path fill="#ffff00" d="M655 451h2v2h-2zM655 463h2v2h-2zM661 451h2v2h-2zM661 463h2v2h-2zM665 431h2v2h-2zM665 443h2v2h-2zM667 431h2v2h-2zM667 443h2v2h-2zM669 431h2v2h-2zM669 443h2v2h-2zM677 391h2v2h-2zM677 403h2v2h-2zM681 391h2v2h-2zM681 403h2v2h-2zM689 371h2v2h-2zM689 383h2v2h-2zM691 351h2v2h-2zM691 363h2v2h-2zM693 351h2v2h-2zM693 363h2v2h-2zM695 351h2v2h-2zM695 363h2v2h-2zM709 331h2v2h-2zM709 343h2v2h-2zM711 331h2v2h-2zM711 343h2v2h-2zM715 331h2v2h-2zM715 343h2v2h-2zM719 331h2v2h-2zM719 343h2v2h-2zM727 331h2v2h-2zM727 343h2v2h-2zM729 351h2v2h-2zM729 363h2v2h-2zM731 351h2v2h-2zM731 363h2v2h-2zM737 331h2v2h-2zM737 343h2v2h-2zM739 351h2v2h-2zM739 363h2v2h-2zM748 351h2v2h-2zM748 363h2v2h-2zM752 351h2v2h-2zM752 363h2v2h-2zM754 351h2v2h-2zM754 363h2v2h-2zM758 351h2v2h-2zM758 363h2v2h-2zM760 331h2v2h-2zM760 343h2v2h-2zM762 351h2v2h-2zM762 363h2v2h-2zM769 411h2v2h-2zM769 423h2v2h-2zM773 431h2v2h-2zM773 443h2v2h-2zM777 431h2v2h-2zM777 443h2v2h-2zM781 431h2v2h-2zM781 443h2v2h-2zM787 431h2v2h-2zM787 443h2v2h-2zM793 331h2v2h-2zM793 343h2v2h-2zM808 331h2v2h-2zM808 343h2v2h-2zM810 351h2v2h-2zM810 363h2v2h-2zM819 371h2v2h-2zM819 383h2v2h-2zM821 351h2v2h-2zM821 363h2v2h-2zM823 351h2v2h-2zM823 363h2v2h-2zM831 371h2v2h-2zM831 383h2v2h-2zM835 391h2v2h-2zM835 403h2v2h-2zM839 391h2v2h-2zM839 403h2v2h-2zM845 411h2v2h-2zM845 423h2v2h-2zM849 431h2v2h-2zM849 443h2v2h-2zM855 451h2v2h-2zM855 463h2v2h-2zM857 451h2v2h-2zM857 463h2v2h-2zM860 471h2v2h-2zM860 483h2v2h-2zM865 491h2v2h-2zM865 503h2v2h-2zM878 471h2v2h-2zM878 483h2v2h-2zM882 491h2v2h-2zM882 503h2v2h-2zM888 511h2v2h-2zM888 523h2v2h-2zM891 511h2v2h-2zM891 523h2v2h-2zM895 491h2v2h-2zM895 503h2v2h-2zM897 511h2v2h-2zM897 523h2v2h-2zM900 511h2v2h-2zM900 523h2v2h-2zM902 531h2v2h-2zM902 543h2v2h-2zM904 531h2v2h-2zM904 543h2v2h-2zM911 531h2v2h-2zM911 543h2v2h-2zM919 531h2v2h-2zM919 543h2v2h-2zM923 531h2v2h-2zM923 543h2v2h-2zM925 531h2v2h-2zM925 543h2v2h-2zM928 531h2v2h-2zM928 543h2v2h-2zM930 551h2v2h-2zM930 563h2v2h-2zM934 571h2v2h-2zM934 583h2v2h-2zM938 551h2v2h-2zM938 563h2v2h-2zM944 511h2v2h-2zM944 523h2v2h-2zM952 511h2v2h-2zM952 523h2v2h-2zM954 511h2v2h-2zM954 523h2v2h-2zM965 491h2v2h-2zM965 503h2v2h-2zM975 471h2v2h-2zM975 483h2v2h-2zM979 491h2v2h-2zM979 503h2v2h-2zM983 491h2v2h-2zM983 503h2v2h-2zM985 491h2v2h-2zM985 503h2v2h-2zM987 471h2v2h-2zM987 483h2v2h-2zM999 451h2v2h-2zM999 463h2v2h-2zM1001 471h2v2h-2zM1001 483h2v2h-2zM1005 471h2v2h-2zM1005 483h2v2h-2zM1010 451h2v2h-2zM1010 463h2v2h-2zM1012 451h2v2h-2zM1012 463h2v2h-2zM1018 451h2v2h-2zM1018 463h2v2h-2zM1022 451h2v2h-2zM1022 463h2v2h-2zM1024 471h2v2h-2zM1024 483h2v2h-2zM1026 451h2v2h-2zM1026 463h2v2h-2zM1031 451h2v2h-2zM1031 463h2v2h-2zM1035 471h2v2h-2zM1035 483h2v2h-2zM1037 451h2v2h-2zM1037 463h2v2h-2zM1053 471h2v2h-2zM1053 483h2v2h-2zM1057 471h2v2h-2zM1057 483h2v2h-2zM1063 491h2v2h-2zM1063 503h2v2h-2zM1075 491h2v2h-2zM1075 503h2v2h-2zM1079 471h2v2h-2zM1079 483h2v2h-2zM1100 511h2v2h-2zM1100 523h2v2h-2zM1106 531h2v2h-2zM1106 543h2v2h-2zM1108 531h2v2h-2zM1108 543h2v2h-2zM1110 531h2v2h-2zM1110 543h2v2h-2zM1115 531h2v2h-2zM1115 543h2v2h-2zM1117 531h2v2h-2zM1117 543h2v2h-2zM1120 531h2v2h-2zM1120 543h2v2h-2zM1123 511h2v2h-2zM1123 523h2v2h-2zM1127 531h2v2h-2zM1127 543h2v2h-2zM1129 511h2v2h-2zM1129 523h2v2h-2zM1131 511h2v2h-2zM1131 523h2v2h-2zM1137 551h2v2h-2zM1137 563h2v2h-2zM1139 531h2v2h-2zM1139 543h2v2h-2zM1141 531h2v2h-2zM1141 543h2v2h-2zM1145 551h2v2h-2zM1145 563h2v2h-2zM1147 551h2v2h-2zM1147 563h2v2h-2zM1151 531h2v2h-2zM1151 543h2v2h-2zM1157 551h2v2h-2zM1157 563h2v2h-2zM1159 551h2v2h-2zM1159 563h2v2h-2zM1161 551h2v2h-2zM1161 563h2v2h-2zM1169 511h2v2h-2zM1169 523h2v2h-2zM1171 531h2v2h-2zM1171 543h2v2h-2zM1175 531h2v2h-2zM1175 543h2v2h-2zM1179 531h2v2h-2zM1179 543h2v2h-2zM1181 511h2v2h-2zM1181 523h2v2h-2zM1183 491h2v2h-2zM1183 503h2v2h-2zM1186 471h2v2h-2zM1186 483h2v2h-2zM1188 471h2v2h-2zM1188 483h2v2h-2zM1190 451h2v2h-2zM1190 463h2v2h-2zM1192 431h2v2h-2zM1192 443h2v2h-2zM1204 411h2v2h-2zM1204 423h2v2h-2zM1220 391h2v2h-2zM1220 403h2v2h-2zM1222 391h2v2h-2zM1222 403h2v2h-2zM1224 391h2v2h-2zM1224 403h2v2h-2zM1227 391h2v2h-2zM1227 403h2v2h-2zM1237 391h2v2h-2zM1237 403h2v2h-2zM1243 371h2v2h-2zM1243 383h2v2h-2zM1245 391h2v2h-2zM1245 403h2v2h-2zM1247 371h2v2h-2zM1247 383h2v2h-2zM1252 351h2v2h-2zM1252 363h2v2h-2zM1254 331h2v2h-2zM1254 343h2v2h-2zM1266 271h2v2h-2zM1266 283h2v2h-2zM1270 291h2v2h-2zM1270 303h2v2h-2zM1273 251h2v2h-2zM1273 263h2v2h-2zM1276 251h2v2h-2zM1276 263h2v2h-2zM1278 251h2v2h-2zM1278 263h2v2h-2zM1280 251h2v2h-2zM1280 263h2v2h-2zM1282 251h2v2h-2zM1282 263h2v2h-2zM1286 211h2v2h-2zM1286 223h2v2h-2zM1292 191h2v2h-2zM1292 203h2v2h-2zM1300 131h2v2h-2zM1300 143h2v2h-2zM1304 131h2v2h-2zM1304 143h2v2h-2zM1308 131h2v2h-2zM1308 143h2v2h-2zM1311 131h2v2h-2zM1311 143h2v2h-2zM1320 131h2v2h-2zM1320 143h2v2h-2zM1328 111h2v2h-2zM1328 123h2v2h-2zM1338 131h2v2h-2zM1338 143h2v2h-2zM1340 91h2v2h-2zM1340 103h2v2h-2zM1342 111h2v2h-2zM1342 123h2v2h-2zM1348 111h2v2h-2zM1348 123h2v2h-2zM1350 111h2v2h-2zM1350 123h2v2h-2zM1352 111h2v2h-2zM1352 123h2v2h-2zM1354 91h2v2h-2zM1354 103h2v2h-2zM1359 111h2v2h-2zM1359 123h2v2h-2zM1364 91h2v2h-2zM1364 103h2v2h-2zM1368 91h2v2h-2zM1368 103h2v2h-2zM1371 91h2v2h-2zM1371 103h2v2h-2zM1373 91h2v2h-2zM1373 103h2v2h-2zM1376 91h2v2h-2zM1376 103h2v2h-2zM1378 91h2v2h-2zM1378 103h2v2h-2zM1382 91h2v2h-2zM1382 103h2v2h-2zM1386 91h2v2h-2zM1386 103h2v2h-2zM1390 91h2v2h-2zM1390 103h2v2h-2zM1398 71h2v2h-2zM1398 83h2v2h-2zM1400 71h2v2h-2zM1400 83h2v2h-2zM1413 91h2v2h-2zM1413 103h2v2h-2zM1417 71h2v2h-2zM1417 83h2v2h-2zM1420 71h2v2h-2zM1420 83h2v2h-2zM1436 71h2v2h-2zM1436 83h2v2h-2zM1440 71h2v2h-2zM1440 83h2v2h-2zM1445 71h2v2h-2zM1445 83h2v2h-2zM1449 91h2v2h-2zM1449 103h2v2h-2zM1451 91h2v2h-2zM1451 103h2v2h-2zM1453 91h2v2h-2zM1453 103h2v2h-2zM1458 91h2v2h-2zM1458 103h2v2h-2zM1462 111h2v2h-2zM1462 123h2v2h-2zM1464 111h2v2h-2zM1464 123h2v2h-2zM1469 111h2v2h-2zM1469 123h2v2h-2zM1472 91h2v2h-2zM1472 103h2v2h-2zM1477 111h2v2h-2zM1477 123h2v2h-2z"/><path fill="#900000" d="M1482 68h30v10h-30z"/><path fill="#ff3030" d="M1482 79h30v19h-30z"/><path fill="#200000" d="M1482 99h30v19h-30z"/><path fill="#5a0000" d="M1482 119h30v19h-30z"/><path fill="#00aee8" d="M1482 139h30v19h-30z"/><path fill="#004a66" d="M1482 159h30v19h-30zM1482 499h30v19h-30zM1482 519h30v19h-30zM1482 539h30v19h-30z"/><path fill="#001820" d="M1482 179h30v19h-30zM1482 199h30v19h-30zM1482 219h30v19h-30zM1482 239h30v19h-30zM1482 259h30v19h-30zM1482 299h30v19h-30zM1482 319h30v19h-30zM1482 339h30v19h-30zM1482 559h30v19h-30zM1482 579h30v19h-30zM1482 599h30v19h-30zM1482 619h30v19h-30zM1482 639h30v11h-30z"/><path fill="#0080b0" d="M1482 279h30v19h-30zM1482 359h30v19h-30zM1482 379h30v19h-30zM1482 419h30v19h-30zM1482 459h30v19h-30z"/><path fill="#30ccff" d="M1482 399h30v19h-30z"/><path fill="#001018" d="M1482 439h30v19h-30zM1482 479h30v19h-30z"/><path fill="#ffff00" d="M1482 131h30v2h-30zM1482 143h30v3h-30z"/><path fill="#ff0000" d="M1482 133h30v10h-30z"/><path fill="#0000ff" d="M1513 119h235v19h-235z"/><path stroke="#8a8a8a" stroke-width="1" d="M644 78.5H1748M644 98.5H1748M644 118.5H1748M644 138.5H1748M644 158.5H1748M644 178.5H1748M644 198.5H1748M644 218.5H1748M644 238.5H1748M644 258.5H1748M644 278.5H1748M644 298.5H1748M644 318.5H1748M644 338.5H1748M644 358.5H1748M644 378.5H1748M644 398.5H1748M644 418.5H1748M644 438.5H1748M644 458.5H1748M644 478.5H1748M644 498.5H1748M644 518.5H1748M644 538.5H1748M644 558.5H1748M644 578.5H1748M644 598.5H1748M644 618.5H1748M644 638.5H1748"/><path stroke="#8a8a8a" stroke-width="1" d="M1482.5 68V650"/></svg>
<div class="a" style="left:1012px;top:486px;width:22px;height:22px;border-radius:50%;background:radial-gradient(circle at 40% 35%,#5a5aff,#0000e0 60%,#0000a0);box-shadow:0 0 3px #aaf"></div>
<div class="a" style="left:1749px;top:0px;width:760px;height:754px;background:#a9a9a9;box-shadow:0 4px 8px rgba(0,0,0,0.25);"></div>
<div class="a" style="left:1751px;top:1px;width:758px;height:37px;background:#fff;"></div>
<div class="a ttl" style="left:1785px;top:10px;">NQ 12-16  Account Sim101</div>
<svg class="a" style="left:1759px;top:8px" width="24" height="24"><path d="M4 4L12 1L15 6L8 9Z" fill="#a0603a"/><path d="M10 7L20 19" stroke="#c08858" stroke-width="3"/><ellipse cx="12" cy="20" rx="8" ry="2.5" fill="#e06060"/></svg>
<svg class="a" style="left:2357px;top:12px" width="14" height="14"><path d="M0 7.5H12" stroke="#555" stroke-width="1"/></svg>
<svg class="a" style="left:2415px;top:12px" width="14" height="14"><rect x="1.5" y="1.5" width="11" height="11" fill="none" stroke="#333" stroke-width="1"/></svg>
<svg class="a" style="left:2473px;top:12px" width="14" height="14"><path d="M1 1L13 13M13 1L1 13" stroke="#333" stroke-width="1.1"/></svg>
<div class="a" style="left:1751px;top:38px;width:758px;height:30px;background:#fa8072;"></div>
<svg class="a" style="left:1759px;top:41px" width="24" height="25"><rect x="5" y="2" width="14" height="4" fill="#1535a0"/><rect x="1" y="7" width="22" height="4" fill="#1535a0"/><rect x="5" y="12" width="14" height="4" fill="#1535a0"/><rect x="2" y="17" width="20" height="4" fill="#1535a0"/><rect x="2" y="22" width="20" height="3" fill="#1535a0"/><path d="M7 4H17M3 9H21M7 14H17M4 19H20" stroke="#5a80e0" stroke-width="0.8"/></svg>
<div class="a" style="left:1789px;top:44px;width:1px;height:22px;background:#ffe8e0;"></div>
<svg class="a" style="left:1793px;top:41px" width="24" height="25"><path d="M2 3H22L19 24H5Z" fill="#a8c4f0"/><rect x="1" y="1" width="22" height="3" fill="#888"/><rect x="5" y="22" width="14" height="3" fill="#666"/><circle cx="12" cy="13" r="4" fill="none" stroke="#e8f0ff" stroke-width="2"/></svg>
<div class="a" style="left:1823px;top:44px;width:1px;height:22px;background:#ffe8e0;"></div>
<svg class="a" style="left:1827px;top:41px" width="24" height="25"><defs><linearGradient id="gup" x1="0" y1="0" x2="0" y2="1"><stop offset="0" stop-color="#9be06a"/><stop offset="1" stop-color="#3a9a20"/></linearGradient></defs><rect x="3" y="2" width="15" height="20" fill="#e8e8e8" stroke="#c8c8c8"/><path d="M13 9L21 17H17V24H9V17H5Z" fill="url(#gup)"/></svg>
<div class="a" style="left:1857px;top:44px;width:1px;height:22px;background:#ffe8e0;"></div>
<svg class="a" style="left:1861px;top:41px" width="24" height="25"><defs><linearGradient id="gup" x1="0" y1="0" x2="0" y2="1"><stop offset="0" stop-color="#9be06a"/><stop offset="1" stop-color="#3a9a20"/></linearGradient></defs><rect x="2" y="5" width="15" height="20" fill="#e8e8e8" stroke="#c8c8c8"/><path d="M14 22L22 13H18V3H10V13H6Z" fill="url(#gup)"/></svg>
<div class="a" style="left:1891px;top:44px;width:1px;height:22px;background:#ffe8e0;"></div>
<svg class="a" style="left:1895px;top:41px" width="24" height="25"><path d="M3 2L9 8" stroke="#b01010" stroke-width="3"/><path d="M7 6L13 12L9 16L3 10Z" fill="#d01818"/><path d="M9 16L13 12L17 16L13 20Z" fill="#f0c020"/><rect x="12" y="10" width="11" height="14" fill="none" stroke="#000" stroke-width="1.2" stroke-dasharray="2 1.5"/></svg>
<div class="a" style="left:1925px;top:44px;width:1px;height:22px;background:#ffe8e0;"></div>
<svg class="a" style="left:1929px;top:41px" width="24" height="25"><defs><linearGradient id="gup" x1="0" y1="0" x2="0" y2="1"><stop offset="0" stop-color="#9be06a"/><stop offset="1" stop-color="#3a9a20"/></linearGradient></defs><rect x="3" y="2" width="15" height="20" fill="#e8e8e8" stroke="#c8c8c8"/><path d="M13 9L21 17H17V24H9V17H5Z" fill="url(#gup)"/></svg>
<div class="a" style="left:1959px;top:44px;width:1px;height:22px;background:#ffe8e0;"></div>
<svg class="a" style="left:1963px;top:41px" width="24" height="25"><defs><linearGradient id="gup" x1="0" y1="0" x2="0" y2="1"><stop offset="0" stop-color="#9be06a"/><stop offset="1" stop-color="#3a9a20"/></linearGradient></defs><rect x="2" y="5" width="15" height="20" fill="#e8e8e8" stroke="#c8c8c8"/><path d="M14 22L22 13H18V3H10V13H6Z" fill="url(#gup)"/></svg>
<div class="a" style="left:1993px;top:44px;width:1px;height:22px;background:#ffe8e0;"></div>
<svg class="a" style="left:1997px;top:41px" width="24" height="25"><path d="M12 2C15.5 2 15 9 12.5 17H11.5C9 9 8.5 2 12 2Z" fill="#d02828"/><circle cx="12" cy="21" r="2.6" fill="#d02828"/></svg>
<div class="a" style="left:2027px;top:44px;width:1px;height:22px;background:#ffe8e0;"></div>
<svg class="a" style="left:2031px;top:41px" width="24" height="25"><path d="M3 2H16L21 7V24H3Z" fill="#c8eef0" stroke="#90c0c8"/><path d="M8 16H19M8 19H19M8 22H19" stroke="#111" stroke-width="1.5"/><path d="M3 17L10 11L15 15L8 21Z" fill="#fff" stroke="#999" stroke-width="0.6"/><path d="M6 14L10 11L12 13L8 16Z" fill="#2050c0"/></svg>
<div class="a" style="left:2061px;top:44px;width:1px;height:22px;background:#ffe8e0;"></div>
<svg class="a" style="left:2065px;top:41px" width="24" height="25"><path d="M5 2V8M10 2V8" stroke="#c8a040" stroke-width="1.8"/><path d="M2 8H13V13C13 16 10 17 7.5 17C5 17 2 16 2 13Z" fill="#8aa8d8"/><path d="M7 17V23" stroke="#889" stroke-width="1.2"/><rect x="13" y="3" width="10" height="21" rx="2" fill="#e8c860" stroke="#b09030"/><path d="M15.5 8H20.5M18 5.5V10.5M15.5 18H20.5" stroke="#e03020" stroke-width="2"/></svg>
<div class="a" style="left:2095px;top:44px;width:1px;height:22px;background:#ffe8e0;"></div>
<svg class="a" style="left:2099px;top:41px" width="24" height="25"><path d="M4 21L14 11" stroke="#2a70d0" stroke-width="4.5" stroke-linecap="round"/><path d="M4 21L14 11" stroke="#8ec0f8" stroke-width="1.2"/><path d="M16.5 2.5A5.5 5.5 0 1 0 22.5 8.5" stroke="#2a70d0" stroke-width="3.4" fill="none"/></svg>
<div class="a" style="left:2129px;top:44px;width:1px;height:22px;background:#ffe8e0;"></div>
<svg class="a" style="left:2133px;top:41px" width="24" height="25"><text x="12" y="21" font-size="25" font-weight="bold" text-anchor="middle" fill="#40b0d8" stroke="#105080" stroke-width="1" font-family="Liberation Sans">$</text></svg>
<div class="a" style="left:2163px;top:44px;width:1px;height:22px;background:#ffe8e0;"></div>
<svg class="a" style="left:2167px;top:41px" width="24" height="25"><ellipse cx="8" cy="8" rx="7" ry="5.5" fill="#f5b020"/><path d="M3 11L2 16L7 12Z" fill="#f5b020"/><ellipse cx="15" cy="14" rx="8.5" ry="6.5" fill="#1a88c8"/><path d="M17 19L21 24L19 18Z" fill="#1a88c8"/><path d="M11 12H19M11 14.5H19M11 17H19" stroke="#000" stroke-width="1.2"/></svg>
<div class="a" style="left:2197px;top:44px;width:1px;height:22px;background:#ffe8e0;"></div>
<svg class="a" style="left:2201px;top:41px" width="24" height="25"><path d="M3 2V24" stroke="#2040d0" stroke-width="2"/><path d="M1 23H23" stroke="#c02020" stroke-width="2"/><path d="M5 18L10 10L14 14L21 3" stroke="#a040c0" stroke-width="1.4" fill="none"/></svg>
<div class="a" style="left:2231px;top:44px;width:1px;height:22px;background:#ffe8e0;"></div>
<svg class="a" style="left:2483px;top:41px" width="24" height="25"><rect x="2" y="3" width="18" height="19" fill="#e8e8e8" stroke="#aaa"/><path d="M4 8H16M4 13H16M4 18H12" stroke="#999"/><path d="M10 17L14 21L22 11" stroke="#30a030" stroke-width="2.5" fill="none"/></svg>
<div class="a" style="left:1751px;top:68px;width:758px;height:685px;background:#d3d3d3;"></div>
<div class="a clip" style="left:1751px;top:68px;width:758px;height:685px">
<div class="a" style="left:306px;top:-9px;width:54px;height:19px;background:#00008b"></div>
<div class="a" style="left:360px;top:-9px;width:54px;height:19px;background:#00008b"></div>
<div class="a" style="left:522px;top:-9px;width:54px;height:19px;background:#8b0000"></div>
<div class="a" style="left:576px;top:-9px;width:54px;height:19px;background:#8b0000"></div>
<div class="a" style="left:232px;top:-9px;width:74px;height:19px;background:#808080"></div>
<div class="a" style="left:230px;top:-9px;width:2px;height:19px;background:#5f9ea0"></div>
<div class="a" style="left:694px;top:-9px;width:0px;height:19px;background:#87ceeb"></div>
<div class="a dom" style="left:111px;top:-10px;width:120px;text-align:right;color:#000;letter-spacing:0.6px">145</div>
<div class="a dom" style="left:185px;top:-10px;width:120px;text-align:right;color:#fff;letter-spacing:0.6px">4708,25</div>
<div class="a dom" style="left:455px;top:-10px;width:120px;text-align:right;color:#fff;letter-spacing:0.6px">80</div>
<div class="a dom" style="left:509px;top:-10px;width:120px;text-align:right;color:#fff;letter-spacing:0.6px">27</div>
<div class="a dom" style="left:637px;top:-10px;width:120px;text-align:right;color:#0000ff;letter-spacing:0.6px">0</div>
<div class="a" style="left:306px;top:11px;width:54px;height:19px;background:#00008b"></div>
<div class="a" style="left:360px;top:11px;width:54px;height:19px;background:#00008b"></div>
<div class="a" style="left:522px;top:11px;width:54px;height:19px;background:#8b0000"></div>
<div class="a" style="left:576px;top:11px;width:54px;height:19px;background:#8b0000"></div>
<div class="a" style="left:232px;top:11px;width:74px;height:19px;background:#808080"></div>
<div class="a" style="left:224px;top:11px;width:8px;height:19px;background:#5f9ea0"></div>
<div class="a" style="left:684px;top:11px;width:10px;height:19px;background:#dda0dd"></div>
<div class="a" style="left:694px;top:11px;width:3px;height:19px;background:#87ceeb"></div>
<div class="a dom" style="left:111px;top:10px;width:120px;text-align:right;color:#000;letter-spacing:0.6px">648</div>
<div class="a dom" style="left:185px;top:10px;width:120px;text-align:right;color:#fff;letter-spacing:0.6px">4708,00</div>
<div class="a dom" style="left:347px;top:10px;width:120px;text-align:right;color:#8b0000;letter-spacing:0.6px">386</div>
<div class="a dom" style="left:455px;top:10px;width:120px;text-align:right;color:#fff;letter-spacing:0.6px">100</div>
<div class="a dom" style="left:509px;top:10px;width:120px;text-align:right;color:#fff;letter-spacing:0.6px">0</div>
<div class="a dom" style="left:573px;top:10px;width:120px;text-align:right;color:#8b0000;letter-spacing:0.6px">386</div>
<div class="a dom" style="left:637px;top:10px;width:120px;text-align:right;color:#0000ff;letter-spacing:0.6px">129</div>
<div class="a" style="left:306px;top:31px;width:54px;height:19px;background:#00008b"></div>
<div class="a" style="left:360px;top:31px;width:54px;height:19px;background:#00008b"></div>
<div class="a" style="left:522px;top:31px;width:54px;height:19px;background:#8b0000"></div>
<div class="a" style="left:576px;top:31px;width:54px;height:19px;background:#8b0000"></div>
<div class="a" style="left:232px;top:31px;width:74px;height:19px;background:#808080"></div>
<div class="a" style="left:197px;top:31px;width:35px;height:19px;background:#5f9ea0"></div>
<div class="a" style="left:661px;top:31px;width:33px;height:19px;background:#dda0dd"></div>
<div class="a" style="left:694px;top:31px;width:31px;height:19px;background:#87ceeb"></div>
<div class="a dom" style="left:111px;top:30px;width:120px;text-align:right;color:#000;letter-spacing:0.6px">2752</div>
<div class="a dom" style="left:185px;top:30px;width:120px;text-align:right;color:#fff;letter-spacing:0.6px">4707,75</div>
<div class="a dom" style="left:347px;top:30px;width:120px;text-align:right;color:#8b0000;letter-spacing:0.6px">69</div>
<div class="a dom" style="left:401px;top:30px;width:120px;text-align:right;color:#0000ff;letter-spacing:0.6px">76</div>
<div class="a dom" style="left:455px;top:30px;width:120px;text-align:right;color:#fff;letter-spacing:0.6px">20</div>
<div class="a dom" style="left:509px;top:30px;width:120px;text-align:right;color:#fff;letter-spacing:0.6px">0</div>
<div class="a dom" style="left:573px;top:30px;width:120px;text-align:right;color:#8b0000;letter-spacing:0.6px">1296</div>
<div class="a dom" style="left:637px;top:30px;width:120px;text-align:right;color:#0000ff;letter-spacing:0.6px">1275</div>
<div class="a" style="left:306px;top:51px;width:54px;height:19px;background:#00008b"></div>
<div class="a" style="left:360px;top:51px;width:54px;height:19px;background:#00008b"></div>
<div class="a" style="left:522px;top:51px;width:54px;height:19px;background:#8b0000"></div>
<div class="a" style="left:576px;top:51px;width:54px;height:19px;background:#8b0000"></div>
<div class="a" style="left:232px;top:51px;width:74px;height:19px;background:#808080"></div>
<div class="a" style="left:468px;top:51px;width:54px;height:19px;background:#ffff00"></div>
<div class="a" style="left:522px;top:51px;width:54px;height:19px;background:#ff0000"></div>
<div class="a" style="left:576px;top:51px;width:54px;height:19px;background:#ff0000"></div>
<div class="a" style="left:694px;top:51px;width:64px;height:19px;background:#ffff00"></div>
<div class="a" style="left:186px;top:51px;width:46px;height:19px;background:#5f9ea0"></div>
<div class="a" style="left:650px;top:51px;width:44px;height:19px;background:#dda0dd"></div>
<div class="a" style="left:694px;top:51px;width:42px;height:19px;background:#87ceeb"></div>
<div class="a dom" style="left:111px;top:50px;width:120px;text-align:right;color:#000;letter-spacing:0.6px">3641</div>
<div class="a dom" style="left:185px;top:50px;width:120px;text-align:right;color:#fff;letter-spacing:0.6px">4707,50</div>
<div class="a dom" style="left:347px;top:50px;width:120px;text-align:right;color:#8b0000;letter-spacing:0.6px">79</div>
<div class="a dom" style="left:401px;top:50px;width:120px;text-align:right;color:#0000ff;letter-spacing:0.6px">16</div>
<div class="a dom" style="left:455px;top:50px;width:120px;text-align:right;color:#fff;letter-spacing:0.6px">53</div>
<div class="a dom" style="left:509px;top:50px;width:120px;text-align:right;color:#fff;letter-spacing:0.6px">16</div>
<div class="a dom" style="left:573px;top:50px;width:120px;text-align:right;color:#8b0000;letter-spacing:0.6px">1755</div>
<div class="a dom" style="left:637px;top:50px;width:120px;text-align:right;color:#0000ff;letter-spacing:0.6px">1694</div>
<div class="a" style="left:306px;top:71px;width:54px;height:19px;background:#00008b"></div>
<div class="a" style="left:360px;top:71px;width:54px;height:19px;background:#00008b"></div>
<div class="a" style="left:522px;top:71px;width:54px;height:19px;background:#8b0000"></div>
<div class="a" style="left:576px;top:71px;width:54px;height:19px;background:#8b0000"></div>
<div class="a" style="left:232px;top:71px;width:74px;height:19px;background:#808080"></div>
<div class="a" style="left:0px;top:71px;width:232px;height:19px;background:#ffff00"></div>
<div class="a" style="left:232px;top:71px;width:74px;height:19px;background:#ffff00"></div>
<div class="a" style="left:306px;top:71px;width:54px;height:19px;background:#0000ff"></div>
<div class="a" style="left:360px;top:71px;width:54px;height:19px;background:#0000ff"></div>
<div class="a" style="left:414px;top:71px;width:54px;height:19px;background:#ffffff"></div>
<div class="a" style="left:630px;top:71px;width:64px;height:19px;background:#ffff00"></div>
<div class="a" style="left:197px;top:71px;width:35px;height:19px;background:#5f9ea0"></div>
<div class="a" style="left:666px;top:71px;width:28px;height:19px;background:#dda0dd"></div>
<div class="a" style="left:694px;top:71px;width:35px;height:19px;background:#87ceeb"></div>
<div class="a dom" style="left:111px;top:70px;width:120px;text-align:right;color:#000;letter-spacing:0.6px">2752</div>
<div class="a dom" style="left:185px;top:70px;width:120px;text-align:right;color:#000;letter-spacing:0.6px">4707,25</div>
<div class="a dom" style="left:239px;top:70px;width:120px;text-align:right;color:#fff;letter-spacing:0.6px">90</div>
<div class="a dom" style="left:293px;top:70px;width:120px;text-align:right;color:#fff;letter-spacing:0.6px">85</div>
<div class="a dom" style="left:347px;top:70px;width:120px;text-align:right;color:#8b0000;letter-spacing:0.6px">28</div>
<div class="a dom" style="left:401px;top:70px;width:120px;text-align:right;color:#0000ff;letter-spacing:0.6px">46</div>
<div class="a dom" style="left:573px;top:70px;width:120px;text-align:right;color:#8b0000;letter-spacing:0.6px">1088</div>
<div class="a dom" style="left:637px;top:70px;width:120px;text-align:right;color:#0000ff;letter-spacing:0.6px">1435</div>
<div class="a" style="left:306px;top:91px;width:54px;height:19px;background:#00008b"></div>
<div class="a" style="left:360px;top:91px;width:54px;height:19px;background:#00008b"></div>
<div class="a" style="left:522px;top:91px;width:54px;height:19px;background:#8b0000"></div>
<div class="a" style="left:576px;top:91px;width:54px;height:19px;background:#8b0000"></div>
<div class="a" style="left:232px;top:91px;width:74px;height:19px;background:#808080"></div>
<div class="a" style="left:223px;top:91px;width:9px;height:19px;background:#5f9ea0"></div>
<div class="a" style="left:688px;top:91px;width:6px;height:19px;background:#dda0dd"></div>
<div class="a" style="left:694px;top:91px;width:7px;height:19px;background:#87ceeb"></div>
<div class="a dom" style="left:111px;top:90px;width:120px;text-align:right;color:#000;letter-spacing:0.6px">754</div>
<div class="a dom" style="left:185px;top:90px;width:120px;text-align:right;color:#fff;letter-spacing:0.6px">4707,00</div>
<div class="a dom" style="left:239px;top:90px;width:120px;text-align:right;color:#fff;letter-spacing:0.6px">0</div>
<div class="a dom" style="left:293px;top:90px;width:120px;text-align:right;color:#fff;letter-spacing:0.6px">59</div>
<div class="a dom" style="left:401px;top:90px;width:120px;text-align:right;color:#0000ff;letter-spacing:0.6px">152</div>
<div class="a dom" style="left:573px;top:90px;width:120px;text-align:right;color:#8b0000;letter-spacing:0.6px">235</div>
<div class="a dom" style="left:637px;top:90px;width:120px;text-align:right;color:#0000ff;letter-spacing:0.6px">284</div>
<div class="a" style="left:306px;top:111px;width:54px;height:19px;background:#00008b"></div>
<div class="a" style="left:360px;top:111px;width:54px;height:19px;background:#00008b"></div>
<div class="a" style="left:522px;top:111px;width:54px;height:19px;background:#8b0000"></div>
<div class="a" style="left:576px;top:111px;width:54px;height:19px;background:#8b0000"></div>
<div class="a" style="left:232px;top:111px;width:74px;height:19px;background:#808080"></div>
<div class="a" style="left:231px;top:111px;width:1px;height:19px;background:#5f9ea0"></div>
<div class="a" style="left:692px;top:111px;width:2px;height:19px;background:#dda0dd"></div>
<div class="a" style="left:694px;top:111px;width:0px;height:19px;background:#87ceeb"></div>
<div class="a dom" style="left:111px;top:110px;width:120px;text-align:right;color:#000;letter-spacing:0.6px">107</div>
<div class="a dom" style="left:185px;top:110px;width:120px;text-align:right;color:#fff;letter-spacing:0.6px">4706,75</div>
<div class="a dom" style="left:239px;top:110px;width:120px;text-align:right;color:#fff;letter-spacing:0.6px">0</div>
<div class="a dom" style="left:293px;top:110px;width:120px;text-align:right;color:#fff;letter-spacing:0.6px">18</div>
<div class="a dom" style="left:573px;top:110px;width:120px;text-align:right;color:#8b0000;letter-spacing:0.6px">66</div>
<div class="a dom" style="left:637px;top:110px;width:120px;text-align:right;color:#0000ff;letter-spacing:0.6px">0</div>
<div class="a" style="left:306px;top:131px;width:54px;height:19px;background:#00008b"></div>
<div class="a" style="left:360px;top:131px;width:54px;height:19px;background:#00008b"></div>
<div class="a" style="left:522px;top:131px;width:54px;height:19px;background:#8b0000"></div>
<div class="a" style="left:576px;top:131px;width:54px;height:19px;background:#8b0000"></div>
<div class="a" style="left:232px;top:131px;width:74px;height:19px;background:#808080"></div>
<div class="a" style="left:231px;top:131px;width:1px;height:19px;background:#5f9ea0"></div>
<div class="a" style="left:694px;top:131px;width:0px;height:19px;background:#dda0dd"></div>
<div class="a" style="left:694px;top:131px;width:0px;height:19px;background:#87ceeb"></div>
<div class="a dom" style="left:111px;top:130px;width:120px;text-align:right;color:#000;letter-spacing:0.6px">49</div>
<div class="a dom" style="left:185px;top:130px;width:120px;text-align:right;color:#fff;letter-spacing:0.6px">4706,50</div>
<div class="a dom" style="left:239px;top:130px;width:120px;text-align:right;color:#fff;letter-spacing:0.6px">-78</div>
<div class="a dom" style="left:293px;top:130px;width:120px;text-align:right;color:#fff;letter-spacing:0.6px">7</div>
<div class="a dom" style="left:347px;top:130px;width:120px;text-align:right;color:#8b0000;letter-spacing:0.6px">5</div>
<div class="a dom" style="left:573px;top:130px;width:120px;text-align:right;color:#8b0000;letter-spacing:0.6px">5</div>
<div class="a dom" style="left:637px;top:130px;width:120px;text-align:right;color:#0000ff;letter-spacing:0.6px">0</div>
<div class="a" style="left:306px;top:151px;width:54px;height:19px;background:#00008b"></div>
<div class="a" style="left:360px;top:151px;width:54px;height:19px;background:#00008b"></div>
<div class="a" style="left:522px;top:151px;width:54px;height:19px;background:#8b0000"></div>
<div class="a" style="left:576px;top:151px;width:54px;height:19px;background:#8b0000"></div>
<div class="a" style="left:232px;top:151px;width:74px;height:19px;background:#808080"></div>
<div class="a" style="left:229px;top:151px;width:3px;height:19px;background:#5f9ea0"></div>
<div class="a" style="left:692px;top:151px;width:2px;height:19px;background:#dda0dd"></div>
<div class="a" style="left:694px;top:151px;width:3px;height:19px;background:#87ceeb"></div>
<div class="a dom" style="left:111px;top:150px;width:120px;text-align:right;color:#000;letter-spacing:0.6px">262</div>
<div class="a dom" style="left:185px;top:150px;width:120px;text-align:right;color:#fff;letter-spacing:0.6px">4706,25</div>
<div class="a dom" style="left:239px;top:150px;width:120px;text-align:right;color:#fff;letter-spacing:0.6px">0</div>
<div class="a dom" style="left:293px;top:150px;width:120px;text-align:right;color:#fff;letter-spacing:0.6px">9</div>
<div class="a dom" style="left:347px;top:150px;width:120px;text-align:right;color:#8b0000;letter-spacing:0.6px">89</div>
<div class="a dom" style="left:401px;top:150px;width:120px;text-align:right;color:#0000ff;letter-spacing:0.6px">91</div>
<div class="a dom" style="left:573px;top:150px;width:120px;text-align:right;color:#8b0000;letter-spacing:0.6px">89</div>
<div class="a dom" style="left:637px;top:150px;width:120px;text-align:right;color:#0000ff;letter-spacing:0.6px">116</div>
<div class="a" style="left:306px;top:171px;width:54px;height:19px;background:#00008b"></div>
<div class="a" style="left:360px;top:171px;width:54px;height:19px;background:#00008b"></div>
<div class="a" style="left:522px;top:171px;width:54px;height:19px;background:#8b0000"></div>
<div class="a" style="left:576px;top:171px;width:54px;height:19px;background:#8b0000"></div>
<div class="a" style="left:232px;top:171px;width:74px;height:19px;background:#808080"></div>
<div class="a" style="left:223px;top:171px;width:9px;height:19px;background:#5f9ea0"></div>
<div class="a" style="left:684px;top:171px;width:10px;height:19px;background:#dda0dd"></div>
<div class="a" style="left:694px;top:171px;width:6px;height:19px;background:#87ceeb"></div>
<div class="a dom" style="left:111px;top:170px;width:120px;text-align:right;color:#000;letter-spacing:0.6px">686</div>
<div class="a dom" style="left:185px;top:170px;width:120px;text-align:right;color:#fff;letter-spacing:0.6px">4706,00</div>
<div class="a dom" style="left:239px;top:170px;width:120px;text-align:right;color:#fff;letter-spacing:0.6px">0</div>
<div class="a dom" style="left:293px;top:170px;width:120px;text-align:right;color:#fff;letter-spacing:0.6px">21</div>
<div class="a dom" style="left:401px;top:170px;width:120px;text-align:right;color:#0000ff;letter-spacing:0.6px">151</div>
<div class="a dom" style="left:573px;top:170px;width:120px;text-align:right;color:#8b0000;letter-spacing:0.6px">380</div>
<div class="a dom" style="left:637px;top:170px;width:120px;text-align:right;color:#0000ff;letter-spacing:0.6px">253</div>
<div class="a" style="left:306px;top:191px;width:54px;height:19px;background:#00008b"></div>
<div class="a" style="left:360px;top:191px;width:54px;height:19px;background:#00008b"></div>
<div class="a" style="left:522px;top:191px;width:54px;height:19px;background:#8b0000"></div>
<div class="a" style="left:576px;top:191px;width:54px;height:19px;background:#8b0000"></div>
<div class="a" style="left:232px;top:191px;width:74px;height:19px;background:#808080"></div>
<div class="a" style="left:228px;top:191px;width:4px;height:19px;background:#d2691e"></div>
<div class="a" style="left:692px;top:191px;width:2px;height:19px;background:#dda0dd"></div>
<div class="a" style="left:694px;top:191px;width:2px;height:19px;background:#87ceeb"></div>
<div class="a dom" style="left:111px;top:190px;width:120px;text-align:right;color:#000;letter-spacing:0.6px">323</div>
<div class="a dom" style="left:185px;top:190px;width:120px;text-align:right;color:#fff;letter-spacing:0.6px">4705,75</div>
<div class="a dom" style="left:293px;top:190px;width:120px;text-align:right;color:#fff;letter-spacing:0.6px">5</div>
<div class="a dom" style="left:401px;top:190px;width:120px;text-align:right;color:#0000ff;letter-spacing:0.6px">58</div>
<div class="a dom" style="left:573px;top:190px;width:120px;text-align:right;color:#8b0000;letter-spacing:0.6px">93</div>
<div class="a dom" style="left:637px;top:190px;width:120px;text-align:right;color:#0000ff;letter-spacing:0.6px">97</div>
<div class="a" style="left:306px;top:211px;width:54px;height:19px;background:#00008b"></div>
<div class="a" style="left:360px;top:211px;width:54px;height:19px;background:#00008b"></div>
<div class="a" style="left:522px;top:211px;width:54px;height:19px;background:#8b0000"></div>
<div class="a" style="left:576px;top:211px;width:54px;height:19px;background:#8b0000"></div>
<div class="a" style="left:232px;top:211px;width:74px;height:19px;background:#808080"></div>
<div class="a" style="left:226px;top:211px;width:6px;height:19px;background:#d2691e"></div>
<div class="a" style="left:687px;top:211px;width:7px;height:19px;background:#dda0dd"></div>
<div class="a" style="left:694px;top:211px;width:3px;height:19px;background:#87ceeb"></div>
<div class="a dom" style="left:111px;top:210px;width:120px;text-align:right;color:#000;letter-spacing:0.6px">507</div>
<div class="a dom" style="left:185px;top:210px;width:120px;text-align:right;color:#fff;letter-spacing:0.6px">4705,50</div>
<div class="a dom" style="left:293px;top:210px;width:120px;text-align:right;color:#fff;letter-spacing:0.6px">64</div>
<div class="a dom" style="left:401px;top:210px;width:120px;text-align:right;color:#0000ff;letter-spacing:0.6px">115</div>
<div class="a dom" style="left:573px;top:210px;width:120px;text-align:right;color:#8b0000;letter-spacing:0.6px">268</div>
<div class="a dom" style="left:637px;top:210px;width:120px;text-align:right;color:#0000ff;letter-spacing:0.6px">115</div>
<div class="a" style="left:306px;top:231px;width:54px;height:19px;background:#00008b"></div>
<div class="a" style="left:360px;top:231px;width:54px;height:19px;background:#00008b"></div>
<div class="a" style="left:522px;top:231px;width:54px;height:19px;background:#8b0000"></div>
<div class="a" style="left:576px;top:231px;width:54px;height:19px;background:#8b0000"></div>
<div class="a" style="left:232px;top:231px;width:74px;height:19px;background:#808080"></div>
<div class="a" style="left:230px;top:231px;width:2px;height:19px;background:#d2691e"></div>
<div class="a" style="left:693px;top:231px;width:1px;height:19px;background:#dda0dd"></div>
<div class="a" style="left:694px;top:231px;width:0px;height:19px;background:#87ceeb"></div>
<div class="a dom" style="left:111px;top:230px;width:120px;text-align:right;color:#000;letter-spacing:0.6px">181</div>
<div class="a dom" style="left:185px;top:230px;width:120px;text-align:right;color:#fff;letter-spacing:0.6px">4705,25</div>
<div class="a dom" style="left:293px;top:230px;width:120px;text-align:right;color:#fff;letter-spacing:0.6px">22</div>
<div class="a dom" style="left:347px;top:230px;width:120px;text-align:right;color:#8b0000;letter-spacing:0.6px">21</div>
<div class="a dom" style="left:401px;top:230px;width:120px;text-align:right;color:#0000ff;letter-spacing:0.6px">10</div>
<div class="a dom" style="left:573px;top:230px;width:120px;text-align:right;color:#8b0000;letter-spacing:0.6px">21</div>
<div class="a dom" style="left:637px;top:230px;width:120px;text-align:right;color:#0000ff;letter-spacing:0.6px">10</div>
<div class="a" style="left:306px;top:251px;width:54px;height:19px;background:#00008b"></div>
<div class="a" style="left:360px;top:251px;width:54px;height:19px;background:#00008b"></div>
<div class="a" style="left:522px;top:251px;width:54px;height:19px;background:#8b0000"></div>
<div class="a" style="left:576px;top:251px;width:54px;height:19px;background:#8b0000"></div>
<div class="a" style="left:232px;top:251px;width:74px;height:19px;background:#808080"></div>
<div class="a" style="left:223px;top:251px;width:9px;height:19px;background:#d2691e"></div>
<div class="a" style="left:687px;top:251px;width:7px;height:19px;background:#dda0dd"></div>
<div class="a" style="left:694px;top:251px;width:7px;height:19px;background:#87ceeb"></div>
<div class="a dom" style="left:111px;top:250px;width:120px;text-align:right;color:#000;letter-spacing:0.6px">751</div>
<div class="a dom" style="left:185px;top:250px;width:120px;text-align:right;color:#fff;letter-spacing:0.6px">4705,00</div>
<div class="a dom" style="left:293px;top:250px;width:120px;text-align:right;color:#fff;letter-spacing:0.6px">29</div>
<div class="a dom" style="left:347px;top:250px;width:120px;text-align:right;color:#8b0000;letter-spacing:0.6px">106</div>
<div class="a dom" style="left:401px;top:250px;width:120px;text-align:right;color:#0000ff;letter-spacing:0.6px">239</div>
<div class="a dom" style="left:573px;top:250px;width:120px;text-align:right;color:#8b0000;letter-spacing:0.6px">288</div>
<div class="a dom" style="left:637px;top:250px;width:120px;text-align:right;color:#0000ff;letter-spacing:0.6px">302</div>
<div class="a" style="left:306px;top:271px;width:54px;height:19px;background:#00008b"></div>
<div class="a" style="left:360px;top:271px;width:54px;height:19px;background:#00008b"></div>
<div class="a" style="left:522px;top:271px;width:54px;height:19px;background:#8b0000"></div>
<div class="a" style="left:576px;top:271px;width:54px;height:19px;background:#8b0000"></div>
<div class="a" style="left:232px;top:271px;width:74px;height:19px;background:#808080"></div>
<div class="a" style="left:205px;top:271px;width:27px;height:19px;background:#d2691e"></div>
<div class="a" style="left:669px;top:271px;width:25px;height:19px;background:#dda0dd"></div>
<div class="a" style="left:694px;top:271px;width:22px;height:19px;background:#87ceeb"></div>
<div class="a dom" style="left:111px;top:270px;width:120px;text-align:right;color:#000;letter-spacing:0.6px">2141</div>
<div class="a dom" style="left:185px;top:270px;width:120px;text-align:right;color:#fff;letter-spacing:0.6px">4704,75</div>
<div class="a dom" style="left:293px;top:270px;width:120px;text-align:right;color:#fff;letter-spacing:0.6px">20</div>
<div class="a dom" style="left:347px;top:270px;width:120px;text-align:right;color:#8b0000;letter-spacing:0.6px">48</div>
<div class="a dom" style="left:401px;top:270px;width:120px;text-align:right;color:#0000ff;letter-spacing:0.6px">175</div>
<div class="a dom" style="left:573px;top:270px;width:120px;text-align:right;color:#8b0000;letter-spacing:0.6px">1003</div>
<div class="a dom" style="left:637px;top:270px;width:120px;text-align:right;color:#0000ff;letter-spacing:0.6px">897</div>
<div class="a" style="left:306px;top:291px;width:54px;height:19px;background:#00008b"></div>
<div class="a" style="left:360px;top:291px;width:54px;height:19px;background:#00008b"></div>
<div class="a" style="left:522px;top:291px;width:54px;height:19px;background:#8b0000"></div>
<div class="a" style="left:576px;top:291px;width:54px;height:19px;background:#8b0000"></div>
<div class="a" style="left:232px;top:291px;width:74px;height:19px;background:#808080"></div>
<div class="a" style="left:184px;top:291px;width:48px;height:19px;background:#d2691e"></div>
<div class="a" style="left:640px;top:291px;width:54px;height:19px;background:#dda0dd"></div>
<div class="a" style="left:694px;top:291px;width:34px;height:19px;background:#87ceeb"></div>
<div class="a dom" style="left:111px;top:290px;width:120px;text-align:right;color:#000;letter-spacing:0.6px">3771</div>
<div class="a dom" style="left:185px;top:290px;width:120px;text-align:right;color:#fff;letter-spacing:0.6px">4704,50</div>
<div class="a dom" style="left:293px;top:290px;width:120px;text-align:right;color:#fff;letter-spacing:0.6px">68</div>
<div class="a dom" style="left:401px;top:290px;width:120px;text-align:right;color:#0000ff;letter-spacing:0.6px">134</div>
<div class="a dom" style="left:573px;top:290px;width:120px;text-align:right;color:#8b0000;letter-spacing:0.6px">2133</div>
<div class="a dom" style="left:637px;top:290px;width:120px;text-align:right;color:#0000ff;letter-spacing:0.6px">1372</div>
<div class="a" style="left:306px;top:311px;width:54px;height:19px;background:#00008b"></div>
<div class="a" style="left:360px;top:311px;width:54px;height:19px;background:#00008b"></div>
<div class="a" style="left:522px;top:311px;width:54px;height:19px;background:#8b0000"></div>
<div class="a" style="left:576px;top:311px;width:54px;height:19px;background:#8b0000"></div>
<div class="a" style="left:232px;top:311px;width:74px;height:19px;background:#808080"></div>
<div class="a" style="left:198px;top:311px;width:34px;height:19px;background:#d2691e"></div>
<div class="a" style="left:664px;top:311px;width:30px;height:19px;background:#dda0dd"></div>
<div class="a" style="left:694px;top:311px;width:31px;height:19px;background:#87ceeb"></div>
<div class="a dom" style="left:111px;top:310px;width:120px;text-align:right;color:#000;letter-spacing:0.6px">2724</div>
<div class="a dom" style="left:185px;top:310px;width:120px;text-align:right;color:#fff;letter-spacing:0.6px">4704,25</div>
<div class="a dom" style="left:293px;top:310px;width:120px;text-align:right;color:#fff;letter-spacing:0.6px">73</div>
<div class="a dom" style="left:401px;top:310px;width:120px;text-align:right;color:#0000ff;letter-spacing:0.6px">23</div>
<div class="a dom" style="left:573px;top:310px;width:120px;text-align:right;color:#8b0000;letter-spacing:0.6px">1196</div>
<div class="a dom" style="left:637px;top:310px;width:120px;text-align:right;color:#0000ff;letter-spacing:0.6px">1260</div>
<div class="a" style="left:306px;top:331px;width:54px;height:19px;background:#00008b"></div>
<div class="a" style="left:360px;top:331px;width:54px;height:19px;background:#00008b"></div>
<div class="a" style="left:522px;top:331px;width:54px;height:19px;background:#8b0000"></div>
<div class="a" style="left:576px;top:331px;width:54px;height:19px;background:#8b0000"></div>
<div class="a" style="left:232px;top:331px;width:74px;height:19px;background:#808080"></div>
<div class="a" style="left:194px;top:331px;width:38px;height:19px;background:#d2691e"></div>
<div class="a" style="left:659px;top:331px;width:35px;height:19px;background:#dda0dd"></div>
<div class="a" style="left:694px;top:331px;width:34px;height:19px;background:#87ceeb"></div>
<div class="a dom" style="left:111px;top:330px;width:120px;text-align:right;color:#000;letter-spacing:0.6px">2986</div>
<div class="a dom" style="left:185px;top:330px;width:120px;text-align:right;color:#fff;letter-spacing:0.6px">4704,00</div>
<div class="a dom" style="left:293px;top:330px;width:120px;text-align:right;color:#fff;letter-spacing:0.6px">98</div>
<div class="a dom" style="left:347px;top:330px;width:120px;text-align:right;color:#8b0000;letter-spacing:0.6px">68</div>
<div class="a dom" style="left:401px;top:330px;width:120px;text-align:right;color:#0000ff;letter-spacing:0.6px">590</div>
<div class="a dom" style="left:573px;top:330px;width:120px;text-align:right;color:#8b0000;letter-spacing:0.6px">1375</div>
<div class="a dom" style="left:637px;top:330px;width:120px;text-align:right;color:#0000ff;letter-spacing:0.6px">1383</div>
<div class="a" style="left:306px;top:351px;width:54px;height:19px;background:#00008b"></div>
<div class="a" style="left:360px;top:351px;width:54px;height:19px;background:#00008b"></div>
<div class="a" style="left:522px;top:351px;width:54px;height:19px;background:#8b0000"></div>
<div class="a" style="left:576px;top:351px;width:54px;height:19px;background:#8b0000"></div>
<div class="a" style="left:232px;top:351px;width:74px;height:19px;background:#808080"></div>
<div class="a" style="left:213px;top:351px;width:19px;height:19px;background:#d2691e"></div>
<div class="a" style="left:681px;top:351px;width:13px;height:19px;background:#dda0dd"></div>
<div class="a" style="left:694px;top:351px;width:19px;height:19px;background:#87ceeb"></div>
<div class="a dom" style="left:111px;top:350px;width:120px;text-align:right;color:#000;letter-spacing:0.6px">1512</div>
<div class="a dom" style="left:185px;top:350px;width:120px;text-align:right;color:#fff;letter-spacing:0.6px">4703,75</div>
<div class="a dom" style="left:293px;top:350px;width:120px;text-align:right;color:#fff;letter-spacing:0.6px">71</div>
<div class="a dom" style="left:347px;top:350px;width:120px;text-align:right;color:#8b0000;letter-spacing:0.6px">308</div>
<div class="a dom" style="left:401px;top:350px;width:120px;text-align:right;color:#0000ff;letter-spacing:0.6px">323</div>
<div class="a dom" style="left:573px;top:350px;width:120px;text-align:right;color:#8b0000;letter-spacing:0.6px">514</div>
<div class="a dom" style="left:637px;top:350px;width:120px;text-align:right;color:#0000ff;letter-spacing:0.6px">788</div>
<div class="a" style="left:306px;top:371px;width:54px;height:19px;background:#00008b"></div>
<div class="a" style="left:360px;top:371px;width:54px;height:19px;background:#00008b"></div>
<div class="a" style="left:522px;top:371px;width:54px;height:19px;background:#8b0000"></div>
<div class="a" style="left:576px;top:371px;width:54px;height:19px;background:#8b0000"></div>
<div class="a" style="left:232px;top:371px;width:74px;height:19px;background:#808080"></div>
<div class="a" style="left:213px;top:371px;width:19px;height:19px;background:#d2691e"></div>
<div class="a" style="left:680px;top:371px;width:14px;height:19px;background:#dda0dd"></div>
<div class="a" style="left:694px;top:371px;width:15px;height:19px;background:#87ceeb"></div>
<div class="a dom" style="left:111px;top:370px;width:120px;text-align:right;color:#000;letter-spacing:0.6px">1480</div>
<div class="a dom" style="left:185px;top:370px;width:120px;text-align:right;color:#fff;letter-spacing:0.6px">4703,50</div>
<div class="a dom" style="left:293px;top:370px;width:120px;text-align:right;color:#fff;letter-spacing:0.6px">10</div>
<div class="a dom" style="left:401px;top:370px;width:120px;text-align:right;color:#0000ff;letter-spacing:0.6px">108</div>
<div class="a dom" style="left:573px;top:370px;width:120px;text-align:right;color:#8b0000;letter-spacing:0.6px">539</div>
<div class="a dom" style="left:637px;top:370px;width:120px;text-align:right;color:#0000ff;letter-spacing:0.6px">609</div>
<div class="a" style="left:306px;top:391px;width:54px;height:19px;background:#00008b"></div>
<div class="a" style="left:360px;top:391px;width:54px;height:19px;background:#00008b"></div>
<div class="a" style="left:522px;top:391px;width:54px;height:19px;background:#8b0000"></div>
<div class="a" style="left:576px;top:391px;width:54px;height:19px;background:#8b0000"></div>
<div class="a" style="left:232px;top:391px;width:74px;height:19px;background:#808080"></div>
<div class="a" style="left:193px;top:391px;width:39px;height:19px;background:#d2691e"></div>
<div class="a" style="left:646px;top:391px;width:48px;height:19px;background:#dda0dd"></div>
<div class="a" style="left:694px;top:391px;width:21px;height:19px;background:#87ceeb"></div>
<div class="a dom" style="left:111px;top:390px;width:120px;text-align:right;color:#000;letter-spacing:0.6px">3105</div>
<div class="a dom" style="left:185px;top:390px;width:120px;text-align:right;color:#fff;letter-spacing:0.6px">4703,25</div>
<div class="a dom" style="left:293px;top:390px;width:120px;text-align:right;color:#fff;letter-spacing:0.6px">69</div>
<div class="a dom" style="left:347px;top:390px;width:120px;text-align:right;color:#8b0000;letter-spacing:0.6px">36</div>
<div class="a dom" style="left:401px;top:390px;width:120px;text-align:right;color:#0000ff;letter-spacing:0.6px">35</div>
<div class="a dom" style="left:573px;top:390px;width:120px;text-align:right;color:#8b0000;letter-spacing:0.6px">1908</div>
<div class="a dom" style="left:637px;top:390px;width:120px;text-align:right;color:#0000ff;letter-spacing:0.6px">867</div>
<div class="a" style="left:306px;top:411px;width:54px;height:19px;background:#00008b"></div>
<div class="a" style="left:360px;top:411px;width:54px;height:19px;background:#00008b"></div>
<div class="a" style="left:522px;top:411px;width:54px;height:19px;background:#8b0000"></div>
<div class="a" style="left:576px;top:411px;width:54px;height:19px;background:#8b0000"></div>
<div class="a" style="left:232px;top:411px;width:74px;height:19px;background:#808080"></div>
<div class="a" style="left:168px;top:411px;width:64px;height:19px;background:#32cd32"></div>
<div class="a" style="left:640px;top:411px;width:54px;height:19px;background:#dda0dd"></div>
<div class="a" style="left:694px;top:411px;width:64px;height:19px;background:#87ceeb"></div>
<div class="a dom" style="left:111px;top:410px;width:120px;text-align:right;color:#000;letter-spacing:0.6px">5080</div>
<div class="a dom" style="left:185px;top:410px;width:120px;text-align:right;color:#fff;letter-spacing:0.6px">4703,00</div>
<div class="a dom" style="left:293px;top:410px;width:120px;text-align:right;color:#fff;letter-spacing:0.6px">12</div>
<div class="a dom" style="left:347px;top:410px;width:120px;text-align:right;color:#8b0000;letter-spacing:0.6px">364</div>
<div class="a dom" style="left:401px;top:410px;width:120px;text-align:right;color:#0000ff;letter-spacing:0.6px">71</div>
<div class="a dom" style="left:573px;top:410px;width:120px;text-align:right;color:#8b0000;letter-spacing:0.6px">2130</div>
<div class="a dom" style="left:637px;top:410px;width:120px;text-align:right;color:#0000ff;letter-spacing:0.6px">2609</div>
<div class="a" style="left:306px;top:431px;width:54px;height:19px;background:#00008b"></div>
<div class="a" style="left:360px;top:431px;width:54px;height:19px;background:#00008b"></div>
<div class="a" style="left:522px;top:431px;width:54px;height:19px;background:#8b0000"></div>
<div class="a" style="left:576px;top:431px;width:54px;height:19px;background:#8b0000"></div>
<div class="a" style="left:232px;top:431px;width:74px;height:19px;background:#808080"></div>
<div class="a" style="left:173px;top:431px;width:59px;height:19px;background:#d2691e"></div>
<div class="a" style="left:645px;top:431px;width:49px;height:19px;background:#dda0dd"></div>
<div class="a" style="left:694px;top:431px;width:64px;height:19px;background:#87ceeb"></div>
<div class="a dom" style="left:111px;top:430px;width:120px;text-align:right;color:#000;letter-spacing:0.6px">4711</div>
<div class="a dom" style="left:185px;top:430px;width:120px;text-align:right;color:#fff;letter-spacing:0.6px">4702,75</div>
<div class="a dom" style="left:293px;top:430px;width:120px;text-align:right;color:#fff;letter-spacing:0.6px">39</div>
<div class="a dom" style="left:401px;top:430px;width:120px;text-align:right;color:#0000ff;letter-spacing:0.6px">235</div>
<div class="a dom" style="left:573px;top:430px;width:120px;text-align:right;color:#8b0000;letter-spacing:0.6px">1917</div>
<div class="a dom" style="left:637px;top:430px;width:120px;text-align:right;color:#0000ff;letter-spacing:0.6px">2611</div>
<div class="a" style="left:306px;top:451px;width:54px;height:19px;background:#00008b"></div>
<div class="a" style="left:360px;top:451px;width:54px;height:19px;background:#00008b"></div>
<div class="a" style="left:522px;top:451px;width:54px;height:19px;background:#8b0000"></div>
<div class="a" style="left:576px;top:451px;width:54px;height:19px;background:#8b0000"></div>
<div class="a" style="left:232px;top:451px;width:74px;height:19px;background:#808080"></div>
<div class="a" style="left:182px;top:451px;width:50px;height:19px;background:#d2691e"></div>
<div class="a" style="left:653px;top:451px;width:41px;height:19px;background:#dda0dd"></div>
<div class="a" style="left:694px;top:451px;width:49px;height:19px;background:#87ceeb"></div>
<div class="a dom" style="left:111px;top:450px;width:120px;text-align:right;color:#000;letter-spacing:0.6px">3936</div>
<div class="a dom" style="left:185px;top:450px;width:120px;text-align:right;color:#fff;letter-spacing:0.6px">4702,50</div>
<div class="a dom" style="left:293px;top:450px;width:120px;text-align:right;color:#fff;letter-spacing:0.6px">54</div>
<div class="a dom" style="left:347px;top:450px;width:120px;text-align:right;color:#8b0000;letter-spacing:0.6px">233</div>
<div class="a dom" style="left:401px;top:450px;width:120px;text-align:right;color:#0000ff;letter-spacing:0.6px">196</div>
<div class="a dom" style="left:573px;top:450px;width:120px;text-align:right;color:#8b0000;letter-spacing:0.6px">1611</div>
<div class="a dom" style="left:637px;top:450px;width:120px;text-align:right;color:#0000ff;letter-spacing:0.6px">2013</div>
<div class="a" style="left:306px;top:471px;width:54px;height:19px;background:#00008b"></div>
<div class="a" style="left:360px;top:471px;width:54px;height:19px;background:#00008b"></div>
<div class="a" style="left:522px;top:471px;width:54px;height:19px;background:#8b0000"></div>
<div class="a" style="left:576px;top:471px;width:54px;height:19px;background:#8b0000"></div>
<div class="a" style="left:232px;top:471px;width:74px;height:19px;background:#808080"></div>
<div class="a" style="left:199px;top:471px;width:33px;height:19px;background:#d2691e"></div>
<div class="a" style="left:664px;top:471px;width:30px;height:19px;background:#dda0dd"></div>
<div class="a" style="left:694px;top:471px;width:26px;height:19px;background:#87ceeb"></div>
<div class="a dom" style="left:111px;top:470px;width:120px;text-align:right;color:#000;letter-spacing:0.6px">2648</div>
<div class="a dom" style="left:185px;top:470px;width:120px;text-align:right;color:#fff;letter-spacing:0.6px">4702,25</div>
<div class="a dom" style="left:293px;top:470px;width:120px;text-align:right;color:#fff;letter-spacing:0.6px">42</div>
<div class="a dom" style="left:347px;top:470px;width:120px;text-align:right;color:#8b0000;letter-spacing:0.6px">550</div>
<div class="a dom" style="left:401px;top:470px;width:120px;text-align:right;color:#0000ff;letter-spacing:0.6px">99</div>
<div class="a dom" style="left:573px;top:470px;width:120px;text-align:right;color:#8b0000;letter-spacing:0.6px">1179</div>
<div class="a dom" style="left:637px;top:470px;width:120px;text-align:right;color:#0000ff;letter-spacing:0.6px">1043</div>
<div class="a" style="left:306px;top:491px;width:54px;height:19px;background:#00008b"></div>
<div class="a" style="left:360px;top:491px;width:54px;height:19px;background:#00008b"></div>
<div class="a" style="left:522px;top:491px;width:54px;height:19px;background:#8b0000"></div>
<div class="a" style="left:576px;top:491px;width:54px;height:19px;background:#8b0000"></div>
<div class="a" style="left:232px;top:491px;width:74px;height:19px;background:#808080"></div>
<div class="a" style="left:217px;top:491px;width:15px;height:19px;background:#d2691e"></div>
<div class="a" style="left:683px;top:491px;width:11px;height:19px;background:#dda0dd"></div>
<div class="a" style="left:694px;top:491px;width:4px;height:19px;background:#87ceeb"></div>
<div class="a dom" style="left:111px;top:490px;width:120px;text-align:right;color:#000;letter-spacing:0.6px">1221</div>
<div class="a dom" style="left:185px;top:490px;width:120px;text-align:right;color:#fff;letter-spacing:0.6px">4702,00</div>
<div class="a dom" style="left:293px;top:490px;width:120px;text-align:right;color:#fff;letter-spacing:0.6px">87</div>
<div class="a dom" style="left:347px;top:490px;width:120px;text-align:right;color:#8b0000;letter-spacing:0.6px">89</div>
<div class="a dom" style="left:401px;top:490px;width:120px;text-align:right;color:#0000ff;letter-spacing:0.6px">60</div>
<div class="a dom" style="left:573px;top:490px;width:120px;text-align:right;color:#8b0000;letter-spacing:0.6px">431</div>
<div class="a dom" style="left:637px;top:490px;width:120px;text-align:right;color:#0000ff;letter-spacing:0.6px">166</div>
<div class="a" style="left:306px;top:511px;width:54px;height:19px;background:#00008b"></div>
<div class="a" style="left:360px;top:511px;width:54px;height:19px;background:#00008b"></div>
<div class="a" style="left:522px;top:511px;width:54px;height:19px;background:#8b0000"></div>
<div class="a" style="left:576px;top:511px;width:54px;height:19px;background:#8b0000"></div>
<div class="a" style="left:232px;top:511px;width:74px;height:19px;background:#808080"></div>
<div class="a" style="left:224px;top:511px;width:8px;height:19px;background:#d2691e"></div>
<div class="a" style="left:694px;top:511px;width:0px;height:19px;background:#dda0dd"></div>
<div class="a" style="left:694px;top:511px;width:2px;height:19px;background:#87ceeb"></div>
<div class="a dom" style="left:111px;top:510px;width:120px;text-align:right;color:#000;letter-spacing:0.6px">673</div>
<div class="a dom" style="left:185px;top:510px;width:120px;text-align:right;color:#fff;letter-spacing:0.6px">4701,75</div>
<div class="a dom" style="left:293px;top:510px;width:120px;text-align:right;color:#fff;letter-spacing:0.6px">78</div>
<div class="a dom" style="left:401px;top:510px;width:120px;text-align:right;color:#0000ff;letter-spacing:0.6px">77</div>
<div class="a dom" style="left:573px;top:510px;width:120px;text-align:right;color:#8b0000;letter-spacing:0.6px">0</div>
<div class="a dom" style="left:637px;top:510px;width:120px;text-align:right;color:#0000ff;letter-spacing:0.6px">77</div>
<div class="a" style="left:306px;top:531px;width:54px;height:19px;background:#00008b"></div>
<div class="a" style="left:360px;top:531px;width:54px;height:19px;background:#00008b"></div>
<div class="a" style="left:522px;top:531px;width:54px;height:19px;background:#8b0000"></div>
<div class="a" style="left:576px;top:531px;width:54px;height:19px;background:#8b0000"></div>
<div class="a" style="left:232px;top:531px;width:74px;height:19px;background:#808080"></div>
<div class="a" style="left:224px;top:531px;width:8px;height:19px;background:#d2691e"></div>
<div class="a" style="left:694px;top:531px;width:0px;height:19px;background:#dda0dd"></div>
<div class="a dom" style="left:111px;top:530px;width:120px;text-align:right;color:#000;letter-spacing:0.6px">607</div>
<div class="a dom" style="left:185px;top:530px;width:120px;text-align:right;color:#fff;letter-spacing:0.6px">4701,50</div>
<div class="a dom" style="left:293px;top:530px;width:120px;text-align:right;color:#fff;letter-spacing:0.6px">73</div>
<div class="a dom" style="left:573px;top:530px;width:120px;text-align:right;color:#8b0000;letter-spacing:0.6px">0</div>
<div class="a" style="left:306px;top:551px;width:54px;height:19px;background:#00008b"></div>
<div class="a" style="left:360px;top:551px;width:54px;height:19px;background:#00008b"></div>
<div class="a" style="left:522px;top:551px;width:54px;height:19px;background:#8b0000"></div>
<div class="a" style="left:576px;top:551px;width:54px;height:19px;background:#8b0000"></div>
<div class="a" style="left:232px;top:551px;width:74px;height:19px;background:#808080"></div>
<div class="a" style="left:224px;top:551px;width:8px;height:19px;background:#d2691e"></div>
<div class="a dom" style="left:111px;top:550px;width:120px;text-align:right;color:#000;letter-spacing:0.6px">604</div>
<div class="a dom" style="left:185px;top:550px;width:120px;text-align:right;color:#fff;letter-spacing:0.6px">4701,25</div>
<div class="a dom" style="left:293px;top:550px;width:120px;text-align:right;color:#fff;letter-spacing:0.6px">39</div>
<div class="a" style="left:306px;top:571px;width:54px;height:19px;background:#00008b"></div>
<div class="a" style="left:360px;top:571px;width:54px;height:19px;background:#00008b"></div>
<div class="a" style="left:522px;top:571px;width:54px;height:19px;background:#8b0000"></div>
<div class="a" style="left:576px;top:571px;width:54px;height:19px;background:#8b0000"></div>
<div class="a" style="left:232px;top:571px;width:74px;height:19px;background:#808080"></div>
<div class="a" style="left:223px;top:571px;width:9px;height:19px;background:#d2691e"></div>
<div class="a dom" style="left:111px;top:570px;width:120px;text-align:right;color:#000;letter-spacing:0.6px">679</div>
<div class="a dom" style="left:185px;top:570px;width:120px;text-align:right;color:#fff;letter-spacing:0.6px">4701,00</div>
<div class="a dom" style="left:293px;top:570px;width:120px;text-align:right;color:#fff;letter-spacing:0.6px">89</div>
<div class="a" style="left:306px;top:591px;width:54px;height:19px;background:#00008b"></div>
<div class="a" style="left:360px;top:591px;width:54px;height:19px;background:#00008b"></div>
<div class="a" style="left:522px;top:591px;width:54px;height:19px;background:#8b0000"></div>
<div class="a" style="left:576px;top:591px;width:54px;height:19px;background:#8b0000"></div>
<div class="a" style="left:232px;top:591px;width:74px;height:19px;background:#808080"></div>
<div class="a" style="left:306px;top:611px;width:54px;height:19px;background:#00008b"></div>
<div class="a" style="left:360px;top:611px;width:54px;height:19px;background:#00008b"></div>
<div class="a" style="left:522px;top:611px;width:54px;height:19px;background:#8b0000"></div>
<div class="a" style="left:576px;top:611px;width:54px;height:19px;background:#8b0000"></div>
<div class="a" style="left:232px;top:611px;width:74px;height:19px;background:#808080"></div>
<div class="a" style="left:306px;top:631px;width:54px;height:19px;background:#00008b"></div>
<div class="a" style="left:360px;top:631px;width:54px;height:19px;background:#00008b"></div>
<div class="a" style="left:522px;top:631px;width:54px;height:19px;background:#8b0000"></div>
<div class="a" style="left:576px;top:631px;width:54px;height:19px;background:#8b0000"></div>
<div class="a" style="left:232px;top:631px;width:74px;height:19px;background:#808080"></div>
<div class="a" style="left:306px;top:651px;width:54px;height:19px;background:#00008b"></div>
<div class="a" style="left:360px;top:651px;width:54px;height:19px;background:#00008b"></div>
<div class="a" style="left:522px;top:651px;width:54px;height:19px;background:#8b0000"></div>
<div class="a" style="left:576px;top:651px;width:54px;height:19px;background:#8b0000"></div>
<div class="a" style="left:232px;top:651px;width:74px;height:19px;background:#808080"></div>
<div class="a" style="left:306px;top:671px;width:54px;height:19px;background:#00008b"></div>
<div class="a" style="left:360px;top:671px;width:54px;height:19px;background:#00008b"></div>
<div class="a" style="left:522px;top:671px;width:54px;height:19px;background:#8b0000"></div>
<div class="a" style="left:576px;top:671px;width:54px;height:19px;background:#8b0000"></div>
<div class="a" style="left:232px;top:671px;width:74px;height:19px;background:#808080"></div>
<div class="a" style="left:104px;top:0px;width:1px;height:685px;background:#a9a9a9"></div>
<div class="a" style="left:168px;top:0px;width:1px;height:685px;background:#a9a9a9"></div>
<div class="a" style="left:232px;top:0px;width:1px;height:685px;background:#a9a9a9"></div>
<div class="a" style="left:306px;top:0px;width:1px;height:685px;background:#a9a9a9"></div>
<div class="a" style="left:360px;top:0px;width:1px;height:685px;background:#a9a9a9"></div>
<div class="a" style="left:414px;top:0px;width:1px;height:685px;background:#a9a9a9"></div>
<div class="a" style="left:468px;top:0px;width:1px;height:685px;background:#a9a9a9"></div>
<div class="a" style="left:522px;top:0px;width:1px;height:685px;background:#a9a9a9"></div>
<div class="a" style="left:576px;top:0px;width:1px;height:685px;background:#a9a9a9"></div>
<div class="a" style="left:630px;top:0px;width:1px;height:685px;background:#a9a9a9"></div>
<div class="a" style="left:694px;top:0px;width:1px;height:685px;background:#a9a9a9"></div>
<div class="a" style="left:0px;top:10px;width:758px;height:1px;background:#a9a9a9"></div>
<div class="a" style="left:0px;top:30px;width:758px;height:1px;background:#a9a9a9"></div>
<div class="a" style="left:0px;top:50px;width:758px;height:1px;background:#a9a9a9"></div>
<div class="a" style="left:0px;top:70px;width:758px;height:1px;background:#a9a9a9"></div>
<div class="a" style="left:0px;top:90px;width:758px;height:1px;background:#a9a9a9"></div>
<div class="a" style="left:0px;top:110px;width:758px;height:1px;background:#a9a9a9"></div>
<div class="a" style="left:0px;top:130px;width:758px;height:1px;background:#a9a9a9"></div>
<div class="a" style="left:0px;top:150px;width:758px;height:1px;background:#a9a9a9"></div>
<div class="a" style="left:0px;top:170px;width:758px;height:1px;background:#a9a9a9"></div>
<div class="a" style="left:0px;top:190px;width:758px;height:1px;background:#a9a9a9"></div>
<div class="a" style="left:0px;top:210px;width:758px;height:1px;background:#a9a9a9"></div>
<div class="a" style="left:0px;top:230px;width:758px;height:1px;background:#a9a9a9"></div>
<div class="a" style="left:0px;top:250px;width:758px;height:1px;background:#a9a9a9"></div>
<div class="a" style="left:0px;top:270px;width:758px;height:1px;background:#a9a9a9"></div>
<div class="a" style="left:0px;top:290px;width:758px;height:1px;background:#a9a9a9"></div>
<div class="a" style="left:0px;top:310px;width:758px;height:1px;background:#a9a9a9"></div>
<div class="a" style="left:0px;top:330px;width:758px;height:1px;background:#a9a9a9"></div>
<div class="a" style="left:0px;top:350px;width:758px;height:1px;background:#a9a9a9"></div>
<div class="a" style="left:0px;top:370px;width:758px;height:1px;background:#a9a9a9"></div>
<div class="a" style="left:0px;top:390px;width:758px;height:1px;background:#a9a9a9"></div>
<div class="a" style="left:0px;top:410px;width:758px;height:1px;background:#a9a9a9"></div>
<div class="a" style="left:0px;top:430px;width:758px;height:1px;background:#a9a9a9"></div>
<div class="a" style="left:0px;top:450px;width:758px;height:1px;background:#a9a9a9"></div>
<div class="a" style="left:0px;top:470px;width:758px;height:1px;background:#a9a9a9"></div>
<div class="a" style="left:0px;top:490px;width:758px;height:1px;background:#a9a9a9"></div>
<div class="a" style="left:0px;top:510px;width:758px;height:1px;background:#a9a9a9"></div>
<div class="a" style="left:0px;top:530px;width:758px;height:1px;background:#a9a9a9"></div>
<div class="a" style="left:0px;top:550px;width:758px;height:1px;background:#a9a9a9"></div>
<div class="a" style="left:0px;top:570px;width:758px;height:1px;background:#a9a9a9"></div>
<div class="a" style="left:0px;top:590px;width:758px;height:1px;background:#a9a9a9"></div>
<div class="a" style="left:0px;top:610px;width:758px;height:1px;background:#a9a9a9"></div>
<div class="a" style="left:0px;top:630px;width:758px;height:1px;background:#a9a9a9"></div>
<div class="a" style="left:0px;top:650px;width:758px;height:1px;background:#a9a9a9"></div>
<div class="a" style="left:0px;top:670px;width:758px;height:1px;background:#a9a9a9"></div>
<div class="a" style="left:0px;top:409px;width:758px;height:2px;background:#000"></div>
</div>
<div class="a" style="left:286px;top:650px;width:1920px;height:490px;background:#323236;"></div>
<div class="a" style="left:286px;top:650px;width:1920px;height:30px;background:#4b4b4b;"></div>
<div class="a" style="left:287px;top:651px;width:60px;height:28px;background:linear-gradient(#a11d24,#6c1116);color:#fff;font-size:19px;line-height:28px;padding-left:8px">Chart</div>
<div class="a" style="left:370px;top:654px;width:123px;height:22px;background:#3a3a3e;"></div>
<div class="a" style="left:377px;top:656px;font-size:15px;line-height:18px;color:#d0d0d0">NQ 12-16</div>
<svg class="a" style="left:471px;top:659px" width="14" height="12"><path d="M2 3L7 8L12 3" stroke="#ccc" stroke-width="2.2" fill="none"/></svg>
<svg class="a" style="left:499px;top:655px" width="20" height="20"><circle cx="12" cy="8" r="5" stroke="#999" stroke-width="2.2" fill="none"/><path d="M8.5 11.5L3 17" stroke="#999" stroke-width="3" stroke-linecap="round"/></svg>
<div class="a" style="left:535px;top:654px;width:123px;height:22px;background:#3a3a3e;"></div>
<div class="a" style="left:542px;top:656px;font-size:15px;line-height:18px;color:#d0d0d0">150 Tick</div>
<svg class="a" style="left:636px;top:659px" width="14" height="12"><path d="M2 3L7 8L12 3" stroke="#ccc" stroke-width="2.2" fill="none"/></svg>
<svg class="a" style="left:679px;top:652px" width="22" height="26"><path d="M4 6V24M11 2V22M18 7V23" stroke="#ccc" stroke-width="1.2"/><rect x="2" y="9" width="4" height="12" fill="#ddd"/><rect x="9" y="5" width="4" height="14" fill="#ddd"/><rect x="16" y="10" width="4" height="11" fill="#ddd"/></svg>
<svg class="a" style="left:724px;top:652px" width="24" height="24"><path d="M3 21L5 15L17 3L21 7L9 19Z" fill="#ccc"/></svg>
<svg class="a" style="left:762px;top:653px" width="24" height="24"><circle cx="9" cy="9" r="7" stroke="#ddd" stroke-width="1.8" fill="none"/><path d="M5 9H13M9 5V13" stroke="#ddd" stroke-width="1.8"/><path d="M14 14L21 21" stroke="#ddd" stroke-width="3.2" stroke-linecap="round"/></svg>
<svg class="a" style="left:797px;top:653px" width="24" height="24"><circle cx="9" cy="9" r="7" stroke="#5c5c5c" stroke-width="1.8" fill="none"/><path d="M5 9H13" stroke="#5c5c5c" stroke-width="1.8"/><path d="M14 14L21 21" stroke="#5c5c5c" stroke-width="3.2" stroke-linecap="round"/></svg>
<div class="a" style="left:2086px;top:656px;width:18px;height:19px;background:linear-gradient(#c8c8c8,#9a9a9a);border-radius:2px"></div>
<div class="a" style="left:2110px;top:656px;width:18px;height:19px;background:linear-gradient(#c8c8c8,#9a9a9a);border-radius:2px"></div>
<svg class="a" style="left:2134px;top:656px" width="19" height="19"><rect x="0.5" y="0.5" width="18" height="18" fill="#3a3a3a" stroke="#aaa"/><path d="M4 14H14" stroke="#ddd" stroke-width="2"/></svg>
<svg class="a" style="left:2158px;top:656px" width="19" height="19"><rect x="0.5" y="0.5" width="18" height="18" fill="#3a3a3a" stroke="#aaa"/><rect x="3.5" y="3.5" width="11" height="11" stroke="#ddd" stroke-width="1.6" fill="none"/><path d="M3 5H15" stroke="#ddd" stroke-width="2"/></svg>
<svg class="a" style="left:2182px;top:656px" width="19" height="19"><rect x="0.5" y="0.5" width="18" height="18" fill="#3a3a3a" stroke="#aaa"/><path d="M4 4L14 14M14 4L4 14" stroke="#eee" stroke-width="2.6"/></svg>
<div class="a" style="left:295px;top:687px;width:1904px;height:453px;background:#3a3a3d;"></div>
<div class="a" style="left:296px;top:688px;width:1902px;height:452px;background:#222222;"></div>
<svg class="a" style="left:0;top:0" width="2509" height="1140"><path d="M333.5 689V1140M403.5 689V1140M473.5 689V1140M543.5 689V1140M613.5 689V1140M773.5 689V1140M843.5 689V1140M913.5 689V1140M983.5 689V1140M1053.5 689V1140M1123.5 689V1140M1193.5 689V1140M1263.5 689V1140M1333.5 689V1140M1403.5 689V1140M1473.5 689V1140M1543.5 689V1140M1613.5 689V1140M1683.5 689V1140M1753.5 689V1140M1823.5 689V1140M1893.5 689V1140M1963.5 689V1140M2033.5 689V1140M2103.5 689V1140" stroke="#4a4a4a" stroke-width="1" stroke-dasharray="3 3"/><path d="M683.5 689V1140" stroke="#9a9a9a" stroke-width="1" stroke-dasharray="3 3"/><path d="M296 723.5H2136M296 858.5H2136M296 994.5H2136M296 1130.5H2136" stroke="#4a4a4a" stroke-width="1" stroke-dasharray="3 3"/><path d="M2136.5 689V1140" stroke="#cfcfcf" stroke-width="1"/><path d="M313.5 825V870" stroke="#e8e8e8" stroke-width="1"/><rect x="310" y="825" width="7" height="45" fill="#ff0000" stroke="#e8e8e8" stroke-width="0.6"/><path d="M323.5 870V893" stroke="#e8e8e8" stroke-width="1"/><rect x="320" y="870" width="7" height="17" fill="#ff0000" stroke="#e8e8e8" stroke-width="0.6"/><path d="M333.5 859V893" stroke="#e8e8e8" stroke-width="1"/><rect x="330" y="887" width="7" height="5" fill="#ff0000" stroke="#e8e8e8" stroke-width="0.6"/><path d="M343.5 892V921" stroke="#e8e8e8" stroke-width="1"/><rect x="340" y="892" width="7" height="6" fill="#ff0000" stroke="#e8e8e8" stroke-width="0.6"/><path d="M353.5 898V932" stroke="#e8e8e8" stroke-width="1"/><rect x="350" y="898" width="7" height="23" fill="#ff0000" stroke="#e8e8e8" stroke-width="0.6"/><path d="M363.5 881V921" stroke="#e8e8e8" stroke-width="1"/><rect x="360" y="898" width="7" height="23" fill="#32cd32" stroke="#e8e8e8" stroke-width="0.6"/><path d="M373.5 876V904" stroke="#e8e8e8" stroke-width="1"/><path d="M369 892.5H378" stroke="#e8e8e8" stroke-width="1"/><path d="M383.5 865V909" stroke="#e8e8e8" stroke-width="1"/><rect x="380" y="865" width="7" height="27" fill="#32cd32" stroke="#e8e8e8" stroke-width="0.6"/><path d="M393.5 825V865" stroke="#e8e8e8" stroke-width="1"/><rect x="390" y="842" width="7" height="23" fill="#32cd32" stroke="#e8e8e8" stroke-width="0.6"/><path d="M403.5 836V870" stroke="#e8e8e8" stroke-width="1"/><rect x="400" y="836" width="7" height="6" fill="#32cd32" stroke="#e8e8e8" stroke-width="0.6"/><path d="M413.5 820V848" stroke="#e8e8e8" stroke-width="1"/><rect x="410" y="836" width="7" height="6" fill="#ff0000" stroke="#e8e8e8" stroke-width="0.6"/><path d="M423.5 802V848" stroke="#e8e8e8" stroke-width="1"/><rect x="420" y="802" width="7" height="40" fill="#32cd32" stroke="#e8e8e8" stroke-width="0.6"/><path d="M433.5 792V831" stroke="#e8e8e8" stroke-width="1"/><path d="M429 802.5H438" stroke="#e8e8e8" stroke-width="1"/><path d="M443.5 780V802" stroke="#e8e8e8" stroke-width="1"/><rect x="440" y="785" width="7" height="17" fill="#32cd32" stroke="#e8e8e8" stroke-width="0.6"/><path d="M453.5 769V785" stroke="#e8e8e8" stroke-width="1"/><rect x="450" y="775" width="7" height="10" fill="#32cd32" stroke="#e8e8e8" stroke-width="0.6"/><path d="M463.5 763V797" stroke="#e8e8e8" stroke-width="1"/><path d="M459 775.5H468" stroke="#e8e8e8" stroke-width="1"/><path d="M473.5 735V780" stroke="#e8e8e8" stroke-width="1"/><rect x="470" y="745" width="7" height="35" fill="#32cd32" stroke="#e8e8e8" stroke-width="0.6"/><path d="M483.5 745V785" stroke="#e8e8e8" stroke-width="1"/><rect x="480" y="745" width="7" height="40" fill="#ff0000" stroke="#e8e8e8" stroke-width="0.6"/><path d="M493.5 780V830" stroke="#e8e8e8" stroke-width="1"/><rect x="490" y="785" width="7" height="45" fill="#ff0000" stroke="#e8e8e8" stroke-width="0.6"/><path d="M503.5 820V842" stroke="#e8e8e8" stroke-width="1"/><rect x="500" y="830" width="7" height="6" fill="#32cd32" stroke="#e8e8e8" stroke-width="0.6"/><path d="M513.5 830V859" stroke="#e8e8e8" stroke-width="1"/><rect x="510" y="830" width="7" height="23" fill="#ff0000" stroke="#e8e8e8" stroke-width="0.6"/><path d="M523.5 853V898" stroke="#e8e8e8" stroke-width="1"/><rect x="520" y="853" width="7" height="17" fill="#ff0000" stroke="#e8e8e8" stroke-width="0.6"/><path d="M533.5 865V898" stroke="#e8e8e8" stroke-width="1"/><rect x="530" y="870" width="7" height="5" fill="#ff0000" stroke="#e8e8e8" stroke-width="0.6"/><path d="M543.5 870V887" stroke="#e8e8e8" stroke-width="1"/><rect x="540" y="870" width="7" height="17" fill="#ff0000" stroke="#e8e8e8" stroke-width="0.6"/><path d="M553.5 881V909" stroke="#e8e8e8" stroke-width="1"/><rect x="550" y="887" width="7" height="17" fill="#ff0000" stroke="#e8e8e8" stroke-width="0.6"/><path d="M563.5 758V909" stroke="#e8e8e8" stroke-width="1"/><rect x="560" y="792" width="7" height="112" fill="#32cd32" stroke="#e8e8e8" stroke-width="0.6"/><path d="M573.5 774V808" stroke="#e8e8e8" stroke-width="1"/><rect x="570" y="774" width="7" height="18" fill="#32cd32" stroke="#e8e8e8" stroke-width="0.6"/><path d="M583.5 774V814" stroke="#e8e8e8" stroke-width="1"/><rect x="580" y="774" width="7" height="34" fill="#ff0000" stroke="#e8e8e8" stroke-width="0.6"/><path d="M593.5 808V853" stroke="#e8e8e8" stroke-width="1"/><rect x="590" y="808" width="7" height="28" fill="#ff0000" stroke="#e8e8e8" stroke-width="0.6"/><path d="M603.5 786V836" stroke="#e8e8e8" stroke-width="1"/><rect x="600" y="797" width="7" height="39" fill="#32cd32" stroke="#e8e8e8" stroke-width="0.6"/><path d="M613.5 775V808" stroke="#e8e8e8" stroke-width="1"/><rect x="610" y="785" width="7" height="12" fill="#32cd32" stroke="#e8e8e8" stroke-width="0.6"/><path d="M623.5 758V792" stroke="#e8e8e8" stroke-width="1"/><rect x="620" y="768" width="7" height="17" fill="#32cd32" stroke="#e8e8e8" stroke-width="0.6"/><path d="M633.5 741V803" stroke="#e8e8e8" stroke-width="1"/><rect x="630" y="768" width="7" height="17" fill="#ff0000" stroke="#e8e8e8" stroke-width="0.6"/><path d="M643.5 775V836" stroke="#e8e8e8" stroke-width="1"/><rect x="640" y="785" width="7" height="17" fill="#ff0000" stroke="#e8e8e8" stroke-width="0.6"/><path d="M653.5 786V820" stroke="#e8e8e8" stroke-width="1"/><rect x="650" y="792" width="7" height="10" fill="#32cd32" stroke="#e8e8e8" stroke-width="0.6"/><path d="M663.5 792V853" stroke="#e8e8e8" stroke-width="1"/><rect x="660" y="792" width="7" height="44" fill="#ff0000" stroke="#e8e8e8" stroke-width="0.6"/><path d="M673.5 797V842" stroke="#e8e8e8" stroke-width="1"/><rect x="670" y="797" width="7" height="39" fill="#32cd32" stroke="#e8e8e8" stroke-width="0.6"/><path d="M683.5 786V825" stroke="#e8e8e8" stroke-width="1"/><rect x="680" y="797" width="7" height="28" fill="#ff0000" stroke="#e8e8e8" stroke-width="0.6"/><rect x="2110" y="1096" width="7" height="44" fill="#32cd32"/><path d="M2123.5 1085V1107M2119 1100H2128" stroke="#ddd" stroke-width="1"/><path d="M2136 724.0H2141" stroke="#ccc" stroke-width="1"/><text x="2145" y="729.0" font-size="13" fill="#d0d0d0" font-family="Liberation Sans">4724,00</text><path d="M2136 769.2H2141" stroke="#ccc" stroke-width="1"/><text x="2145" y="774.2" font-size="13" fill="#d0d0d0" font-family="Liberation Sans">4722,00</text><path d="M2136 814.4H2141" stroke="#ccc" stroke-width="1"/><text x="2145" y="819.4" font-size="13" fill="#d0d0d0" font-family="Liberation Sans">4720,00</text><path d="M2136 859.6H2141" stroke="#ccc" stroke-width="1"/><text x="2145" y="864.6" font-size="13" fill="#d0d0d0" font-family="Liberation Sans">4718,00</text><path d="M2136 904.8H2141" stroke="#ccc" stroke-width="1"/><text x="2145" y="909.8" font-size="13" fill="#d0d0d0" font-family="Liberation Sans">4716,00</text><path d="M2136 950.0H2141" stroke="#ccc" stroke-width="1"/><text x="2145" y="955.0" font-size="13" fill="#d0d0d0" font-family="Liberation Sans">4714,00</text><path d="M2136 995.2H2141" stroke="#ccc" stroke-width="1"/><text x="2145" y="1000.2" font-size="13" fill="#d0d0d0" font-family="Liberation Sans">4712,00</text><path d="M2136 1040.4H2141" stroke="#ccc" stroke-width="1"/><text x="2145" y="1045.4" font-size="13" fill="#d0d0d0" font-family="Liberation Sans">4710,00</text><path d="M2136 1085.6H2141" stroke="#ccc" stroke-width="1"/><text x="2145" y="1090.6" font-size="13" fill="#d0d0d0" font-family="Liberation Sans">4708,00</text><path d="M2136 1131H2141" stroke="#ccc"/><text x="2145" y="1136" font-size="13" fill="#d0d0d0" font-family="Liberation Sans">4706,00</text><path d="M2132 1103L2141 1094H2196V1112H2141Z" fill="#000" stroke="#ccc" stroke-width="1"/><text x="2145" y="1108" font-size="13" fill="#fff" font-family="Liberation Sans">4707,25</text></svg>
<div class="a" style="left:301px;top:693px;font-size:13px;line-height:16px;color:#e0e0e0;white-space:nowrap">JT_v5_DepthSales(NQ 12-16 (150 Tick)), JT_v5_DepthSales_Live(NQ 12-16 (150 Tick)), JT</div>
<div class="a" style="left:838px;top:556px;width:825px;height:584px;background:#2d2d30;"></div>
<div class="a" style="left:838px;top:556px;width:825px;height:29px;background:#4f4f4f;"></div>
<div class="a" style="left:848px;top:559px;font-size:19px;line-height:24px;color:#e6e6e6">Indicators</div>
<svg class="a" style="left:1611px;top:560px" width="48" height="24"><rect x="1.5" y="1.5" width="20" height="20" fill="none" stroke="#ccc" stroke-width="1"/><text x="11.5" y="18" font-size="17" text-anchor="middle" fill="#ddd" font-family="Liberation Sans">?</text><rect x="25.5" y="1.5" width="20" height="20" fill="none" stroke="#ccc" stroke-width="1"/><path d="M30 6L41 17M41 6L30 17" stroke="#ddd" stroke-width="3"/></svg>
<div class="a" style="left:848px;top:595px;width:331px;height:253px;background:#3a3a3d;"></div>
<div class="a" style="left:849px;top:596px;width:329px;height:251px;background:#2d2d30;"></div>
<div class="a" style="left:849px;top:596px;width:310px;height:32px;background:#1e1e1e;"></div>
<div class="a" style="left:1159px;top:596px;width:19px;height:32px;background:#1e1e1e;"></div>
<div class="a" style="left:1158px;top:596px;width:1px;height:32px;background:#2a2a2a;"></div>
<div class="a dk" style="left:857px;top:603px;font-size:15px">Available</div>
<div class="a" style="left:1141px;top:600px;font-family:'Liberation Serif',serif;font-style:italic;font-weight:bold;font-size:19px;color:#ddd">i</div>
<svg class="a" style="left:1161px;top:598px" width="16" height="28"><path d="M3 9L8 4L13 9Z M3 18H13L8 23Z" fill="#ddd"/></svg>
<div class="a" style="left:849px;top:628px;width:329px;height:1px;background:#3a3a3d;"></div>
<div class="a" style="left:1159px;top:629px;width:19px;height:218px;background:#2a2a2c;"></div>
<div class="a" style="left:1160px;top:690px;width:17px;height:25px;background:#5a5a5a;"></div>
<div class="a" style="left:1162px;top:692px;width:13px;height:21px;background:#3c3c3c;"></div>
<div class="a" style="left:850px;top:706px;width:308px;height:22px;background:#3c3c3f;"></div>
<div class="a dk" style="left:857px;top:641px;font-size:14.7px">Fisher transform</div>
<div class="a dk" style="left:857px;top:663px;font-size:14.7px">FOSC</div>
<div class="a dk" style="left:857px;top:685px;font-size:14.7px">HMA</div>
<div class="a dk" style="left:857px;top:707px;font-size:14.7px">JT_v5_DepthSales</div>
<div class="a dk" style="left:857px;top:729px;font-size:14.7px">JT_v5_DepthSales_Live</div>
<div class="a dk" style="left:857px;top:751px;font-size:14.7px">JT_v5_RTape</div>
<div class="a dk" style="left:857px;top:773px;font-size:14.7px">JT_v5_STape</div>
<div class="a dk" style="left:857px;top:795px;font-size:14.7px">KAMA</div>
<div class="a dk" style="left:857px;top:817px;font-size:14.7px">Keltner channel</div>
<div class="a" style="left:848px;top:859px;width:331px;height:211px;background:#3a3a3d;"></div>
<div class="a" style="left:849px;top:860px;width:329px;height:209px;background:#2d2d30;"></div>
<div class="a" style="left:849px;top:860px;width:329px;height:32px;background:#1e1e1e;"></div>
<div class="a dk" style="left:857px;top:867px;font-size:15px">Configured</div>
<div class="a dk" style="left:857px;top:902px;font-size:14.7px">JT_v5_DepthSales(NQ 12-16 (150 Tick))</div>
<div class="a dk" style="left:857px;top:924px;font-size:14.7px">JT_v5_DepthSales_Live(NQ 12-16 (150 Tick))</div>
<div class="a dk" style="left:857px;top:946px;font-size:14.7px">JT_v5_RTape(NQ 12-16 (150 Tick))</div>
<div class="a dk" style="left:857px;top:968px;font-size:14.7px">JT_v5_STape(NQ 12-16 (150 Tick))</div>
<div class="a" style="left:1010px;top:1044px;font-size:15px;line-height:18px;font-style:italic;color:#ddd">add</div>
<div class="a" style="left:1046px;top:1044px;font-size:15px;line-height:18px;font-style:italic;color:#777">remove</div>
<div class="a" style="left:1108px;top:1044px;font-size:15px;line-height:18px;font-style:italic;color:#ddd">up</div>
<div class="a" style="left:1136px;top:1044px;font-size:15px;line-height:18px;font-style:italic;color:#ddd">down</div>
<div class="a" style="left:1189px;top:595px;width:464px;height:475px;background:#3a3a3d;"></div>
<div class="a" style="left:1190px;top:596px;width:462px;height:473px;background:#2d2d30;"></div>
<div class="a" style="left:1190px;top:596px;width:443px;height:32px;background:#1e1e1e;"></div>
<div class="a" style="left:1634px;top:596px;width:18px;height:32px;background:#1e1e1e;"></div>
<div class="a dk" style="left:1198px;top:603px;font-size:15px">Properties</div>
<svg class="a" style="left:1636px;top:598px" width="16" height="28"><path d="M3 9L8 4L13 9Z M3 18H13L8 23Z" fill="#ddd"/></svg>
<div class="a" style="left:1634px;top:629px;width:18px;height:284px;background:#252527;"></div>
<div class="a" style="left:1635px;top:631px;width:11px;height:281px;background:linear-gradient(90deg,#6a6a6a,#4a4a4a)"></div>
<svg class="a" style="left:1196px;top:644px" width="14" height="10"><path d="M1 1H13L7 8Z" fill="#ccc"/></svg>
<div class="a" style="left:1221px;top:640px;font-size:15px;line-height:18px;font-weight:bold;color:#8a8a8a">Misc</div>
<div class="a" style="left:1411px;top:661px;width:1px;height:200px;background:#3c3c3f;"></div>
<div class="a pg" style="left:1228px;top:668px">ATMStrategyName</div>
<div class="a" style="left:1418px;top:666px;width:206px;height:22px;background:#9a9a9a;"></div>
<div class="a pg" style="left:1228px;top:696px">ATMStrategyState</div>
<div class="a" style="left:1418px;top:697px;width:15px;height:15px;background:#9a9a9a;"></div>
<div class="a pg" style="left:1228px;top:724px">CurrentAppearance</div>
<div class="a" style="left:1418px;top:722px;width:206px;height:22px;background:#9a9a9a;"></div>
<div class="a pg" style="left:1228px;top:752px">DisplaySchemeV5</div>
<div class="a" style="left:1418px;top:750px;width:206px;height:22px;background:#9a9a9a;"></div>
<div class="a" style="left:1426px;top:752px;font-size:15px;line-height:18px;color:#c8c8c8">Default</div>
<div class="a pg" style="left:1228px;top:780px">InsideSnapshotStyle</div>
<div class="a" style="left:1418px;top:781px;width:15px;height:15px;background:#9a9a9a;"></div>
<svg class="a" style="left:1418px;top:781px" width="15" height="15"><path d="M3 7L6 11L12 3" stroke="#555" stroke-width="1.5" fill="none"/></svg>
<div class="a pg" style="left:1228px;top:808px">SnapshotFilter</div>
<div class="a" style="left:1418px;top:806px;width:206px;height:22px;background:#9a9a9a;"></div>
<div class="a" style="left:1426px;top:808px;font-size:15px;line-height:18px;color:#c8c8c8">0</div>
<div class="a pg" style="left:1228px;top:838px">WindowPosition</div>
<svg class="a" style="left:1433px;top:841px" width="8" height="12"><path d="M1 1L7 6L1 11Z" fill="#ccc"/></svg>
<div class="a pg" style="left:1455px;top:838px;color:#707070">Wind…</div>
<div class="a dk" style="left:1528px;top:838px;color:#e8e8e8">Int32[] Array</div>
<svg class="a" style="left:1196px;top:873px" width="14" height="10"><path d="M1 1H13L7 8Z" fill="#ccc"/></svg>
<div class="a" style="left:1221px;top:869px;font-size:15px;line-height:18px;font-weight:bold;color:#8a8a8a">Data Series</div>
<div class="a" style="left:1411px;top:890px;width:1px;height:28px;background:#3c3c3f;"></div>
<div class="a pg" style="left:1228px;top:897px">Input series</div>
<div class="a" style="left:1418px;top:895px;width:206px;height:22px;background:#9a9a9a;"></div>
<div class="a" style="left:1426px;top:897px;font-size:15px;line-height:18px;color:#c8c8c8">Close</div>
<svg class="a" style="left:1196px;top:929px" width="14" height="10"><path d="M1 1H13L7 8Z" fill="#ccc"/></svg>
<div class="a" style="left:1221px;top:925px;font-size:15px;line-height:18px;font-weight:bold;color:#8a8a8a">Set up</div>
<div class="a" style="left:1411px;top:946px;width:1px;height:86px;background:#3c3c3f;"></div>
<div class="a pg" style="left:1228px;top:953px">Calculate</div>
<div class="a" style="left:1418px;top:951px;width:206px;height:22px;background:#9a9a9a;"></div>
<div class="a" style="left:1426px;top:953px;font-size:15px;line-height:18px;color:#c8c8c8">On each tick</div>
<svg class="a" style="left:1605px;top:957px" width="14" height="11"><path d="M2 2L7 7L12 2" stroke="#444" stroke-width="2" fill="none"/></svg>
<div class="a pg" style="left:1228px;top:981px">Label</div>
<div class="a" style="left:1418px;top:979px;width:206px;height:22px;background:#9a9a9a;"></div>
<div class="a" style="left:1426px;top:981px;font-size:15px;line-height:18px;color:#c8c8c8">JT_v5_DepthSales</div>
<div class="a pg" style="left:1228px;top:1009px">Maximum bars look back</div>
<div class="a" style="left:1418px;top:1007px;width:206px;height:22px;background:#9a9a9a;"></div>
<div class="a" style="left:1426px;top:1009px;font-size:15px;line-height:18px;color:#c8c8c8">256</div>
<svg class="a" style="left:1605px;top:1013px" width="14" height="11"><path d="M2 2L7 7L12 2" stroke="#444" stroke-width="2" fill="none"/></svg>
<div class="a" style="left:1587px;top:1044px;font-size:15px;line-height:18px;font-style:italic;color:#6a6a6a">preset</div>
<div class="a" style="left:1268px;top:1096px;width:122px;height:34px;background:#2d2d30;border:1px solid #4a4a4d;color:#e8e8e8;font-size:19px;line-height:32px;text-align:center">OK</div>
<div class="a" style="left:1399px;top:1096px;width:122px;height:34px;background:#2d2d30;border:1px solid #4a4a4d;color:#e8e8e8;font-size:19px;line-height:32px;text-align:center">Cancel</div>
<div class="a" style="left:1532px;top:1096px;width:122px;height:34px;background:#9a9a9a;border:1px solid #4a4a4d;color:#767676;font-size:19px;line-height:32px;text-align:center">Apply</div>
<div class="a" style="left:690px;top:1079px;font-family:'Liberation Serif',serif;font-style:italic;font-size:36px;line-height:40px;color:#ff2a2a;white-space:nowrap;letter-spacing:2.7px;word-spacing:-4px;text-shadow:0 0 2px #fff,0 0 3px #fff,0 0 5px #fff,0 0 8px rgba(255,255,255,0.8);-webkit-text-stroke:0.5px #ff2a2a">www.forex-warez.com, andreybbrv@gmail.com, Skype: andreybbrv</div>
</body></html>
